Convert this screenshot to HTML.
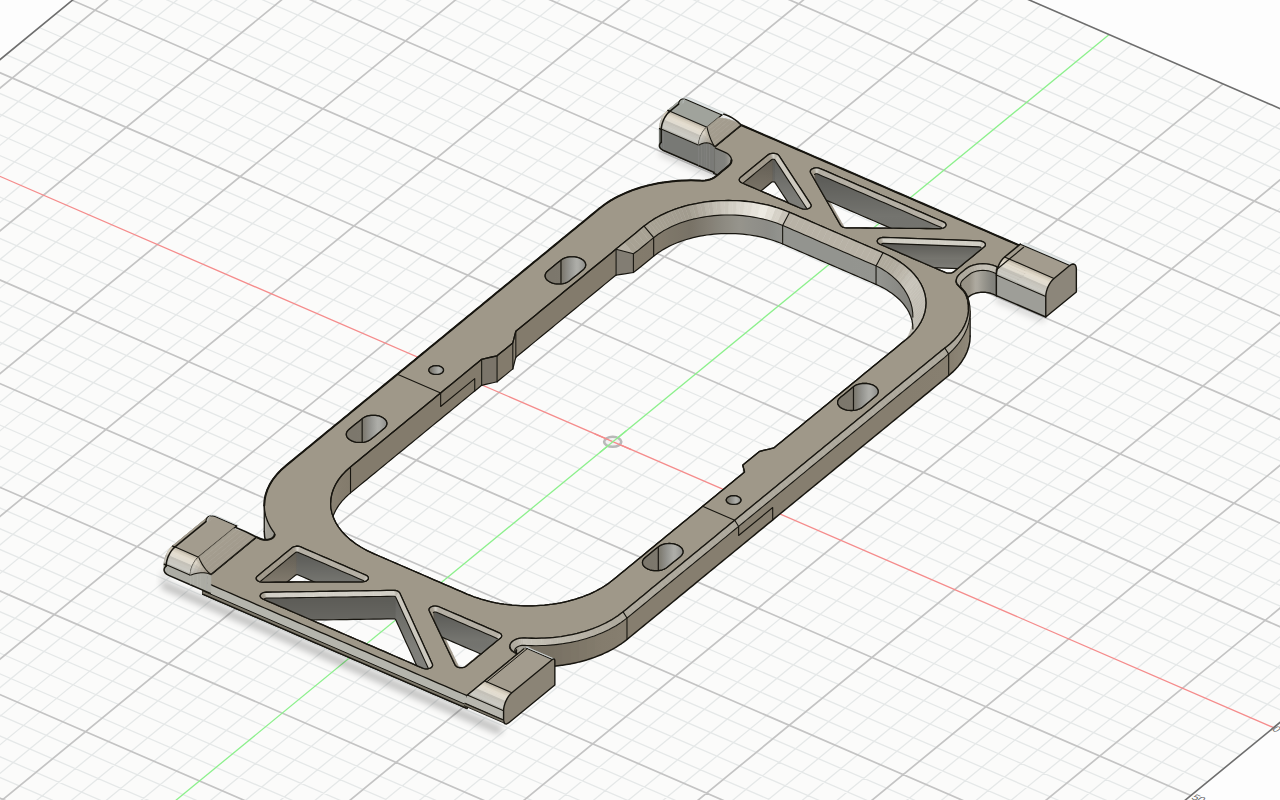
<!DOCTYPE html>
<html><head><meta charset="utf-8"><title>Viewport</title>
<style>
html,body{margin:0;padding:0;background:#fdfdfd;overflow:hidden}
body{width:1280px;height:800px;position:relative;font-family:"Liberation Sans",sans-serif}
svg{position:absolute;left:0;top:0;display:block}
</style></head><body>
<svg width="1280" height="800" viewBox="0 0 1280 800">
<polygon points="-605.92,556.71 760.88,1148.31 1769.82,320.54 403.02,-271.06" fill="#fbfbfa"/>
<path d="M-560.36,576.43 L448.58,-251.34 M-537.58,586.29 L471.36,-241.48 M-514.80,596.15 L494.14,-231.62 M-492.02,606.01 L516.92,-221.76 M-446.46,625.73 L562.48,-202.04 M-423.68,635.59 L585.26,-192.18 M-400.90,645.45 L608.04,-182.32 M-378.12,655.31 L630.82,-172.46 M-332.56,675.03 L676.38,-152.74 M-309.78,684.89 L699.16,-142.88 M-287.00,694.75 L721.94,-133.02 M-264.22,704.61 L744.72,-123.16 M-218.66,724.33 L790.28,-103.44 M-195.88,734.19 L813.06,-93.58 M-173.10,744.05 L835.84,-83.72 M-150.32,753.91 L858.62,-73.86 M-104.76,773.63 L904.18,-54.14 M-81.98,783.49 L926.96,-44.28 M-59.20,793.35 L949.74,-34.42 M-36.42,803.21 L972.52,-24.56 M9.14,822.93 L1018.08,-4.84 M31.92,832.79 L1040.86,5.02 M54.70,842.65 L1063.64,14.88 M77.48,852.51 L1086.42,24.74 M123.04,872.23 L1131.98,44.46 M145.82,882.09 L1154.76,54.32 M168.60,891.95 L1177.54,64.18 M191.38,901.81 L1200.32,74.04 M236.94,921.53 L1245.88,93.76 M259.72,931.39 L1268.66,103.62 M282.50,941.25 L1291.44,113.48 M305.28,951.11 L1314.22,123.34 M350.84,970.83 L1359.78,143.06 M373.62,980.69 L1382.56,152.92 M396.40,990.55 L1405.34,162.78 M419.18,1000.41 L1428.12,172.64 M464.74,1020.13 L1473.68,192.36 M487.52,1029.99 L1496.46,202.22 M510.30,1039.85 L1519.24,212.08 M533.08,1049.71 L1542.02,221.94 M578.64,1069.43 L1587.58,241.66 M601.42,1079.29 L1610.36,251.52 M624.20,1089.15 L1633.14,261.38 M646.98,1099.01 L1655.92,271.24 M692.54,1118.73 L1701.48,290.96 M715.32,1128.59 L1724.26,300.82 M738.10,1138.45 L1747.04,310.68 M-572.84,529.57 L793.96,1121.17 M-556.30,516.00 L810.50,1107.60 M-539.76,502.43 L827.04,1094.03 M-523.22,488.86 L843.58,1080.46 M-490.14,461.72 L876.66,1053.32 M-473.60,448.15 L893.20,1039.75 M-457.06,434.58 L909.74,1026.18 M-440.52,421.01 L926.28,1012.61 M-407.44,393.87 L959.36,985.47 M-390.90,380.30 L975.90,971.90 M-374.36,366.73 L992.44,958.33 M-357.82,353.16 L1008.98,944.76 M-324.74,326.02 L1042.06,917.62 M-308.20,312.45 L1058.60,904.05 M-291.66,298.88 L1075.14,890.48 M-275.12,285.31 L1091.68,876.91 M-242.04,258.17 L1124.76,849.77 M-225.50,244.60 L1141.30,836.20 M-208.96,231.03 L1157.84,822.63 M-192.42,217.46 L1174.38,809.06 M-159.34,190.32 L1207.46,781.92 M-142.80,176.75 L1224.00,768.35 M-126.26,163.18 L1240.54,754.78 M-109.72,149.61 L1257.08,741.21 M-76.64,122.47 L1290.16,714.07 M-60.10,108.90 L1306.70,700.50 M-43.56,95.33 L1323.24,686.93 M-27.02,81.76 L1339.78,673.36 M6.06,54.62 L1372.86,646.22 M22.60,41.05 L1389.40,632.65 M39.14,27.48 L1405.94,619.08 M55.68,13.91 L1422.48,605.51 M88.76,-13.23 L1455.56,578.37 M105.30,-26.80 L1472.10,564.80 M121.84,-40.37 L1488.64,551.23 M138.38,-53.94 L1505.18,537.66 M171.46,-81.08 L1538.26,510.52 M188.00,-94.65 L1554.80,496.95 M204.54,-108.22 L1571.34,483.38 M221.08,-121.79 L1587.88,469.81 M254.16,-148.93 L1620.96,442.67 M270.70,-162.50 L1637.50,429.10 M287.24,-176.07 L1654.04,415.53 M303.78,-189.64 L1670.58,401.96 M336.86,-216.78 L1703.66,374.82 M353.40,-230.35 L1720.20,361.25 M369.94,-243.92 L1736.74,347.68 M386.48,-257.49 L1753.28,334.11" stroke="#e5e8e8" stroke-width="1.3" fill="none"/>
<path d="M-583.14,566.57 L425.80,-261.20 M-469.24,615.87 L539.70,-211.90 M-355.34,665.17 L653.60,-162.60 M-241.44,714.47 L767.50,-113.30 M-127.54,763.77 L881.40,-64.00 M-13.64,813.07 L995.30,-14.70 M214.16,911.67 L1223.10,83.90 M328.06,960.97 L1337.00,133.20 M441.96,1010.27 L1450.90,182.50 M555.86,1059.57 L1564.80,231.80 M669.76,1108.87 L1678.70,281.10 M-589.38,543.14 L777.42,1134.74 M-506.68,475.29 L860.12,1066.89 M-423.98,407.44 L942.82,999.04 M-341.28,339.59 L1025.52,931.19 M-258.58,271.74 L1108.22,863.34 M-175.88,203.89 L1190.92,795.49 M-10.48,68.19 L1356.32,659.79 M72.22,0.34 L1439.02,591.94 M154.92,-67.51 L1521.72,524.09 M237.62,-135.36 L1604.42,456.24 M320.32,-203.21 L1687.12,388.39" stroke="#c4c4c4" stroke-width="1.7" fill="none"/>
<path d="M-93.18,136.04 L1273.62,727.64" stroke="#f58c8c" stroke-width="1.3" fill="none"/>
<path d="M100.26,862.37 L1109.20,34.60" stroke="#8cf08c" stroke-width="1.3" fill="none"/>
<polygon points="-605.92,556.71 760.88,1148.31 1769.82,320.54 403.02,-271.06" fill="none" stroke="#6e6e6e" stroke-width="1.6"/>
<ellipse cx="612.7" cy="441.8" rx="8.6" ry="5.0" fill="#f2f2f2" stroke="#b9b9b9" stroke-width="2.6"/>
<path d="M594.78,433.81 L631.22,449.59" stroke="#f58c8c" stroke-width="1.3"/>
<path d="M599.77,452.56 L626.23,430.84" stroke="#8cf08c" stroke-width="1.3"/>
<text transform="matrix(0.918 0.397 0.773 -0.634 1271.2 730.3) scale(1,-1)" font-family="Liberation Sans, sans-serif" font-size="10.5" fill="#6a6a6a">0</text>
<text transform="matrix(0.918 0.397 0.773 -0.634 1190.5 798.5) scale(1,-1)" font-family="Liberation Sans, sans-serif" font-size="10.5" fill="#6a6a6a">50</text>
<defs><filter id="blur" x="-20%" y="-50%" width="140%" height="200%"><feGaussianBlur stdDeviation="3.2"/></filter></defs>
<path d="M165.3,585.6 L497.9,729.6" stroke="#000" stroke-opacity="0.22" stroke-width="9" stroke-linecap="round" filter="url(#blur)" fill="none"/>
<path d="M662.3,153.0 L730.6,182.6" stroke="#000" stroke-opacity="0.14" stroke-width="7" stroke-linecap="round" filter="url(#blur)" fill="none"/>
<path d="M998.6,299.6 L1041.9,318.4" stroke="#000" stroke-opacity="0.14" stroke-width="7" stroke-linecap="round" filter="url(#blur)" fill="none"/>
<path d="M162.6,577.3 L192.4,552.8" stroke="#000" stroke-opacity="0.10" stroke-width="7" stroke-linecap="round" filter="url(#blur)" fill="none"/>
<defs><linearGradient id="vs" x1="0" y1="0" x2="0" y2="1"><stop offset="0" stop-color="#000" stop-opacity="0.24"/><stop offset="0.55" stop-color="#000" stop-opacity="0.02"/><stop offset="1" stop-color="#fff" stop-opacity="0.14"/></linearGradient>
<linearGradient id="g1" gradientUnits="userSpaceOnUse" x1="466.8" y1="0" x2="520.5" y2="0"><stop offset="0.000" stop-color="#b5b5ad"/><stop offset="0.233" stop-color="#969185"/><stop offset="0.462" stop-color="#969185"/><stop offset="0.691" stop-color="#969185"/><stop offset="0.920" stop-color="#969185"/><stop offset="1.000" stop-color="#969184"/></linearGradient>
<linearGradient id="g2" gradientUnits="userSpaceOnUse" x1="514.7" y1="0" x2="970.2" y2="0"><stop offset="0.000" stop-color="#968f81"/><stop offset="0.000" stop-color="#969082"/><stop offset="0.001" stop-color="#969083"/><stop offset="0.002" stop-color="#969084"/><stop offset="0.004" stop-color="#969185"/><stop offset="0.005" stop-color="#9d988c"/><stop offset="0.008" stop-color="#a4a095"/><stop offset="0.010" stop-color="#aca89d"/><stop offset="0.013" stop-color="#aca99f"/><stop offset="0.016" stop-color="#a5a298"/><stop offset="0.019" stop-color="#9d9a92"/><stop offset="0.022" stop-color="#97958d"/><stop offset="0.026" stop-color="#95948c"/><stop offset="0.027" stop-color="#96948c"/><stop offset="0.028" stop-color="#98968e"/><stop offset="0.028" stop-color="#99978f"/><stop offset="0.037" stop-color="#777063"/><stop offset="0.047" stop-color="#766f62"/><stop offset="0.066" stop-color="#777063"/><stop offset="0.085" stop-color="#787163"/><stop offset="0.086" stop-color="#797164"/><stop offset="0.086" stop-color="#797264"/><stop offset="0.104" stop-color="#7a7265"/><stop offset="0.105" stop-color="#7b7366"/><stop offset="0.105" stop-color="#7b7466"/><stop offset="0.123" stop-color="#7c7466"/><stop offset="0.123" stop-color="#7d7567"/><stop offset="0.132" stop-color="#7d7667"/><stop offset="0.140" stop-color="#7d7567"/><stop offset="0.141" stop-color="#7e7668"/><stop offset="0.142" stop-color="#7f7769"/><stop offset="0.158" stop-color="#7f7869"/><stop offset="0.159" stop-color="#80796a"/><stop offset="0.159" stop-color="#81796a"/><stop offset="0.175" stop-color="#817a6b"/><stop offset="0.176" stop-color="#827a6c"/><stop offset="0.176" stop-color="#837b6c"/><stop offset="0.192" stop-color="#847c6d"/><stop offset="0.222" stop-color="#857d6e"/><stop offset="0.235" stop-color="#867e6f"/><stop offset="0.437" stop-color="#867e6f"/><stop offset="0.645" stop-color="#867e6f"/><stop offset="0.853" stop-color="#867e6f"/><stop offset="0.953" stop-color="#877f70"/><stop offset="0.964" stop-color="#888071"/><stop offset="0.964" stop-color="#898172"/><stop offset="0.973" stop-color="#8a8273"/><stop offset="0.973" stop-color="#8a8374"/><stop offset="0.981" stop-color="#8b8374"/><stop offset="0.981" stop-color="#8c8475"/><stop offset="0.981" stop-color="#8c8576"/><stop offset="0.988" stop-color="#8d8576"/><stop offset="0.988" stop-color="#8e8677"/><stop offset="0.988" stop-color="#8e8778"/><stop offset="0.993" stop-color="#8f8778"/><stop offset="0.993" stop-color="#8f8879"/><stop offset="0.993" stop-color="#90897a"/><stop offset="0.997" stop-color="#918a7b"/><stop offset="0.997" stop-color="#928a7b"/><stop offset="0.999" stop-color="#928b7c"/><stop offset="0.999" stop-color="#938c7d"/><stop offset="0.999" stop-color="#948c7d"/><stop offset="1.000" stop-color="#938c7d"/><stop offset="1.000" stop-color="#948c7d"/><stop offset="1.000" stop-color="#948d7e"/></linearGradient>
<linearGradient id="g3" gradientUnits="userSpaceOnUse" x1="960.5" y1="0" x2="997.5" y2="0"><stop offset="0.000" stop-color="#968f81"/><stop offset="0.004" stop-color="#969081"/><stop offset="0.020" stop-color="#969083"/><stop offset="0.048" stop-color="#969184"/><stop offset="0.087" stop-color="#969185"/><stop offset="0.239" stop-color="#989387"/><stop offset="0.285" stop-color="#9e998e"/><stop offset="0.340" stop-color="#a6a196"/><stop offset="0.401" stop-color="#ada99f"/><stop offset="0.467" stop-color="#aba79e"/><stop offset="0.537" stop-color="#a3a097"/><stop offset="0.608" stop-color="#9b9990"/><stop offset="0.680" stop-color="#94928a"/><stop offset="0.750" stop-color="#8d8c85"/><stop offset="0.816" stop-color="#878680"/><stop offset="0.877" stop-color="#82827c"/><stop offset="0.986" stop-color="#82817c"/><stop offset="1.000" stop-color="#83837e"/></linearGradient>
<linearGradient id="g4" gradientUnits="userSpaceOnUse" x1="997.5" y1="0" x2="1024.7" y2="0"><stop offset="0.000" stop-color="#9a9589"/><stop offset="0.015" stop-color="#989387"/><stop offset="0.154" stop-color="#969185"/><stop offset="0.432" stop-color="#969185"/><stop offset="0.710" stop-color="#969185"/><stop offset="0.988" stop-color="#969185"/><stop offset="1.000" stop-color="#969184"/></linearGradient>
<linearGradient id="g5" gradientUnits="userSpaceOnUse" x1="713.9" y1="0" x2="731.5" y2="0"><stop offset="0.000" stop-color="#7f807b"/><stop offset="0.315" stop-color="#81817d"/><stop offset="0.604" stop-color="#82837e"/><stop offset="0.719" stop-color="#8a8984"/><stop offset="0.817" stop-color="#94938c"/><stop offset="0.895" stop-color="#999891"/><stop offset="0.953" stop-color="#9d9c94"/><stop offset="0.988" stop-color="#a1a098"/><stop offset="1.000" stop-color="#a3a29a"/></linearGradient>
<linearGradient id="g6" gradientUnits="userSpaceOnUse" x1="264.3" y1="0" x2="274.6" y2="0"><stop offset="0.000" stop-color="#afaca4"/><stop offset="0.032" stop-color="#aeaba3"/><stop offset="0.035" stop-color="#aca9a1"/><stop offset="0.037" stop-color="#aba8a0"/><stop offset="0.131" stop-color="#aaa79f"/><stop offset="0.137" stop-color="#a8a59d"/><stop offset="0.140" stop-color="#a7a49b"/><stop offset="0.297" stop-color="#a6a39a"/><stop offset="0.305" stop-color="#a4a198"/><stop offset="0.309" stop-color="#a3a097"/><stop offset="0.523" stop-color="#a3a097"/><stop offset="0.527" stop-color="#a29f96"/><stop offset="0.538" stop-color="#a09d94"/><stop offset="0.543" stop-color="#9f9c92"/><stop offset="0.793" stop-color="#9c9b94"/><stop offset="0.821" stop-color="#9c9a93"/><stop offset="0.834" stop-color="#9b9992"/><stop offset="0.840" stop-color="#9a9992"/><stop offset="0.921" stop-color="#9b9a93"/><stop offset="0.967" stop-color="#9e9d95"/><stop offset="0.994" stop-color="#a2a099"/><stop offset="1.000" stop-color="#a4a29b"/></linearGradient>
<clipPath id="c1"><path d="M373.61,553.62 L379.10,556.00 L384.60,558.38 L390.09,560.76 L395.59,563.13 L401.08,565.51 L406.57,567.89 L412.07,570.27 L417.56,572.65 L423.06,575.02 L428.55,577.40 L434.04,579.78 L439.54,582.16 L445.03,584.54 L450.53,586.91 L456.02,589.29 L461.51,591.67 L467.01,594.05 L470.41,595.40 L473.81,596.76 L477.38,597.95 L480.95,599.14 L484.66,600.16 L488.38,601.18 L492.21,602.02 L496.05,602.86 L499.99,603.53 L503.92,604.19 L507.93,604.66 L511.94,605.14 L516.00,605.42 L520.07,605.71 L524.15,605.81 L528.24,605.90 L532.32,605.81 L536.41,605.71 L540.47,605.43 L544.53,605.14 L548.54,604.66 L552.55,604.19 L556.49,603.53 L560.42,602.87 L564.26,602.02 L568.10,601.18 L571.81,600.16 L575.52,599.14 L579.09,597.95 L582.66,596.76 L586.06,595.40 L589.46,594.05 L592.67,592.54 L595.88,591.03 L598.88,589.38 L601.88,587.73 L604.66,585.94 L607.43,584.15 L609.96,582.23 L612.49,580.32 L616.62,576.94 L620.74,573.55 L624.87,570.17 L628.99,566.78 L633.12,563.40 L637.24,560.01 L641.37,556.63 L645.50,553.24 L649.62,549.86 L653.75,546.47 L657.87,543.09 L662.00,539.71 L666.12,536.32 L670.25,532.94 L674.37,529.55 L678.50,526.17 L682.62,522.78 L686.75,519.40 L690.88,516.01 L695.00,512.63 L699.13,509.24 L703.25,505.86 L707.38,502.47 L711.50,499.09 L715.63,495.70 L719.75,492.32 L723.88,488.94 L728.00,485.55 L732.13,482.17 L736.25,478.78 L740.38,475.40 L744.51,472.01 L743.67,468.56 L742.84,465.10 L746.21,462.33 L749.59,459.57 L752.96,456.80 L756.33,454.03 L759.71,451.26 L764.40,450.17 L769.10,449.08 L773.79,447.99 L777.92,444.59 L782.06,441.20 L786.19,437.81 L790.33,434.42 L794.46,431.03 L798.59,427.64 L802.73,424.24 L806.86,420.85 L811.00,417.46 L815.13,414.07 L819.26,410.68 L823.40,407.29 L827.53,403.89 L831.67,400.50 L835.80,397.11 L839.93,393.72 L844.07,390.33 L848.20,386.94 L852.34,383.54 L856.47,380.15 L860.60,376.76 L864.74,373.37 L868.87,369.98 L873.01,366.59 L877.14,363.19 L881.27,359.80 L885.41,356.41 L889.54,353.02 L893.68,349.63 L897.81,346.24 L901.94,342.85 L906.08,339.45 L908.35,337.43 L910.62,335.40 L912.62,333.28 L914.61,331.15 L916.32,328.94 L918.03,326.72 L919.45,324.44 L920.86,322.15 L921.97,319.81 L923.08,317.46 L923.88,315.07 L924.67,312.68 L925.15,310.26 L925.63,307.84 L925.79,305.41 L925.95,302.97 L925.79,300.54 L925.63,298.10 L925.15,295.68 L924.66,293.27 L923.86,290.88 L923.07,288.49 L921.95,286.14 L920.84,283.80 L919.43,281.51 L918.01,279.22 L916.30,277.01 L914.58,274.80 L912.58,272.67 L910.59,270.55 L908.31,268.52 L906.04,266.49 L903.51,264.58 L900.97,262.67 L898.20,260.88 L895.42,259.09 L892.42,257.43 L889.41,255.78 L886.20,254.27 L882.99,252.76 L877.50,250.38 L872.00,248.01 L866.51,245.63 L861.01,243.25 L855.52,240.87 L850.03,238.49 L844.53,236.12 L839.04,233.74 L833.54,231.36 L828.05,228.98 L822.56,226.60 L817.06,224.23 L811.57,221.85 L806.07,219.47 L800.58,217.09 L795.09,214.71 L789.59,212.34 L786.19,210.98 L782.79,209.63 L779.22,208.44 L775.65,207.25 L771.94,206.23 L768.22,205.21 L764.39,204.36 L760.55,203.52 L756.61,202.86 L752.68,202.20 L748.67,201.72 L744.66,201.25 L740.59,200.96 L736.53,200.67 L732.45,200.58 L728.36,200.48 L724.28,200.58 L720.19,200.67 L716.13,200.96 L712.07,201.25 L708.06,201.72 L704.05,202.20 L700.11,202.86 L696.18,203.52 L692.34,204.36 L688.50,205.21 L684.79,206.23 L681.08,207.25 L677.51,208.44 L673.94,209.63 L670.54,210.98 L667.14,212.33 L663.93,213.84 L660.72,215.35 L657.72,217.00 L654.72,218.66 L651.94,220.45 L649.17,222.24 L646.64,224.15 L644.11,226.06 L640.10,229.35 L636.09,232.64 L632.08,235.93 L628.07,239.22 L624.06,242.51 L620.05,245.80 L616.04,249.09 L612.03,252.38 L608.02,255.67 L604.01,258.96 L600.00,262.25 L595.99,265.54 L591.98,268.83 L587.97,272.12 L583.96,275.41 L579.95,278.70 L575.94,281.99 L571.94,285.28 L567.93,288.57 L563.92,291.86 L559.91,295.14 L555.90,298.43 L551.89,301.72 L547.88,305.01 L543.87,308.30 L539.86,311.59 L535.85,314.88 L531.84,318.17 L527.83,321.46 L523.82,324.75 L519.81,328.04 L515.80,331.33 L514.80,335.20 L513.79,339.07 L512.79,342.94 L508.86,346.16 L504.93,349.38 L501.01,352.60 L497.08,355.83 L491.93,357.00 L486.78,358.18 L481.64,359.36 L477.54,362.72 L473.44,366.08 L469.34,369.45 L465.25,372.81 L461.15,376.17 L457.05,379.53 L452.95,382.89 L448.86,386.25 L444.76,389.62 L440.66,392.98 L436.56,396.34 L432.47,399.70 L428.37,403.06 L424.27,406.42 L420.18,409.78 L416.08,413.15 L411.98,416.51 L407.88,419.87 L403.79,423.23 L399.69,426.59 L395.59,429.95 L391.49,433.32 L387.40,436.68 L383.30,440.04 L379.20,443.40 L375.11,446.76 L371.01,450.12 L366.91,453.48 L362.81,456.85 L358.72,460.21 L354.62,463.57 L350.52,466.93 L348.25,468.96 L345.98,470.98 L343.98,473.11 L341.99,475.23 L340.28,477.45 L338.56,479.66 L337.15,481.95 L335.74,484.23 L334.63,486.58 L333.52,488.92 L332.72,491.31 L331.93,493.70 L331.45,496.12 L330.97,498.54 L330.81,500.98 L330.65,503.41 L330.81,505.85 L330.97,508.28 L331.45,510.70 L331.94,513.12 L332.73,515.51 L333.53,517.90 L334.64,520.24 L335.76,522.59 L337.17,524.88 L338.59,527.16 L340.30,529.37 L342.02,531.59 L344.01,533.71 L346.01,535.84 L348.29,537.87 L350.56,539.89 L353.09,541.80 L355.62,543.72 L358.40,545.51 L361.18,547.30 L364.18,548.95 L367.19,550.60 L370.40,552.11 Z"/></clipPath>
<linearGradient id="g7" gradientUnits="userSpaceOnUse" x1="633.4" y1="0" x2="912.9" y2="0"><stop offset="0.000" stop-color="#827a6c"/><stop offset="0.015" stop-color="#837b6c"/><stop offset="0.081" stop-color="#827a6c"/><stop offset="0.089" stop-color="#817a6b"/><stop offset="0.097" stop-color="#81796b"/><stop offset="0.106" stop-color="#80786a"/><stop offset="0.116" stop-color="#7f786a"/><stop offset="0.125" stop-color="#7e7769"/><stop offset="0.135" stop-color="#7d7669"/><stop offset="0.146" stop-color="#7c7668"/><stop offset="0.156" stop-color="#7c7568"/><stop offset="0.167" stop-color="#7b7467"/><stop offset="0.179" stop-color="#7a7467"/><stop offset="0.190" stop-color="#797367"/><stop offset="0.202" stop-color="#787266"/><stop offset="0.213" stop-color="#7a7468"/><stop offset="0.226" stop-color="#7c766b"/><stop offset="0.238" stop-color="#7e796e"/><stop offset="0.250" stop-color="#807b70"/><stop offset="0.263" stop-color="#837e73"/><stop offset="0.275" stop-color="#858076"/><stop offset="0.288" stop-color="#878379"/><stop offset="0.301" stop-color="#89867c"/><stop offset="0.314" stop-color="#8b887f"/><stop offset="0.327" stop-color="#8e8b82"/><stop offset="0.340" stop-color="#908d84"/><stop offset="0.353" stop-color="#929087"/><stop offset="0.366" stop-color="#94928a"/><stop offset="0.379" stop-color="#96948c"/><stop offset="0.391" stop-color="#95938b"/><stop offset="0.404" stop-color="#93928b"/><stop offset="0.417" stop-color="#92918a"/><stop offset="0.429" stop-color="#91908a"/><stop offset="0.442" stop-color="#908f89"/><stop offset="0.454" stop-color="#8f8e88"/><stop offset="0.466" stop-color="#8e8d88"/><stop offset="0.478" stop-color="#8d8c87"/><stop offset="0.490" stop-color="#8d8d88"/><stop offset="0.501" stop-color="#8e8f8a"/><stop offset="0.512" stop-color="#90918c"/><stop offset="0.523" stop-color="#92928d"/><stop offset="0.534" stop-color="#92938e"/><stop offset="0.554" stop-color="#93948f"/><stop offset="0.770" stop-color="#93948f"/><stop offset="0.868" stop-color="#949590"/><stop offset="0.878" stop-color="#93948f"/><stop offset="0.888" stop-color="#92938e"/><stop offset="0.898" stop-color="#91918c"/><stop offset="0.907" stop-color="#8f908b"/><stop offset="0.916" stop-color="#8e8f8a"/><stop offset="0.925" stop-color="#8d8d88"/><stop offset="0.933" stop-color="#8c8c87"/><stop offset="0.940" stop-color="#8b8b86"/><stop offset="0.947" stop-color="#8a8a85"/><stop offset="0.954" stop-color="#898984"/><stop offset="0.961" stop-color="#898883"/><stop offset="0.967" stop-color="#888883"/><stop offset="0.972" stop-color="#878782"/><stop offset="0.977" stop-color="#878781"/><stop offset="0.981" stop-color="#868681"/><stop offset="0.986" stop-color="#868580"/><stop offset="0.989" stop-color="#85857f"/><stop offset="0.992" stop-color="#85847f"/><stop offset="0.994" stop-color="#84837e"/><stop offset="0.997" stop-color="#84837d"/><stop offset="0.998" stop-color="#83827d"/><stop offset="0.999" stop-color="#82827c"/><stop offset="1.000" stop-color="#82817b"/></linearGradient>
<linearGradient id="g8" gradientUnits="userSpaceOnUse" x1="330.6" y1="0" x2="481.6" y2="0"><stop offset="0.000" stop-color="#8b8374"/><stop offset="0.002" stop-color="#8a8374"/><stop offset="0.005" stop-color="#8a8273"/><stop offset="0.008" stop-color="#898273"/><stop offset="0.014" stop-color="#898172"/><stop offset="0.019" stop-color="#888172"/><stop offset="0.026" stop-color="#888071"/><stop offset="0.034" stop-color="#878070"/><stop offset="0.043" stop-color="#877f70"/><stop offset="0.052" stop-color="#867e6f"/><stop offset="0.075" stop-color="#857d6e"/><stop offset="0.102" stop-color="#847c6d"/><stop offset="0.132" stop-color="#837b6c"/><stop offset="0.349" stop-color="#837b6c"/><stop offset="0.566" stop-color="#837b6c"/><stop offset="0.783" stop-color="#837b6c"/><stop offset="1.000" stop-color="#837b6c"/></linearGradient>
<clipPath id="c2"><path d="M801.27,208.48 L802.67,208.93 L804.21,209.16 L805.79,209.15 L807.32,208.89 L808.69,208.42 L809.82,207.75 L810.62,206.93 L811.04,206.02 L811.06,205.07 L810.68,204.15 L808.24,200.42 L805.80,196.69 L803.36,192.96 L800.92,189.23 L798.48,185.50 L796.04,181.77 L793.60,178.04 L791.16,174.31 L788.72,170.58 L786.27,166.85 L783.83,163.12 L781.39,159.39 L778.95,155.66 L778.15,154.79 L777.00,154.09 L775.57,153.59 L773.97,153.33 L772.32,153.34 L770.73,153.61 L769.31,154.11 L768.17,154.83 L764.21,158.08 L760.25,161.33 L756.28,164.58 L752.32,167.83 L748.36,171.08 L744.39,174.33 L740.43,177.58 L739.66,178.43 L739.28,179.37 L739.33,180.33 L739.79,181.25 L740.63,182.08 L741.80,182.74 L747.21,185.08 L752.62,187.42 L758.02,189.76 L763.43,192.10 L768.83,194.44 L774.24,196.78 L779.65,199.12 L785.05,201.46 L790.46,203.80 L795.87,206.14 Z"/></clipPath>
<linearGradient id="g9" gradientUnits="userSpaceOnUse" x1="743.5" y1="0" x2="806.9" y2="0"><stop offset="0.000" stop-color="#888173"/><stop offset="0.002" stop-color="#867f71"/><stop offset="0.007" stop-color="#837c6f"/><stop offset="0.068" stop-color="#827b6e"/><stop offset="0.318" stop-color="#827b6e"/><stop offset="0.442" stop-color="#817a6d"/><stop offset="0.449" stop-color="#7d776c"/><stop offset="0.456" stop-color="#7a756b"/><stop offset="0.464" stop-color="#79766f"/><stop offset="0.473" stop-color="#787771"/><stop offset="0.481" stop-color="#777671"/><stop offset="0.488" stop-color="#767671"/><stop offset="0.494" stop-color="#7a7a75"/><stop offset="0.498" stop-color="#7e7e79"/><stop offset="0.536" stop-color="#7f7f7a"/><stop offset="0.767" stop-color="#7f7f7a"/><stop offset="0.998" stop-color="#81817b"/><stop offset="1.000" stop-color="#82827d"/></linearGradient>
<clipPath id="c3"><path d="M840.67,225.33 L841.33,226.15 L842.31,226.84 L843.54,227.37 L844.95,227.71 L846.45,227.84 L853.11,227.89 L859.77,227.94 L866.44,228.00 L873.10,228.05 L879.76,228.11 L886.42,228.16 L893.08,228.22 L899.74,228.27 L906.41,228.32 L913.07,228.38 L919.73,228.43 L926.39,228.49 L933.05,228.54 L939.72,228.60 L941.27,228.49 L942.72,228.16 L944.00,227.62 L945.00,226.91 L945.68,226.07 L945.98,225.16 L945.89,224.23 L945.41,223.34 L944.57,222.56 L943.44,221.92 L937.83,219.50 L932.23,217.07 L926.62,214.64 L921.01,212.22 L915.41,209.79 L909.80,207.36 L904.20,204.94 L898.59,202.51 L892.99,200.08 L887.38,197.66 L881.78,195.23 L876.17,192.81 L870.56,190.38 L864.96,187.95 L859.35,185.53 L853.75,183.10 L848.14,180.67 L842.54,178.25 L836.93,175.82 L831.32,173.40 L825.72,170.97 L820.11,168.54 L818.74,168.10 L817.23,167.87 L815.67,167.87 L814.16,168.10 L812.80,168.56 L811.67,169.20 L810.84,169.99 L810.38,170.88 L810.30,171.80 L810.61,172.72 L812.76,176.47 L814.91,180.23 L817.05,183.99 L819.20,187.75 L821.35,191.51 L823.49,195.27 L825.64,199.02 L827.79,202.78 L829.93,206.54 L832.08,210.30 L834.23,214.06 L836.38,217.82 L838.52,221.58 Z"/></clipPath>
<linearGradient id="g10" gradientUnits="userSpaceOnUse" x1="814.5" y1="0" x2="941.8" y2="0"><stop offset="0.000" stop-color="#8a8375"/><stop offset="0.000" stop-color="#888173"/><stop offset="0.001" stop-color="#857e70"/><stop offset="0.003" stop-color="#817a6d"/><stop offset="0.006" stop-color="#7c776b"/><stop offset="0.010" stop-color="#7a756c"/><stop offset="0.013" stop-color="#79766f"/><stop offset="0.017" stop-color="#787771"/><stop offset="0.021" stop-color="#777671"/><stop offset="0.025" stop-color="#767671"/><stop offset="0.245" stop-color="#767671"/><stop offset="0.465" stop-color="#767671"/><stop offset="0.685" stop-color="#767671"/><stop offset="0.906" stop-color="#767671"/><stop offset="0.996" stop-color="#797974"/><stop offset="0.999" stop-color="#7e7e79"/><stop offset="1.000" stop-color="#84847e"/><stop offset="1.000" stop-color="#888781"/></linearGradient>
<clipPath id="c4"><path d="M945.27,272.47 L946.69,272.93 L948.27,273.15 L949.88,273.13 L951.43,272.85 L952.81,272.35 L953.92,271.65 L957.70,268.55 L961.49,265.44 L965.27,262.34 L969.05,259.24 L972.83,256.14 L976.61,253.03 L980.40,249.93 L984.18,246.83 L984.96,245.96 L985.33,245.00 L985.27,244.02 L984.77,243.08 L983.87,242.26 L982.64,241.60 L981.16,241.17 L979.55,240.97 L972.71,240.72 L965.87,240.47 L959.03,240.22 L952.19,239.97 L945.35,239.72 L938.52,239.47 L931.68,239.21 L924.84,238.96 L918.00,238.71 L911.16,238.46 L904.32,238.21 L897.49,237.96 L890.65,237.71 L883.81,237.45 L882.22,237.52 L880.72,237.82 L879.39,238.34 L878.33,239.05 L877.60,239.89 L877.26,240.82 L877.33,241.76 L877.79,242.67 L878.63,243.47 L879.79,244.12 L885.25,246.49 L890.70,248.85 L896.16,251.21 L901.62,253.57 L907.07,255.93 L912.53,258.29 L917.99,260.66 L923.45,263.02 L928.90,265.38 L934.36,267.74 L939.82,270.10 Z"/></clipPath>
<linearGradient id="g11" gradientUnits="userSpaceOnUse" x1="881.5" y1="0" x2="981.1" y2="0"><stop offset="0.000" stop-color="#888173"/><stop offset="0.001" stop-color="#867f71"/><stop offset="0.003" stop-color="#827b6e"/><stop offset="0.007" stop-color="#7e786c"/><stop offset="0.011" stop-color="#7a756b"/><stop offset="0.016" stop-color="#79766e"/><stop offset="0.022" stop-color="#787771"/><stop offset="0.227" stop-color="#787771"/><stop offset="0.433" stop-color="#787771"/><stop offset="0.638" stop-color="#787771"/><stop offset="0.844" stop-color="#787771"/><stop offset="0.987" stop-color="#777771"/><stop offset="0.991" stop-color="#767671"/><stop offset="0.995" stop-color="#797974"/><stop offset="0.998" stop-color="#7e7e79"/><stop offset="1.000" stop-color="#85847f"/><stop offset="1.000" stop-color="#888782"/></linearGradient>
<clipPath id="c5"><path d="M257.37,576.19 L256.57,577.08 L256.21,578.07 L256.31,579.08 L256.87,580.04 L257.85,580.87 L259.16,581.51 L260.72,581.91 L262.41,582.05 L269.06,582.03 L275.71,582.01 L282.36,582.00 L289.02,581.98 L295.67,581.96 L302.32,581.94 L308.97,581.93 L315.62,581.91 L322.27,581.89 L328.92,581.87 L335.57,581.86 L342.23,581.84 L348.88,581.82 L355.53,581.80 L362.18,581.79 L363.72,581.67 L365.16,581.32 L366.41,580.78 L367.39,580.07 L368.05,579.23 L368.33,578.32 L368.23,577.40 L367.75,576.52 L366.92,575.74 L365.79,575.11 L360.36,572.76 L354.94,570.42 L349.51,568.07 L344.09,565.72 L338.66,563.37 L333.24,561.02 L327.81,558.67 L322.39,556.33 L316.96,553.98 L311.54,551.63 L306.11,549.28 L300.68,546.93 L299.26,546.47 L297.69,546.25 L296.08,546.27 L294.53,546.55 L293.15,547.05 L292.03,547.75 L288.18,550.91 L284.33,554.07 L280.48,557.23 L276.63,560.39 L272.78,563.55 L268.92,566.71 L265.07,569.87 L261.22,573.03 Z"/></clipPath>
<linearGradient id="g12" gradientUnits="userSpaceOnUse" x1="260.4" y1="0" x2="364.1" y2="0"><stop offset="0.000" stop-color="#888173"/><stop offset="0.001" stop-color="#867f71"/><stop offset="0.004" stop-color="#837c6f"/><stop offset="0.041" stop-color="#827b6e"/><stop offset="0.264" stop-color="#827b6e"/><stop offset="0.337" stop-color="#817a6d"/><stop offset="0.341" stop-color="#7d786c"/><stop offset="0.345" stop-color="#7a756b"/><stop offset="0.350" stop-color="#79766f"/><stop offset="0.355" stop-color="#787771"/><stop offset="0.360" stop-color="#777671"/><stop offset="0.365" stop-color="#767671"/><stop offset="0.574" stop-color="#767671"/><stop offset="0.783" stop-color="#767671"/><stop offset="0.991" stop-color="#767671"/><stop offset="0.996" stop-color="#797974"/><stop offset="0.998" stop-color="#7e7e79"/><stop offset="1.000" stop-color="#84847e"/><stop offset="1.000" stop-color="#878781"/></linearGradient>
<clipPath id="c6"><path d="M422.75,668.17 L424.24,668.65 L425.89,668.86 L427.58,668.81 L429.18,668.48 L430.57,667.91 L431.65,667.13 L432.33,666.21 L432.58,665.21 L432.36,664.21 L430.55,660.26 L428.74,656.31 L426.93,652.36 L425.12,648.41 L423.31,644.46 L421.50,640.51 L419.69,636.56 L417.88,632.61 L416.07,628.65 L414.26,624.70 L412.45,620.75 L410.64,616.80 L408.82,612.85 L407.01,608.90 L405.20,604.95 L403.39,601.00 L401.58,597.04 L399.77,593.09 L399.13,592.19 L398.12,591.42 L396.80,590.84 L395.28,590.48 L393.64,590.38 L386.94,590.47 L380.23,590.57 L373.52,590.67 L366.82,590.77 L360.11,590.86 L353.40,590.96 L346.70,591.06 L339.99,591.16 L333.28,591.26 L326.58,591.35 L319.87,591.45 L313.16,591.55 L306.46,591.65 L299.75,591.75 L293.04,591.84 L286.33,591.94 L279.63,592.04 L272.92,592.14 L266.21,592.24 L264.69,592.37 L263.28,592.73 L262.05,593.28 L261.09,593.99 L260.45,594.83 L260.18,595.73 L260.29,596.64 L260.78,597.51 L261.61,598.28 L262.73,598.91 L268.25,601.30 L273.76,603.69 L279.28,606.07 L284.80,608.46 L290.32,610.85 L295.84,613.24 L301.35,615.63 L306.87,618.02 L312.39,620.40 L317.91,622.79 L323.43,625.18 L328.94,627.57 L334.46,629.96 L339.98,632.35 L345.50,634.73 L351.01,637.12 L356.53,639.51 L362.05,641.90 L367.57,644.29 L373.09,646.68 L378.60,649.06 L384.12,651.45 L389.64,653.84 L395.16,656.23 L400.67,658.62 L406.19,661.01 L411.71,663.39 L417.23,665.78 Z"/></clipPath>
<linearGradient id="g13" gradientUnits="userSpaceOnUse" x1="264.4" y1="0" x2="428.4" y2="0"><stop offset="0.000" stop-color="#888173"/><stop offset="0.001" stop-color="#878072"/><stop offset="0.002" stop-color="#837c6f"/><stop offset="0.004" stop-color="#7f796c"/><stop offset="0.006" stop-color="#7a756a"/><stop offset="0.009" stop-color="#79766d"/><stop offset="0.012" stop-color="#787770"/><stop offset="0.053" stop-color="#787771"/><stop offset="0.257" stop-color="#787771"/><stop offset="0.462" stop-color="#787771"/><stop offset="0.666" stop-color="#787771"/><stop offset="0.792" stop-color="#777771"/><stop offset="0.795" stop-color="#777671"/><stop offset="0.798" stop-color="#777772"/><stop offset="0.800" stop-color="#7c7c77"/><stop offset="0.801" stop-color="#81807b"/><stop offset="0.812" stop-color="#82827d"/><stop offset="0.823" stop-color="#82827c"/><stop offset="0.999" stop-color="#84837e"/><stop offset="1.000" stop-color="#85857f"/></linearGradient>
<clipPath id="c7"><path d="M455.14,665.00 L455.74,665.84 L456.67,666.57 L457.87,667.14 L459.27,667.51 L460.78,667.67 L462.31,667.61 L463.77,667.32 L465.06,666.82 L466.11,666.16 L469.93,663.02 L473.75,659.89 L477.56,656.76 L481.38,653.63 L485.20,650.50 L489.02,647.36 L492.84,644.23 L496.65,641.10 L500.47,637.97 L501.24,637.12 L501.62,636.18 L501.58,635.22 L501.12,634.30 L500.27,633.48 L499.10,632.81 L493.62,630.44 L488.15,628.07 L482.67,625.70 L477.20,623.33 L471.72,620.96 L466.25,618.59 L460.77,616.22 L455.30,613.85 L449.82,611.48 L444.35,609.11 L438.87,606.74 L437.37,606.27 L435.71,606.05 L434.02,606.11 L432.41,606.44 L431.02,607.02 L429.95,607.80 L429.27,608.73 L429.04,609.73 L429.27,610.74 L431.12,614.61 L432.97,618.49 L434.82,622.36 L436.66,626.24 L438.51,630.11 L440.36,633.99 L442.21,637.87 L444.06,641.74 L445.90,645.62 L447.75,649.49 L449.60,653.37 L451.45,657.24 L453.29,661.12 Z"/></clipPath>
<linearGradient id="g14" gradientUnits="userSpaceOnUse" x1="433.3" y1="0" x2="497.4" y2="0"><stop offset="0.000" stop-color="#898274"/><stop offset="0.001" stop-color="#878072"/><stop offset="0.005" stop-color="#837c6f"/><stop offset="0.010" stop-color="#7e786c"/><stop offset="0.017" stop-color="#7a756a"/><stop offset="0.025" stop-color="#79766e"/><stop offset="0.033" stop-color="#787771"/><stop offset="0.041" stop-color="#777671"/><stop offset="0.050" stop-color="#767671"/><stop offset="0.305" stop-color="#767671"/><stop offset="0.561" stop-color="#767671"/><stop offset="0.817" stop-color="#767671"/><stop offset="0.993" stop-color="#797974"/><stop offset="0.998" stop-color="#7e7e79"/><stop offset="1.000" stop-color="#85847f"/><stop offset="1.000" stop-color="#898882"/></linearGradient>
<clipPath id="c8"><path d="M348.93,429.55 L347.81,430.64 L346.99,431.82 L346.49,433.06 L346.33,434.33 L346.49,435.61 L347.00,436.85 L347.82,438.03 L348.94,439.12 L350.33,440.09 L351.96,440.92 L353.78,441.58 L355.76,442.07 L357.85,442.37 L359.98,442.47 L362.12,442.37 L364.20,442.07 L366.18,441.58 L368.01,440.92 L369.64,440.09 L371.03,439.12 L374.34,436.40 L377.64,433.69 L380.95,430.97 L384.26,428.26 L385.38,427.17 L386.20,425.99 L386.70,424.75 L386.86,423.48 L386.70,422.21 L386.20,420.96 L385.37,419.78 L384.25,418.70 L382.86,417.73 L381.23,416.90 L379.41,416.23 L377.43,415.74 L375.34,415.44 L373.21,415.34 L371.07,415.44 L368.99,415.74 L367.01,416.23 L365.18,416.90 L363.55,417.73 L362.16,418.70 L358.85,421.41 L355.55,424.12 L352.24,426.84 Z"/></clipPath>
<linearGradient id="g15" gradientUnits="userSpaceOnUse" x1="346.3" y1="0" x2="386.9" y2="0"><stop offset="0.000" stop-color="#7c776c"/><stop offset="0.227" stop-color="#7c776c"/><stop offset="0.391" stop-color="#7d786d"/><stop offset="0.425" stop-color="#7e7b71"/><stop offset="0.465" stop-color="#827f77"/><stop offset="0.510" stop-color="#898780"/><stop offset="0.559" stop-color="#8f8e88"/><stop offset="0.610" stop-color="#969691"/><stop offset="0.663" stop-color="#9e9e99"/><stop offset="0.716" stop-color="#a6a6a1"/><stop offset="0.767" stop-color="#adada8"/><stop offset="0.816" stop-color="#acaca7"/><stop offset="0.861" stop-color="#a5a5a0"/><stop offset="0.901" stop-color="#9e9e9a"/><stop offset="0.936" stop-color="#979793"/><stop offset="0.963" stop-color="#949490"/><stop offset="0.983" stop-color="#92928e"/><stop offset="0.996" stop-color="#90908b"/><stop offset="1.000" stop-color="#8f8f8a"/></linearGradient>
<clipPath id="c9"><path d="M547.75,271.00 L546.63,272.09 L545.81,273.27 L545.31,274.51 L545.14,275.79 L545.31,277.06 L545.81,278.30 L546.63,279.48 L547.75,280.57 L549.14,281.54 L550.77,282.37 L552.60,283.03 L554.58,283.52 L556.66,283.82 L558.80,283.92 L560.94,283.82 L563.02,283.52 L565.00,283.03 L566.82,282.37 L568.45,281.54 L569.84,280.57 L573.15,277.85 L576.46,275.14 L579.77,272.43 L583.08,269.71 L584.20,268.62 L585.01,267.44 L585.51,266.20 L585.68,264.93 L585.51,263.66 L585.01,262.42 L584.19,261.24 L583.07,260.15 L581.68,259.18 L580.05,258.35 L578.22,257.68 L576.24,257.19 L574.16,256.89 L572.02,256.79 L569.89,256.89 L567.80,257.19 L565.83,257.68 L564.00,258.35 L562.37,259.18 L560.98,260.15 L557.67,262.86 L554.36,265.58 L551.06,268.29 Z"/></clipPath>
<linearGradient id="g16" gradientUnits="userSpaceOnUse" x1="545.1" y1="0" x2="585.7" y2="0"><stop offset="0.000" stop-color="#7c776c"/><stop offset="0.227" stop-color="#7c776c"/><stop offset="0.391" stop-color="#7d786d"/><stop offset="0.425" stop-color="#7e7b71"/><stop offset="0.465" stop-color="#827f77"/><stop offset="0.510" stop-color="#898780"/><stop offset="0.559" stop-color="#8f8e88"/><stop offset="0.610" stop-color="#969691"/><stop offset="0.663" stop-color="#9e9e99"/><stop offset="0.716" stop-color="#a6a6a1"/><stop offset="0.767" stop-color="#adada8"/><stop offset="0.816" stop-color="#acaca7"/><stop offset="0.861" stop-color="#a5a5a0"/><stop offset="0.901" stop-color="#9e9e9a"/><stop offset="0.936" stop-color="#979793"/><stop offset="0.963" stop-color="#949490"/><stop offset="0.983" stop-color="#92928e"/><stop offset="0.996" stop-color="#90908b"/><stop offset="1.000" stop-color="#8f8f8a"/></linearGradient>
<clipPath id="c10"><path d="M645.07,557.73 L643.95,558.82 L643.13,560.00 L642.63,561.24 L642.47,562.51 L642.63,563.79 L643.14,565.03 L643.96,566.21 L645.08,567.30 L646.47,568.27 L648.10,569.10 L649.92,569.76 L651.90,570.25 L653.99,570.55 L656.12,570.65 L658.26,570.55 L660.34,570.25 L662.32,569.76 L664.15,569.10 L665.78,568.27 L667.17,567.30 L670.48,564.58 L673.78,561.87 L677.09,559.15 L680.40,556.44 L681.52,555.35 L682.34,554.17 L682.84,552.93 L683.00,551.66 L682.84,550.39 L682.34,549.14 L681.51,547.96 L680.39,546.88 L679.00,545.91 L677.37,545.08 L675.55,544.41 L673.57,543.92 L671.48,543.62 L669.35,543.52 L667.21,543.62 L665.13,543.92 L663.15,544.41 L661.32,545.08 L659.69,545.91 L658.30,546.88 L654.99,549.59 L651.69,552.30 L648.38,555.02 Z"/></clipPath>
<linearGradient id="g17" gradientUnits="userSpaceOnUse" x1="642.5" y1="0" x2="683.0" y2="0"><stop offset="0.000" stop-color="#7c776c"/><stop offset="0.227" stop-color="#7c776c"/><stop offset="0.391" stop-color="#7d786d"/><stop offset="0.425" stop-color="#7e7b71"/><stop offset="0.465" stop-color="#828077"/><stop offset="0.510" stop-color="#898780"/><stop offset="0.559" stop-color="#8f8e88"/><stop offset="0.610" stop-color="#969691"/><stop offset="0.663" stop-color="#9e9e99"/><stop offset="0.716" stop-color="#a6a6a1"/><stop offset="0.767" stop-color="#adada8"/><stop offset="0.816" stop-color="#acaca7"/><stop offset="0.861" stop-color="#a5a5a0"/><stop offset="0.901" stop-color="#9e9e9a"/><stop offset="0.936" stop-color="#979793"/><stop offset="0.963" stop-color="#949490"/><stop offset="0.983" stop-color="#92928e"/><stop offset="0.996" stop-color="#90908b"/><stop offset="1.000" stop-color="#8f8f8a"/></linearGradient>
<clipPath id="c11"><path d="M840.24,397.61 L839.12,398.69 L838.30,399.87 L837.81,401.11 L837.64,402.39 L837.81,403.66 L838.31,404.90 L839.13,406.08 L840.25,407.17 L841.64,408.14 L843.27,408.97 L845.10,409.64 L847.08,410.12 L849.16,410.42 L851.30,410.52 L853.43,410.42 L855.51,410.13 L857.49,409.64 L859.32,408.97 L860.95,408.14 L862.34,407.17 L865.65,404.46 L868.96,401.74 L872.26,399.03 L875.57,396.31 L876.69,395.23 L877.51,394.05 L878.01,392.80 L878.18,391.53 L878.01,390.26 L877.51,389.02 L876.69,387.84 L875.57,386.75 L874.17,385.78 L872.55,384.95 L870.72,384.28 L868.74,383.79 L866.65,383.50 L864.52,383.40 L862.38,383.50 L860.30,383.79 L858.32,384.28 L856.49,384.95 L854.87,385.78 L853.47,386.75 L850.17,389.46 L846.86,392.18 L843.55,394.89 Z"/></clipPath>
<linearGradient id="g18" gradientUnits="userSpaceOnUse" x1="837.6" y1="0" x2="878.2" y2="0"><stop offset="0.000" stop-color="#7c776c"/><stop offset="0.227" stop-color="#7c776c"/><stop offset="0.391" stop-color="#7d786d"/><stop offset="0.425" stop-color="#7e7b71"/><stop offset="0.465" stop-color="#828077"/><stop offset="0.510" stop-color="#898780"/><stop offset="0.559" stop-color="#8f8e88"/><stop offset="0.610" stop-color="#969691"/><stop offset="0.663" stop-color="#9e9e99"/><stop offset="0.716" stop-color="#a6a6a1"/><stop offset="0.767" stop-color="#adada8"/><stop offset="0.816" stop-color="#acaca7"/><stop offset="0.861" stop-color="#a5a5a0"/><stop offset="0.901" stop-color="#9e9e9a"/><stop offset="0.936" stop-color="#979793"/><stop offset="0.963" stop-color="#949490"/><stop offset="0.983" stop-color="#92928e"/><stop offset="0.996" stop-color="#90908b"/><stop offset="1.000" stop-color="#8f8f8a"/></linearGradient>
<clipPath id="c12"><path d="M442.71,372.08 L443.15,371.45 L443.41,370.78 L443.50,370.10 L443.41,369.42 L443.15,368.75 L442.71,368.12 L442.11,367.54 L441.36,367.02 L440.49,366.57 L439.51,366.21 L438.44,365.95 L437.33,365.79 L436.18,365.74 L435.04,365.79 L433.92,365.95 L432.86,366.21 L431.88,366.57 L431.01,367.02 L430.26,367.54 L429.66,368.12 L429.22,368.75 L428.96,369.42 L428.87,370.10 L428.96,370.78 L429.22,371.45 L429.66,372.08 L430.26,372.66 L431.01,373.18 L431.88,373.63 L432.86,373.98 L433.93,374.25 L435.04,374.41 L436.19,374.46 L437.33,374.41 L438.45,374.25 L439.51,373.98 L440.49,373.63 L441.36,373.18 L442.11,372.66 Z"/></clipPath>
<linearGradient id="g19" gradientUnits="userSpaceOnUse" x1="428.9" y1="0" x2="443.5" y2="0"><stop offset="0.000" stop-color="#7c776c"/><stop offset="0.146" stop-color="#7e7b71"/><stop offset="0.206" stop-color="#828077"/><stop offset="0.273" stop-color="#898780"/><stop offset="0.345" stop-color="#8f8e88"/><stop offset="0.422" stop-color="#969691"/><stop offset="0.500" stop-color="#9e9e99"/><stop offset="0.578" stop-color="#a6a6a1"/><stop offset="0.654" stop-color="#adada8"/><stop offset="0.727" stop-color="#acaca7"/><stop offset="0.794" stop-color="#a5a5a0"/><stop offset="0.853" stop-color="#9e9e9a"/><stop offset="0.904" stop-color="#979793"/><stop offset="0.945" stop-color="#949490"/><stop offset="0.975" stop-color="#92928e"/><stop offset="0.994" stop-color="#90908b"/><stop offset="1.000" stop-color="#8f8f8a"/></linearGradient>
<clipPath id="c13"><path d="M740.13,502.06 L740.57,501.43 L740.84,500.76 L740.93,500.08 L740.84,499.40 L740.57,498.73 L740.13,498.10 L739.53,497.52 L738.78,497.00 L737.91,496.55 L736.93,496.19 L735.87,495.93 L734.75,495.77 L733.61,495.72 L732.46,495.77 L731.35,495.93 L730.29,496.19 L729.31,496.55 L728.43,497.00 L727.69,497.52 L727.09,498.10 L726.65,498.73 L726.38,499.40 L726.29,500.08 L726.38,500.76 L726.65,501.43 L727.09,502.06 L727.69,502.64 L728.44,503.16 L729.31,503.61 L730.29,503.96 L731.35,504.23 L732.47,504.39 L733.61,504.44 L734.76,504.39 L735.87,504.23 L736.94,503.97 L737.91,503.61 L738.79,503.16 L739.53,502.64 Z"/></clipPath>
<linearGradient id="g20" gradientUnits="userSpaceOnUse" x1="726.3" y1="0" x2="740.9" y2="0"><stop offset="0.000" stop-color="#7c776c"/><stop offset="0.146" stop-color="#7e7b71"/><stop offset="0.206" stop-color="#828077"/><stop offset="0.273" stop-color="#898780"/><stop offset="0.345" stop-color="#8f8e88"/><stop offset="0.422" stop-color="#969691"/><stop offset="0.500" stop-color="#9e9e99"/><stop offset="0.578" stop-color="#a6a6a1"/><stop offset="0.654" stop-color="#adada8"/><stop offset="0.727" stop-color="#acaca7"/><stop offset="0.794" stop-color="#a5a5a0"/><stop offset="0.853" stop-color="#9e9e9a"/><stop offset="0.904" stop-color="#979793"/><stop offset="0.945" stop-color="#949490"/><stop offset="0.975" stop-color="#92928e"/><stop offset="0.994" stop-color="#90908b"/><stop offset="1.000" stop-color="#8f8f8a"/></linearGradient>
<clipPath id="cbr"><polygon points="466.83,695.54 523.89,648.73 563.9,615.9 700,500 700,800 436.8,800"/></clipPath></defs>
<polygon points="202.62,581.16 202.87,581.29 208.48,583.72 214.09,586.15 219.70,588.58 225.31,591.00 230.92,593.43 236.53,595.86 242.14,598.29 247.75,600.72 253.36,603.15 258.97,605.57 264.58,608.00 270.19,610.43 275.80,612.86 281.41,615.29 287.02,617.72 292.63,620.14 298.24,622.57 303.85,625.00 309.46,627.43 315.07,629.86 320.68,632.29 326.29,634.71 331.90,637.14 337.51,639.57 343.12,642.00 348.73,644.43 354.34,646.85 359.95,649.28 365.56,651.71 371.17,654.14 376.78,656.57 382.39,659.00 388.00,661.42 393.61,663.85 399.22,666.28 404.83,668.71 410.44,671.14 416.05,673.57 421.66,675.99 427.27,678.42 432.88,680.85 438.49,683.28 444.10,685.71 449.71,688.14 455.32,690.56 460.93,692.99 466.54,695.42 466.83,695.52 466.83,708.39 466.54,708.28 460.93,705.86 455.32,703.43 449.71,701.00 444.10,698.57 438.49,696.14 432.88,693.72 427.27,691.29 421.66,688.86 416.05,686.43 410.44,684.00 404.83,681.57 399.22,679.15 393.61,676.72 388.00,674.29 382.39,671.86 376.78,669.43 371.17,667.00 365.56,664.58 359.95,662.15 354.34,659.72 348.73,657.29 343.12,654.86 337.51,652.44 331.90,650.01 326.29,647.58 320.68,645.15 315.07,642.72 309.46,640.29 303.85,637.87 298.24,635.44 292.63,633.01 287.02,630.58 281.41,628.15 275.80,625.72 270.19,623.30 264.58,620.87 258.97,618.44 253.36,616.01 247.75,613.58 242.14,611.15 236.53,608.73 230.92,606.30 225.31,603.87 219.70,601.44 214.09,599.01 208.48,596.59 202.87,594.16 202.62,594.03" fill="#b5b5ad"/>
<path d="M202.62,594.03 L202.87,594.16 L208.48,596.59 L214.09,599.01 L219.70,601.44 L225.31,603.87 L230.92,606.30 L236.53,608.73 L242.14,611.15 L247.75,613.58 L253.36,616.01 L258.97,618.44 L264.58,620.87 L270.19,623.30 L275.80,625.72 L281.41,628.15 L287.02,630.58 L292.63,633.01 L298.24,635.44 L303.85,637.87 L309.46,640.29 L315.07,642.72 L320.68,645.15 L326.29,647.58 L331.90,650.01 L337.51,652.44 L343.12,654.86 L348.73,657.29 L354.34,659.72 L359.95,662.15 L365.56,664.58 L371.17,667.00 L376.78,669.43 L382.39,671.86 L388.00,674.29 L393.61,676.72 L399.22,679.15 L404.83,681.57 L410.44,684.00 L416.05,686.43 L421.66,688.86 L427.27,691.29 L432.88,693.72 L438.49,696.14 L444.10,698.57 L449.71,701.00 L455.32,703.43 L460.93,705.86 L466.54,708.28 L466.83,708.39" fill="none" stroke="#17150f" stroke-width="1.5" stroke-linejoin="round" stroke-linecap="round"/>
<path d="M202.62,581.16 L202.62,594.03" stroke="#17150f" stroke-width="1.3" stroke-linecap="round"/>
<polygon points="466.83,695.52 467.04,695.37 471.14,692.01 475.24,688.64 479.35,685.27 483.45,681.91 487.55,678.54 491.66,675.18 495.76,671.81 499.86,668.44 503.97,665.08 508.07,661.71 512.17,658.34 516.28,654.98 520.38,656.13 520.55,655.96 520.55,677.40 520.38,677.57 516.28,654.98 512.17,658.34 508.07,661.71 503.97,665.08 499.86,668.44 495.76,671.81 491.66,675.18 487.55,678.54 483.45,681.91 479.35,685.27 475.24,688.64 471.14,692.01 467.04,708.24 466.83,708.39" fill="url(#g1)"/>
<path d="M466.83,708.39 L467.04,708.24 L471.14,692.01 L475.24,688.64 L479.35,685.27 L483.45,681.91 L487.55,678.54 L491.66,675.18 L495.76,671.81 L499.86,668.44 L503.97,665.08 L508.07,661.71 L512.17,658.34 L516.28,654.98 L520.38,677.57 L520.55,677.40" fill="none" stroke="#17150f" stroke-width="1.5" stroke-linejoin="round" stroke-linecap="round"/>
<path d="M466.83,695.52 L466.83,708.39" stroke="#17150f" stroke-width="1.3" stroke-linecap="round"/>
<path d="M520.55,655.96 L520.55,677.40" stroke="#17150f" stroke-width="1.3" stroke-linecap="round"/>
<polygon points="514.70,650.75 514.78,649.92 515.08,649.11 515.59,648.33 516.29,647.62 517.17,646.97 518.21,646.42 519.37,645.96 520.64,645.62 521.98,645.40 523.37,645.31 524.76,645.34 526.73,645.48 526.89,645.49 527.24,645.51 527.39,645.51 531.48,645.61 535.57,645.70 535.72,645.71 536.07,645.71 536.23,645.70 541.86,645.57 544.40,645.51 544.55,645.51 544.91,645.49 545.06,645.48 550.65,645.09 553.18,644.91 553.34,644.90 553.69,644.86 553.84,644.85 557.85,644.37 561.86,643.90 562.01,643.88 562.35,643.83 562.50,643.80 566.44,643.14 570.37,642.48 570.52,642.46 570.86,642.39 571.00,642.36 574.93,641.50 578.68,640.67 578.82,640.64 579.15,640.56 579.29,640.52 579.30,640.52 583.01,639.50 586.71,638.48 586.85,638.44 587.17,638.35 587.30,638.30 591.73,636.82 594.44,635.92 594.57,635.88 594.88,635.77 595.00,635.71 598.40,634.36 601.80,633.01 601.93,632.96 602.22,632.83 602.34,632.78 603.99,632.00 608.76,629.76 608.88,629.70 609.15,629.56 609.26,629.50 612.27,627.85 615.27,626.19 615.38,626.13 615.63,625.98 615.74,625.92 619.88,623.25 621.29,622.34 621.39,622.27 621.62,622.11 621.72,622.04 624.30,620.08 626.88,618.13 626.93,618.10 627.03,618.01 627.08,617.97 631.20,614.59 635.32,611.21 639.45,607.83 643.57,604.45 647.69,601.07 651.81,597.68 655.93,594.30 660.06,590.92 664.18,587.54 668.30,584.16 672.42,580.78 676.54,577.39 680.66,574.01 684.79,570.63 688.91,567.25 693.03,563.87 697.15,560.49 701.27,557.10 705.40,553.72 709.52,550.34 713.64,546.96 717.76,543.58 721.88,540.19 726.01,536.81 730.13,533.43 734.25,530.05 738.37,526.67 742.49,523.29 746.61,519.90 750.74,516.52 754.86,513.14 758.98,509.76 763.10,506.38 767.22,503.00 771.35,499.61 775.47,496.23 779.59,492.85 783.71,489.47 787.83,486.09 791.96,482.70 796.08,479.32 800.20,475.94 804.32,472.56 808.44,469.18 812.57,465.80 816.69,462.41 820.81,459.03 824.93,455.65 829.05,452.27 833.17,448.89 837.30,445.51 841.42,442.12 845.54,438.74 849.66,435.36 853.78,431.98 857.91,428.60 862.03,425.22 866.15,421.83 870.27,418.45 874.39,415.07 878.52,411.69 882.64,408.31 886.76,404.92 890.88,401.54 895.00,398.16 899.13,394.78 903.25,391.40 907.37,388.02 911.49,384.63 915.61,381.25 919.73,377.87 923.86,374.49 927.98,371.11 932.10,367.73 936.22,364.34 940.34,360.96 944.47,357.58 948.59,353.96 948.63,353.92 948.73,353.83 948.78,353.79 951.09,351.54 953.41,349.30 953.50,349.21 953.68,349.02 953.76,348.93 954.77,347.77 957.75,344.33 957.83,344.25 957.99,344.04 958.05,343.95 959.76,341.57 961.47,339.19 961.54,339.10 961.67,338.89 961.73,338.79 963.83,335.15 964.56,333.88 964.61,333.79 964.72,333.58 964.76,333.48 965.87,330.97 966.98,328.46 967.02,328.37 967.10,328.15 967.13,328.05 967.74,326.12 968.73,322.96 968.76,322.86 968.81,322.64 968.83,322.54 969.31,319.98 969.79,317.41 969.79,317.40 969.81,317.30 969.83,317.08 969.84,316.98 969.99,314.46 970.16,311.82 970.16,311.72 970.16,311.50 970.16,336.02 970.16,336.23 970.16,336.32 969.99,338.81 969.84,341.19 969.83,341.28 969.81,341.49 969.79,341.58 969.79,341.59 969.31,344.01 968.83,346.42 968.81,346.51 968.76,346.72 968.73,346.81 967.74,349.78 967.13,351.59 967.10,351.68 967.02,351.89 966.98,351.98 965.87,354.32 964.76,356.67 964.72,356.75 964.61,356.95 964.56,357.04 963.83,358.22 961.73,361.61 961.67,361.70 961.54,361.89 961.47,361.98 959.76,364.19 958.05,366.40 957.99,366.49 957.83,366.67 957.75,366.76 954.77,369.93 953.76,371.01 953.68,371.09 953.50,371.27 953.41,371.34 951.09,373.41 948.78,375.48 948.73,375.52 948.63,375.60 948.59,375.64 944.47,379.02 940.34,382.40 936.22,385.78 932.10,389.17 927.98,392.55 923.86,395.93 919.73,399.31 915.61,402.69 911.49,406.08 907.37,409.46 903.25,412.84 899.13,416.22 895.00,419.60 890.88,422.98 886.76,426.37 882.64,429.75 878.52,433.13 874.39,436.51 870.27,439.89 866.15,443.27 862.03,446.66 857.91,450.04 853.78,453.42 849.66,456.80 845.54,460.18 841.42,463.57 837.30,466.95 833.17,470.33 829.05,473.71 824.93,477.09 820.81,480.47 816.69,483.86 812.57,487.24 808.44,490.62 804.32,494.00 800.20,497.38 796.08,500.76 791.96,504.15 787.83,507.53 783.71,510.91 779.59,514.29 775.47,517.67 771.35,521.06 767.22,524.44 763.10,527.82 758.98,531.20 754.86,534.58 750.74,537.96 746.61,541.35 742.49,544.73 738.37,548.11 734.25,551.49 730.13,554.87 726.01,558.25 721.88,561.64 717.76,565.02 713.64,568.40 709.52,571.78 705.40,575.16 701.27,578.54 697.15,581.93 693.03,585.31 688.91,588.69 684.79,592.07 680.66,595.45 676.54,598.84 672.42,602.22 668.30,605.60 664.18,608.98 660.06,612.36 655.93,615.74 651.81,619.13 647.69,622.51 643.57,625.89 639.45,629.27 635.32,632.65 631.20,636.03 627.08,639.42 627.03,639.45 626.93,639.54 626.88,639.57 624.30,641.53 621.72,643.48 621.62,643.55 621.39,643.71 621.29,643.78 619.88,644.69 615.74,647.36 615.63,647.42 615.38,647.57 615.27,647.64 612.27,649.29 609.26,650.94 609.15,651.01 608.88,651.14 608.76,651.20 603.99,653.44 602.34,654.22 602.22,654.27 601.93,654.40 601.80,654.45 598.40,655.80 595.00,657.16 594.88,657.21 594.57,657.32 594.44,657.36 591.73,658.27 587.30,659.74 587.17,659.79 586.85,659.88 586.71,659.92 583.01,660.94 579.30,661.96 579.29,661.96 579.15,662.00 578.82,662.08 578.68,662.11 574.93,662.94 571.00,663.80 570.86,663.83 570.52,663.90 570.37,663.92 566.44,664.58 562.50,665.25 562.35,665.27 562.01,665.32 561.86,665.34 557.85,665.81 553.84,666.29 553.69,666.31 553.34,666.34 553.18,666.35 550.65,666.53 545.06,666.92 544.91,666.93 544.55,666.95 544.40,666.95 541.86,667.01 536.23,667.14 536.07,667.15 535.72,667.15 535.57,667.14 531.48,667.05 527.39,666.95 527.24,666.95 526.89,666.93 526.73,666.92 524.76,666.78 523.37,666.75 521.98,666.84 520.64,667.06 519.37,667.41 518.21,667.86 517.17,668.41 516.29,669.06 515.59,669.78 515.08,670.55 514.78,671.36 514.70,672.19" fill="url(#g2)"/>
<path d="M514.70,672.19 L514.78,671.36 L515.08,670.55 L515.59,669.78 L516.29,669.06 L517.17,668.41 L518.21,667.86 L519.37,667.41 L520.64,667.06 L521.98,666.84 L523.37,666.75 L524.76,666.78 L526.73,666.92 L526.89,666.93 L527.24,666.95 L527.39,666.95 L531.48,667.05 L535.57,667.14 L535.72,667.15 L536.07,667.15 L536.23,667.14 L541.86,667.01 L544.40,666.95 L544.55,666.95 L544.91,666.93 L545.06,666.92 L550.65,666.53 L553.18,666.35 L553.34,666.34 L553.69,666.31 L553.84,666.29 L557.85,665.81 L561.86,665.34 L562.01,665.32 L562.35,665.27 L562.50,665.25 L566.44,664.58 L570.37,663.92 L570.52,663.90 L570.86,663.83 L571.00,663.80 L574.93,662.94 L578.68,662.11 L578.82,662.08 L579.15,662.00 L579.29,661.96 L579.30,661.96 L583.01,660.94 L586.71,659.92 L586.85,659.88 L587.17,659.79 L587.30,659.74 L591.73,658.27 L594.44,657.36 L594.57,657.32 L594.88,657.21 L595.00,657.16 L598.40,655.80 L601.80,654.45 L601.93,654.40 L602.22,654.27 L602.34,654.22 L603.99,653.44 L608.76,651.20 L608.88,651.14 L609.15,651.01 L609.26,650.94 L612.27,649.29 L615.27,647.64 L615.38,647.57 L615.63,647.42 L615.74,647.36 L619.88,644.69 L621.29,643.78 L621.39,643.71 L621.62,643.55 L621.72,643.48 L624.30,641.53 L626.88,639.57 L626.93,639.54 L627.03,639.45 L627.08,639.42 L631.20,636.03 L635.32,632.65 L639.45,629.27 L643.57,625.89 L647.69,622.51 L651.81,619.13 L655.93,615.74 L660.06,612.36 L664.18,608.98 L668.30,605.60 L672.42,602.22 L676.54,598.84 L680.66,595.45 L684.79,592.07 L688.91,588.69 L693.03,585.31 L697.15,581.93 L701.27,578.54 L705.40,575.16 L709.52,571.78 L713.64,568.40 L717.76,565.02 L721.88,561.64 L726.01,558.25 L730.13,554.87 L734.25,551.49 L738.37,548.11 L742.49,544.73 L746.61,541.35 L750.74,537.96 L754.86,534.58 L758.98,531.20 L763.10,527.82 L767.22,524.44 L771.35,521.06 L775.47,517.67 L779.59,514.29 L783.71,510.91 L787.83,507.53 L791.96,504.15 L796.08,500.76 L800.20,497.38 L804.32,494.00 L808.44,490.62 L812.57,487.24 L816.69,483.86 L820.81,480.47 L824.93,477.09 L829.05,473.71 L833.17,470.33 L837.30,466.95 L841.42,463.57 L845.54,460.18 L849.66,456.80 L853.78,453.42 L857.91,450.04 L862.03,446.66 L866.15,443.27 L870.27,439.89 L874.39,436.51 L878.52,433.13 L882.64,429.75 L886.76,426.37 L890.88,422.98 L895.00,419.60 L899.13,416.22 L903.25,412.84 L907.37,409.46 L911.49,406.08 L915.61,402.69 L919.73,399.31 L923.86,395.93 L927.98,392.55 L932.10,389.17 L936.22,385.78 L940.34,382.40 L944.47,379.02 L948.59,375.64 L948.63,375.60 L948.73,375.52 L948.78,375.48 L951.09,373.41 L953.41,371.34 L953.50,371.27 L953.68,371.09 L953.76,371.01 L954.77,369.93 L957.75,366.76 L957.83,366.67 L957.99,366.49 L958.05,366.40 L959.76,364.19 L961.47,361.98 L961.54,361.89 L961.67,361.70 L961.73,361.61 L963.83,358.22 L964.56,357.04 L964.61,356.95 L964.72,356.75 L964.76,356.67 L965.87,354.32 L966.98,351.98 L967.02,351.89 L967.10,351.68 L967.13,351.59 L967.74,349.78 L968.73,346.81 L968.76,346.72 L968.81,346.51 L968.83,346.42 L969.31,344.01 L969.79,341.59 L969.79,341.58 L969.81,341.49 L969.83,341.28 L969.84,341.19 L969.99,338.81 L970.16,336.32 L970.16,336.23 L970.16,336.02" fill="none" stroke="#17150f" stroke-width="1.5" stroke-linejoin="round" stroke-linecap="round"/>
<path d="M514.70,650.75 L514.70,672.19" stroke="#17150f" stroke-width="1.3" stroke-linecap="round"/>
<path d="M970.16,311.50 L970.16,336.02" stroke="#17150f" stroke-width="1.3" stroke-linecap="round"/>
<polygon points="960.50,285.28 960.66,283.63 961.26,282.03 962.29,280.50 963.72,279.09 966.52,276.80 969.32,274.50 971.04,273.30 973.06,272.27 975.32,271.45 977.76,270.84 980.34,270.48 982.98,270.35 985.63,270.48 988.20,270.84 990.65,271.45 992.91,272.27 996.93,274.01 997.46,274.21 997.46,296.10 996.93,295.91 992.91,294.17 990.65,293.34 988.20,292.74 985.63,292.37 982.98,292.24 980.34,292.37 977.76,292.74 975.32,293.34 973.06,294.17 971.04,295.19 969.32,296.39 966.52,298.69 963.72,300.99 962.29,302.39 961.26,303.92 960.66,305.53 960.50,307.17" fill="url(#g3)"/>
<path d="M960.50,307.17 L960.66,305.53 L961.26,303.92 L962.29,302.39 L963.72,300.99 L966.52,298.69 L969.32,296.39 L971.04,295.19 L973.06,294.17 L975.32,293.34 L977.76,292.74 L980.34,292.37 L982.98,292.24 L985.63,292.37 L988.20,292.74 L990.65,293.34 L992.91,294.17 L996.93,295.91 L997.46,296.10" fill="none" stroke="#17150f" stroke-width="1.5" stroke-linejoin="round" stroke-linecap="round"/>
<path d="M960.50,285.28 L960.50,307.17" stroke="#17150f" stroke-width="1.3" stroke-linecap="round"/>
<polygon points="997.46,274.21 997.86,269.86 1001.65,266.76 1005.43,263.65 1009.22,260.54 1013.01,257.43 1016.79,254.33 1020.58,251.22 1024.37,248.11 1024.69,247.80 1024.69,273.75 1024.37,274.07 1020.58,277.18 1016.79,280.28 1013.01,283.39 1009.22,286.50 1005.43,289.60 1001.65,292.71 997.86,295.82 997.46,296.10" fill="url(#g4)"/>
<path d="M997.46,296.10 L997.86,295.82 L1001.65,292.71 L1005.43,289.60 L1009.22,286.50 L1013.01,283.39 L1016.79,280.28 L1020.58,277.18 L1024.37,274.07 L1024.69,273.75" fill="none" stroke="#17150f" stroke-width="1.5" stroke-linejoin="round" stroke-linecap="round"/>
<path d="M997.46,274.21 L997.46,296.10" stroke="#17150f" stroke-width="1.3" stroke-linecap="round"/>
<path d="M1024.69,247.80 L1024.69,273.75" stroke="#17150f" stroke-width="1.3" stroke-linecap="round"/>
<polygon points="713.92,147.42 714.39,147.66 719.48,149.86 724.56,152.06 726.58,153.09 728.30,154.29 729.69,155.63 730.70,157.09 731.32,158.63 731.53,160.20 731.53,186.16 731.32,184.58 730.70,183.05 729.69,181.59 728.30,180.24 726.58,179.04 724.56,178.02 719.48,175.81 714.39,173.61 713.92,173.38" fill="url(#g5)"/>
<path d="M713.92,173.38 L714.39,173.61 L719.48,175.81 L724.56,178.02 L726.58,179.04 L728.30,180.24 L729.69,181.59 L730.70,183.05 L731.32,184.58 L731.53,186.16" fill="none" stroke="#17150f" stroke-width="1.5" stroke-linejoin="round" stroke-linecap="round"/>
<path d="M713.92,147.42 L713.92,173.38" stroke="#17150f" stroke-width="1.3" stroke-linecap="round"/>
<path d="M731.53,160.20 L731.53,186.16" stroke="#17150f" stroke-width="1.3" stroke-linecap="round"/>
<polygon points="264.26,505.38 264.27,505.47 264.32,506.33 264.59,510.34 264.60,510.43 264.62,510.64 264.64,510.74 265.12,513.16 265.61,515.58 265.62,515.67 265.68,515.87 265.71,515.97 266.51,518.36 267.31,520.74 267.34,520.84 267.42,521.04 267.46,521.13 268.57,523.47 269.68,525.82 269.73,525.91 269.84,526.11 269.89,526.19 271.19,528.29 272.48,530.38 272.72,530.77 272.78,530.85 272.91,531.05 272.98,531.13 273.81,532.21 274.29,532.98 274.57,533.80 274.63,534.63 274.63,560.58 274.57,559.75 274.29,558.94 273.81,558.16 272.98,557.09 272.91,557.00 272.78,556.81 272.72,556.72 272.48,556.34 271.19,554.24 269.89,552.15 269.84,552.06 269.73,551.86 269.68,551.77 268.57,549.43 267.46,547.08 267.42,547.00 267.34,546.79 267.31,546.70 266.51,544.31 265.71,541.92 265.68,541.83 265.62,541.62 265.61,541.53 265.12,539.11 264.64,536.69 264.62,536.60 264.60,536.39 264.59,536.30 264.32,532.29 264.27,531.43 264.26,531.34" fill="url(#g6)"/>
<path d="M264.26,531.34 L264.27,531.43 L264.32,532.29 L264.59,536.30 L264.60,536.39 L264.62,536.60 L264.64,536.69 L265.12,539.11 L265.61,541.53 L265.62,541.62 L265.68,541.83 L265.71,541.92 L266.51,544.31 L267.31,546.70 L267.34,546.79 L267.42,547.00 L267.46,547.08 L268.57,549.43 L269.68,551.77 L269.73,551.86 L269.84,552.06 L269.89,552.15 L271.19,554.24 L272.48,556.34 L272.72,556.72 L272.78,556.81 L272.91,557.00 L272.98,557.09 L273.81,558.16 L274.29,558.94 L274.57,559.75 L274.63,560.58" fill="none" stroke="#17150f" stroke-width="1.5" stroke-linejoin="round" stroke-linecap="round"/>
<path d="M264.26,505.38 L264.26,531.34" stroke="#17150f" stroke-width="1.3" stroke-linecap="round"/>
<path d="M274.63,534.63 L274.63,560.58" stroke="#17150f" stroke-width="1.3" stroke-linecap="round"/>
<polygon points="202.58,590.65 466.83,705.02 466.83,708.41 202.58,594.03" fill="#7d786b"/>
<path d="M202.58,590.65 L466.83,705.02" stroke="#17150f" stroke-width="1.0"/>
<path d="M202.58,594.03 L466.83,708.41" stroke="#17150f" stroke-width="1.4"/>
<path d="M202.62,581.16 L202.87,581.29 L208.48,583.72 L214.09,586.15 L219.70,588.58 L225.31,591.00 L230.92,593.43 L236.53,595.86 L242.14,598.29 L247.75,600.72 L253.36,603.15 L258.97,605.57 L264.58,608.00 L270.19,610.43 L275.80,612.86 L281.41,615.29 L287.02,617.72 L292.63,620.14 L298.24,622.57 L303.85,625.00 L309.46,627.43 L315.07,629.86 L320.68,632.29 L326.29,634.71 L331.90,637.14 L337.51,639.57 L343.12,642.00 L348.73,644.43 L354.34,646.85 L359.95,649.28 L365.56,651.71 L371.17,654.14 L376.78,656.57 L382.39,659.00 L388.00,661.42 L393.61,663.85 L399.22,666.28 L404.83,668.71 L410.44,671.14 L416.05,673.57 L421.66,675.99 L427.27,678.42 L432.88,680.85 L438.49,683.28 L444.10,685.71 L449.71,688.14 L455.32,690.56 L460.93,692.99 L466.54,695.42 L466.83,695.52 L467.04,695.37 L471.14,692.01 L475.24,688.64 L479.35,685.27 L483.45,681.91 L487.55,678.54 L491.66,675.18 L495.76,671.81 L499.86,668.44 L503.97,665.08 L508.07,661.71 L512.17,658.34 L516.28,654.98 L516.50,649.94 L515.82,651.89 L517.45,653.61 L515.49,652.76 L513.97,651.98 L512.58,651.02 L511.46,649.94 L510.63,648.77 L510.11,647.54 L509.91,646.27 L510.05,645.00 L510.51,643.76 L511.28,642.58 L512.36,641.48 L513.70,640.49 L515.29,639.64 L517.07,638.95 L519.01,638.43 L521.07,638.09 L523.19,637.94 L525.17,637.99 L527.29,638.13 L527.32,638.14 L527.56,638.15 L527.58,638.15 L531.67,638.24 L535.75,638.34 L535.78,638.34 L536.01,638.34 L536.04,638.34 L541.67,638.21 L544.21,638.15 L544.24,638.15 L544.47,638.14 L544.50,638.13 L550.09,637.74 L552.62,637.56 L552.64,637.56 L552.88,637.54 L552.90,637.54 L556.91,637.06 L560.92,636.59 L560.95,636.58 L561.18,636.55 L561.20,636.55 L565.14,635.88 L569.07,635.22 L569.10,635.22 L569.32,635.18 L569.35,635.17 L573.28,634.31 L577.02,633.48 L577.04,633.48 L577.26,633.42 L577.28,633.42 L577.30,633.41 L581.00,632.40 L584.71,631.38 L584.73,631.37 L584.94,631.31 L584.96,631.30 L589.39,629.82 L592.10,628.92 L592.12,628.91 L592.32,628.84 L592.34,628.83 L595.74,627.48 L599.14,626.12 L599.16,626.12 L599.36,626.03 L599.37,626.02 L601.03,625.25 L605.80,623.01 L605.82,623.00 L606.00,622.90 L606.01,622.89 L609.02,621.24 L612.02,619.59 L612.04,619.58 L612.21,619.48 L612.22,619.47 L616.36,616.80 L617.77,615.89 L617.79,615.88 L617.94,615.77 L617.96,615.76 L620.54,613.81 L623.12,611.85 L623.13,611.85 L623.20,611.79 L623.21,611.78 L627.33,608.40 L631.45,605.02 L635.57,601.64 L639.69,598.26 L643.82,594.88 L647.94,591.49 L652.06,588.11 L656.18,584.73 L660.30,581.35 L664.43,577.97 L668.55,574.59 L672.67,571.20 L676.79,567.82 L680.91,564.44 L685.04,561.06 L689.16,557.68 L693.28,554.29 L697.40,550.91 L701.52,547.53 L705.65,544.15 L709.77,540.77 L713.89,537.39 L718.01,534.00 L722.13,530.62 L726.25,527.24 L730.38,523.86 L734.50,520.48 L738.62,517.10 L742.74,513.71 L746.86,510.33 L750.99,506.95 L755.11,503.57 L759.23,500.19 L763.35,496.81 L767.47,493.42 L771.60,490.04 L775.72,486.66 L779.84,483.28 L783.96,479.90 L788.08,476.51 L792.21,473.13 L796.33,469.75 L800.45,466.37 L804.57,462.99 L808.69,459.61 L812.81,456.22 L816.94,452.84 L821.06,449.46 L825.18,446.08 L829.30,442.70 L833.42,439.32 L837.55,435.93 L841.67,432.55 L845.79,429.17 L849.91,425.79 L854.03,422.41 L858.16,419.02 L862.28,415.64 L866.40,412.26 L870.52,408.88 L874.64,405.50 L878.76,402.12 L882.89,398.73 L887.01,395.35 L891.13,391.97 L895.25,388.59 L899.37,385.21 L903.50,381.83 L907.62,378.44 L911.74,375.06 L915.86,371.68 L919.98,368.30 L924.11,364.92 L928.23,361.54 L932.35,358.15 L936.47,354.77 L940.59,351.39 L944.92,348.09 L944.93,348.09 L945.00,348.03 L945.02,348.02 L947.49,346.02 L949.96,344.02 L949.99,344.00 L950.14,343.87 L950.17,343.85 L951.26,342.80 L954.48,339.71 L954.51,339.68 L954.65,339.55 L954.68,339.52 L956.55,337.35 L958.43,335.19 L958.46,335.15 L958.58,335.01 L958.61,334.97 L960.96,331.63 L961.77,330.47 L961.80,330.43 L961.91,330.28 L961.93,330.23 L963.21,327.92 L964.48,325.60 L964.51,325.55 L964.60,325.39 L964.62,325.34 L965.35,323.54 L966.54,320.60 L966.57,320.54 L966.63,320.37 L966.64,320.31 L967.28,317.91 L967.92,315.51 L967.92,315.50 L967.94,315.44 L967.98,315.25 L967.99,315.19 L968.30,312.82 L968.62,310.33 L968.63,310.26 L968.64,310.07 L968.64,310.00 L968.62,307.57 L968.61,305.13 L968.61,305.06 L968.60,304.86 L968.59,304.79 L968.35,303.16 L967.87,299.93 L967.85,299.86 L967.80,299.66 L967.78,299.59 L966.98,297.20 L966.18,294.81 L966.15,294.73 L966.08,294.54 L966.04,294.47 L964.62,292.18 L962.78,289.95 L962.73,289.90 L962.59,289.77 L960.47,287.54 L958.34,285.32 L958.30,285.29 L958.11,285.02 L956.79,283.31 L956.20,281.28 L956.39,279.22 L957.14,277.20 L958.44,275.29 L960.16,273.59 L963.04,271.23 L965.91,268.87 L967.99,267.42 L970.52,266.13 L973.36,265.10 L976.43,264.34 L979.67,263.88 L982.98,263.72 L986.30,263.88 L989.53,264.34 L992.61,265.10 L995.35,266.09 L999.43,267.86 L996.78,267.61 L997.86,269.86 L1001.65,266.76 L1005.43,263.65 L1009.22,260.54 L1013.01,257.43 L1016.79,254.33 L1020.58,251.22 L1024.37,248.11 L1024.69,247.80 L1024.22,247.56 L1018.57,245.11 L1012.92,242.67 L1007.27,240.22 L1001.62,237.78 L995.97,235.33 L990.32,232.89 L984.67,230.44 L979.02,227.99 L973.37,225.55 L967.71,223.10 L962.06,220.66 L956.41,218.21 L950.76,215.76 L945.11,213.32 L939.46,210.87 L933.81,208.43 L928.16,205.98 L922.51,203.53 L916.86,201.09 L911.21,198.64 L905.56,196.20 L899.91,193.75 L894.25,191.31 L888.60,188.86 L882.95,186.41 L877.30,183.97 L871.65,181.52 L866.00,179.08 L860.35,176.63 L854.70,174.18 L849.05,171.74 L843.40,169.29 L837.75,166.85 L832.10,164.40 L826.45,161.96 L820.80,159.51 L815.14,157.06 L809.49,154.62 L803.84,152.17 L798.19,149.73 L792.54,147.28 L786.89,144.83 L781.24,142.39 L775.59,139.94 L769.94,137.50 L764.29,135.05 L758.64,132.61 L752.99,130.16 L747.34,127.71 L741.69,125.27 L741.16,125.08 L740.76,125.36 L736.97,128.46 L733.18,131.57 L729.40,134.68 L725.61,137.78 L721.82,140.89 L718.03,144.00 L714.25,147.11 L713.92,147.42 L714.39,147.66 L719.48,149.86 L724.56,152.06 L726.58,153.09 L728.30,154.29 L729.69,155.63 L730.70,157.09 L731.32,158.63 L731.53,160.20 L731.32,161.78 L730.71,163.31 L729.69,164.77 L728.31,166.12 L725.15,168.71 L721.99,171.30 L718.83,173.90 L715.67,176.49 L714.01,177.65 L712.09,178.65 L709.93,179.46 L707.58,180.07 L705.11,180.46 L702.57,180.63 L700.58,180.58 L700.58,180.60 L700.25,180.58 L700.09,180.57 L699.74,180.56 L699.59,180.55 L695.63,180.46 L691.42,180.36 L691.26,180.36 L690.91,180.36 L690.75,180.36 L686.67,180.46 L682.58,180.55 L682.43,180.55 L682.07,180.57 L681.92,180.58 L677.86,180.87 L673.80,181.15 L673.64,181.17 L673.30,181.20 L673.14,181.22 L669.13,181.69 L665.12,182.17 L664.97,182.18 L664.63,182.23 L664.48,182.26 L657.99,183.35 L656.61,183.58 L656.46,183.61 L656.12,183.67 L655.98,183.70 L654.52,184.02 L648.31,185.39 L648.16,185.42 L647.83,185.50 L647.69,185.54 L646.49,185.87 L640.27,187.58 L640.13,187.62 L639.81,187.72 L639.68,187.76 L637.42,188.51 L632.54,190.14 L632.41,190.19 L632.11,190.30 L631.98,190.35 L628.58,191.70 L625.18,193.06 L625.05,193.11 L624.76,193.23 L624.64,193.29 L621.43,194.80 L618.22,196.30 L618.10,196.36 L617.83,196.50 L617.72,196.56 L614.76,198.19 L611.81,199.82 L611.71,199.87 L611.60,199.93 L611.35,200.08 L611.24,200.15 L608.47,201.94 L605.69,203.73 L605.59,203.79 L605.36,203.95 L605.26,204.03 L602.68,205.98 L600.10,207.93 L600.05,207.97 L599.95,208.05 L599.90,208.09 L595.77,211.48 L591.64,214.87 L587.50,218.26 L583.37,221.65 L579.24,225.04 L575.11,228.43 L570.97,231.82 L566.84,235.21 L562.71,238.60 L558.58,241.99 L554.44,245.38 L550.31,248.77 L546.18,252.16 L542.05,255.55 L537.91,258.94 L533.78,262.33 L529.65,265.72 L525.52,269.12 L521.38,272.51 L517.25,275.90 L513.12,279.29 L508.99,282.68 L504.85,286.07 L500.72,289.46 L496.59,292.85 L492.46,296.24 L488.32,299.63 L484.19,303.02 L480.06,306.41 L475.93,309.80 L471.80,313.19 L467.66,316.58 L463.53,319.97 L459.40,323.36 L455.27,326.75 L451.13,330.14 L447.00,333.53 L442.87,336.92 L438.74,340.31 L434.60,343.70 L430.47,347.09 L426.34,350.48 L422.21,353.87 L418.07,357.27 L413.94,360.66 L409.81,364.05 L405.68,367.44 L401.54,370.83 L397.41,374.22 L393.28,377.61 L389.15,381.00 L385.01,384.39 L380.88,387.78 L376.75,391.17 L372.62,394.56 L368.48,397.95 L364.35,401.34 L360.22,404.73 L356.09,408.12 L351.95,411.51 L347.82,414.90 L343.69,418.29 L339.56,421.68 L335.42,425.07 L331.29,428.46 L327.16,431.85 L323.03,435.24 L318.89,438.63 L314.76,442.03 L310.63,445.42 L306.50,448.81 L302.37,452.20 L298.23,455.59 L294.10,458.98 L289.97,462.37 L285.84,465.76 L285.79,465.80 L285.69,465.88 L285.65,465.92 L283.33,467.99 L281.01,470.05 L280.93,470.13 L280.74,470.31 L280.67,470.39 L278.67,472.52 L276.67,474.64 L276.60,474.72 L276.44,474.91 L276.37,474.99 L276.32,475.06 L274.63,477.24 L272.95,479.42 L272.88,479.50 L272.75,479.70 L272.70,479.78 L271.28,482.07 L269.87,484.36 L269.81,484.44 L269.71,484.64 L269.66,484.73 L268.55,487.08 L267.45,489.42 L267.40,489.51 L267.32,489.72 L267.29,489.81 L266.20,493.07 L265.70,494.59 L265.67,494.68 L265.61,494.88 L265.59,494.98 L264.79,499.03 L264.64,499.81 L264.62,499.91 L264.59,500.12 L264.58,500.21 L264.33,504.15 L264.27,505.08 L264.26,505.17 L264.26,505.38 L264.27,505.47 L264.32,506.33 L264.59,510.34 L264.60,510.43 L264.62,510.64 L264.64,510.74 L265.12,513.16 L265.61,515.58 L265.62,515.67 L265.68,515.87 L265.71,515.97 L266.51,518.36 L267.31,520.74 L267.34,520.84 L267.42,521.04 L267.46,521.13 L268.57,523.47 L269.68,525.82 L269.73,525.91 L269.84,526.11 L269.89,526.19 L271.19,528.29 L272.48,530.38 L272.72,530.77 L272.78,530.85 L272.91,531.05 L272.98,531.13 L273.81,532.21 L274.29,532.98 L274.57,533.80 L274.63,534.63 L274.48,535.45 L274.12,536.25 L273.55,537.01 L272.79,537.71 L271.87,538.33 L270.79,538.85 L269.59,539.28 L268.30,539.58 L266.94,539.76 L265.55,539.82 L264.16,539.75 L262.81,539.55 L261.52,539.23 L260.34,538.80 L256.62,537.19 L256.34,537.09 L256.13,537.24 L252.03,540.60 L247.92,543.97 L243.82,547.33 L239.72,550.70 L235.62,554.07 L231.51,557.43 L227.41,560.80 L223.31,564.17 L219.20,567.53 L215.10,570.90 L211.00,574.26 L206.89,577.63 L202.79,581.00 Z M373.61,553.62 L379.10,556.00 L384.60,558.38 L390.09,560.76 L395.59,563.13 L401.08,565.51 L406.57,567.89 L412.07,570.27 L417.56,572.65 L423.06,575.02 L428.55,577.40 L434.04,579.78 L439.54,582.16 L445.03,584.54 L450.53,586.91 L456.02,589.29 L461.51,591.67 L467.01,594.05 L470.41,595.40 L473.81,596.76 L477.38,597.95 L480.95,599.14 L484.66,600.16 L488.38,601.18 L492.21,602.02 L496.05,602.86 L499.99,603.53 L503.92,604.19 L507.93,604.66 L511.94,605.14 L516.00,605.42 L520.07,605.71 L524.15,605.81 L528.24,605.90 L532.32,605.81 L536.41,605.71 L540.47,605.43 L544.53,605.14 L548.54,604.66 L552.55,604.19 L556.49,603.53 L560.42,602.87 L564.26,602.02 L568.10,601.18 L571.81,600.16 L575.52,599.14 L579.09,597.95 L582.66,596.76 L586.06,595.40 L589.46,594.05 L592.67,592.54 L595.88,591.03 L598.88,589.38 L601.88,587.73 L604.66,585.94 L607.43,584.15 L609.96,582.23 L612.49,580.32 L616.62,576.94 L620.74,573.55 L624.87,570.17 L628.99,566.78 L633.12,563.40 L637.24,560.01 L641.37,556.63 L645.50,553.24 L649.62,549.86 L653.75,546.47 L657.87,543.09 L662.00,539.71 L666.12,536.32 L670.25,532.94 L674.37,529.55 L678.50,526.17 L682.62,522.78 L686.75,519.40 L690.88,516.01 L695.00,512.63 L699.13,509.24 L703.25,505.86 L707.38,502.47 L711.50,499.09 L715.63,495.70 L719.75,492.32 L723.88,488.94 L728.00,485.55 L732.13,482.17 L736.25,478.78 L740.38,475.40 L744.51,472.01 L743.67,468.56 L742.84,465.10 L746.21,462.33 L749.59,459.57 L752.96,456.80 L756.33,454.03 L759.71,451.26 L764.40,450.17 L769.10,449.08 L773.79,447.99 L777.92,444.59 L782.06,441.20 L786.19,437.81 L790.33,434.42 L794.46,431.03 L798.59,427.64 L802.73,424.24 L806.86,420.85 L811.00,417.46 L815.13,414.07 L819.26,410.68 L823.40,407.29 L827.53,403.89 L831.67,400.50 L835.80,397.11 L839.93,393.72 L844.07,390.33 L848.20,386.94 L852.34,383.54 L856.47,380.15 L860.60,376.76 L864.74,373.37 L868.87,369.98 L873.01,366.59 L877.14,363.19 L881.27,359.80 L885.41,356.41 L889.54,353.02 L893.68,349.63 L897.81,346.24 L901.94,342.85 L906.08,339.45 L908.35,337.43 L910.62,335.40 L912.62,333.28 L914.61,331.15 L916.32,328.94 L918.03,326.72 L919.45,324.44 L920.86,322.15 L921.97,319.81 L923.08,317.46 L923.88,315.07 L924.67,312.68 L925.15,310.26 L925.63,307.84 L925.79,305.41 L925.95,302.97 L925.79,300.54 L925.63,298.10 L925.15,295.68 L924.66,293.27 L923.86,290.88 L923.07,288.49 L921.95,286.14 L920.84,283.80 L919.43,281.51 L918.01,279.22 L916.30,277.01 L914.58,274.80 L912.58,272.67 L910.59,270.55 L908.31,268.52 L906.04,266.49 L903.51,264.58 L900.97,262.67 L898.20,260.88 L895.42,259.09 L892.42,257.43 L889.41,255.78 L886.20,254.27 L882.99,252.76 L877.50,250.38 L872.00,248.01 L866.51,245.63 L861.01,243.25 L855.52,240.87 L850.03,238.49 L844.53,236.12 L839.04,233.74 L833.54,231.36 L828.05,228.98 L822.56,226.60 L817.06,224.23 L811.57,221.85 L806.07,219.47 L800.58,217.09 L795.09,214.71 L789.59,212.34 L786.19,210.98 L782.79,209.63 L779.22,208.44 L775.65,207.25 L771.94,206.23 L768.22,205.21 L764.39,204.36 L760.55,203.52 L756.61,202.86 L752.68,202.20 L748.67,201.72 L744.66,201.25 L740.59,200.96 L736.53,200.67 L732.45,200.58 L728.36,200.48 L724.28,200.58 L720.19,200.67 L716.13,200.96 L712.07,201.25 L708.06,201.72 L704.05,202.20 L700.11,202.86 L696.18,203.52 L692.34,204.36 L688.50,205.21 L684.79,206.23 L681.08,207.25 L677.51,208.44 L673.94,209.63 L670.54,210.98 L667.14,212.33 L663.93,213.84 L660.72,215.35 L657.72,217.00 L654.72,218.66 L651.94,220.45 L649.17,222.24 L646.64,224.15 L644.11,226.06 L640.10,229.35 L636.09,232.64 L632.08,235.93 L628.07,239.22 L624.06,242.51 L620.05,245.80 L616.04,249.09 L612.03,252.38 L608.02,255.67 L604.01,258.96 L600.00,262.25 L595.99,265.54 L591.98,268.83 L587.97,272.12 L583.96,275.41 L579.95,278.70 L575.94,281.99 L571.94,285.28 L567.93,288.57 L563.92,291.86 L559.91,295.14 L555.90,298.43 L551.89,301.72 L547.88,305.01 L543.87,308.30 L539.86,311.59 L535.85,314.88 L531.84,318.17 L527.83,321.46 L523.82,324.75 L519.81,328.04 L515.80,331.33 L514.80,335.20 L513.79,339.07 L512.79,342.94 L508.86,346.16 L504.93,349.38 L501.01,352.60 L497.08,355.83 L491.93,357.00 L486.78,358.18 L481.64,359.36 L477.54,362.72 L473.44,366.08 L469.34,369.45 L465.25,372.81 L461.15,376.17 L457.05,379.53 L452.95,382.89 L448.86,386.25 L444.76,389.62 L440.66,392.98 L436.56,396.34 L432.47,399.70 L428.37,403.06 L424.27,406.42 L420.18,409.78 L416.08,413.15 L411.98,416.51 L407.88,419.87 L403.79,423.23 L399.69,426.59 L395.59,429.95 L391.49,433.32 L387.40,436.68 L383.30,440.04 L379.20,443.40 L375.11,446.76 L371.01,450.12 L366.91,453.48 L362.81,456.85 L358.72,460.21 L354.62,463.57 L350.52,466.93 L348.25,468.96 L345.98,470.98 L343.98,473.11 L341.99,475.23 L340.28,477.45 L338.56,479.66 L337.15,481.95 L335.74,484.23 L334.63,486.58 L333.52,488.92 L332.72,491.31 L331.93,493.70 L331.45,496.12 L330.97,498.54 L330.81,500.98 L330.65,503.41 L330.81,505.85 L330.97,508.28 L331.45,510.70 L331.94,513.12 L332.73,515.51 L333.53,517.90 L334.64,520.24 L335.76,522.59 L337.17,524.88 L338.59,527.16 L340.30,529.37 L342.02,531.59 L344.01,533.71 L346.01,535.84 L348.29,537.87 L350.56,539.89 L353.09,541.80 L355.62,543.72 L358.40,545.51 L361.18,547.30 L364.18,548.95 L367.19,550.60 L370.40,552.11 Z M801.27,208.48 L802.67,208.93 L804.21,209.16 L805.79,209.15 L807.32,208.89 L808.69,208.42 L809.82,207.75 L810.62,206.93 L811.04,206.02 L811.06,205.07 L810.68,204.15 L808.24,200.42 L805.80,196.69 L803.36,192.96 L800.92,189.23 L798.48,185.50 L796.04,181.77 L793.60,178.04 L791.16,174.31 L788.72,170.58 L786.27,166.85 L783.83,163.12 L781.39,159.39 L778.95,155.66 L778.15,154.79 L777.00,154.09 L775.57,153.59 L773.97,153.33 L772.32,153.34 L770.73,153.61 L769.31,154.11 L768.17,154.83 L764.21,158.08 L760.25,161.33 L756.28,164.58 L752.32,167.83 L748.36,171.08 L744.39,174.33 L740.43,177.58 L739.66,178.43 L739.28,179.37 L739.33,180.33 L739.79,181.25 L740.63,182.08 L741.80,182.74 L747.21,185.08 L752.62,187.42 L758.02,189.76 L763.43,192.10 L768.83,194.44 L774.24,196.78 L779.65,199.12 L785.05,201.46 L790.46,203.80 L795.87,206.14 Z M840.67,225.33 L841.33,226.15 L842.31,226.84 L843.54,227.37 L844.95,227.71 L846.45,227.84 L853.11,227.89 L859.77,227.94 L866.44,228.00 L873.10,228.05 L879.76,228.11 L886.42,228.16 L893.08,228.22 L899.74,228.27 L906.41,228.32 L913.07,228.38 L919.73,228.43 L926.39,228.49 L933.05,228.54 L939.72,228.60 L941.27,228.49 L942.72,228.16 L944.00,227.62 L945.00,226.91 L945.68,226.07 L945.98,225.16 L945.89,224.23 L945.41,223.34 L944.57,222.56 L943.44,221.92 L937.83,219.50 L932.23,217.07 L926.62,214.64 L921.01,212.22 L915.41,209.79 L909.80,207.36 L904.20,204.94 L898.59,202.51 L892.99,200.08 L887.38,197.66 L881.78,195.23 L876.17,192.81 L870.56,190.38 L864.96,187.95 L859.35,185.53 L853.75,183.10 L848.14,180.67 L842.54,178.25 L836.93,175.82 L831.32,173.40 L825.72,170.97 L820.11,168.54 L818.74,168.10 L817.23,167.87 L815.67,167.87 L814.16,168.10 L812.80,168.56 L811.67,169.20 L810.84,169.99 L810.38,170.88 L810.30,171.80 L810.61,172.72 L812.76,176.47 L814.91,180.23 L817.05,183.99 L819.20,187.75 L821.35,191.51 L823.49,195.27 L825.64,199.02 L827.79,202.78 L829.93,206.54 L832.08,210.30 L834.23,214.06 L836.38,217.82 L838.52,221.58 Z M945.27,272.47 L946.69,272.93 L948.27,273.15 L949.88,273.13 L951.43,272.85 L952.81,272.35 L953.92,271.65 L957.70,268.55 L961.49,265.44 L965.27,262.34 L969.05,259.24 L972.83,256.14 L976.61,253.03 L980.40,249.93 L984.18,246.83 L984.96,245.96 L985.33,245.00 L985.27,244.02 L984.77,243.08 L983.87,242.26 L982.64,241.60 L981.16,241.17 L979.55,240.97 L972.71,240.72 L965.87,240.47 L959.03,240.22 L952.19,239.97 L945.35,239.72 L938.52,239.47 L931.68,239.21 L924.84,238.96 L918.00,238.71 L911.16,238.46 L904.32,238.21 L897.49,237.96 L890.65,237.71 L883.81,237.45 L882.22,237.52 L880.72,237.82 L879.39,238.34 L878.33,239.05 L877.60,239.89 L877.26,240.82 L877.33,241.76 L877.79,242.67 L878.63,243.47 L879.79,244.12 L885.25,246.49 L890.70,248.85 L896.16,251.21 L901.62,253.57 L907.07,255.93 L912.53,258.29 L917.99,260.66 L923.45,263.02 L928.90,265.38 L934.36,267.74 L939.82,270.10 Z M257.37,576.19 L256.57,577.08 L256.21,578.07 L256.31,579.08 L256.87,580.04 L257.85,580.87 L259.16,581.51 L260.72,581.91 L262.41,582.05 L269.06,582.03 L275.71,582.01 L282.36,582.00 L289.02,581.98 L295.67,581.96 L302.32,581.94 L308.97,581.93 L315.62,581.91 L322.27,581.89 L328.92,581.87 L335.57,581.86 L342.23,581.84 L348.88,581.82 L355.53,581.80 L362.18,581.79 L363.72,581.67 L365.16,581.32 L366.41,580.78 L367.39,580.07 L368.05,579.23 L368.33,578.32 L368.23,577.40 L367.75,576.52 L366.92,575.74 L365.79,575.11 L360.36,572.76 L354.94,570.42 L349.51,568.07 L344.09,565.72 L338.66,563.37 L333.24,561.02 L327.81,558.67 L322.39,556.33 L316.96,553.98 L311.54,551.63 L306.11,549.28 L300.68,546.93 L299.26,546.47 L297.69,546.25 L296.08,546.27 L294.53,546.55 L293.15,547.05 L292.03,547.75 L288.18,550.91 L284.33,554.07 L280.48,557.23 L276.63,560.39 L272.78,563.55 L268.92,566.71 L265.07,569.87 L261.22,573.03 Z M422.75,668.17 L424.24,668.65 L425.89,668.86 L427.58,668.81 L429.18,668.48 L430.57,667.91 L431.65,667.13 L432.33,666.21 L432.58,665.21 L432.36,664.21 L430.55,660.26 L428.74,656.31 L426.93,652.36 L425.12,648.41 L423.31,644.46 L421.50,640.51 L419.69,636.56 L417.88,632.61 L416.07,628.65 L414.26,624.70 L412.45,620.75 L410.64,616.80 L408.82,612.85 L407.01,608.90 L405.20,604.95 L403.39,601.00 L401.58,597.04 L399.77,593.09 L399.13,592.19 L398.12,591.42 L396.80,590.84 L395.28,590.48 L393.64,590.38 L386.94,590.47 L380.23,590.57 L373.52,590.67 L366.82,590.77 L360.11,590.86 L353.40,590.96 L346.70,591.06 L339.99,591.16 L333.28,591.26 L326.58,591.35 L319.87,591.45 L313.16,591.55 L306.46,591.65 L299.75,591.75 L293.04,591.84 L286.33,591.94 L279.63,592.04 L272.92,592.14 L266.21,592.24 L264.69,592.37 L263.28,592.73 L262.05,593.28 L261.09,593.99 L260.45,594.83 L260.18,595.73 L260.29,596.64 L260.78,597.51 L261.61,598.28 L262.73,598.91 L268.25,601.30 L273.76,603.69 L279.28,606.07 L284.80,608.46 L290.32,610.85 L295.84,613.24 L301.35,615.63 L306.87,618.02 L312.39,620.40 L317.91,622.79 L323.43,625.18 L328.94,627.57 L334.46,629.96 L339.98,632.35 L345.50,634.73 L351.01,637.12 L356.53,639.51 L362.05,641.90 L367.57,644.29 L373.09,646.68 L378.60,649.06 L384.12,651.45 L389.64,653.84 L395.16,656.23 L400.67,658.62 L406.19,661.01 L411.71,663.39 L417.23,665.78 Z M455.14,665.00 L455.74,665.84 L456.67,666.57 L457.87,667.14 L459.27,667.51 L460.78,667.67 L462.31,667.61 L463.77,667.32 L465.06,666.82 L466.11,666.16 L469.93,663.02 L473.75,659.89 L477.56,656.76 L481.38,653.63 L485.20,650.50 L489.02,647.36 L492.84,644.23 L496.65,641.10 L500.47,637.97 L501.24,637.12 L501.62,636.18 L501.58,635.22 L501.12,634.30 L500.27,633.48 L499.10,632.81 L493.62,630.44 L488.15,628.07 L482.67,625.70 L477.20,623.33 L471.72,620.96 L466.25,618.59 L460.77,616.22 L455.30,613.85 L449.82,611.48 L444.35,609.11 L438.87,606.74 L437.37,606.27 L435.71,606.05 L434.02,606.11 L432.41,606.44 L431.02,607.02 L429.95,607.80 L429.27,608.73 L429.04,609.73 L429.27,610.74 L431.12,614.61 L432.97,618.49 L434.82,622.36 L436.66,626.24 L438.51,630.11 L440.36,633.99 L442.21,637.87 L444.06,641.74 L445.90,645.62 L447.75,649.49 L449.60,653.37 L451.45,657.24 L453.29,661.12 Z M348.93,429.55 L347.81,430.64 L346.99,431.82 L346.49,433.06 L346.33,434.33 L346.49,435.61 L347.00,436.85 L347.82,438.03 L348.94,439.12 L350.33,440.09 L351.96,440.92 L353.78,441.58 L355.76,442.07 L357.85,442.37 L359.98,442.47 L362.12,442.37 L364.20,442.07 L366.18,441.58 L368.01,440.92 L369.64,440.09 L371.03,439.12 L374.34,436.40 L377.64,433.69 L380.95,430.97 L384.26,428.26 L385.38,427.17 L386.20,425.99 L386.70,424.75 L386.86,423.48 L386.70,422.21 L386.20,420.96 L385.37,419.78 L384.25,418.70 L382.86,417.73 L381.23,416.90 L379.41,416.23 L377.43,415.74 L375.34,415.44 L373.21,415.34 L371.07,415.44 L368.99,415.74 L367.01,416.23 L365.18,416.90 L363.55,417.73 L362.16,418.70 L358.85,421.41 L355.55,424.12 L352.24,426.84 Z M547.75,271.00 L546.63,272.09 L545.81,273.27 L545.31,274.51 L545.14,275.79 L545.31,277.06 L545.81,278.30 L546.63,279.48 L547.75,280.57 L549.14,281.54 L550.77,282.37 L552.60,283.03 L554.58,283.52 L556.66,283.82 L558.80,283.92 L560.94,283.82 L563.02,283.52 L565.00,283.03 L566.82,282.37 L568.45,281.54 L569.84,280.57 L573.15,277.85 L576.46,275.14 L579.77,272.43 L583.08,269.71 L584.20,268.62 L585.01,267.44 L585.51,266.20 L585.68,264.93 L585.51,263.66 L585.01,262.42 L584.19,261.24 L583.07,260.15 L581.68,259.18 L580.05,258.35 L578.22,257.68 L576.24,257.19 L574.16,256.89 L572.02,256.79 L569.89,256.89 L567.80,257.19 L565.83,257.68 L564.00,258.35 L562.37,259.18 L560.98,260.15 L557.67,262.86 L554.36,265.58 L551.06,268.29 Z M645.07,557.73 L643.95,558.82 L643.13,560.00 L642.63,561.24 L642.47,562.51 L642.63,563.79 L643.14,565.03 L643.96,566.21 L645.08,567.30 L646.47,568.27 L648.10,569.10 L649.92,569.76 L651.90,570.25 L653.99,570.55 L656.12,570.65 L658.26,570.55 L660.34,570.25 L662.32,569.76 L664.15,569.10 L665.78,568.27 L667.17,567.30 L670.48,564.58 L673.78,561.87 L677.09,559.15 L680.40,556.44 L681.52,555.35 L682.34,554.17 L682.84,552.93 L683.00,551.66 L682.84,550.39 L682.34,549.14 L681.51,547.96 L680.39,546.88 L679.00,545.91 L677.37,545.08 L675.55,544.41 L673.57,543.92 L671.48,543.62 L669.35,543.52 L667.21,543.62 L665.13,543.92 L663.15,544.41 L661.32,545.08 L659.69,545.91 L658.30,546.88 L654.99,549.59 L651.69,552.30 L648.38,555.02 Z M840.24,397.61 L839.12,398.69 L838.30,399.87 L837.81,401.11 L837.64,402.39 L837.81,403.66 L838.31,404.90 L839.13,406.08 L840.25,407.17 L841.64,408.14 L843.27,408.97 L845.10,409.64 L847.08,410.12 L849.16,410.42 L851.30,410.52 L853.43,410.42 L855.51,410.13 L857.49,409.64 L859.32,408.97 L860.95,408.14 L862.34,407.17 L865.65,404.46 L868.96,401.74 L872.26,399.03 L875.57,396.31 L876.69,395.23 L877.51,394.05 L878.01,392.80 L878.18,391.53 L878.01,390.26 L877.51,389.02 L876.69,387.84 L875.57,386.75 L874.17,385.78 L872.55,384.95 L870.72,384.28 L868.74,383.79 L866.65,383.50 L864.52,383.40 L862.38,383.50 L860.30,383.79 L858.32,384.28 L856.49,384.95 L854.87,385.78 L853.47,386.75 L850.17,389.46 L846.86,392.18 L843.55,394.89 Z M442.71,372.08 L443.15,371.45 L443.41,370.78 L443.50,370.10 L443.41,369.42 L443.15,368.75 L442.71,368.12 L442.11,367.54 L441.36,367.02 L440.49,366.57 L439.51,366.21 L438.44,365.95 L437.33,365.79 L436.18,365.74 L435.04,365.79 L433.92,365.95 L432.86,366.21 L431.88,366.57 L431.01,367.02 L430.26,367.54 L429.66,368.12 L429.22,368.75 L428.96,369.42 L428.87,370.10 L428.96,370.78 L429.22,371.45 L429.66,372.08 L430.26,372.66 L431.01,373.18 L431.88,373.63 L432.86,373.98 L433.93,374.25 L435.04,374.41 L436.19,374.46 L437.33,374.41 L438.45,374.25 L439.51,373.98 L440.49,373.63 L441.36,373.18 L442.11,372.66 Z M740.13,502.06 L740.57,501.43 L740.84,500.76 L740.93,500.08 L740.84,499.40 L740.57,498.73 L740.13,498.10 L739.53,497.52 L738.78,497.00 L737.91,496.55 L736.93,496.19 L735.87,495.93 L734.75,495.77 L733.61,495.72 L732.46,495.77 L731.35,495.93 L730.29,496.19 L729.31,496.55 L728.43,497.00 L727.69,497.52 L727.09,498.10 L726.65,498.73 L726.38,499.40 L726.29,500.08 L726.38,500.76 L726.65,501.43 L727.09,502.06 L727.69,502.64 L728.44,503.16 L729.31,503.61 L730.29,503.96 L731.35,504.23 L732.47,504.39 L733.61,504.44 L734.76,504.39 L735.87,504.23 L736.94,503.97 L737.91,503.61 L738.79,503.16 L739.53,502.64 Z" fill="#9f9889" fill-rule="evenodd" stroke="#17150f" stroke-width="1.3" stroke-linejoin="round"/>
<path d="M515.82,651.89 L517.45,653.61 L515.49,652.76 L513.97,651.98 L512.58,651.02 L511.46,649.94 L510.63,648.77 L510.11,647.54 L509.91,646.27" fill="none" stroke="#17150f" stroke-width="2" stroke-linejoin="round" stroke-linecap="round"/>
<path d="M968.64,310.07 L968.64,310.00 L968.62,307.57 L968.61,305.13 L968.61,305.06 L968.60,304.86 L968.59,304.79 L968.35,303.16 L967.87,299.93 L967.85,299.86 L967.80,299.66 L967.78,299.59 L966.98,297.20 L966.18,294.81 L966.15,294.73 L966.08,294.54 L966.04,294.47 L964.62,292.18 L962.78,289.95 L962.73,289.90 L962.59,289.77 L960.47,287.54 L958.34,285.32 L958.30,285.29 L958.11,285.02 L956.79,283.31 L956.20,281.28" fill="none" stroke="#17150f" stroke-width="2" stroke-linejoin="round" stroke-linecap="round"/>
<path d="M1024.69,247.80 L1024.22,247.56 L1018.57,245.11 L1012.92,242.67 L1007.27,240.22 L1001.62,237.78 L995.97,235.33 L990.32,232.89 L984.67,230.44 L979.02,227.99 L973.37,225.55 L967.71,223.10 L962.06,220.66 L956.41,218.21 L950.76,215.76 L945.11,213.32 L939.46,210.87 L933.81,208.43 L928.16,205.98 L922.51,203.53 L916.86,201.09 L911.21,198.64 L905.56,196.20 L899.91,193.75 L894.25,191.31 L888.60,188.86 L882.95,186.41 L877.30,183.97 L871.65,181.52 L866.00,179.08 L860.35,176.63 L854.70,174.18 L849.05,171.74 L843.40,169.29 L837.75,166.85 L832.10,164.40 L826.45,161.96 L820.80,159.51 L815.14,157.06 L809.49,154.62 L803.84,152.17 L798.19,149.73 L792.54,147.28 L786.89,144.83 L781.24,142.39 L775.59,139.94 L769.94,137.50 L764.29,135.05 L758.64,132.61 L752.99,130.16 L747.34,127.71 L741.69,125.27 L741.16,125.08 L740.76,125.36 L736.97,128.46 L733.18,131.57 L729.40,134.68 L725.61,137.78 L721.82,140.89 L718.03,144.00 L714.25,147.11 L713.92,147.42" fill="none" stroke="#17150f" stroke-width="2" stroke-linejoin="round" stroke-linecap="round"/>
<path d="M731.53,160.20 L731.32,161.78 L730.71,163.31 L729.69,164.77 L728.31,166.12 L725.15,168.71 L721.99,171.30 L718.83,173.90 L715.67,176.49 L714.01,177.65 L712.09,178.65 L709.93,179.46 L707.58,180.07 L705.11,180.46 L702.57,180.63 L700.58,180.58 L700.58,180.60 L700.25,180.58 L700.09,180.57 L699.74,180.56 L699.59,180.55 L695.63,180.46 L691.42,180.36 L691.26,180.36 L690.91,180.36 L690.75,180.36 L686.67,180.46 L682.58,180.55 L682.43,180.55 L682.07,180.57 L681.92,180.58 L677.86,180.87 L673.80,181.15 L673.64,181.17 L673.30,181.20 L673.14,181.22 L669.13,181.69 L665.12,182.17 L664.97,182.18 L664.63,182.23 L664.48,182.26 L657.99,183.35 L656.61,183.58 L656.46,183.61 L656.12,183.67 L655.98,183.70 L654.52,184.02 L648.31,185.39 L648.16,185.42 L647.83,185.50 L647.69,185.54 L646.49,185.87 L640.27,187.58 L640.13,187.62 L639.81,187.72 L639.68,187.76 L637.42,188.51 L632.54,190.14 L632.41,190.19 L632.11,190.30 L631.98,190.35 L628.58,191.70 L625.18,193.06 L625.05,193.11 L624.76,193.23 L624.64,193.29 L621.43,194.80 L618.22,196.30 L618.10,196.36 L617.83,196.50 L617.72,196.56 L614.76,198.19 L611.81,199.82 L611.71,199.87 L611.60,199.93 L611.35,200.08 L611.24,200.15 L608.47,201.94 L605.69,203.73 L605.59,203.79 L605.36,203.95 L605.26,204.03 L602.68,205.98 L600.10,207.93 L600.05,207.97 L599.95,208.05 L599.90,208.09 L595.77,211.48 L591.64,214.87 L587.50,218.26 L583.37,221.65 L579.24,225.04 L575.11,228.43 L570.97,231.82 L566.84,235.21 L562.71,238.60 L558.58,241.99 L554.44,245.38 L550.31,248.77 L546.18,252.16 L542.05,255.55 L537.91,258.94 L533.78,262.33 L529.65,265.72 L525.52,269.12 L521.38,272.51 L517.25,275.90 L513.12,279.29 L508.99,282.68 L504.85,286.07 L500.72,289.46 L496.59,292.85 L492.46,296.24 L488.32,299.63 L484.19,303.02 L480.06,306.41 L475.93,309.80 L471.80,313.19 L467.66,316.58 L463.53,319.97 L459.40,323.36 L455.27,326.75 L451.13,330.14 L447.00,333.53 L442.87,336.92 L438.74,340.31 L434.60,343.70 L430.47,347.09 L426.34,350.48 L422.21,353.87 L418.07,357.27 L413.94,360.66 L409.81,364.05 L405.68,367.44 L401.54,370.83 L397.41,374.22 L393.28,377.61 L389.15,381.00 L385.01,384.39 L380.88,387.78 L376.75,391.17 L372.62,394.56 L368.48,397.95 L364.35,401.34 L360.22,404.73 L356.09,408.12 L351.95,411.51 L347.82,414.90 L343.69,418.29 L339.56,421.68 L335.42,425.07 L331.29,428.46 L327.16,431.85 L323.03,435.24 L318.89,438.63 L314.76,442.03 L310.63,445.42 L306.50,448.81 L302.37,452.20 L298.23,455.59 L294.10,458.98 L289.97,462.37 L285.84,465.76 L285.79,465.80 L285.69,465.88 L285.65,465.92 L283.33,467.99 L281.01,470.05 L280.93,470.13 L280.74,470.31 L280.67,470.39 L278.67,472.52 L276.67,474.64 L276.60,474.72 L276.44,474.91 L276.37,474.99 L276.32,475.06 L274.63,477.24 L272.95,479.42 L272.88,479.50 L272.75,479.70 L272.70,479.78 L271.28,482.07 L269.87,484.36 L269.81,484.44 L269.71,484.64 L269.66,484.73 L268.55,487.08 L267.45,489.42 L267.40,489.51 L267.32,489.72 L267.29,489.81 L266.20,493.07 L265.70,494.59 L265.67,494.68 L265.61,494.88 L265.59,494.98 L264.79,499.03 L264.64,499.81 L264.62,499.91 L264.59,500.12 L264.58,500.21 L264.33,504.15 L264.27,505.08 L264.26,505.17 L264.26,505.38" fill="none" stroke="#17150f" stroke-width="2" stroke-linejoin="round" stroke-linecap="round"/>
<path d="M274.63,534.63 L274.48,535.45 L274.12,536.25 L273.55,537.01 L272.79,537.71 L271.87,538.33 L270.79,538.85 L269.59,539.28 L268.30,539.58 L266.94,539.76 L265.55,539.82 L264.16,539.75 L262.81,539.55 L261.52,539.23 L260.34,538.80 L256.62,537.19 L256.34,537.09 L256.13,537.24 L252.03,540.60 L247.92,543.97 L243.82,547.33 L239.72,550.70 L235.62,554.07 L231.51,557.43 L227.41,560.80 L223.31,564.17 L219.20,567.53 L215.10,570.90 L211.00,574.26 L206.89,577.63 L202.79,581.00 L202.62,581.16" fill="none" stroke="#17150f" stroke-width="2" stroke-linejoin="round" stroke-linecap="round"/>
<polygon points="516.28,654.98 516.50,649.94 520.38,656.13 516.28,654.98" fill="#ada89c" stroke="#ada89c" stroke-width="0.5"/>
<polygon points="516.50,649.94 515.82,651.89 520.55,655.96 520.38,656.13" fill="#aca79b" stroke="#aca79b" stroke-width="0.5"/>
<polygon points="515.82,651.89 517.45,653.61 520.30,655.83 520.55,655.96" fill="#a8a296" stroke="#a8a296" stroke-width="0.5"/>
<polygon points="517.45,653.61 515.49,652.76 518.41,655.01 520.30,655.83" fill="#a8a296" stroke="#a8a296" stroke-width="0.5"/>
<polygon points="515.49,652.76 513.97,651.98 517.35,654.48 518.41,655.01" fill="#a8a296" stroke="#a8a296" stroke-width="0.5"/>
<polygon points="513.97,651.98 512.58,651.02 516.44,653.85 517.35,654.48" fill="#a8a296" stroke="#a8a296" stroke-width="0.5"/>
<polygon points="512.58,651.02 511.46,649.94 515.71,653.14 516.44,653.85" fill="#a8a296" stroke="#a8a296" stroke-width="0.5"/>
<polygon points="511.46,649.94 510.63,648.77 515.16,652.38 515.71,653.14" fill="#a8a296" stroke="#a8a296" stroke-width="0.5"/>
<polygon points="510.63,648.77 510.11,647.54 514.82,651.57 515.16,652.38" fill="#a8a296" stroke="#a8a296" stroke-width="0.5"/>
<polygon points="510.11,647.54 509.91,646.27 514.70,650.75 514.82,651.57" fill="#a8a296" stroke="#a8a296" stroke-width="0.5"/>
<polygon points="509.91,646.27 510.05,645.00 514.78,649.92 514.70,650.75" fill="#a9a397" stroke="#a9a397" stroke-width="0.5"/>
<polygon points="510.05,645.00 510.51,643.76 515.08,649.11 514.78,649.92" fill="#aaa498" stroke="#aaa498" stroke-width="0.5"/>
<polygon points="510.51,643.76 511.28,642.58 515.59,648.33 515.08,649.11" fill="#aba69a" stroke="#aba69a" stroke-width="0.5"/>
<polygon points="511.28,642.58 512.36,641.48 516.29,647.62 515.59,648.33" fill="#aca79b" stroke="#aca79b" stroke-width="0.5"/>
<polygon points="512.36,641.48 513.70,640.49 517.17,646.97 516.29,647.62" fill="#aea99d" stroke="#aea99d" stroke-width="0.5"/>
<polygon points="513.70,640.49 515.29,639.64 518.21,646.42 517.17,646.97" fill="#b0ab9f" stroke="#b0ab9f" stroke-width="0.5"/>
<polygon points="515.29,639.64 517.07,638.95 519.37,645.96 518.21,646.42" fill="#b2ada1" stroke="#b2ada1" stroke-width="0.5"/>
<polygon points="517.07,638.95 519.01,638.43 520.64,645.62 519.37,645.96" fill="#b7b2a7" stroke="#b7b2a7" stroke-width="0.5"/>
<polygon points="519.01,638.43 521.07,638.09 521.98,645.40 520.64,645.62" fill="#bbb7ac" stroke="#bbb7ac" stroke-width="0.5"/>
<polygon points="521.07,638.09 523.19,637.94 523.37,645.31 521.98,645.40" fill="#c0bbb1" stroke="#c0bbb1" stroke-width="0.5"/>
<polygon points="523.19,637.94 525.17,637.99 524.76,645.34 523.37,645.31" fill="#c4c0b6" stroke="#c4c0b6" stroke-width="0.5"/>
<polygon points="525.17,637.99 527.29,638.13 526.73,645.48 524.76,645.34" fill="#c6c2b8" stroke="#c6c2b8" stroke-width="0.5"/>
<polygon points="527.29,638.13 527.32,638.14 526.89,645.49 526.73,645.48" fill="#c6c2b8" stroke="#c6c2b8" stroke-width="0.5"/>
<polygon points="527.32,638.14 527.56,638.15 527.24,645.51 526.89,645.49" fill="#c5c1b7" stroke="#c5c1b7" stroke-width="0.5"/>
<polygon points="527.56,638.15 527.58,638.15 527.39,645.51 527.24,645.51" fill="#c4c0b6" stroke="#c4c0b6" stroke-width="0.5"/>
<polygon points="527.58,638.15 531.67,638.24 531.48,645.61 527.39,645.51" fill="#c4c0b6" stroke="#c4c0b6" stroke-width="0.5"/>
<polygon points="531.67,638.24 535.75,638.34 535.57,645.70 531.48,645.61" fill="#c4c0b6" stroke="#c4c0b6" stroke-width="0.5"/>
<polygon points="535.75,638.34 535.78,638.34 535.72,645.71 535.57,645.70" fill="#c4c0b6" stroke="#c4c0b6" stroke-width="0.5"/>
<polygon points="535.78,638.34 536.01,638.34 536.07,645.71 535.72,645.71" fill="#c3bfb5" stroke="#c3bfb5" stroke-width="0.5"/>
<polygon points="536.01,638.34 536.04,638.34 536.23,645.70 536.07,645.71" fill="#c2beb3" stroke="#c2beb3" stroke-width="0.5"/>
<polygon points="536.04,638.34 541.67,638.21 541.86,645.57 536.23,645.70" fill="#c2beb3" stroke="#c2beb3" stroke-width="0.5"/>
<polygon points="541.67,638.21 544.21,638.15 544.40,645.51 541.86,645.57" fill="#c2beb3" stroke="#c2beb3" stroke-width="0.5"/>
<polygon points="544.21,638.15 544.24,638.15 544.55,645.51 544.40,645.51" fill="#c2beb3" stroke="#c2beb3" stroke-width="0.5"/>
<polygon points="544.24,638.15 544.47,638.14 544.91,645.49 544.55,645.51" fill="#c1bcb2" stroke="#c1bcb2" stroke-width="0.5"/>
<polygon points="544.47,638.14 544.50,638.13 545.06,645.48 544.91,645.49" fill="#c0bbb1" stroke="#c0bbb1" stroke-width="0.5"/>
<polygon points="544.50,638.13 550.09,637.74 550.65,645.09 545.06,645.48" fill="#c0bbb1" stroke="#c0bbb1" stroke-width="0.5"/>
<polygon points="550.09,637.74 552.62,637.56 553.18,644.91 550.65,645.09" fill="#c0bbb1" stroke="#c0bbb1" stroke-width="0.5"/>
<polygon points="552.62,637.56 552.64,637.56 553.34,644.90 553.18,644.91" fill="#c0bbb1" stroke="#c0bbb1" stroke-width="0.5"/>
<polygon points="552.64,637.56 552.88,637.54 553.69,644.86 553.34,644.90" fill="#bebaaf" stroke="#bebaaf" stroke-width="0.5"/>
<polygon points="552.88,637.54 552.90,637.54 553.84,644.85 553.69,644.86" fill="#bdb9ae" stroke="#bdb9ae" stroke-width="0.5"/>
<polygon points="552.90,637.54 556.91,637.06 557.85,644.37 553.84,644.85" fill="#bdb9ae" stroke="#bdb9ae" stroke-width="0.5"/>
<polygon points="556.91,637.06 560.92,636.59 561.86,643.90 557.85,644.37" fill="#bdb9ae" stroke="#bdb9ae" stroke-width="0.5"/>
<polygon points="560.92,636.59 560.95,636.58 562.01,643.88 561.86,643.90" fill="#bdb9ae" stroke="#bdb9ae" stroke-width="0.5"/>
<polygon points="560.95,636.58 561.18,636.55 562.35,643.83 562.01,643.88" fill="#bcb8ad" stroke="#bcb8ad" stroke-width="0.5"/>
<polygon points="561.18,636.55 561.20,636.55 562.50,643.80 562.35,643.83" fill="#bbb7ab" stroke="#bbb7ab" stroke-width="0.5"/>
<polygon points="561.20,636.55 565.14,635.88 566.44,643.14 562.50,643.80" fill="#bbb7ab" stroke="#bbb7ab" stroke-width="0.5"/>
<polygon points="565.14,635.88 569.07,635.22 570.37,642.48 566.44,643.14" fill="#bbb7ab" stroke="#bbb7ab" stroke-width="0.5"/>
<polygon points="569.07,635.22 569.10,635.22 570.52,642.46 570.37,642.48" fill="#bbb7ab" stroke="#bbb7ab" stroke-width="0.5"/>
<polygon points="569.10,635.22 569.32,635.18 570.86,642.39 570.52,642.46" fill="#bab5aa" stroke="#bab5aa" stroke-width="0.5"/>
<polygon points="569.32,635.18 569.35,635.17 571.00,642.36 570.86,642.39" fill="#b9b4a9" stroke="#b9b4a9" stroke-width="0.5"/>
<polygon points="569.35,635.17 573.28,634.31 574.93,641.50 571.00,642.36" fill="#b9b4a9" stroke="#b9b4a9" stroke-width="0.5"/>
<polygon points="573.28,634.31 577.02,633.48 578.68,640.67 574.93,641.50" fill="#b9b4a9" stroke="#b9b4a9" stroke-width="0.5"/>
<polygon points="577.02,633.48 577.04,633.48 578.82,640.64 578.68,640.67" fill="#b9b4a9" stroke="#b9b4a9" stroke-width="0.5"/>
<polygon points="577.04,633.48 577.26,633.42 579.15,640.56 578.82,640.64" fill="#b8b3a8" stroke="#b8b3a8" stroke-width="0.5"/>
<polygon points="577.26,633.42 577.28,633.42 579.29,640.52 579.15,640.56" fill="#b7b2a6" stroke="#b7b2a6" stroke-width="0.5"/>
<polygon points="577.28,633.42 577.30,633.41 579.30,640.52 579.29,640.52" fill="#b7b2a6" stroke="#b7b2a6" stroke-width="0.5"/>
<polygon points="577.30,633.41 581.00,632.40 583.01,639.50 579.30,640.52" fill="#b7b2a6" stroke="#b7b2a6" stroke-width="0.5"/>
<polygon points="581.00,632.40 584.71,631.38 586.71,638.48 583.01,639.50" fill="#b7b2a6" stroke="#b7b2a6" stroke-width="0.5"/>
<polygon points="584.71,631.38 584.73,631.37 586.85,638.44 586.71,638.48" fill="#b7b2a6" stroke="#b7b2a6" stroke-width="0.5"/>
<polygon points="584.73,631.37 584.94,631.31 587.17,638.35 586.85,638.44" fill="#b6b1a5" stroke="#b6b1a5" stroke-width="0.5"/>
<polygon points="584.94,631.31 584.96,631.30 587.30,638.30 587.17,638.35" fill="#b4afa4" stroke="#b4afa4" stroke-width="0.5"/>
<polygon points="584.96,631.30 589.39,629.82 591.73,636.82 587.30,638.30" fill="#b4afa4" stroke="#b4afa4" stroke-width="0.5"/>
<polygon points="589.39,629.82 592.10,628.92 594.44,635.92 591.73,636.82" fill="#b4afa4" stroke="#b4afa4" stroke-width="0.5"/>
<polygon points="592.10,628.92 592.12,628.91 594.57,635.88 594.44,635.92" fill="#b4afa4" stroke="#b4afa4" stroke-width="0.5"/>
<polygon points="592.12,628.91 592.32,628.84 594.88,635.77 594.57,635.88" fill="#b3aea2" stroke="#b3aea2" stroke-width="0.5"/>
<polygon points="592.32,628.84 592.34,628.83 595.00,635.71 594.88,635.77" fill="#b2ada1" stroke="#b2ada1" stroke-width="0.5"/>
<polygon points="592.34,628.83 595.74,627.48 598.40,634.36 595.00,635.71" fill="#b2ada1" stroke="#b2ada1" stroke-width="0.5"/>
<polygon points="595.74,627.48 599.14,626.12 601.80,633.01 598.40,634.36" fill="#b2ada1" stroke="#b2ada1" stroke-width="0.5"/>
<polygon points="599.14,626.12 599.16,626.12 601.93,632.96 601.80,633.01" fill="#b2ada1" stroke="#b2ada1" stroke-width="0.5"/>
<polygon points="599.16,626.12 599.36,626.03 602.22,632.83 601.93,632.96" fill="#b1aca0" stroke="#b1aca0" stroke-width="0.5"/>
<polygon points="599.36,626.03 599.37,626.02 602.34,632.78 602.22,632.83" fill="#b1aca0" stroke="#b1aca0" stroke-width="0.5"/>
<polygon points="599.37,626.02 601.03,625.25 603.99,632.00 602.34,632.78" fill="#b1aca0" stroke="#b1aca0" stroke-width="0.5"/>
<polygon points="601.03,625.25 605.80,623.01 608.76,629.76 603.99,632.00" fill="#b1aca0" stroke="#b1aca0" stroke-width="0.5"/>
<polygon points="605.80,623.01 605.82,623.00 608.88,629.70 608.76,629.76" fill="#b1aca0" stroke="#b1aca0" stroke-width="0.5"/>
<polygon points="605.82,623.00 606.00,622.90 609.15,629.56 608.88,629.70" fill="#b0ab9f" stroke="#b0ab9f" stroke-width="0.5"/>
<polygon points="606.00,622.90 606.01,622.89 609.26,629.50 609.15,629.56" fill="#b0ab9f" stroke="#b0ab9f" stroke-width="0.5"/>
<polygon points="606.01,622.89 609.02,621.24 612.27,627.85 609.26,629.50" fill="#b0ab9f" stroke="#b0ab9f" stroke-width="0.5"/>
<polygon points="609.02,621.24 612.02,619.59 615.27,626.19 612.27,627.85" fill="#b0ab9f" stroke="#b0ab9f" stroke-width="0.5"/>
<polygon points="612.02,619.59 612.04,619.58 615.38,626.13 615.27,626.19" fill="#b0ab9f" stroke="#b0ab9f" stroke-width="0.5"/>
<polygon points="612.04,619.58 612.21,619.48 615.63,625.98 615.38,626.13" fill="#afaa9e" stroke="#afaa9e" stroke-width="0.5"/>
<polygon points="612.21,619.48 612.22,619.47 615.74,625.92 615.63,625.98" fill="#afaa9e" stroke="#afaa9e" stroke-width="0.5"/>
<polygon points="612.22,619.47 616.36,616.80 619.88,623.25 615.74,625.92" fill="#afaa9e" stroke="#afaa9e" stroke-width="0.5"/>
<polygon points="616.36,616.80 617.77,615.89 621.29,622.34 619.88,623.25" fill="#afaa9e" stroke="#afaa9e" stroke-width="0.5"/>
<polygon points="617.77,615.89 617.79,615.88 621.39,622.27 621.29,622.34" fill="#afaa9e" stroke="#afaa9e" stroke-width="0.5"/>
<polygon points="617.79,615.88 617.94,615.77 621.62,622.11 621.39,622.27" fill="#aea99d" stroke="#aea99d" stroke-width="0.5"/>
<polygon points="617.94,615.77 617.96,615.76 621.72,622.04 621.62,622.11" fill="#aea99d" stroke="#aea99d" stroke-width="0.5"/>
<polygon points="617.96,615.76 620.54,613.81 624.30,620.08 621.72,622.04" fill="#aea99d" stroke="#aea99d" stroke-width="0.5"/>
<polygon points="620.54,613.81 623.12,611.85 626.88,618.13 624.30,620.08" fill="#aea99d" stroke="#aea99d" stroke-width="0.5"/>
<polygon points="623.12,611.85 623.13,611.85 626.93,618.10 626.88,618.13" fill="#aea99d" stroke="#aea99d" stroke-width="0.5"/>
<polygon points="623.13,611.85 623.20,611.79 627.03,618.01 626.93,618.10" fill="#ada89c" stroke="#ada89c" stroke-width="0.5"/>
<polygon points="623.20,611.79 623.21,611.78 627.08,617.97 627.03,618.01" fill="#ada89c" stroke="#ada89c" stroke-width="0.5"/>
<polygon points="623.21,611.78 627.33,608.40 631.20,614.59 627.08,617.97" fill="#ada89c" stroke="#ada89c" stroke-width="0.5"/>
<polygon points="627.33,608.40 631.45,605.02 635.32,611.21 631.20,614.59" fill="#ada89c" stroke="#ada89c" stroke-width="0.5"/>
<polygon points="631.45,605.02 635.57,601.64 639.45,607.83 635.32,611.21" fill="#ada89c" stroke="#ada89c" stroke-width="0.5"/>
<polygon points="635.57,601.64 639.69,598.26 643.57,604.45 639.45,607.83" fill="#ada89c" stroke="#ada89c" stroke-width="0.5"/>
<polygon points="639.69,598.26 643.82,594.88 647.69,601.07 643.57,604.45" fill="#ada89c" stroke="#ada89c" stroke-width="0.5"/>
<polygon points="643.82,594.88 647.94,591.49 651.81,597.68 647.69,601.07" fill="#ada89c" stroke="#ada89c" stroke-width="0.5"/>
<polygon points="647.94,591.49 652.06,588.11 655.93,594.30 651.81,597.68" fill="#ada89c" stroke="#ada89c" stroke-width="0.5"/>
<polygon points="652.06,588.11 656.18,584.73 660.06,590.92 655.93,594.30" fill="#ada89c" stroke="#ada89c" stroke-width="0.5"/>
<polygon points="656.18,584.73 660.30,581.35 664.18,587.54 660.06,590.92" fill="#ada89c" stroke="#ada89c" stroke-width="0.5"/>
<polygon points="660.30,581.35 664.43,577.97 668.30,584.16 664.18,587.54" fill="#ada89c" stroke="#ada89c" stroke-width="0.5"/>
<polygon points="664.43,577.97 668.55,574.59 672.42,580.78 668.30,584.16" fill="#ada89c" stroke="#ada89c" stroke-width="0.5"/>
<polygon points="668.55,574.59 672.67,571.20 676.54,577.39 672.42,580.78" fill="#ada89c" stroke="#ada89c" stroke-width="0.5"/>
<polygon points="672.67,571.20 676.79,567.82 680.66,574.01 676.54,577.39" fill="#ada89c" stroke="#ada89c" stroke-width="0.5"/>
<polygon points="676.79,567.82 680.91,564.44 684.79,570.63 680.66,574.01" fill="#ada89c" stroke="#ada89c" stroke-width="0.5"/>
<polygon points="680.91,564.44 685.04,561.06 688.91,567.25 684.79,570.63" fill="#ada89c" stroke="#ada89c" stroke-width="0.5"/>
<polygon points="685.04,561.06 689.16,557.68 693.03,563.87 688.91,567.25" fill="#ada89c" stroke="#ada89c" stroke-width="0.5"/>
<polygon points="689.16,557.68 693.28,554.29 697.15,560.49 693.03,563.87" fill="#ada89c" stroke="#ada89c" stroke-width="0.5"/>
<polygon points="693.28,554.29 697.40,550.91 701.27,557.10 697.15,560.49" fill="#ada89c" stroke="#ada89c" stroke-width="0.5"/>
<polygon points="697.40,550.91 701.52,547.53 705.40,553.72 701.27,557.10" fill="#ada89c" stroke="#ada89c" stroke-width="0.5"/>
<polygon points="701.52,547.53 705.65,544.15 709.52,550.34 705.40,553.72" fill="#ada89c" stroke="#ada89c" stroke-width="0.5"/>
<polygon points="705.65,544.15 709.77,540.77 713.64,546.96 709.52,550.34" fill="#ada89c" stroke="#ada89c" stroke-width="0.5"/>
<polygon points="709.77,540.77 713.89,537.39 717.76,543.58 713.64,546.96" fill="#ada89c" stroke="#ada89c" stroke-width="0.5"/>
<polygon points="713.89,537.39 718.01,534.00 721.88,540.19 717.76,543.58" fill="#ada89c" stroke="#ada89c" stroke-width="0.5"/>
<polygon points="718.01,534.00 722.13,530.62 726.01,536.81 721.88,540.19" fill="#ada89c" stroke="#ada89c" stroke-width="0.5"/>
<polygon points="722.13,530.62 726.25,527.24 730.13,533.43 726.01,536.81" fill="#ada89c" stroke="#ada89c" stroke-width="0.5"/>
<polygon points="726.25,527.24 730.38,523.86 734.25,530.05 730.13,533.43" fill="#ada89c" stroke="#ada89c" stroke-width="0.5"/>
<polygon points="730.38,523.86 734.50,520.48 738.37,526.67 734.25,530.05" fill="#ada89c" stroke="#ada89c" stroke-width="0.5"/>
<polygon points="734.50,520.48 738.62,517.10 742.49,523.29 738.37,526.67" fill="#ada89c" stroke="#ada89c" stroke-width="0.5"/>
<polygon points="738.62,517.10 742.74,513.71 746.61,519.90 742.49,523.29" fill="#ada89c" stroke="#ada89c" stroke-width="0.5"/>
<polygon points="742.74,513.71 746.86,510.33 750.74,516.52 746.61,519.90" fill="#ada89c" stroke="#ada89c" stroke-width="0.5"/>
<polygon points="746.86,510.33 750.99,506.95 754.86,513.14 750.74,516.52" fill="#ada89c" stroke="#ada89c" stroke-width="0.5"/>
<polygon points="750.99,506.95 755.11,503.57 758.98,509.76 754.86,513.14" fill="#ada89c" stroke="#ada89c" stroke-width="0.5"/>
<polygon points="755.11,503.57 759.23,500.19 763.10,506.38 758.98,509.76" fill="#ada89c" stroke="#ada89c" stroke-width="0.5"/>
<polygon points="759.23,500.19 763.35,496.81 767.22,503.00 763.10,506.38" fill="#ada89c" stroke="#ada89c" stroke-width="0.5"/>
<polygon points="763.35,496.81 767.47,493.42 771.35,499.61 767.22,503.00" fill="#ada89c" stroke="#ada89c" stroke-width="0.5"/>
<polygon points="767.47,493.42 771.60,490.04 775.47,496.23 771.35,499.61" fill="#ada89c" stroke="#ada89c" stroke-width="0.5"/>
<polygon points="771.60,490.04 775.72,486.66 779.59,492.85 775.47,496.23" fill="#ada89c" stroke="#ada89c" stroke-width="0.5"/>
<polygon points="775.72,486.66 779.84,483.28 783.71,489.47 779.59,492.85" fill="#ada89c" stroke="#ada89c" stroke-width="0.5"/>
<polygon points="779.84,483.28 783.96,479.90 787.83,486.09 783.71,489.47" fill="#ada89c" stroke="#ada89c" stroke-width="0.5"/>
<polygon points="783.96,479.90 788.08,476.51 791.96,482.70 787.83,486.09" fill="#ada89c" stroke="#ada89c" stroke-width="0.5"/>
<polygon points="788.08,476.51 792.21,473.13 796.08,479.32 791.96,482.70" fill="#ada89c" stroke="#ada89c" stroke-width="0.5"/>
<polygon points="792.21,473.13 796.33,469.75 800.20,475.94 796.08,479.32" fill="#ada89c" stroke="#ada89c" stroke-width="0.5"/>
<polygon points="796.33,469.75 800.45,466.37 804.32,472.56 800.20,475.94" fill="#ada89c" stroke="#ada89c" stroke-width="0.5"/>
<polygon points="800.45,466.37 804.57,462.99 808.44,469.18 804.32,472.56" fill="#ada89c" stroke="#ada89c" stroke-width="0.5"/>
<polygon points="804.57,462.99 808.69,459.61 812.57,465.80 808.44,469.18" fill="#ada89c" stroke="#ada89c" stroke-width="0.5"/>
<polygon points="808.69,459.61 812.81,456.22 816.69,462.41 812.57,465.80" fill="#ada89c" stroke="#ada89c" stroke-width="0.5"/>
<polygon points="812.81,456.22 816.94,452.84 820.81,459.03 816.69,462.41" fill="#ada89c" stroke="#ada89c" stroke-width="0.5"/>
<polygon points="816.94,452.84 821.06,449.46 824.93,455.65 820.81,459.03" fill="#ada89c" stroke="#ada89c" stroke-width="0.5"/>
<polygon points="821.06,449.46 825.18,446.08 829.05,452.27 824.93,455.65" fill="#ada89c" stroke="#ada89c" stroke-width="0.5"/>
<polygon points="825.18,446.08 829.30,442.70 833.17,448.89 829.05,452.27" fill="#ada89c" stroke="#ada89c" stroke-width="0.5"/>
<polygon points="829.30,442.70 833.42,439.32 837.30,445.51 833.17,448.89" fill="#ada89c" stroke="#ada89c" stroke-width="0.5"/>
<polygon points="833.42,439.32 837.55,435.93 841.42,442.12 837.30,445.51" fill="#ada89c" stroke="#ada89c" stroke-width="0.5"/>
<polygon points="837.55,435.93 841.67,432.55 845.54,438.74 841.42,442.12" fill="#ada89c" stroke="#ada89c" stroke-width="0.5"/>
<polygon points="841.67,432.55 845.79,429.17 849.66,435.36 845.54,438.74" fill="#ada89c" stroke="#ada89c" stroke-width="0.5"/>
<polygon points="845.79,429.17 849.91,425.79 853.78,431.98 849.66,435.36" fill="#ada89c" stroke="#ada89c" stroke-width="0.5"/>
<polygon points="849.91,425.79 854.03,422.41 857.91,428.60 853.78,431.98" fill="#ada89c" stroke="#ada89c" stroke-width="0.5"/>
<polygon points="854.03,422.41 858.16,419.02 862.03,425.22 857.91,428.60" fill="#ada89c" stroke="#ada89c" stroke-width="0.5"/>
<polygon points="858.16,419.02 862.28,415.64 866.15,421.83 862.03,425.22" fill="#ada89c" stroke="#ada89c" stroke-width="0.5"/>
<polygon points="862.28,415.64 866.40,412.26 870.27,418.45 866.15,421.83" fill="#ada89c" stroke="#ada89c" stroke-width="0.5"/>
<polygon points="866.40,412.26 870.52,408.88 874.39,415.07 870.27,418.45" fill="#ada89c" stroke="#ada89c" stroke-width="0.5"/>
<polygon points="870.52,408.88 874.64,405.50 878.52,411.69 874.39,415.07" fill="#ada89c" stroke="#ada89c" stroke-width="0.5"/>
<polygon points="874.64,405.50 878.76,402.12 882.64,408.31 878.52,411.69" fill="#ada89c" stroke="#ada89c" stroke-width="0.5"/>
<polygon points="878.76,402.12 882.89,398.73 886.76,404.92 882.64,408.31" fill="#ada89c" stroke="#ada89c" stroke-width="0.5"/>
<polygon points="882.89,398.73 887.01,395.35 890.88,401.54 886.76,404.92" fill="#ada89c" stroke="#ada89c" stroke-width="0.5"/>
<polygon points="887.01,395.35 891.13,391.97 895.00,398.16 890.88,401.54" fill="#ada89c" stroke="#ada89c" stroke-width="0.5"/>
<polygon points="891.13,391.97 895.25,388.59 899.13,394.78 895.00,398.16" fill="#ada89c" stroke="#ada89c" stroke-width="0.5"/>
<polygon points="895.25,388.59 899.37,385.21 903.25,391.40 899.13,394.78" fill="#ada89c" stroke="#ada89c" stroke-width="0.5"/>
<polygon points="899.37,385.21 903.50,381.83 907.37,388.02 903.25,391.40" fill="#ada89c" stroke="#ada89c" stroke-width="0.5"/>
<polygon points="903.50,381.83 907.62,378.44 911.49,384.63 907.37,388.02" fill="#ada89c" stroke="#ada89c" stroke-width="0.5"/>
<polygon points="907.62,378.44 911.74,375.06 915.61,381.25 911.49,384.63" fill="#ada89c" stroke="#ada89c" stroke-width="0.5"/>
<polygon points="911.74,375.06 915.86,371.68 919.73,377.87 915.61,381.25" fill="#ada89c" stroke="#ada89c" stroke-width="0.5"/>
<polygon points="915.86,371.68 919.98,368.30 923.86,374.49 919.73,377.87" fill="#ada89c" stroke="#ada89c" stroke-width="0.5"/>
<polygon points="919.98,368.30 924.11,364.92 927.98,371.11 923.86,374.49" fill="#ada89c" stroke="#ada89c" stroke-width="0.5"/>
<polygon points="924.11,364.92 928.23,361.54 932.10,367.73 927.98,371.11" fill="#ada89c" stroke="#ada89c" stroke-width="0.5"/>
<polygon points="928.23,361.54 932.35,358.15 936.22,364.34 932.10,367.73" fill="#ada89c" stroke="#ada89c" stroke-width="0.5"/>
<polygon points="932.35,358.15 936.47,354.77 940.34,360.96 936.22,364.34" fill="#ada89c" stroke="#ada89c" stroke-width="0.5"/>
<polygon points="936.47,354.77 940.59,351.39 944.47,357.58 940.34,360.96" fill="#ada89c" stroke="#ada89c" stroke-width="0.5"/>
<polygon points="940.59,351.39 944.92,348.09 948.59,353.96 944.47,357.58" fill="#ada89c" stroke="#ada89c" stroke-width="0.5"/>
<polygon points="944.92,348.09 944.93,348.09 948.63,353.92 948.59,353.96" fill="#ada89c" stroke="#ada89c" stroke-width="0.5"/>
<polygon points="944.93,348.09 945.00,348.03 948.73,353.83 948.63,353.92" fill="#ada89c" stroke="#ada89c" stroke-width="0.5"/>
<polygon points="945.00,348.03 945.02,348.02 948.78,353.79 948.73,353.83" fill="#ada89c" stroke="#ada89c" stroke-width="0.5"/>
<polygon points="945.02,348.02 947.49,346.02 951.09,351.54 948.78,353.79" fill="#ada89c" stroke="#ada89c" stroke-width="0.5"/>
<polygon points="947.49,346.02 949.96,344.02 953.41,349.30 951.09,351.54" fill="#ada89c" stroke="#ada89c" stroke-width="0.5"/>
<polygon points="949.96,344.02 949.99,344.00 953.50,349.21 953.41,349.30" fill="#ada89c" stroke="#ada89c" stroke-width="0.5"/>
<polygon points="949.99,344.00 950.14,343.87 953.68,349.02 953.50,349.21" fill="#aca79b" stroke="#aca79b" stroke-width="0.5"/>
<polygon points="950.14,343.87 950.17,343.85 953.76,348.93 953.68,349.02" fill="#aca79b" stroke="#aca79b" stroke-width="0.5"/>
<polygon points="950.17,343.85 951.26,342.80 954.77,347.77 953.76,348.93" fill="#aca79b" stroke="#aca79b" stroke-width="0.5"/>
<polygon points="951.26,342.80 954.48,339.71 957.75,344.33 954.77,347.77" fill="#aca79b" stroke="#aca79b" stroke-width="0.5"/>
<polygon points="954.48,339.71 954.51,339.68 957.83,344.25 957.75,344.33" fill="#aca79b" stroke="#aca79b" stroke-width="0.5"/>
<polygon points="954.51,339.68 954.65,339.55 957.99,344.04 957.83,344.25" fill="#aca79b" stroke="#aca79b" stroke-width="0.5"/>
<polygon points="954.65,339.55 954.68,339.52 958.05,343.95 957.99,344.04" fill="#aca69a" stroke="#aca69a" stroke-width="0.5"/>
<polygon points="954.68,339.52 956.55,337.35 959.76,341.57 958.05,343.95" fill="#aca69a" stroke="#aca69a" stroke-width="0.5"/>
<polygon points="956.55,337.35 958.43,335.19 961.47,339.19 959.76,341.57" fill="#aca69a" stroke="#aca69a" stroke-width="0.5"/>
<polygon points="958.43,335.19 958.46,335.15 961.54,339.10 961.47,339.19" fill="#aca69a" stroke="#aca69a" stroke-width="0.5"/>
<polygon points="958.46,335.15 958.58,335.01 961.67,338.89 961.54,339.10" fill="#aba69a" stroke="#aba69a" stroke-width="0.5"/>
<polygon points="958.58,335.01 958.61,334.97 961.73,338.79 961.67,338.89" fill="#aba69a" stroke="#aba69a" stroke-width="0.5"/>
<polygon points="958.61,334.97 960.96,331.63 963.83,335.15 961.73,338.79" fill="#aba69a" stroke="#aba69a" stroke-width="0.5"/>
<polygon points="960.96,331.63 961.77,330.47 964.56,333.88 963.83,335.15" fill="#aba69a" stroke="#aba69a" stroke-width="0.5"/>
<polygon points="961.77,330.47 961.80,330.43 964.61,333.79 964.56,333.88" fill="#aba69a" stroke="#aba69a" stroke-width="0.5"/>
<polygon points="961.80,330.43 961.91,330.28 964.72,333.58 964.61,333.79" fill="#aba599" stroke="#aba599" stroke-width="0.5"/>
<polygon points="961.91,330.28 961.93,330.23 964.76,333.48 964.72,333.58" fill="#aaa599" stroke="#aaa599" stroke-width="0.5"/>
<polygon points="961.93,330.23 963.21,327.92 965.87,330.97 964.76,333.48" fill="#aaa599" stroke="#aaa599" stroke-width="0.5"/>
<polygon points="963.21,327.92 964.48,325.60 966.98,328.46 965.87,330.97" fill="#aaa599" stroke="#aaa599" stroke-width="0.5"/>
<polygon points="964.48,325.60 964.51,325.55 967.02,328.37 966.98,328.46" fill="#aaa599" stroke="#aaa599" stroke-width="0.5"/>
<polygon points="964.51,325.55 964.60,325.39 967.10,328.15 967.02,328.37" fill="#aaa599" stroke="#aaa599" stroke-width="0.5"/>
<polygon points="964.60,325.39 964.62,325.34 967.13,328.05 967.10,328.15" fill="#aaa498" stroke="#aaa498" stroke-width="0.5"/>
<polygon points="964.62,325.34 965.35,323.54 967.74,326.12 967.13,328.05" fill="#aaa498" stroke="#aaa498" stroke-width="0.5"/>
<polygon points="965.35,323.54 966.54,320.60 968.73,322.96 967.74,326.12" fill="#aaa498" stroke="#aaa498" stroke-width="0.5"/>
<polygon points="966.54,320.60 966.57,320.54 968.76,322.86 968.73,322.96" fill="#aaa498" stroke="#aaa498" stroke-width="0.5"/>
<polygon points="966.57,320.54 966.63,320.37 968.81,322.64 968.76,322.86" fill="#aaa498" stroke="#aaa498" stroke-width="0.5"/>
<polygon points="966.63,320.37 966.64,320.31 968.83,322.54 968.81,322.64" fill="#a9a498" stroke="#a9a498" stroke-width="0.5"/>
<polygon points="966.64,320.31 967.28,317.91 969.31,319.98 968.83,322.54" fill="#a9a498" stroke="#a9a498" stroke-width="0.5"/>
<polygon points="967.28,317.91 967.92,315.51 969.79,317.41 969.31,319.98" fill="#a9a498" stroke="#a9a498" stroke-width="0.5"/>
<polygon points="967.92,315.51 967.92,315.50 969.79,317.40 969.79,317.41" fill="#a9a498" stroke="#a9a498" stroke-width="0.5"/>
<polygon points="967.92,315.50 967.94,315.44 969.81,317.30 969.79,317.40" fill="#a9a498" stroke="#a9a498" stroke-width="0.5"/>
<polygon points="967.94,315.44 967.98,315.25 969.83,317.08 969.81,317.30" fill="#a9a397" stroke="#a9a397" stroke-width="0.5"/>
<polygon points="967.98,315.25 967.99,315.19 969.84,316.98 969.83,317.08" fill="#a9a397" stroke="#a9a397" stroke-width="0.5"/>
<polygon points="967.99,315.19 968.30,312.82 969.99,314.46 969.84,316.98" fill="#a9a397" stroke="#a9a397" stroke-width="0.5"/>
<polygon points="968.30,312.82 968.62,310.33 970.16,311.82 969.99,314.46" fill="#a9a397" stroke="#a9a397" stroke-width="0.5"/>
<polygon points="968.62,310.33 968.63,310.26 970.16,311.72 970.16,311.82" fill="#a9a397" stroke="#a9a397" stroke-width="0.5"/>
<polygon points="968.63,310.26 968.64,310.07 970.16,311.50 970.16,311.72" fill="#a9a397" stroke="#a9a397" stroke-width="0.5"/>
<polygon points="968.64,310.07 968.64,310.00 970.16,311.40 970.16,311.50" fill="#a8a296" stroke="#a8a296" stroke-width="0.5"/>
<polygon points="968.64,310.00 968.62,307.57 970.00,308.83 970.16,311.40" fill="#a8a296" stroke="#a8a296" stroke-width="0.5"/>
<polygon points="968.62,307.57 968.61,305.13 969.83,306.26 970.00,308.83" fill="#a8a296" stroke="#a8a296" stroke-width="0.5"/>
<polygon points="968.61,305.13 968.61,305.06 969.83,306.16 969.83,306.26" fill="#a8a296" stroke="#a8a296" stroke-width="0.5"/>
<polygon points="968.61,305.06 968.60,304.86 969.80,305.94 969.83,306.16" fill="#a8a296" stroke="#a8a296" stroke-width="0.5"/>
<polygon points="968.60,304.86 968.59,304.79 969.78,305.84 969.80,305.94" fill="#a8a296" stroke="#a8a296" stroke-width="0.5"/>
<polygon points="968.59,304.79 968.35,303.16 969.46,304.13 969.78,305.84" fill="#a8a296" stroke="#a8a296" stroke-width="0.5"/>
<polygon points="968.35,303.16 967.87,299.93 968.82,300.77 969.46,304.13" fill="#a8a296" stroke="#a8a296" stroke-width="0.5"/>
<polygon points="967.87,299.93 967.85,299.86 968.80,300.68 968.82,300.77" fill="#a8a296" stroke="#a8a296" stroke-width="0.5"/>
<polygon points="967.85,299.86 967.80,299.66 968.74,300.47 968.80,300.68" fill="#a8a296" stroke="#a8a296" stroke-width="0.5"/>
<polygon points="967.80,299.66 967.78,299.59 968.71,300.38 968.74,300.47" fill="#a8a296" stroke="#a8a296" stroke-width="0.5"/>
<polygon points="967.78,299.59 966.98,297.20 967.92,297.99 968.71,300.38" fill="#a8a296" stroke="#a8a296" stroke-width="0.5"/>
<polygon points="966.98,297.20 966.18,294.81 967.12,295.60 967.92,297.99" fill="#a8a296" stroke="#a8a296" stroke-width="0.5"/>
<polygon points="966.18,294.81 966.15,294.73 967.09,295.51 967.12,295.60" fill="#a8a296" stroke="#a8a296" stroke-width="0.5"/>
<polygon points="966.15,294.73 966.08,294.54 967.00,295.31 967.09,295.51" fill="#a8a296" stroke="#a8a296" stroke-width="0.5"/>
<polygon points="966.08,294.54 966.04,294.47 966.96,295.22 967.00,295.31" fill="#a8a296" stroke="#a8a296" stroke-width="0.5"/>
<polygon points="966.04,294.47 964.62,292.18 965.85,293.18 966.96,295.22" fill="#a8a296" stroke="#a8a296" stroke-width="0.5"/>
<polygon points="964.62,292.18 962.78,289.95 964.74,291.54 965.85,293.18" fill="#a8a296" stroke="#a8a296" stroke-width="0.5"/>
<polygon points="962.78,289.95 962.73,289.90 964.70,291.48 964.74,291.54" fill="#a8a296" stroke="#a8a296" stroke-width="0.5"/>
<polygon points="962.73,289.90 962.59,289.77 964.59,291.34 964.70,291.48" fill="#a8a296" stroke="#a8a296" stroke-width="0.5"/>
<polygon points="962.59,289.77 960.47,287.54 963.12,289.63 964.59,291.34" fill="#a8a296" stroke="#a8a296" stroke-width="0.5"/>
<polygon points="960.47,287.54 958.34,285.32 961.65,287.92 963.12,289.63" fill="#a8a296" stroke="#a8a296" stroke-width="0.5"/>
<polygon points="958.34,285.32 958.30,285.29 961.61,287.87 961.65,287.92" fill="#a8a296" stroke="#a8a296" stroke-width="0.5"/>
<polygon points="958.30,285.29 958.11,285.02 961.55,287.81 961.61,287.87" fill="#a8a296" stroke="#a8a296" stroke-width="0.5"/>
<polygon points="958.11,285.02 956.79,283.31 960.80,286.70 961.55,287.81" fill="#a8a296" stroke="#a8a296" stroke-width="0.5"/>
<polygon points="956.79,283.31 956.20,281.28 960.50,285.28 960.80,286.70" fill="#a8a296" stroke="#a8a296" stroke-width="0.5"/>
<polygon points="956.20,281.28 956.39,279.22 960.66,283.63 960.50,285.28" fill="#a9a397" stroke="#a9a397" stroke-width="0.5"/>
<polygon points="956.39,279.22 957.14,277.20 961.26,282.03 960.66,283.63" fill="#aaa498" stroke="#aaa498" stroke-width="0.5"/>
<polygon points="957.14,277.20 958.44,275.29 962.29,280.50 961.26,282.03" fill="#aba69a" stroke="#aba69a" stroke-width="0.5"/>
<polygon points="958.44,275.29 960.16,273.59 963.72,279.09 962.29,280.50" fill="#aca79b" stroke="#aca79b" stroke-width="0.5"/>
<polygon points="960.16,273.59 963.04,271.23 966.52,276.80 963.72,279.09" fill="#ada89c" stroke="#ada89c" stroke-width="0.5"/>
<polygon points="963.04,271.23 965.91,268.87 969.32,274.50 966.52,276.80" fill="#ada89c" stroke="#ada89c" stroke-width="0.5"/>
<polygon points="965.91,268.87 967.99,267.42 971.04,273.30 969.32,274.50" fill="#aea99d" stroke="#aea99d" stroke-width="0.5"/>
<polygon points="967.99,267.42 970.52,266.13 973.06,272.27 971.04,273.30" fill="#b0ab9f" stroke="#b0ab9f" stroke-width="0.5"/>
<polygon points="970.52,266.13 973.36,265.10 975.32,271.45 973.06,272.27" fill="#b3aea2" stroke="#b3aea2" stroke-width="0.5"/>
<polygon points="973.36,265.10 976.43,264.34 977.76,270.84 975.32,271.45" fill="#b8b3a8" stroke="#b8b3a8" stroke-width="0.5"/>
<polygon points="976.43,264.34 979.67,263.88 980.34,270.48 977.76,270.84" fill="#bcb8ad" stroke="#bcb8ad" stroke-width="0.5"/>
<polygon points="979.67,263.88 982.98,263.72 982.98,270.35 980.34,270.48" fill="#c1bcb2" stroke="#c1bcb2" stroke-width="0.5"/>
<polygon points="982.98,263.72 986.30,263.88 985.63,270.48 982.98,270.35" fill="#c5c1b7" stroke="#c5c1b7" stroke-width="0.5"/>
<polygon points="986.30,263.88 989.53,264.34 988.20,270.84 985.63,270.48" fill="#c4c0b6" stroke="#c4c0b6" stroke-width="0.5"/>
<polygon points="989.53,264.34 992.61,265.10 990.65,271.45 988.20,270.84" fill="#c2beb4" stroke="#c2beb4" stroke-width="0.5"/>
<polygon points="992.61,265.10 995.35,266.09 992.91,272.27 990.65,271.45" fill="#c0bcb2" stroke="#c0bcb2" stroke-width="0.5"/>
<polygon points="995.35,266.09 999.43,267.86 996.93,274.01 992.91,272.27" fill="#bebab0" stroke="#bebab0" stroke-width="0.5"/>
<polygon points="999.43,267.86 996.78,267.61 997.46,274.21 996.93,274.01" fill="#c0bcb2" stroke="#c0bcb2" stroke-width="0.5"/>
<polygon points="996.78,267.61 997.86,269.86 997.86,269.86 997.46,274.21" fill="#aea99d" stroke="#aea99d" stroke-width="0.5"/>
<path d="M516.28,654.98 L516.50,649.94 L515.82,651.89 L517.45,653.61 L515.49,652.76 L513.97,651.98 L512.58,651.02 L511.46,649.94 L510.63,648.77 L510.11,647.54 L509.91,646.27 L510.05,645.00 L510.51,643.76 L511.28,642.58 L512.36,641.48 L513.70,640.49 L515.29,639.64 L517.07,638.95 L519.01,638.43 L521.07,638.09 L523.19,637.94 L525.17,637.99 L527.29,638.13 L527.32,638.14 L527.56,638.15 L527.58,638.15 L531.67,638.24 L535.75,638.34 L535.78,638.34 L536.01,638.34 L536.04,638.34 L541.67,638.21 L544.21,638.15 L544.24,638.15 L544.47,638.14 L544.50,638.13 L550.09,637.74 L552.62,637.56 L552.64,637.56 L552.88,637.54 L552.90,637.54 L556.91,637.06 L560.92,636.59 L560.95,636.58 L561.18,636.55 L561.20,636.55 L565.14,635.88 L569.07,635.22 L569.10,635.22 L569.32,635.18 L569.35,635.17 L573.28,634.31 L577.02,633.48 L577.04,633.48 L577.26,633.42 L577.28,633.42 L577.30,633.41 L581.00,632.40 L584.71,631.38 L584.73,631.37 L584.94,631.31 L584.96,631.30 L589.39,629.82 L592.10,628.92 L592.12,628.91 L592.32,628.84 L592.34,628.83 L595.74,627.48 L599.14,626.12 L599.16,626.12 L599.36,626.03 L599.37,626.02 L601.03,625.25 L605.80,623.01 L605.82,623.00 L606.00,622.90 L606.01,622.89 L609.02,621.24 L612.02,619.59 L612.04,619.58 L612.21,619.48 L612.22,619.47 L616.36,616.80 L617.77,615.89 L617.79,615.88 L617.94,615.77 L617.96,615.76 L620.54,613.81 L623.12,611.85 L623.13,611.85 L623.20,611.79 L623.21,611.78 L627.33,608.40 L631.45,605.02 L635.57,601.64 L639.69,598.26 L643.82,594.88 L647.94,591.49 L652.06,588.11 L656.18,584.73 L660.30,581.35 L664.43,577.97 L668.55,574.59 L672.67,571.20 L676.79,567.82 L680.91,564.44 L685.04,561.06 L689.16,557.68 L693.28,554.29 L697.40,550.91 L701.52,547.53 L705.65,544.15 L709.77,540.77 L713.89,537.39 L718.01,534.00 L722.13,530.62 L726.25,527.24 L730.38,523.86 L734.50,520.48 L738.62,517.10 L742.74,513.71 L746.86,510.33 L750.99,506.95 L755.11,503.57 L759.23,500.19 L763.35,496.81 L767.47,493.42 L771.60,490.04 L775.72,486.66 L779.84,483.28 L783.96,479.90 L788.08,476.51 L792.21,473.13 L796.33,469.75 L800.45,466.37 L804.57,462.99 L808.69,459.61 L812.81,456.22 L816.94,452.84 L821.06,449.46 L825.18,446.08 L829.30,442.70 L833.42,439.32 L837.55,435.93 L841.67,432.55 L845.79,429.17 L849.91,425.79 L854.03,422.41 L858.16,419.02 L862.28,415.64 L866.40,412.26 L870.52,408.88 L874.64,405.50 L878.76,402.12 L882.89,398.73 L887.01,395.35 L891.13,391.97 L895.25,388.59 L899.37,385.21 L903.50,381.83 L907.62,378.44 L911.74,375.06 L915.86,371.68 L919.98,368.30 L924.11,364.92 L928.23,361.54 L932.35,358.15 L936.47,354.77 L940.59,351.39 L944.92,348.09 L944.93,348.09 L945.00,348.03 L945.02,348.02 L947.49,346.02 L949.96,344.02 L949.99,344.00 L950.14,343.87 L950.17,343.85 L951.26,342.80 L954.48,339.71 L954.51,339.68 L954.65,339.55 L954.68,339.52 L956.55,337.35 L958.43,335.19 L958.46,335.15 L958.58,335.01 L958.61,334.97 L960.96,331.63 L961.77,330.47 L961.80,330.43 L961.91,330.28 L961.93,330.23 L963.21,327.92 L964.48,325.60 L964.51,325.55 L964.60,325.39 L964.62,325.34 L965.35,323.54 L966.54,320.60 L966.57,320.54 L966.63,320.37 L966.64,320.31 L967.28,317.91 L967.92,315.51 L967.92,315.50 L967.94,315.44 L967.98,315.25 L967.99,315.19 L968.30,312.82 L968.62,310.33 L968.63,310.26 L968.64,310.07 L968.64,310.00 L968.62,307.57 L968.61,305.13 L968.61,305.06 L968.60,304.86 L968.59,304.79 L968.35,303.16 L967.87,299.93 L967.85,299.86 L967.80,299.66 L967.78,299.59 L966.98,297.20 L966.18,294.81 L966.15,294.73 L966.08,294.54 L966.04,294.47 L964.62,292.18 L962.78,289.95 L962.73,289.90 L962.59,289.77 L960.47,287.54 L958.34,285.32 L958.30,285.29 L958.11,285.02 L956.79,283.31 L956.20,281.28 L956.39,279.22 L957.14,277.20 L958.44,275.29 L960.16,273.59 L963.04,271.23 L965.91,268.87 L967.99,267.42 L970.52,266.13 L973.36,265.10 L976.43,264.34 L979.67,263.88 L982.98,263.72 L986.30,263.88 L989.53,264.34 L992.61,265.10 L995.35,266.09 L999.43,267.86 L996.78,267.61 L997.86,269.86" fill="none" stroke="#17150f" stroke-width="1.3" stroke-linejoin="round"/>
<path d="M516.28,654.98 L520.38,656.13 L520.55,655.96 L520.30,655.83 L518.41,655.01 L517.35,654.48 L516.44,653.85 L515.71,653.14 L515.16,652.38 L514.82,651.57 L514.70,650.75 L514.78,649.92 L515.08,649.11 L515.59,648.33 L516.29,647.62 L517.17,646.97 L518.21,646.42 L519.37,645.96 L520.64,645.62 L521.98,645.40 L523.37,645.31 L524.76,645.34 L526.73,645.48 L526.89,645.49 L527.24,645.51 L527.39,645.51 L531.48,645.61 L535.57,645.70 L535.72,645.71 L536.07,645.71 L536.23,645.70 L541.86,645.57 L544.40,645.51 L544.55,645.51 L544.91,645.49 L545.06,645.48 L550.65,645.09 L553.18,644.91 L553.34,644.90 L553.69,644.86 L553.84,644.85 L557.85,644.37 L561.86,643.90 L562.01,643.88 L562.35,643.83 L562.50,643.80 L566.44,643.14 L570.37,642.48 L570.52,642.46 L570.86,642.39 L571.00,642.36 L574.93,641.50 L578.68,640.67 L578.82,640.64 L579.15,640.56 L579.29,640.52 L579.30,640.52 L583.01,639.50 L586.71,638.48 L586.85,638.44 L587.17,638.35 L587.30,638.30 L591.73,636.82 L594.44,635.92 L594.57,635.88 L594.88,635.77 L595.00,635.71 L598.40,634.36 L601.80,633.01 L601.93,632.96 L602.22,632.83 L602.34,632.78 L603.99,632.00 L608.76,629.76 L608.88,629.70 L609.15,629.56 L609.26,629.50 L612.27,627.85 L615.27,626.19 L615.38,626.13 L615.63,625.98 L615.74,625.92 L619.88,623.25 L621.29,622.34 L621.39,622.27 L621.62,622.11 L621.72,622.04 L624.30,620.08 L626.88,618.13 L626.93,618.10 L627.03,618.01 L627.08,617.97 L631.20,614.59 L635.32,611.21 L639.45,607.83 L643.57,604.45 L647.69,601.07 L651.81,597.68 L655.93,594.30 L660.06,590.92 L664.18,587.54 L668.30,584.16 L672.42,580.78 L676.54,577.39 L680.66,574.01 L684.79,570.63 L688.91,567.25 L693.03,563.87 L697.15,560.49 L701.27,557.10 L705.40,553.72 L709.52,550.34 L713.64,546.96 L717.76,543.58 L721.88,540.19 L726.01,536.81 L730.13,533.43 L734.25,530.05 L738.37,526.67 L742.49,523.29 L746.61,519.90 L750.74,516.52 L754.86,513.14 L758.98,509.76 L763.10,506.38 L767.22,503.00 L771.35,499.61 L775.47,496.23 L779.59,492.85 L783.71,489.47 L787.83,486.09 L791.96,482.70 L796.08,479.32 L800.20,475.94 L804.32,472.56 L808.44,469.18 L812.57,465.80 L816.69,462.41 L820.81,459.03 L824.93,455.65 L829.05,452.27 L833.17,448.89 L837.30,445.51 L841.42,442.12 L845.54,438.74 L849.66,435.36 L853.78,431.98 L857.91,428.60 L862.03,425.22 L866.15,421.83 L870.27,418.45 L874.39,415.07 L878.52,411.69 L882.64,408.31 L886.76,404.92 L890.88,401.54 L895.00,398.16 L899.13,394.78 L903.25,391.40 L907.37,388.02 L911.49,384.63 L915.61,381.25 L919.73,377.87 L923.86,374.49 L927.98,371.11 L932.10,367.73 L936.22,364.34 L940.34,360.96 L944.47,357.58 L948.59,353.96 L948.63,353.92 L948.73,353.83 L948.78,353.79 L951.09,351.54 L953.41,349.30 L953.50,349.21 L953.68,349.02 L953.76,348.93 L954.77,347.77 L957.75,344.33 L957.83,344.25 L957.99,344.04 L958.05,343.95 L959.76,341.57 L961.47,339.19 L961.54,339.10 L961.67,338.89 L961.73,338.79 L963.83,335.15 L964.56,333.88 L964.61,333.79 L964.72,333.58 L964.76,333.48 L965.87,330.97 L966.98,328.46 L967.02,328.37 L967.10,328.15 L967.13,328.05 L967.74,326.12 L968.73,322.96 L968.76,322.86 L968.81,322.64 L968.83,322.54 L969.31,319.98 L969.79,317.41 L969.79,317.40 L969.81,317.30 L969.83,317.08 L969.84,316.98 L969.99,314.46 L970.16,311.82 L970.16,311.72 L970.16,311.50 L970.16,311.40 L970.00,308.83 L969.83,306.26 L969.83,306.16 L969.80,305.94 L969.78,305.84 L969.46,304.13 L968.82,300.77 L968.80,300.68 L968.74,300.47 L968.71,300.38 L967.92,297.99 L967.12,295.60 L967.09,295.51 L967.00,295.31 L966.96,295.22 L965.85,293.18 L964.74,291.54 L964.70,291.48 L964.59,291.34 L963.12,289.63 L961.65,287.92 L961.61,287.87 L961.55,287.81 L960.80,286.70 L960.50,285.28 L960.66,283.63 L961.26,282.03 L962.29,280.50 L963.72,279.09 L966.52,276.80 L969.32,274.50 L971.04,273.30 L973.06,272.27 L975.32,271.45 L977.76,270.84 L980.34,270.48 L982.98,270.35 L985.63,270.48 L988.20,270.84 L990.65,271.45 L992.91,272.27 L996.93,274.01 L997.46,274.21 L997.86,269.86" fill="none" stroke="#17150f" stroke-width="1.1" stroke-linejoin="round"/>
<g clip-path="url(#c1)">
<polygon points="901.94,342.85 906.08,339.45 895.03,351.97 901.94,342.85" fill="#c4c0b5" stroke="#c4c0b5" stroke-width="0.5"/>
<polygon points="906.08,339.45 908.35,337.43 897.11,350.10 895.03,351.97" fill="#bebab0" stroke="#bebab0" stroke-width="0.5"/>
<polygon points="908.35,337.43 910.62,335.40 899.10,348.31 897.11,350.10" fill="#bebab0" stroke="#bebab0" stroke-width="0.5"/>
<polygon points="910.62,335.40 912.62,333.28 900.84,346.40 899.10,348.31" fill="#bebab0" stroke="#bebab0" stroke-width="0.5"/>
<polygon points="912.62,333.28 914.61,331.15 902.60,344.48 900.84,346.40" fill="#bebab0" stroke="#bebab0" stroke-width="0.5"/>
<polygon points="914.61,331.15 916.32,328.94 904.09,342.45 902.60,344.48" fill="#bebab0" stroke="#bebab0" stroke-width="0.5"/>
<polygon points="916.32,328.94 918.03,326.72 905.61,340.41 904.09,342.45" fill="#bebab0" stroke="#bebab0" stroke-width="0.5"/>
<polygon points="918.03,326.72 919.45,324.44 906.86,338.28 905.61,340.41" fill="#bebab0" stroke="#bebab0" stroke-width="0.5"/>
<polygon points="919.45,324.44 920.86,322.15 908.13,336.14 906.86,338.28" fill="#bebab0" stroke="#bebab0" stroke-width="0.5"/>
<polygon points="920.86,322.15 921.97,319.81 909.11,333.91 908.13,336.14" fill="#bebab0" stroke="#bebab0" stroke-width="0.5"/>
<polygon points="921.97,319.81 923.08,317.46 910.12,331.68 909.11,333.91" fill="#bebab0" stroke="#bebab0" stroke-width="0.5"/>
<polygon points="923.08,317.46 923.88,315.07 910.85,329.38 910.12,331.68" fill="#bebab0" stroke="#bebab0" stroke-width="0.5"/>
<polygon points="923.88,315.07 924.67,312.68 911.59,327.06 910.85,329.38" fill="#bebab0" stroke="#bebab0" stroke-width="0.5"/>
<polygon points="924.67,312.68 925.15,310.26 912.04,324.70 911.59,327.06" fill="#bebab0" stroke="#bebab0" stroke-width="0.5"/>
<polygon points="925.15,310.26 925.63,307.84 912.52,322.32 912.04,324.70" fill="#bebab0" stroke="#bebab0" stroke-width="0.5"/>
<polygon points="925.63,307.84 925.79,305.41 912.70,319.91 912.52,322.32" fill="#bfbbb1" stroke="#bfbbb1" stroke-width="0.5"/>
<polygon points="925.79,305.41 925.95,302.97 912.90,317.48 912.70,319.91" fill="#bfbbb1" stroke="#bfbbb1" stroke-width="0.5"/>
<polygon points="925.95,302.97 925.79,300.54 912.80,315.05 912.90,317.48" fill="#c1bdb3" stroke="#c1bdb3" stroke-width="0.5"/>
<polygon points="925.79,300.54 925.63,298.10 912.72,312.59 912.80,315.05" fill="#c0bcb2" stroke="#c0bcb2" stroke-width="0.5"/>
<polygon points="925.63,298.10 925.15,295.68 912.35,310.14 912.72,312.59" fill="#c2beb4" stroke="#c2beb4" stroke-width="0.5"/>
<polygon points="925.15,295.68 924.66,293.27 911.99,307.68 912.35,310.14" fill="#c2beb4" stroke="#c2beb4" stroke-width="0.5"/>
<polygon points="924.66,293.27 923.86,290.88 911.34,305.23 911.99,307.68" fill="#c3bfb5" stroke="#c3bfb5" stroke-width="0.5"/>
<polygon points="923.86,290.88 923.07,288.49 910.71,302.78 911.34,305.23" fill="#c3bfb5" stroke="#c3bfb5" stroke-width="0.5"/>
<polygon points="923.07,288.49 921.95,286.14 909.78,300.36 910.71,302.78" fill="#c5c1b7" stroke="#c5c1b7" stroke-width="0.5"/>
<polygon points="921.95,286.14 920.84,283.80 908.88,297.93 909.78,300.36" fill="#c5c1b7" stroke="#c5c1b7" stroke-width="0.5"/>
<polygon points="920.84,283.80 919.43,281.51 907.68,295.56 908.88,297.93" fill="#c6c2b8" stroke="#c6c2b8" stroke-width="0.5"/>
<polygon points="919.43,281.51 918.01,279.22 906.50,293.18 907.68,295.56" fill="#c6c2b8" stroke="#c6c2b8" stroke-width="0.5"/>
<polygon points="918.01,279.22 916.30,277.01 905.04,290.87 906.50,293.18" fill="#c8c4ba" stroke="#c8c4ba" stroke-width="0.5"/>
<polygon points="916.30,277.01 914.58,274.80 903.59,288.55 905.04,290.87" fill="#c8c4ba" stroke="#c8c4ba" stroke-width="0.5"/>
<polygon points="914.58,274.80 912.58,272.67 901.87,286.32 903.59,288.55" fill="#c3beb4" stroke="#c3beb4" stroke-width="0.5"/>
<polygon points="912.58,272.67 910.59,270.55 900.17,284.10 901.87,286.32" fill="#c3bfb4" stroke="#c3bfb4" stroke-width="0.5"/>
<polygon points="910.59,270.55 908.31,268.52 898.20,281.97 900.17,284.10" fill="#bdb8ad" stroke="#bdb8ad" stroke-width="0.5"/>
<polygon points="908.31,268.52 906.04,266.49 896.24,279.85 898.20,281.97" fill="#beb9ad" stroke="#beb9ad" stroke-width="0.5"/>
<polygon points="906.04,266.49 903.51,264.58 894.04,277.85 896.24,279.85" fill="#b8b2a6" stroke="#b8b2a6" stroke-width="0.5"/>
<polygon points="903.51,264.58 900.97,262.67 891.84,275.86 894.04,277.85" fill="#b8b3a7" stroke="#b8b3a7" stroke-width="0.5"/>
<polygon points="900.97,262.67 898.20,260.88 889.41,274.00 891.84,275.86" fill="#b2aca0" stroke="#b2aca0" stroke-width="0.5"/>
<polygon points="898.20,260.88 895.42,259.09 886.99,272.16 889.41,274.00" fill="#b2ada0" stroke="#b2ada0" stroke-width="0.5"/>
<polygon points="895.42,259.09 892.42,257.43 884.35,270.48 886.99,272.16" fill="#b0aa9d" stroke="#b0aa9d" stroke-width="0.5"/>
<polygon points="892.42,257.43 889.41,255.78 881.71,268.81 884.35,270.48" fill="#b0aa9d" stroke="#b0aa9d" stroke-width="0.5"/>
<polygon points="889.41,255.78 886.20,254.27 878.88,267.33 881.71,268.81" fill="#b0aa9d" stroke="#b0aa9d" stroke-width="0.5"/>
<polygon points="886.20,254.27 882.99,252.76 875.90,265.87 878.88,267.33" fill="#b0aa9d" stroke="#b0aa9d" stroke-width="0.5"/>
<polygon points="882.99,252.76 877.50,250.38 870.55,263.53 875.90,265.87" fill="#b8b2a6" stroke="#b8b2a6" stroke-width="0.5"/>
<polygon points="877.50,250.38 872.00,248.01 865.05,261.15 870.55,263.53" fill="#b8b2a6" stroke="#b8b2a6" stroke-width="0.5"/>
<polygon points="872.00,248.01 866.51,245.63 859.56,258.78 865.05,261.15" fill="#b8b2a6" stroke="#b8b2a6" stroke-width="0.5"/>
<polygon points="866.51,245.63 861.01,243.25 854.07,256.40 859.56,258.78" fill="#b8b2a6" stroke="#b8b2a6" stroke-width="0.5"/>
<polygon points="861.01,243.25 855.52,240.87 848.57,254.02 854.07,256.40" fill="#b8b2a6" stroke="#b8b2a6" stroke-width="0.5"/>
<polygon points="855.52,240.87 850.03,238.49 843.08,251.64 848.57,254.02" fill="#b8b2a6" stroke="#b8b2a6" stroke-width="0.5"/>
<polygon points="850.03,238.49 844.53,236.12 837.58,249.26 843.08,251.64" fill="#b8b2a6" stroke="#b8b2a6" stroke-width="0.5"/>
<polygon points="844.53,236.12 839.04,233.74 832.09,246.89 837.58,249.26" fill="#b8b2a6" stroke="#b8b2a6" stroke-width="0.5"/>
<polygon points="839.04,233.74 833.54,231.36 826.60,244.51 832.09,246.89" fill="#b8b2a6" stroke="#b8b2a6" stroke-width="0.5"/>
<polygon points="833.54,231.36 828.05,228.98 821.10,242.13 826.60,244.51" fill="#b8b2a6" stroke="#b8b2a6" stroke-width="0.5"/>
<polygon points="828.05,228.98 822.56,226.60 815.61,239.75 821.10,242.13" fill="#b8b2a6" stroke="#b8b2a6" stroke-width="0.5"/>
<polygon points="822.56,226.60 817.06,224.23 810.11,237.37 815.61,239.75" fill="#b8b2a6" stroke="#b8b2a6" stroke-width="0.5"/>
<polygon points="817.06,224.23 811.57,221.85 804.62,235.00 810.11,237.37" fill="#b8b2a6" stroke="#b8b2a6" stroke-width="0.5"/>
<polygon points="811.57,221.85 806.07,219.47 799.13,232.62 804.62,235.00" fill="#b8b2a6" stroke="#b8b2a6" stroke-width="0.5"/>
<polygon points="806.07,219.47 800.58,217.09 793.63,230.24 799.13,232.62" fill="#b8b2a6" stroke="#b8b2a6" stroke-width="0.5"/>
<polygon points="800.58,217.09 795.09,214.71 788.14,227.86 793.63,230.24" fill="#b8b2a6" stroke="#b8b2a6" stroke-width="0.5"/>
<polygon points="795.09,214.71 789.59,212.34 782.79,225.54 788.14,227.86" fill="#b8b2a6" stroke="#b8b2a6" stroke-width="0.5"/>
<polygon points="789.59,212.34 786.19,210.98 779.62,224.29 782.79,225.54" fill="#c9c4b9" stroke="#c9c4b9" stroke-width="0.5"/>
<polygon points="786.19,210.98 782.79,209.63 776.61,223.08 779.62,224.29" fill="#c8c3b8" stroke="#c8c3b8" stroke-width="0.5"/>
<polygon points="782.79,209.63 779.22,208.44 773.45,222.03 776.61,223.08" fill="#d6d2c8" stroke="#d6d2c8" stroke-width="0.5"/>
<polygon points="779.22,208.44 775.65,207.25 770.29,220.97 773.45,222.03" fill="#d5d1c7" stroke="#d5d1c7" stroke-width="0.5"/>
<polygon points="775.65,207.25 771.94,206.23 766.99,220.07 770.29,220.97" fill="#e3e0d7" stroke="#e3e0d7" stroke-width="0.5"/>
<polygon points="771.94,206.23 768.22,205.21 763.70,219.16 766.99,220.07" fill="#e3dfd6" stroke="#e3dfd6" stroke-width="0.5"/>
<polygon points="768.22,205.21 764.39,204.36 760.30,218.42 763.70,219.16" fill="#edeae2" stroke="#edeae2" stroke-width="0.5"/>
<polygon points="764.39,204.36 760.55,203.52 756.90,217.67 760.30,218.42" fill="#edeae2" stroke="#edeae2" stroke-width="0.5"/>
<polygon points="760.55,203.52 756.61,202.86 753.41,217.09 756.90,217.67" fill="#e6e3da" stroke="#e6e3da" stroke-width="0.5"/>
<polygon points="756.61,202.86 752.68,202.20 749.92,216.50 753.41,217.09" fill="#e7e3db" stroke="#e7e3db" stroke-width="0.5"/>
<polygon points="752.68,202.20 748.67,201.72 746.36,216.08 749.92,216.50" fill="#e0dcd3" stroke="#e0dcd3" stroke-width="0.5"/>
<polygon points="748.67,201.72 744.66,201.25 742.81,215.65 746.36,216.08" fill="#e0ddd4" stroke="#e0ddd4" stroke-width="0.5"/>
<polygon points="744.66,201.25 740.59,200.96 739.21,215.40 742.81,215.65" fill="#dad6cc" stroke="#dad6cc" stroke-width="0.5"/>
<polygon points="740.59,200.96 736.53,200.67 735.61,215.14 739.21,215.40" fill="#dad6cd" stroke="#dad6cd" stroke-width="0.5"/>
<polygon points="736.53,200.67 732.45,200.58 731.99,215.07 735.61,215.14" fill="#d2cec4" stroke="#d2cec4" stroke-width="0.5"/>
<polygon points="732.45,200.58 728.36,200.48 728.36,214.98 731.99,215.07" fill="#d3cfc5" stroke="#d3cfc5" stroke-width="0.5"/>
<polygon points="728.36,200.48 724.28,200.58 724.74,215.07 728.36,214.98" fill="#cac6bb" stroke="#cac6bb" stroke-width="0.5"/>
<polygon points="724.28,200.58 720.19,200.67 721.12,215.14 724.74,215.07" fill="#cbc6bc" stroke="#cbc6bc" stroke-width="0.5"/>
<polygon points="720.19,200.67 716.13,200.96 717.52,215.40 721.12,215.14" fill="#c2bdb2" stroke="#c2bdb2" stroke-width="0.5"/>
<polygon points="716.13,200.96 712.07,201.25 713.92,215.65 717.52,215.40" fill="#c2beb2" stroke="#c2beb2" stroke-width="0.5"/>
<polygon points="712.07,201.25 708.06,201.72 710.37,216.08 713.92,215.65" fill="#b9b4a9" stroke="#b9b4a9" stroke-width="0.5"/>
<polygon points="708.06,201.72 704.05,202.20 706.81,216.49 710.37,216.08" fill="#bab5a9" stroke="#bab5a9" stroke-width="0.5"/>
<polygon points="704.05,202.20 700.11,202.86 703.32,217.09 706.81,216.49" fill="#b1aca0" stroke="#b1aca0" stroke-width="0.5"/>
<polygon points="700.11,202.86 696.18,203.52 699.83,217.67 703.32,217.09" fill="#b2aca0" stroke="#b2aca0" stroke-width="0.5"/>
<polygon points="696.18,203.52 692.34,204.36 696.44,218.42 699.83,217.67" fill="#a9a396" stroke="#a9a396" stroke-width="0.5"/>
<polygon points="692.34,204.36 688.50,205.21 693.03,219.16 696.44,218.42" fill="#a9a497" stroke="#a9a497" stroke-width="0.5"/>
<polygon points="688.50,205.21 684.79,206.23 689.74,220.07 693.03,219.16" fill="#a29c8f" stroke="#a29c8f" stroke-width="0.5"/>
<polygon points="684.79,206.23 681.08,207.25 686.45,220.97 689.74,220.07" fill="#a29c8f" stroke="#a29c8f" stroke-width="0.5"/>
<polygon points="681.08,207.25 677.51,208.44 683.29,222.03 686.45,220.97" fill="#a39d90" stroke="#a39d90" stroke-width="0.5"/>
<polygon points="677.51,208.44 673.94,209.63 680.12,223.08 683.29,222.03" fill="#a39d90" stroke="#a39d90" stroke-width="0.5"/>
<polygon points="673.94,209.63 670.54,210.98 677.11,224.29 680.12,223.08" fill="#a49e91" stroke="#a49e91" stroke-width="0.5"/>
<polygon points="670.54,210.98 667.14,212.33 674.10,225.48 677.11,224.29" fill="#a49e91" stroke="#a49e91" stroke-width="0.5"/>
<polygon points="667.14,212.33 663.93,213.84 671.26,226.82 674.10,225.48" fill="#a59f91" stroke="#a59f91" stroke-width="0.5"/>
<polygon points="663.93,213.84 660.72,215.35 668.40,228.16 671.26,226.82" fill="#a59f91" stroke="#a59f91" stroke-width="0.5"/>
<polygon points="660.72,215.35 657.72,217.00 665.75,229.63 668.40,228.16" fill="#a6a092" stroke="#a6a092" stroke-width="0.5"/>
<polygon points="657.72,217.00 654.72,218.66 663.08,231.09 665.75,229.63" fill="#a6a092" stroke="#a6a092" stroke-width="0.5"/>
<polygon points="654.72,218.66 651.94,220.45 660.63,232.68 663.08,231.09" fill="#a7a193" stroke="#a7a193" stroke-width="0.5"/>
<polygon points="651.94,220.45 649.17,222.24 658.16,234.26 660.63,232.68" fill="#a7a193" stroke="#a7a193" stroke-width="0.5"/>
<polygon points="649.17,222.24 646.64,224.15 655.93,235.96 658.16,234.26" fill="#a8a294" stroke="#a8a294" stroke-width="0.5"/>
<polygon points="646.64,224.15 644.11,226.06 653.57,237.74 655.93,235.96" fill="#a8a294" stroke="#a8a294" stroke-width="0.5"/>
<polygon points="644.11,226.06 640.10,229.35 649.67,240.94 653.57,237.74" fill="#a8a294" stroke="#a8a294" stroke-width="0.5"/>
<polygon points="640.10,229.35 636.09,232.64 645.66,244.23 649.67,240.94" fill="#a8a294" stroke="#a8a294" stroke-width="0.5"/>
<polygon points="636.09,232.64 632.08,235.93 641.65,247.52 645.66,244.23" fill="#a8a294" stroke="#a8a294" stroke-width="0.5"/>
<polygon points="632.08,235.93 628.07,239.22 637.64,250.81 641.65,247.52" fill="#a8a294" stroke="#a8a294" stroke-width="0.5"/>
<polygon points="628.07,239.22 624.06,242.51 633.40,253.82 637.64,250.81" fill="#a8a294" stroke="#a8a294" stroke-width="0.5"/>
<polygon points="624.06,242.51 620.05,245.80 624.75,251.49 633.40,253.82" fill="#b5afa3" stroke="#b5afa3" stroke-width="0.5"/>
<polygon points="620.05,245.80 616.04,249.09 616.10,249.16 624.75,251.49" fill="#b5afa3" stroke="#b5afa3" stroke-width="0.5"/>
<polygon points="616.04,249.09 612.03,252.38 612.03,252.38 616.10,249.16" fill="#a8a294" stroke="#a8a294" stroke-width="0.5"/>
<polygon points="744.51,472.01 743.67,468.56 742.84,465.10 742.84,491.06 743.67,494.51 744.51,497.97" fill="#84837d"/>
<path d="M744.51,497.97 L743.67,494.51 L742.84,491.06" fill="none" stroke="#17150f" stroke-width="1.2" stroke-linejoin="round" stroke-linecap="round"/>
<path d="M744.51,472.01 L743.67,468.56 L742.84,465.10" fill="none" stroke="#17150f" stroke-width="1.1" stroke-linejoin="round"/>
<polygon points="901.94,342.85 895.03,351.97 895.03,360.77 901.94,368.80" fill="#888883"/>
<path d="M901.94,368.80 L895.03,360.77" fill="none" stroke="#17150f" stroke-width="1.2" stroke-linejoin="round" stroke-linecap="round"/>
<path d="M901.94,342.85 L895.03,351.97" fill="none" stroke="#17150f" stroke-width="1.1" stroke-linejoin="round"/>
<polygon points="912.90,317.48 912.80,315.05 912.72,312.59 912.35,310.14 911.99,307.68 911.34,305.23 910.71,302.78 909.78,300.36 908.88,297.93 907.68,295.56 906.50,293.18 905.04,290.87 903.59,288.55 901.87,286.32 900.17,284.10 898.20,281.97 896.24,279.85 894.04,277.85 891.84,275.86 889.41,274.00 886.99,272.16 884.35,270.48 881.71,268.81 878.88,267.33 875.90,265.87 870.55,263.53 865.05,261.15 859.56,258.78 854.07,256.40 848.57,254.02 843.08,251.64 837.58,249.26 832.09,246.89 826.60,244.51 821.10,242.13 815.61,239.75 810.11,237.37 804.62,235.00 799.13,232.62 793.63,230.24 788.14,227.86 782.79,225.54 779.62,224.29 776.61,223.08 773.45,222.03 770.29,220.97 766.99,220.07 763.70,219.16 760.30,218.42 756.90,217.67 753.41,217.09 749.92,216.50 746.36,216.08 742.81,215.65 739.21,215.40 735.61,215.14 731.99,215.07 728.36,214.98 724.74,215.07 721.12,215.14 717.52,215.40 713.92,215.65 710.37,216.08 706.81,216.49 703.32,217.09 699.83,217.67 696.44,218.42 693.03,219.16 689.74,220.07 686.45,220.97 683.29,222.03 680.12,223.08 677.11,224.29 674.10,225.48 671.26,226.82 668.40,228.16 665.75,229.63 663.08,231.09 660.63,232.68 658.16,234.26 655.93,235.96 653.57,237.74 649.67,240.94 645.66,244.23 641.65,247.52 637.64,250.81 633.40,253.82 633.40,272.51 637.64,269.32 641.65,266.03 645.66,262.74 649.67,259.45 653.57,256.24 655.93,254.47 658.16,252.77 660.63,251.19 663.08,249.60 665.75,248.13 668.40,246.66 671.26,245.33 674.10,243.99 677.11,242.79 680.12,241.59 683.29,240.54 686.45,239.48 689.74,238.58 693.03,237.67 696.44,236.93 699.83,236.17 703.32,235.59 706.81,235.00 710.37,234.59 713.92,234.16 717.52,233.91 721.12,233.65 724.74,233.57 728.36,233.48 731.99,233.57 735.61,233.65 739.21,233.91 742.81,234.16 746.36,234.59 749.92,235.00 753.41,235.59 756.90,236.18 760.30,236.93 763.70,237.67 766.99,238.58 770.29,239.48 773.45,240.54 776.61,241.59 779.62,242.80 782.79,244.05 788.14,246.37 793.63,248.75 799.13,251.13 804.62,253.50 810.11,255.88 815.61,258.26 821.10,260.64 826.60,263.02 832.09,265.39 837.58,267.77 843.08,270.15 848.57,272.53 854.07,274.91 859.56,277.28 865.05,279.66 870.55,282.04 875.90,284.36 878.88,285.77 881.71,287.11 884.35,288.59 886.99,290.07 889.41,291.67 891.84,293.27 894.04,294.98 896.24,296.69 898.20,298.50 900.17,300.31 901.87,302.20 903.59,304.09 905.04,306.06 906.50,308.02 907.68,310.05 908.88,312.07 909.78,314.14 910.71,316.21 911.34,318.31 911.99,320.42 912.35,322.54 912.72,324.66 912.80,326.80 912.90,328.93" fill="url(#g7)"/>
<path d="M912.90,328.93 L912.80,326.80 L912.72,324.66 L912.35,322.54 L911.99,320.42 L911.34,318.31 L910.71,316.21 L909.78,314.14 L908.88,312.07 L907.68,310.05 L906.50,308.02 L905.04,306.06 L903.59,304.09 L901.87,302.20 L900.17,300.31 L898.20,298.50 L896.24,296.69 L894.04,294.98 L891.84,293.27 L889.41,291.67 L886.99,290.07 L884.35,288.59 L881.71,287.11 L878.88,285.77 L875.90,284.36 L870.55,282.04 L865.05,279.66 L859.56,277.28 L854.07,274.91 L848.57,272.53 L843.08,270.15 L837.58,267.77 L832.09,265.39 L826.60,263.02 L821.10,260.64 L815.61,258.26 L810.11,255.88 L804.62,253.50 L799.13,251.13 L793.63,248.75 L788.14,246.37 L782.79,244.05 L779.62,242.80 L776.61,241.59 L773.45,240.54 L770.29,239.48 L766.99,238.58 L763.70,237.67 L760.30,236.93 L756.90,236.18 L753.41,235.59 L749.92,235.00 L746.36,234.59 L742.81,234.16 L739.21,233.91 L735.61,233.65 L731.99,233.57 L728.36,233.48 L724.74,233.57 L721.12,233.65 L717.52,233.91 L713.92,234.16 L710.37,234.59 L706.81,235.00 L703.32,235.59 L699.83,236.17 L696.44,236.93 L693.03,237.67 L689.74,238.58 L686.45,239.48 L683.29,240.54 L680.12,241.59 L677.11,242.79 L674.10,243.99 L671.26,245.33 L668.40,246.66 L665.75,248.13 L663.08,249.60 L660.63,251.19 L658.16,252.77 L655.93,254.47 L653.57,256.24 L649.67,259.45 L645.66,262.74 L641.65,266.03 L637.64,269.32 L633.40,272.51" fill="none" stroke="#17150f" stroke-width="1.2" stroke-linejoin="round" stroke-linecap="round"/>
<path d="M912.90,317.48 L912.80,315.05 L912.72,312.59 L912.35,310.14 L911.99,307.68 L911.34,305.23 L910.71,302.78 L909.78,300.36 L908.88,297.93 L907.68,295.56 L906.50,293.18 L905.04,290.87 L903.59,288.55 L901.87,286.32 L900.17,284.10 L898.20,281.97 L896.24,279.85 L894.04,277.85 L891.84,275.86 L889.41,274.00 L886.99,272.16 L884.35,270.48 L881.71,268.81 L878.88,267.33 L875.90,265.87 L870.55,263.53 L865.05,261.15 L859.56,258.78 L854.07,256.40 L848.57,254.02 L843.08,251.64 L837.58,249.26 L832.09,246.89 L826.60,244.51 L821.10,242.13 L815.61,239.75 L810.11,237.37 L804.62,235.00 L799.13,232.62 L793.63,230.24 L788.14,227.86 L782.79,225.54 L779.62,224.29 L776.61,223.08 L773.45,222.03 L770.29,220.97 L766.99,220.07 L763.70,219.16 L760.30,218.42 L756.90,217.67 L753.41,217.09 L749.92,216.50 L746.36,216.08 L742.81,215.65 L739.21,215.40 L735.61,215.14 L731.99,215.07 L728.36,214.98 L724.74,215.07 L721.12,215.14 L717.52,215.40 L713.92,215.65 L710.37,216.08 L706.81,216.49 L703.32,217.09 L699.83,217.67 L696.44,218.42 L693.03,219.16 L689.74,220.07 L686.45,220.97 L683.29,222.03 L680.12,223.08 L677.11,224.29 L674.10,225.48 L671.26,226.82 L668.40,228.16 L665.75,229.63 L663.08,231.09 L660.63,232.68 L658.16,234.26 L655.93,235.96 L653.57,237.74 L649.67,240.94 L645.66,244.23 L641.65,247.52 L637.64,250.81 L633.40,253.82" fill="none" stroke="#17150f" stroke-width="1.1" stroke-linejoin="round"/>
<polygon points="633.40,253.82 624.75,251.49 616.10,249.16 616.10,275.07 624.75,273.79 633.40,272.51" fill="#827d73"/>
<path d="M633.40,272.51 L624.75,273.79 L616.10,275.07" fill="none" stroke="#17150f" stroke-width="1.2" stroke-linejoin="round" stroke-linecap="round"/>
<path d="M633.40,253.82 L624.75,251.49 L616.10,249.16" fill="none" stroke="#17150f" stroke-width="1.1" stroke-linejoin="round"/>
<path d="M633.40,253.82 L633.40,272.51" stroke="#17150f" stroke-width="1.1" stroke-linecap="round"/>
<polygon points="616.10,249.16 612.03,252.38 608.02,255.67 604.01,258.96 600.00,262.25 595.99,265.54 591.98,268.83 587.97,272.12 583.96,275.41 579.95,278.70 575.94,281.99 571.94,285.28 567.93,288.57 563.92,291.86 559.91,295.14 555.90,298.43 551.89,301.72 547.88,305.01 543.87,308.30 539.86,311.59 535.85,314.88 531.84,318.17 527.83,321.46 523.82,324.75 519.81,328.04 515.80,331.33 515.80,357.29 519.81,354.00 523.82,350.71 527.83,347.42 531.84,344.13 535.85,340.84 539.86,337.55 543.87,334.26 547.88,330.97 551.89,327.68 555.90,324.39 559.91,321.10 563.92,317.81 567.93,314.52 571.94,311.23 575.94,307.94 579.95,304.65 583.96,301.36 587.97,298.07 591.98,294.78 595.99,291.49 600.00,288.20 604.01,284.91 608.02,281.63 612.03,278.34 616.10,275.07" fill="#837b6c"/>
<path d="M616.10,275.07 L612.03,278.34 L608.02,281.63 L604.01,284.91 L600.00,288.20 L595.99,291.49 L591.98,294.78 L587.97,298.07 L583.96,301.36 L579.95,304.65 L575.94,307.94 L571.94,311.23 L567.93,314.52 L563.92,317.81 L559.91,321.10 L555.90,324.39 L551.89,327.68 L547.88,330.97 L543.87,334.26 L539.86,337.55 L535.85,340.84 L531.84,344.13 L527.83,347.42 L523.82,350.71 L519.81,354.00 L515.80,357.29" fill="none" stroke="#17150f" stroke-width="1.2" stroke-linejoin="round" stroke-linecap="round"/>
<path d="M616.10,249.16 L612.03,252.38 L608.02,255.67 L604.01,258.96 L600.00,262.25 L595.99,265.54 L591.98,268.83 L587.97,272.12 L583.96,275.41 L579.95,278.70 L575.94,281.99 L571.94,285.28 L567.93,288.57 L563.92,291.86 L559.91,295.14 L555.90,298.43 L551.89,301.72 L547.88,305.01 L543.87,308.30 L539.86,311.59 L535.85,314.88 L531.84,318.17 L527.83,321.46 L523.82,324.75 L519.81,328.04 L515.80,331.33" fill="none" stroke="#17150f" stroke-width="1.1" stroke-linejoin="round"/>
<path d="M616.10,249.16 L616.10,275.07" stroke="#17150f" stroke-width="1.1" stroke-linecap="round"/>
<polygon points="515.80,331.33 514.80,335.20 513.79,339.07 512.79,342.94 512.79,368.89 513.79,365.02 514.80,361.15 515.80,357.29" fill="#898273"/>
<path d="M515.80,357.29 L514.80,361.15 L513.79,365.02 L512.79,368.89" fill="none" stroke="#17150f" stroke-width="1.2" stroke-linejoin="round" stroke-linecap="round"/>
<path d="M515.80,331.33 L514.80,335.20 L513.79,339.07 L512.79,342.94" fill="none" stroke="#17150f" stroke-width="1.1" stroke-linejoin="round"/>
<path d="M515.80,331.33 L515.80,357.29" stroke="#17150f" stroke-width="1.1" stroke-linecap="round"/>
<polygon points="512.79,342.94 508.86,346.16 504.93,349.38 501.01,352.60 497.08,355.83 497.08,381.78 501.01,378.56 504.93,375.34 508.86,372.11 512.79,368.89" fill="#837b6c"/>
<path d="M512.79,368.89 L508.86,372.11 L504.93,375.34 L501.01,378.56 L497.08,381.78" fill="none" stroke="#17150f" stroke-width="1.2" stroke-linejoin="round" stroke-linecap="round"/>
<path d="M512.79,342.94 L508.86,346.16 L504.93,349.38 L501.01,352.60 L497.08,355.83" fill="none" stroke="#17150f" stroke-width="1.1" stroke-linejoin="round"/>
<path d="M512.79,342.94 L512.79,368.89" stroke="#17150f" stroke-width="1.1" stroke-linecap="round"/>
<polygon points="497.08,355.83 491.93,357.00 486.78,358.18 481.64,359.36 481.64,385.32 486.78,384.14 491.93,382.96 497.08,381.78" fill="#7b756a"/>
<path d="M497.08,381.78 L491.93,382.96 L486.78,384.14 L481.64,385.32" fill="none" stroke="#17150f" stroke-width="1.2" stroke-linejoin="round" stroke-linecap="round"/>
<path d="M497.08,355.83 L491.93,357.00 L486.78,358.18 L481.64,359.36" fill="none" stroke="#17150f" stroke-width="1.1" stroke-linejoin="round"/>
<path d="M497.08,355.83 L497.08,381.78" stroke="#17150f" stroke-width="1.1" stroke-linecap="round"/>
<polygon points="481.64,359.36 477.54,362.72 473.44,366.08 469.34,369.45 465.25,372.81 461.15,376.17 457.05,379.53 452.95,382.89 448.86,386.25 444.76,389.62 440.66,392.98 436.56,396.34 432.47,399.70 428.37,403.06 424.27,406.42 420.18,409.78 416.08,413.15 411.98,416.51 407.88,419.87 403.79,423.23 399.69,426.59 395.59,429.95 391.49,433.32 387.40,436.68 383.30,440.04 379.20,443.40 375.11,446.76 371.01,450.12 366.91,453.48 362.81,456.85 358.72,460.21 354.62,463.57 350.52,466.93 348.25,468.96 345.98,470.98 343.98,473.11 341.99,475.23 340.28,477.45 338.56,479.66 337.15,481.95 335.74,484.23 334.63,486.58 333.52,488.92 332.72,491.31 331.93,493.70 331.45,496.12 330.97,498.54 330.81,500.98 330.65,503.41 330.65,529.37 330.81,526.93 330.97,524.50 331.45,522.08 331.93,519.66 332.72,517.27 333.52,514.88 334.63,512.53 335.74,510.19 337.15,507.90 338.56,505.62 340.28,503.40 341.99,501.19 343.98,499.06 345.98,496.94 348.25,494.91 350.52,492.89 354.62,489.52 358.72,486.16 362.81,482.80 366.91,479.44 371.01,476.08 375.11,472.72 379.20,469.36 383.30,465.99 387.40,462.63 391.49,459.27 395.59,455.91 399.69,452.55 403.79,449.19 407.88,445.82 411.98,442.46 416.08,439.10 420.18,435.74 424.27,432.38 428.37,429.02 432.47,425.66 436.56,422.29 440.66,418.93 444.76,415.57 448.86,412.21 452.95,408.85 457.05,405.49 461.15,402.12 465.25,398.76 469.34,395.40 473.44,392.04 477.54,388.68 481.64,385.32" fill="url(#g8)"/>
<path d="M481.64,385.32 L477.54,388.68 L473.44,392.04 L469.34,395.40 L465.25,398.76 L461.15,402.12 L457.05,405.49 L452.95,408.85 L448.86,412.21 L444.76,415.57 L440.66,418.93 L436.56,422.29 L432.47,425.66 L428.37,429.02 L424.27,432.38 L420.18,435.74 L416.08,439.10 L411.98,442.46 L407.88,445.82 L403.79,449.19 L399.69,452.55 L395.59,455.91 L391.49,459.27 L387.40,462.63 L383.30,465.99 L379.20,469.36 L375.11,472.72 L371.01,476.08 L366.91,479.44 L362.81,482.80 L358.72,486.16 L354.62,489.52 L350.52,492.89 L348.25,494.91 L345.98,496.94 L343.98,499.06 L341.99,501.19 L340.28,503.40 L338.56,505.62 L337.15,507.90 L335.74,510.19 L334.63,512.53 L333.52,514.88 L332.72,517.27 L331.93,519.66 L331.45,522.08 L330.97,524.50 L330.81,526.93 L330.65,529.37" fill="none" stroke="#17150f" stroke-width="1.2" stroke-linejoin="round" stroke-linecap="round"/>
<path d="M481.64,359.36 L477.54,362.72 L473.44,366.08 L469.34,369.45 L465.25,372.81 L461.15,376.17 L457.05,379.53 L452.95,382.89 L448.86,386.25 L444.76,389.62 L440.66,392.98 L436.56,396.34 L432.47,399.70 L428.37,403.06 L424.27,406.42 L420.18,409.78 L416.08,413.15 L411.98,416.51 L407.88,419.87 L403.79,423.23 L399.69,426.59 L395.59,429.95 L391.49,433.32 L387.40,436.68 L383.30,440.04 L379.20,443.40 L375.11,446.76 L371.01,450.12 L366.91,453.48 L362.81,456.85 L358.72,460.21 L354.62,463.57 L350.52,466.93 L348.25,468.96 L345.98,470.98 L343.98,473.11 L341.99,475.23 L340.28,477.45 L338.56,479.66 L337.15,481.95 L335.74,484.23 L334.63,486.58 L333.52,488.92 L332.72,491.31 L331.93,493.70 L331.45,496.12 L330.97,498.54 L330.81,500.98 L330.65,503.41" fill="none" stroke="#17150f" stroke-width="1.1" stroke-linejoin="round"/>
<path d="M481.64,359.36 L481.64,385.32" stroke="#17150f" stroke-width="1.1" stroke-linecap="round"/>
</g>
<path d="M373.61,553.62 L379.10,556.00 L384.60,558.38 L390.09,560.76 L395.59,563.13 L401.08,565.51 L406.57,567.89 L412.07,570.27 L417.56,572.65 L423.06,575.02 L428.55,577.40 L434.04,579.78 L439.54,582.16 L445.03,584.54 L450.53,586.91 L456.02,589.29 L461.51,591.67 L467.01,594.05 L470.41,595.40 L473.81,596.76 L477.38,597.95 L480.95,599.14 L484.66,600.16 L488.38,601.18 L492.21,602.02 L496.05,602.86 L499.99,603.53 L503.92,604.19 L507.93,604.66 L511.94,605.14 L516.00,605.42 L520.07,605.71 L524.15,605.81 L528.24,605.90 L532.32,605.81 L536.41,605.71 L540.47,605.43 L544.53,605.14 L548.54,604.66 L552.55,604.19 L556.49,603.53 L560.42,602.87 L564.26,602.02 L568.10,601.18 L571.81,600.16 L575.52,599.14 L579.09,597.95 L582.66,596.76 L586.06,595.40 L589.46,594.05 L592.67,592.54 L595.88,591.03 L598.88,589.38 L601.88,587.73 L604.66,585.94 L607.43,584.15 L609.96,582.23 L612.49,580.32 L616.62,576.94 L620.74,573.55 L624.87,570.17 L628.99,566.78 L633.12,563.40 L637.24,560.01 L641.37,556.63 L645.50,553.24 L649.62,549.86 L653.75,546.47 L657.87,543.09 L662.00,539.71 L666.12,536.32 L670.25,532.94 L674.37,529.55 L678.50,526.17 L682.62,522.78 L686.75,519.40 L690.88,516.01 L695.00,512.63 L699.13,509.24 L703.25,505.86 L707.38,502.47 L711.50,499.09 L715.63,495.70 L719.75,492.32 L723.88,488.94 L728.00,485.55 L732.13,482.17 L736.25,478.78 L740.38,475.40 L744.51,472.01 L743.67,468.56 L742.84,465.10 L746.21,462.33 L749.59,459.57 L752.96,456.80 L756.33,454.03 L759.71,451.26 L764.40,450.17 L769.10,449.08 L773.79,447.99 L777.92,444.59 L782.06,441.20 L786.19,437.81 L790.33,434.42 L794.46,431.03 L798.59,427.64 L802.73,424.24 L806.86,420.85 L811.00,417.46 L815.13,414.07 L819.26,410.68 L823.40,407.29 L827.53,403.89 L831.67,400.50 L835.80,397.11 L839.93,393.72 L844.07,390.33 L848.20,386.94 L852.34,383.54 L856.47,380.15 L860.60,376.76 L864.74,373.37 L868.87,369.98 L873.01,366.59 L877.14,363.19 L881.27,359.80 L885.41,356.41 L889.54,353.02 L893.68,349.63 L897.81,346.24 L901.94,342.85 L906.08,339.45 L908.35,337.43 L910.62,335.40 L912.62,333.28 L914.61,331.15 L916.32,328.94 L918.03,326.72 L919.45,324.44 L920.86,322.15 L921.97,319.81 L923.08,317.46 L923.88,315.07 L924.67,312.68 L925.15,310.26 L925.63,307.84 L925.79,305.41 L925.95,302.97 L925.79,300.54 L925.63,298.10 L925.15,295.68 L924.66,293.27 L923.86,290.88 L923.07,288.49 L921.95,286.14 L920.84,283.80 L919.43,281.51 L918.01,279.22 L916.30,277.01 L914.58,274.80 L912.58,272.67 L910.59,270.55 L908.31,268.52 L906.04,266.49 L903.51,264.58 L900.97,262.67 L898.20,260.88 L895.42,259.09 L892.42,257.43 L889.41,255.78 L886.20,254.27 L882.99,252.76 L877.50,250.38 L872.00,248.01 L866.51,245.63 L861.01,243.25 L855.52,240.87 L850.03,238.49 L844.53,236.12 L839.04,233.74 L833.54,231.36 L828.05,228.98 L822.56,226.60 L817.06,224.23 L811.57,221.85 L806.07,219.47 L800.58,217.09 L795.09,214.71 L789.59,212.34 L786.19,210.98 L782.79,209.63 L779.22,208.44 L775.65,207.25 L771.94,206.23 L768.22,205.21 L764.39,204.36 L760.55,203.52 L756.61,202.86 L752.68,202.20 L748.67,201.72 L744.66,201.25 L740.59,200.96 L736.53,200.67 L732.45,200.58 L728.36,200.48 L724.28,200.58 L720.19,200.67 L716.13,200.96 L712.07,201.25 L708.06,201.72 L704.05,202.20 L700.11,202.86 L696.18,203.52 L692.34,204.36 L688.50,205.21 L684.79,206.23 L681.08,207.25 L677.51,208.44 L673.94,209.63 L670.54,210.98 L667.14,212.33 L663.93,213.84 L660.72,215.35 L657.72,217.00 L654.72,218.66 L651.94,220.45 L649.17,222.24 L646.64,224.15 L644.11,226.06 L640.10,229.35 L636.09,232.64 L632.08,235.93 L628.07,239.22 L624.06,242.51 L620.05,245.80 L616.04,249.09 L612.03,252.38 L608.02,255.67 L604.01,258.96 L600.00,262.25 L595.99,265.54 L591.98,268.83 L587.97,272.12 L583.96,275.41 L579.95,278.70 L575.94,281.99 L571.94,285.28 L567.93,288.57 L563.92,291.86 L559.91,295.14 L555.90,298.43 L551.89,301.72 L547.88,305.01 L543.87,308.30 L539.86,311.59 L535.85,314.88 L531.84,318.17 L527.83,321.46 L523.82,324.75 L519.81,328.04 L515.80,331.33 L514.80,335.20 L513.79,339.07 L512.79,342.94 L508.86,346.16 L504.93,349.38 L501.01,352.60 L497.08,355.83 L491.93,357.00 L486.78,358.18 L481.64,359.36 L477.54,362.72 L473.44,366.08 L469.34,369.45 L465.25,372.81 L461.15,376.17 L457.05,379.53 L452.95,382.89 L448.86,386.25 L444.76,389.62 L440.66,392.98 L436.56,396.34 L432.47,399.70 L428.37,403.06 L424.27,406.42 L420.18,409.78 L416.08,413.15 L411.98,416.51 L407.88,419.87 L403.79,423.23 L399.69,426.59 L395.59,429.95 L391.49,433.32 L387.40,436.68 L383.30,440.04 L379.20,443.40 L375.11,446.76 L371.01,450.12 L366.91,453.48 L362.81,456.85 L358.72,460.21 L354.62,463.57 L350.52,466.93 L348.25,468.96 L345.98,470.98 L343.98,473.11 L341.99,475.23 L340.28,477.45 L338.56,479.66 L337.15,481.95 L335.74,484.23 L334.63,486.58 L333.52,488.92 L332.72,491.31 L331.93,493.70 L331.45,496.12 L330.97,498.54 L330.81,500.98 L330.65,503.41 L330.81,505.85 L330.97,508.28 L331.45,510.70 L331.94,513.12 L332.73,515.51 L333.53,517.90 L334.64,520.24 L335.76,522.59 L337.17,524.88 L338.59,527.16 L340.30,529.37 L342.02,531.59 L344.01,533.71 L346.01,535.84 L348.29,537.87 L350.56,539.89 L353.09,541.80 L355.62,543.72 L358.40,545.51 L361.18,547.30 L364.18,548.95 L367.19,550.60 L370.40,552.11 Z" fill="none" stroke="#17150f" stroke-width="1.3" stroke-linejoin="round"/>
<g clip-path="url(#c2)">
<polygon points="801.27,208.48 802.67,208.93 804.20,209.97 803.67,209.79" fill="#a0998b" stroke="#a0998b" stroke-width="0.5"/>
<polygon points="802.67,208.93 804.21,209.16 804.69,210.05 804.20,209.97" fill="#a0998b" stroke="#a0998b" stroke-width="0.5"/>
<polygon points="804.21,209.16 805.79,209.15 805.19,210.04 804.69,210.05" fill="#a0998b" stroke="#a0998b" stroke-width="0.5"/>
<polygon points="805.79,209.15 807.32,208.89 805.68,209.96 805.19,210.04" fill="#a0998b" stroke="#a0998b" stroke-width="0.5"/>
<polygon points="807.32,208.89 808.69,208.42 806.11,209.81 805.68,209.96" fill="#a0998b" stroke="#a0998b" stroke-width="0.5"/>
<polygon points="808.69,208.42 809.82,207.75 806.47,209.60 806.11,209.81" fill="#a0998b" stroke="#a0998b" stroke-width="0.5"/>
<polygon points="809.82,207.75 810.62,206.93 806.73,209.34 806.47,209.60" fill="#c4c0b6" stroke="#c4c0b6" stroke-width="0.5"/>
<polygon points="810.62,206.93 811.04,206.02 806.86,209.05 806.73,209.34" fill="#c4c0b6" stroke="#c4c0b6" stroke-width="0.5"/>
<polygon points="811.04,206.02 811.06,205.07 806.87,208.74 806.86,209.05" fill="#c6c2b8" stroke="#c6c2b8" stroke-width="0.5"/>
<polygon points="811.06,205.07 810.68,204.15 806.71,208.40 806.87,208.74" fill="#cbc7bd" stroke="#cbc7bd" stroke-width="0.5"/>
<polygon points="810.68,204.15 808.24,200.42 804.31,204.72 806.71,208.40" fill="#cdc9bf" stroke="#cdc9bf" stroke-width="0.5"/>
<polygon points="808.24,200.42 805.80,196.69 801.87,200.99 804.31,204.72" fill="#cdc9bf" stroke="#cdc9bf" stroke-width="0.5"/>
<polygon points="805.80,196.69 803.36,192.96 799.42,197.26 801.87,200.99" fill="#cdc9bf" stroke="#cdc9bf" stroke-width="0.5"/>
<polygon points="803.36,192.96 800.92,189.23 796.98,193.53 799.42,197.26" fill="#cdc9bf" stroke="#cdc9bf" stroke-width="0.5"/>
<polygon points="800.92,189.23 798.48,185.50 794.54,189.80 796.98,193.53" fill="#cdc9bf" stroke="#cdc9bf" stroke-width="0.5"/>
<polygon points="798.48,185.50 796.04,181.77 792.10,186.07 794.54,189.80" fill="#cdc9bf" stroke="#cdc9bf" stroke-width="0.5"/>
<polygon points="796.04,181.77 793.60,178.04 789.66,182.34 792.10,186.07" fill="#cdc9bf" stroke="#cdc9bf" stroke-width="0.5"/>
<polygon points="793.60,178.04 791.16,174.31 787.22,178.61 789.66,182.34" fill="#cdc9bf" stroke="#cdc9bf" stroke-width="0.5"/>
<polygon points="791.16,174.31 788.72,170.58 784.78,174.88 787.22,178.61" fill="#cdc9bf" stroke="#cdc9bf" stroke-width="0.5"/>
<polygon points="788.72,170.58 786.27,166.85 782.34,171.15 784.78,174.88" fill="#cdc9bf" stroke="#cdc9bf" stroke-width="0.5"/>
<polygon points="786.27,166.85 783.83,163.12 779.90,167.42 782.34,171.15" fill="#cdc9bf" stroke="#cdc9bf" stroke-width="0.5"/>
<polygon points="783.83,163.12 781.39,159.39 777.46,163.68 779.90,167.42" fill="#cdc9bf" stroke="#cdc9bf" stroke-width="0.5"/>
<polygon points="781.39,159.39 778.95,155.66 775.06,160.02 777.46,163.68" fill="#cdc9bf" stroke="#cdc9bf" stroke-width="0.5"/>
<polygon points="778.95,155.66 778.15,154.79 774.76,159.68 775.06,160.02" fill="#cbc7bd" stroke="#cbc7bd" stroke-width="0.5"/>
<polygon points="778.15,154.79 777.00,154.09 774.40,159.45 774.76,159.68" fill="#bcb8ad" stroke="#bcb8ad" stroke-width="0.5"/>
<polygon points="777.00,154.09 775.57,153.59 773.94,159.30 774.40,159.45" fill="#b9b4aa" stroke="#b9b4aa" stroke-width="0.5"/>
<polygon points="775.57,153.59 773.97,153.33 773.43,159.22 773.94,159.30" fill="#c7c3b9" stroke="#c7c3b9" stroke-width="0.5"/>
<polygon points="773.97,153.33 772.32,153.34 772.91,159.22 773.43,159.22" fill="#d4d1c7" stroke="#d4d1c7" stroke-width="0.5"/>
<polygon points="772.32,153.34 770.73,153.61 772.40,159.30 772.91,159.22" fill="#bdb9ae" stroke="#bdb9ae" stroke-width="0.5"/>
<polygon points="770.73,153.61 769.31,154.11 771.95,159.46 772.40,159.30" fill="#a9a396" stroke="#a9a396" stroke-width="0.5"/>
<polygon points="769.31,154.11 768.17,154.83 771.52,159.74 771.95,159.46" fill="#a39c8e" stroke="#a39c8e" stroke-width="0.5"/>
<polygon points="768.17,154.83 764.21,158.08 767.63,162.94 771.52,159.74" fill="#a0998b" stroke="#a0998b" stroke-width="0.5"/>
<polygon points="764.21,158.08 760.25,161.33 763.66,166.19 767.63,162.94" fill="#a0998b" stroke="#a0998b" stroke-width="0.5"/>
<polygon points="760.25,161.33 756.28,164.58 759.70,169.44 763.66,166.19" fill="#a0998b" stroke="#a0998b" stroke-width="0.5"/>
<polygon points="756.28,164.58 752.32,167.83 755.74,172.69 759.70,169.44" fill="#a0998b" stroke="#a0998b" stroke-width="0.5"/>
<polygon points="752.32,167.83 748.36,171.08 751.77,175.95 755.74,172.69" fill="#a0998b" stroke="#a0998b" stroke-width="0.5"/>
<polygon points="748.36,171.08 744.39,174.33 747.81,179.20 751.77,175.95" fill="#a0998b" stroke="#a0998b" stroke-width="0.5"/>
<polygon points="744.39,174.33 740.43,177.58 743.91,182.40 747.81,179.20" fill="#a0998b" stroke="#a0998b" stroke-width="0.5"/>
<polygon points="740.43,177.58 739.66,178.43 743.60,182.72 743.91,182.40" fill="#a0998b" stroke="#a0998b" stroke-width="0.5"/>
<polygon points="739.66,178.43 739.28,179.37 743.48,183.02 743.60,182.72" fill="#a0998b" stroke="#a0998b" stroke-width="0.5"/>
<polygon points="739.28,179.37 739.33,180.33 743.50,183.32 743.48,183.02" fill="#a0998b" stroke="#a0998b" stroke-width="0.5"/>
<polygon points="739.33,180.33 739.79,181.25 743.64,183.62 743.50,183.32" fill="#a0998b" stroke="#a0998b" stroke-width="0.5"/>
<polygon points="739.79,181.25 740.63,182.08 743.91,183.88 743.64,183.62" fill="#a0998b" stroke="#a0998b" stroke-width="0.5"/>
<polygon points="740.63,182.08 741.80,182.74 744.37,184.13 743.91,183.88" fill="#a0998b" stroke="#a0998b" stroke-width="0.5"/>
<polygon points="741.80,182.74 747.21,185.08 749.69,186.43 744.37,184.13" fill="#a0998b" stroke="#a0998b" stroke-width="0.5"/>
<polygon points="747.21,185.08 752.62,187.42 755.10,188.77 749.69,186.43" fill="#a0998b" stroke="#a0998b" stroke-width="0.5"/>
<polygon points="752.62,187.42 758.02,189.76 760.50,191.11 755.10,188.77" fill="#a0998b" stroke="#a0998b" stroke-width="0.5"/>
<polygon points="758.02,189.76 763.43,192.10 765.91,193.45 760.50,191.11" fill="#a0998b" stroke="#a0998b" stroke-width="0.5"/>
<polygon points="763.43,192.10 768.83,194.44 771.32,195.79 765.91,193.45" fill="#a0998b" stroke="#a0998b" stroke-width="0.5"/>
<polygon points="768.83,194.44 774.24,196.78 776.72,198.13 771.32,195.79" fill="#a0998b" stroke="#a0998b" stroke-width="0.5"/>
<polygon points="774.24,196.78 779.65,199.12 782.13,200.47 776.72,198.13" fill="#a0998b" stroke="#a0998b" stroke-width="0.5"/>
<polygon points="779.65,199.12 785.05,201.46 787.53,202.81 782.13,200.47" fill="#a0998b" stroke="#a0998b" stroke-width="0.5"/>
<polygon points="785.05,201.46 790.46,203.80 792.94,205.15 787.53,202.81" fill="#a0998b" stroke="#a0998b" stroke-width="0.5"/>
<polygon points="790.46,203.80 795.87,206.14 798.35,207.49 792.94,205.15" fill="#a0998b" stroke="#a0998b" stroke-width="0.5"/>
<polygon points="795.87,206.14 801.27,208.48 803.67,209.79 798.35,207.49" fill="#a0998b" stroke="#a0998b" stroke-width="0.5"/>
<polygon points="806.87,208.74 806.71,208.40 804.31,204.72 801.87,200.99 799.42,197.26 796.98,193.53 794.54,189.80 792.10,186.07 789.66,182.34 787.22,178.61 784.78,174.88 782.34,171.15 779.90,167.42 777.46,163.68 775.06,160.02 774.76,159.68 774.40,159.45 773.94,159.30 773.43,159.22 772.91,159.22 772.40,159.30 771.95,159.46 771.52,159.74 767.63,162.94 763.66,166.19 759.70,169.44 755.74,172.69 751.77,175.95 747.81,179.20 743.91,182.40 743.60,182.72 743.48,183.02 743.48,205.59 743.60,205.29 743.91,204.97 747.81,201.77 751.77,198.52 755.74,195.26 759.70,192.01 763.66,188.76 767.63,185.51 771.52,182.31 771.95,182.03 772.40,181.87 772.91,181.79 773.43,181.79 773.94,181.87 774.40,182.02 774.76,182.25 775.06,182.59 777.46,186.25 779.90,189.99 782.34,193.72 784.78,197.45 787.22,201.18 789.66,204.91 792.10,208.64 794.54,212.37 796.98,216.10 799.42,219.83 801.87,223.56 804.31,227.29 806.71,230.97 806.87,231.31" fill="url(#g9)"/>
<polygon points="806.87,208.74 806.71,208.40 804.31,204.72 801.87,200.99 799.42,197.26 796.98,193.53 794.54,189.80 792.10,186.07 789.66,182.34 787.22,178.61 784.78,174.88 782.34,171.15 779.90,167.42 777.46,163.68 775.06,160.02 774.76,159.68 774.40,159.45 773.94,159.30 773.43,159.22 772.91,159.22 772.40,159.30 771.95,159.46 771.52,159.74 767.63,162.94 763.66,166.19 759.70,169.44 755.74,172.69 751.77,175.95 747.81,179.20 743.91,182.40 743.60,182.72 743.48,183.02 743.48,205.59 743.60,205.29 743.91,204.97 747.81,201.77 751.77,198.52 755.74,195.26 759.70,192.01 763.66,188.76 767.63,185.51 771.52,182.31 771.95,182.03 772.40,181.87 772.91,181.79 773.43,181.79 773.94,181.87 774.40,182.02 774.76,182.25 775.06,182.59 777.46,186.25 779.90,189.99 782.34,193.72 784.78,197.45 787.22,201.18 789.66,204.91 792.10,208.64 794.54,212.37 796.98,216.10 799.42,219.83 801.87,223.56 804.31,227.29 806.71,230.97 806.87,231.31" fill="url(#vs)"/>
<path d="M806.87,231.31 L806.71,230.97 L804.31,227.29 L801.87,223.56 L799.42,219.83 L796.98,216.10 L794.54,212.37 L792.10,208.64 L789.66,204.91 L787.22,201.18 L784.78,197.45 L782.34,193.72 L779.90,189.99 L777.46,186.25 L775.06,182.59 L774.76,182.25 L774.40,182.02 L773.94,181.87 L773.43,181.79 L772.91,181.79 L772.40,181.87 L771.95,182.03 L771.52,182.31 L767.63,185.51 L763.66,188.76 L759.70,192.01 L755.74,195.26 L751.77,198.52 L747.81,201.77 L743.91,204.97 L743.60,205.29 L743.48,205.59" fill="none" stroke="#17150f" stroke-width="1.2" stroke-linejoin="round" stroke-linecap="round"/>
<path d="M806.87,208.74 L806.71,208.40 L804.31,204.72 L801.87,200.99 L799.42,197.26 L796.98,193.53 L794.54,189.80 L792.10,186.07 L789.66,182.34 L787.22,178.61 L784.78,174.88 L782.34,171.15 L779.90,167.42 L777.46,163.68 L775.06,160.02 L774.76,159.68 L774.40,159.45 L773.94,159.30 L773.43,159.22 L772.91,159.22 L772.40,159.30 L771.95,159.46 L771.52,159.74 L767.63,162.94 L763.66,166.19 L759.70,169.44 L755.74,172.69 L751.77,175.95 L747.81,179.20 L743.91,182.40 L743.60,182.72 L743.48,183.02" fill="none" stroke="#17150f" stroke-width="1.1" stroke-linejoin="round"/>
</g>
<path d="M801.27,208.48 L802.67,208.93 L804.21,209.16 L805.79,209.15 L807.32,208.89 L808.69,208.42 L809.82,207.75 L810.62,206.93 L811.04,206.02 L811.06,205.07 L810.68,204.15 L808.24,200.42 L805.80,196.69 L803.36,192.96 L800.92,189.23 L798.48,185.50 L796.04,181.77 L793.60,178.04 L791.16,174.31 L788.72,170.58 L786.27,166.85 L783.83,163.12 L781.39,159.39 L778.95,155.66 L778.15,154.79 L777.00,154.09 L775.57,153.59 L773.97,153.33 L772.32,153.34 L770.73,153.61 L769.31,154.11 L768.17,154.83 L764.21,158.08 L760.25,161.33 L756.28,164.58 L752.32,167.83 L748.36,171.08 L744.39,174.33 L740.43,177.58 L739.66,178.43 L739.28,179.37 L739.33,180.33 L739.79,181.25 L740.63,182.08 L741.80,182.74 L747.21,185.08 L752.62,187.42 L758.02,189.76 L763.43,192.10 L768.83,194.44 L774.24,196.78 L779.65,199.12 L785.05,201.46 L790.46,203.80 L795.87,206.14 Z" fill="none" stroke="#17150f" stroke-width="1.3" stroke-linejoin="round"/>
<g clip-path="url(#c3)">
<polygon points="840.67,225.33 841.33,226.15 844.88,228.17 844.64,227.86" fill="#a0998b" stroke="#a0998b" stroke-width="0.5"/>
<polygon points="841.33,226.15 842.31,226.84 845.19,228.39 844.88,228.17" fill="#a0998b" stroke="#a0998b" stroke-width="0.5"/>
<polygon points="842.31,226.84 843.54,227.37 845.58,228.56 845.19,228.39" fill="#a0998b" stroke="#a0998b" stroke-width="0.5"/>
<polygon points="843.54,227.37 844.95,227.71 846.03,228.67 845.58,228.56" fill="#a0998b" stroke="#a0998b" stroke-width="0.5"/>
<polygon points="844.95,227.71 846.45,227.84 846.60,228.71 846.03,228.67" fill="#a0998b" stroke="#a0998b" stroke-width="0.5"/>
<polygon points="846.45,227.84 853.11,227.89 853.17,228.76 846.60,228.71" fill="#a0998b" stroke="#a0998b" stroke-width="0.5"/>
<polygon points="853.11,227.89 859.77,227.94 859.83,228.81 853.17,228.76" fill="#a0998b" stroke="#a0998b" stroke-width="0.5"/>
<polygon points="859.77,227.94 866.44,228.00 866.49,228.87 859.83,228.81" fill="#a0998b" stroke="#a0998b" stroke-width="0.5"/>
<polygon points="866.44,228.00 873.10,228.05 873.15,228.92 866.49,228.87" fill="#a0998b" stroke="#a0998b" stroke-width="0.5"/>
<polygon points="873.10,228.05 879.76,228.11 879.82,228.98 873.15,228.92" fill="#a0998b" stroke="#a0998b" stroke-width="0.5"/>
<polygon points="879.76,228.11 886.42,228.16 886.48,229.03 879.82,228.98" fill="#a0998b" stroke="#a0998b" stroke-width="0.5"/>
<polygon points="886.42,228.16 893.08,228.22 893.14,229.09 886.48,229.03" fill="#a0998b" stroke="#a0998b" stroke-width="0.5"/>
<polygon points="893.08,228.22 899.74,228.27 899.80,229.14 893.14,229.09" fill="#a0998b" stroke="#a0998b" stroke-width="0.5"/>
<polygon points="899.74,228.27 906.41,228.32 906.46,229.19 899.80,229.14" fill="#a0998b" stroke="#a0998b" stroke-width="0.5"/>
<polygon points="906.41,228.32 913.07,228.38 913.12,229.25 906.46,229.19" fill="#a0998b" stroke="#a0998b" stroke-width="0.5"/>
<polygon points="913.07,228.38 919.73,228.43 919.79,229.30 913.12,229.25" fill="#a0998b" stroke="#a0998b" stroke-width="0.5"/>
<polygon points="919.73,228.43 926.39,228.49 926.45,229.36 919.79,229.30" fill="#a0998b" stroke="#a0998b" stroke-width="0.5"/>
<polygon points="926.39,228.49 933.05,228.54 933.11,229.41 926.45,229.36" fill="#a0998b" stroke="#a0998b" stroke-width="0.5"/>
<polygon points="933.05,228.54 939.72,228.60 939.67,229.47 933.11,229.41" fill="#a0998b" stroke="#a0998b" stroke-width="0.5"/>
<polygon points="939.72,228.60 941.27,228.49 940.27,229.43 939.67,229.47" fill="#a0998b" stroke="#a0998b" stroke-width="0.5"/>
<polygon points="941.27,228.49 942.72,228.16 940.73,229.33 940.27,229.43" fill="#a0998b" stroke="#a0998b" stroke-width="0.5"/>
<polygon points="942.72,228.16 944.00,227.62 941.13,229.16 940.73,229.33" fill="#a0998b" stroke="#a0998b" stroke-width="0.5"/>
<polygon points="944.00,227.62 945.00,226.91 941.45,228.93 941.13,229.16" fill="#a0998b" stroke="#a0998b" stroke-width="0.5"/>
<polygon points="945.00,226.91 945.68,226.07 941.67,228.66 941.45,228.93" fill="#c4c0b6" stroke="#c4c0b6" stroke-width="0.5"/>
<polygon points="945.68,226.07 945.98,225.16 941.76,228.37 941.67,228.66" fill="#c4c0b6" stroke="#c4c0b6" stroke-width="0.5"/>
<polygon points="945.98,225.16 945.89,224.23 941.74,228.08 941.76,228.37" fill="#c7c3b9" stroke="#c7c3b9" stroke-width="0.5"/>
<polygon points="945.89,224.23 945.41,223.34 941.58,227.80 941.74,228.08" fill="#ccc8be" stroke="#ccc8be" stroke-width="0.5"/>
<polygon points="945.41,223.34 944.57,222.56 941.32,227.55 941.58,227.80" fill="#c7c3b8" stroke="#c7c3b8" stroke-width="0.5"/>
<polygon points="944.57,222.56 943.44,221.92 940.88,227.31 941.32,227.55" fill="#b9b5aa" stroke="#b9b5aa" stroke-width="0.5"/>
<polygon points="943.44,221.92 937.83,219.50 935.35,224.92 940.88,227.31" fill="#b4afa4" stroke="#b4afa4" stroke-width="0.5"/>
<polygon points="937.83,219.50 932.23,217.07 929.74,222.49 935.35,224.92" fill="#b4afa4" stroke="#b4afa4" stroke-width="0.5"/>
<polygon points="932.23,217.07 926.62,214.64 924.14,220.06 929.74,222.49" fill="#b4afa4" stroke="#b4afa4" stroke-width="0.5"/>
<polygon points="926.62,214.64 921.01,212.22 918.53,217.64 924.14,220.06" fill="#b4afa4" stroke="#b4afa4" stroke-width="0.5"/>
<polygon points="921.01,212.22 915.41,209.79 912.93,215.21 918.53,217.64" fill="#b4afa4" stroke="#b4afa4" stroke-width="0.5"/>
<polygon points="915.41,209.79 909.80,207.36 907.32,212.78 912.93,215.21" fill="#b4afa4" stroke="#b4afa4" stroke-width="0.5"/>
<polygon points="909.80,207.36 904.20,204.94 901.72,210.36 907.32,212.78" fill="#b4afa4" stroke="#b4afa4" stroke-width="0.5"/>
<polygon points="904.20,204.94 898.59,202.51 896.11,207.93 901.72,210.36" fill="#b4afa4" stroke="#b4afa4" stroke-width="0.5"/>
<polygon points="898.59,202.51 892.99,200.08 890.51,205.51 896.11,207.93" fill="#b4afa4" stroke="#b4afa4" stroke-width="0.5"/>
<polygon points="892.99,200.08 887.38,197.66 884.90,203.08 890.51,205.51" fill="#b4afa4" stroke="#b4afa4" stroke-width="0.5"/>
<polygon points="887.38,197.66 881.78,195.23 879.29,200.65 884.90,203.08" fill="#b4afa4" stroke="#b4afa4" stroke-width="0.5"/>
<polygon points="881.78,195.23 876.17,192.81 873.69,198.23 879.29,200.65" fill="#b4afa4" stroke="#b4afa4" stroke-width="0.5"/>
<polygon points="876.17,192.81 870.56,190.38 868.08,195.80 873.69,198.23" fill="#b4afa4" stroke="#b4afa4" stroke-width="0.5"/>
<polygon points="870.56,190.38 864.96,187.95 862.48,193.37 868.08,195.80" fill="#b4afa4" stroke="#b4afa4" stroke-width="0.5"/>
<polygon points="864.96,187.95 859.35,185.53 856.87,190.95 862.48,193.37" fill="#b4afa4" stroke="#b4afa4" stroke-width="0.5"/>
<polygon points="859.35,185.53 853.75,183.10 851.27,188.52 856.87,190.95" fill="#b4afa4" stroke="#b4afa4" stroke-width="0.5"/>
<polygon points="853.75,183.10 848.14,180.67 845.66,186.10 851.27,188.52" fill="#b4afa4" stroke="#b4afa4" stroke-width="0.5"/>
<polygon points="848.14,180.67 842.54,178.25 840.05,183.67 845.66,186.10" fill="#b4afa4" stroke="#b4afa4" stroke-width="0.5"/>
<polygon points="842.54,178.25 836.93,175.82 834.45,181.24 840.05,183.67" fill="#b4afa4" stroke="#b4afa4" stroke-width="0.5"/>
<polygon points="836.93,175.82 831.32,173.40 828.84,178.82 834.45,181.24" fill="#b4afa4" stroke="#b4afa4" stroke-width="0.5"/>
<polygon points="831.32,173.40 825.72,170.97 823.24,176.39 828.84,178.82" fill="#b4afa4" stroke="#b4afa4" stroke-width="0.5"/>
<polygon points="825.72,170.97 820.11,168.54 817.71,174.00 823.24,176.39" fill="#b4afa4" stroke="#b4afa4" stroke-width="0.5"/>
<polygon points="820.11,168.54 818.74,168.10 817.20,173.82 817.71,174.00" fill="#b9b5aa" stroke="#b9b5aa" stroke-width="0.5"/>
<polygon points="818.74,168.10 817.23,167.87 816.72,173.75 817.20,173.82" fill="#c7c4ba" stroke="#c7c4ba" stroke-width="0.5"/>
<polygon points="817.23,167.87 815.67,167.87 816.22,173.75 816.72,173.75" fill="#d4d1c8" stroke="#d4d1c8" stroke-width="0.5"/>
<polygon points="815.67,167.87 814.16,168.10 815.74,173.82 816.22,173.75" fill="#bfbaaf" stroke="#bfbaaf" stroke-width="0.5"/>
<polygon points="814.16,168.10 812.80,168.56 815.30,173.97 815.74,173.82" fill="#aaa497" stroke="#aaa497" stroke-width="0.5"/>
<polygon points="812.80,168.56 811.67,169.20 814.95,174.17 815.30,173.97" fill="#a49e90" stroke="#a49e90" stroke-width="0.5"/>
<polygon points="811.67,169.20 810.84,169.99 814.68,174.42 814.95,174.17" fill="#a0998b" stroke="#a0998b" stroke-width="0.5"/>
<polygon points="810.84,169.99 810.38,170.88 814.53,174.71 814.68,174.42" fill="#a0998b" stroke="#a0998b" stroke-width="0.5"/>
<polygon points="810.38,170.88 810.30,171.80 814.51,175.00 814.53,174.71" fill="#a0998b" stroke="#a0998b" stroke-width="0.5"/>
<polygon points="810.30,171.80 810.61,172.72 814.64,175.35 814.51,175.00" fill="#a0998b" stroke="#a0998b" stroke-width="0.5"/>
<polygon points="810.61,172.72 812.76,176.47 816.76,179.05 814.64,175.35" fill="#a0998b" stroke="#a0998b" stroke-width="0.5"/>
<polygon points="812.76,176.47 814.91,180.23 818.90,182.81 816.76,179.05" fill="#a0998b" stroke="#a0998b" stroke-width="0.5"/>
<polygon points="814.91,180.23 817.05,183.99 821.05,186.57 818.90,182.81" fill="#a0998b" stroke="#a0998b" stroke-width="0.5"/>
<polygon points="817.05,183.99 819.20,187.75 823.20,190.33 821.05,186.57" fill="#a0998b" stroke="#a0998b" stroke-width="0.5"/>
<polygon points="819.20,187.75 821.35,191.51 825.34,194.08 823.20,190.33" fill="#a0998b" stroke="#a0998b" stroke-width="0.5"/>
<polygon points="821.35,191.51 823.49,195.27 827.49,197.84 825.34,194.08" fill="#a0998b" stroke="#a0998b" stroke-width="0.5"/>
<polygon points="823.49,195.27 825.64,199.02 829.64,201.60 827.49,197.84" fill="#a0998b" stroke="#a0998b" stroke-width="0.5"/>
<polygon points="825.64,199.02 827.79,202.78 831.79,205.36 829.64,201.60" fill="#a0998b" stroke="#a0998b" stroke-width="0.5"/>
<polygon points="827.79,202.78 829.93,206.54 833.93,209.12 831.79,205.36" fill="#a0998b" stroke="#a0998b" stroke-width="0.5"/>
<polygon points="829.93,206.54 832.08,210.30 836.08,212.88 833.93,209.12" fill="#a0998b" stroke="#a0998b" stroke-width="0.5"/>
<polygon points="832.08,210.30 834.23,214.06 838.23,216.63 836.08,212.88" fill="#a0998b" stroke="#a0998b" stroke-width="0.5"/>
<polygon points="834.23,214.06 836.38,217.82 840.37,220.39 838.23,216.63" fill="#a0998b" stroke="#a0998b" stroke-width="0.5"/>
<polygon points="836.38,217.82 838.52,221.58 842.52,224.15 840.37,220.39" fill="#a0998b" stroke="#a0998b" stroke-width="0.5"/>
<polygon points="838.52,221.58 840.67,225.33 844.64,227.86 842.52,224.15" fill="#a0998b" stroke="#a0998b" stroke-width="0.5"/>
<polygon points="941.76,228.37 941.74,228.08 941.58,227.80 941.32,227.55 940.88,227.31 935.35,224.92 929.74,222.49 924.14,220.06 918.53,217.64 912.93,215.21 907.32,212.78 901.72,210.36 896.11,207.93 890.51,205.51 884.90,203.08 879.29,200.65 873.69,198.23 868.08,195.80 862.48,193.37 856.87,190.95 851.27,188.52 845.66,186.10 840.05,183.67 834.45,181.24 828.84,178.82 823.24,176.39 817.71,174.00 817.20,173.82 816.72,173.75 816.22,173.75 815.74,173.82 815.30,173.97 814.95,174.17 814.68,174.42 814.53,174.71 814.51,175.00 814.51,197.57 814.53,197.28 814.68,196.99 814.95,196.74 815.30,196.54 815.74,196.39 816.22,196.32 816.72,196.32 817.20,196.39 817.71,196.57 823.24,198.96 828.84,201.39 834.45,203.81 840.05,206.24 845.66,208.67 851.27,211.09 856.87,213.52 862.48,215.94 868.08,218.37 873.69,220.80 879.29,223.22 884.90,225.65 890.51,228.08 896.11,230.50 901.72,232.93 907.32,235.35 912.93,237.78 918.53,240.21 924.14,242.63 929.74,245.06 935.35,247.49 940.88,249.88 941.32,250.12 941.58,250.37 941.74,250.65 941.76,250.94" fill="url(#g10)"/>
<polygon points="941.76,228.37 941.74,228.08 941.58,227.80 941.32,227.55 940.88,227.31 935.35,224.92 929.74,222.49 924.14,220.06 918.53,217.64 912.93,215.21 907.32,212.78 901.72,210.36 896.11,207.93 890.51,205.51 884.90,203.08 879.29,200.65 873.69,198.23 868.08,195.80 862.48,193.37 856.87,190.95 851.27,188.52 845.66,186.10 840.05,183.67 834.45,181.24 828.84,178.82 823.24,176.39 817.71,174.00 817.20,173.82 816.72,173.75 816.22,173.75 815.74,173.82 815.30,173.97 814.95,174.17 814.68,174.42 814.53,174.71 814.51,175.00 814.51,197.57 814.53,197.28 814.68,196.99 814.95,196.74 815.30,196.54 815.74,196.39 816.22,196.32 816.72,196.32 817.20,196.39 817.71,196.57 823.24,198.96 828.84,201.39 834.45,203.81 840.05,206.24 845.66,208.67 851.27,211.09 856.87,213.52 862.48,215.94 868.08,218.37 873.69,220.80 879.29,223.22 884.90,225.65 890.51,228.08 896.11,230.50 901.72,232.93 907.32,235.35 912.93,237.78 918.53,240.21 924.14,242.63 929.74,245.06 935.35,247.49 940.88,249.88 941.32,250.12 941.58,250.37 941.74,250.65 941.76,250.94" fill="url(#vs)"/>
<path d="M941.76,250.94 L941.74,250.65 L941.58,250.37 L941.32,250.12 L940.88,249.88 L935.35,247.49 L929.74,245.06 L924.14,242.63 L918.53,240.21 L912.93,237.78 L907.32,235.35 L901.72,232.93 L896.11,230.50 L890.51,228.08 L884.90,225.65 L879.29,223.22 L873.69,220.80 L868.08,218.37 L862.48,215.94 L856.87,213.52 L851.27,211.09 L845.66,208.67 L840.05,206.24 L834.45,203.81 L828.84,201.39 L823.24,198.96 L817.71,196.57 L817.20,196.39 L816.72,196.32 L816.22,196.32 L815.74,196.39 L815.30,196.54 L814.95,196.74 L814.68,196.99 L814.53,197.28 L814.51,197.57" fill="none" stroke="#17150f" stroke-width="1.2" stroke-linejoin="round" stroke-linecap="round"/>
<path d="M941.76,228.37 L941.74,228.08 L941.58,227.80 L941.32,227.55 L940.88,227.31 L935.35,224.92 L929.74,222.49 L924.14,220.06 L918.53,217.64 L912.93,215.21 L907.32,212.78 L901.72,210.36 L896.11,207.93 L890.51,205.51 L884.90,203.08 L879.29,200.65 L873.69,198.23 L868.08,195.80 L862.48,193.37 L856.87,190.95 L851.27,188.52 L845.66,186.10 L840.05,183.67 L834.45,181.24 L828.84,178.82 L823.24,176.39 L817.71,174.00 L817.20,173.82 L816.72,173.75 L816.22,173.75 L815.74,173.82 L815.30,173.97 L814.95,174.17 L814.68,174.42 L814.53,174.71 L814.51,175.00" fill="none" stroke="#17150f" stroke-width="1.1" stroke-linejoin="round"/>
</g>
<path d="M840.67,225.33 L841.33,226.15 L842.31,226.84 L843.54,227.37 L844.95,227.71 L846.45,227.84 L853.11,227.89 L859.77,227.94 L866.44,228.00 L873.10,228.05 L879.76,228.11 L886.42,228.16 L893.08,228.22 L899.74,228.27 L906.41,228.32 L913.07,228.38 L919.73,228.43 L926.39,228.49 L933.05,228.54 L939.72,228.60 L941.27,228.49 L942.72,228.16 L944.00,227.62 L945.00,226.91 L945.68,226.07 L945.98,225.16 L945.89,224.23 L945.41,223.34 L944.57,222.56 L943.44,221.92 L937.83,219.50 L932.23,217.07 L926.62,214.64 L921.01,212.22 L915.41,209.79 L909.80,207.36 L904.20,204.94 L898.59,202.51 L892.99,200.08 L887.38,197.66 L881.78,195.23 L876.17,192.81 L870.56,190.38 L864.96,187.95 L859.35,185.53 L853.75,183.10 L848.14,180.67 L842.54,178.25 L836.93,175.82 L831.32,173.40 L825.72,170.97 L820.11,168.54 L818.74,168.10 L817.23,167.87 L815.67,167.87 L814.16,168.10 L812.80,168.56 L811.67,169.20 L810.84,169.99 L810.38,170.88 L810.30,171.80 L810.61,172.72 L812.76,176.47 L814.91,180.23 L817.05,183.99 L819.20,187.75 L821.35,191.51 L823.49,195.27 L825.64,199.02 L827.79,202.78 L829.93,206.54 L832.08,210.30 L834.23,214.06 L836.38,217.82 L838.52,221.58 Z" fill="none" stroke="#17150f" stroke-width="1.3" stroke-linejoin="round"/>
<g clip-path="url(#c4)">
<polygon points="945.27,272.47 946.69,272.93 948.21,273.96 947.67,273.78" fill="#a0998b" stroke="#a0998b" stroke-width="0.5"/>
<polygon points="946.69,272.93 948.27,273.15 948.71,274.03 948.21,273.96" fill="#a0998b" stroke="#a0998b" stroke-width="0.5"/>
<polygon points="948.27,273.15 949.88,273.13 949.22,274.03 948.71,274.03" fill="#a0998b" stroke="#a0998b" stroke-width="0.5"/>
<polygon points="949.88,273.13 951.43,272.85 949.71,273.94 949.22,274.03" fill="#a0998b" stroke="#a0998b" stroke-width="0.5"/>
<polygon points="951.43,272.85 952.81,272.35 950.15,273.78 949.71,273.94" fill="#a0998b" stroke="#a0998b" stroke-width="0.5"/>
<polygon points="952.81,272.35 953.92,271.65 950.57,273.50 950.15,273.78" fill="#a0998b" stroke="#a0998b" stroke-width="0.5"/>
<polygon points="953.92,271.65 957.70,268.55 954.29,270.45 950.57,273.50" fill="#c4c0b6" stroke="#c4c0b6" stroke-width="0.5"/>
<polygon points="957.70,268.55 961.49,265.44 958.07,267.35 954.29,270.45" fill="#a0998b" stroke="#a0998b" stroke-width="0.5"/>
<polygon points="961.49,265.44 965.27,262.34 961.85,264.25 958.07,267.35" fill="#a0998b" stroke="#a0998b" stroke-width="0.5"/>
<polygon points="965.27,262.34 969.05,259.24 965.63,261.14 961.85,264.25" fill="#a0998b" stroke="#a0998b" stroke-width="0.5"/>
<polygon points="969.05,259.24 972.83,256.14 969.42,258.04 965.63,261.14" fill="#a0998b" stroke="#a0998b" stroke-width="0.5"/>
<polygon points="972.83,256.14 976.61,253.03 973.20,254.94 969.42,258.04" fill="#a0998b" stroke="#a0998b" stroke-width="0.5"/>
<polygon points="976.61,253.03 980.40,249.93 976.98,251.84 973.20,254.94" fill="#a0998b" stroke="#a0998b" stroke-width="0.5"/>
<polygon points="980.40,249.93 984.18,246.83 980.70,248.79 976.98,251.84" fill="#a0998b" stroke="#a0998b" stroke-width="0.5"/>
<polygon points="984.18,246.83 984.96,245.96 981.01,248.46 980.70,248.79" fill="#c4c0b6" stroke="#c4c0b6" stroke-width="0.5"/>
<polygon points="984.96,245.96 985.33,245.00 981.13,248.15 981.01,248.46" fill="#c4c0b6" stroke="#c4c0b6" stroke-width="0.5"/>
<polygon points="985.33,245.00 985.27,244.02 981.11,247.84 981.13,248.15" fill="#c7c3b9" stroke="#c7c3b9" stroke-width="0.5"/>
<polygon points="985.27,244.02 984.77,243.08 980.95,247.54 981.11,247.84" fill="#ccc8be" stroke="#ccc8be" stroke-width="0.5"/>
<polygon points="984.77,243.08 983.87,242.26 980.66,247.28 980.95,247.54" fill="#c6c2b8" stroke="#c6c2b8" stroke-width="0.5"/>
<polygon points="983.87,242.26 982.64,241.60 980.27,247.07 980.66,247.28" fill="#b9b4a9" stroke="#b9b4a9" stroke-width="0.5"/>
<polygon points="982.64,241.60 981.16,241.17 979.80,246.93 980.27,247.07" fill="#bcb8ae" stroke="#bcb8ae" stroke-width="0.5"/>
<polygon points="981.16,241.17 979.55,240.97 979.18,246.87 979.80,246.93" fill="#cbc8be" stroke="#cbc8be" stroke-width="0.5"/>
<polygon points="979.55,240.97 972.71,240.72 972.45,246.62 979.18,246.87" fill="#d1cec4" stroke="#d1cec4" stroke-width="0.5"/>
<polygon points="972.71,240.72 965.87,240.47 965.61,246.37 972.45,246.62" fill="#d1cec4" stroke="#d1cec4" stroke-width="0.5"/>
<polygon points="965.87,240.47 959.03,240.22 958.77,246.12 965.61,246.37" fill="#d1cec4" stroke="#d1cec4" stroke-width="0.5"/>
<polygon points="959.03,240.22 952.19,239.97 951.93,245.87 958.77,246.12" fill="#d1cec4" stroke="#d1cec4" stroke-width="0.5"/>
<polygon points="952.19,239.97 945.35,239.72 945.10,245.61 951.93,245.87" fill="#d1cec4" stroke="#d1cec4" stroke-width="0.5"/>
<polygon points="945.35,239.72 938.52,239.47 938.26,245.36 945.10,245.61" fill="#d1cec4" stroke="#d1cec4" stroke-width="0.5"/>
<polygon points="938.52,239.47 931.68,239.21 931.42,245.11 938.26,245.36" fill="#d1cec4" stroke="#d1cec4" stroke-width="0.5"/>
<polygon points="931.68,239.21 924.84,238.96 924.58,244.86 931.42,245.11" fill="#d1cec4" stroke="#d1cec4" stroke-width="0.5"/>
<polygon points="924.84,238.96 918.00,238.71 917.74,244.61 924.58,244.86" fill="#d1cec4" stroke="#d1cec4" stroke-width="0.5"/>
<polygon points="918.00,238.71 911.16,238.46 910.90,244.36 917.74,244.61" fill="#d1cec4" stroke="#d1cec4" stroke-width="0.5"/>
<polygon points="911.16,238.46 904.32,238.21 904.07,244.11 910.90,244.36" fill="#d1cec4" stroke="#d1cec4" stroke-width="0.5"/>
<polygon points="904.32,238.21 897.49,237.96 897.23,243.85 904.07,244.11" fill="#d1cec4" stroke="#d1cec4" stroke-width="0.5"/>
<polygon points="897.49,237.96 890.65,237.71 890.39,243.60 897.23,243.85" fill="#d1cec4" stroke="#d1cec4" stroke-width="0.5"/>
<polygon points="890.65,237.71 883.81,237.45 883.65,243.35 890.39,243.60" fill="#d1cec4" stroke="#d1cec4" stroke-width="0.5"/>
<polygon points="883.81,237.45 882.22,237.52 883.05,243.37 883.65,243.35" fill="#d0cdc3" stroke="#d0cdc3" stroke-width="0.5"/>
<polygon points="882.22,237.52 880.72,237.82 882.57,243.47 883.05,243.37" fill="#b9b4a9" stroke="#b9b4a9" stroke-width="0.5"/>
<polygon points="880.72,237.82 879.39,238.34 882.14,243.63 882.57,243.47" fill="#a8a295" stroke="#a8a295" stroke-width="0.5"/>
<polygon points="879.39,238.34 878.33,239.05 881.81,243.86 882.14,243.63" fill="#a29c8e" stroke="#a29c8e" stroke-width="0.5"/>
<polygon points="878.33,239.05 877.60,239.89 881.58,244.13 881.81,243.86" fill="#a0998b" stroke="#a0998b" stroke-width="0.5"/>
<polygon points="877.60,239.89 877.26,240.82 881.47,244.42 881.58,244.13" fill="#a0998b" stroke="#a0998b" stroke-width="0.5"/>
<polygon points="877.26,240.82 877.33,241.76 881.49,244.72 881.47,244.42" fill="#a0998b" stroke="#a0998b" stroke-width="0.5"/>
<polygon points="877.33,241.76 877.79,242.67 881.64,245.01 881.49,244.72" fill="#a0998b" stroke="#a0998b" stroke-width="0.5"/>
<polygon points="877.79,242.67 878.63,243.47 881.90,245.27 881.64,245.01" fill="#a0998b" stroke="#a0998b" stroke-width="0.5"/>
<polygon points="878.63,243.47 879.79,244.12 882.36,245.51 881.90,245.27" fill="#a0998b" stroke="#a0998b" stroke-width="0.5"/>
<polygon points="879.79,244.12 885.25,246.49 887.73,247.84 882.36,245.51" fill="#a0998b" stroke="#a0998b" stroke-width="0.5"/>
<polygon points="885.25,246.49 890.70,248.85 893.19,250.20 887.73,247.84" fill="#a0998b" stroke="#a0998b" stroke-width="0.5"/>
<polygon points="890.70,248.85 896.16,251.21 898.64,252.56 893.19,250.20" fill="#a0998b" stroke="#a0998b" stroke-width="0.5"/>
<polygon points="896.16,251.21 901.62,253.57 904.10,254.92 898.64,252.56" fill="#a0998b" stroke="#a0998b" stroke-width="0.5"/>
<polygon points="901.62,253.57 907.07,255.93 909.56,257.28 904.10,254.92" fill="#a0998b" stroke="#a0998b" stroke-width="0.5"/>
<polygon points="907.07,255.93 912.53,258.29 915.01,259.64 909.56,257.28" fill="#a0998b" stroke="#a0998b" stroke-width="0.5"/>
<polygon points="912.53,258.29 917.99,260.66 920.47,262.01 915.01,259.64" fill="#a0998b" stroke="#a0998b" stroke-width="0.5"/>
<polygon points="917.99,260.66 923.45,263.02 925.93,264.37 920.47,262.01" fill="#a0998b" stroke="#a0998b" stroke-width="0.5"/>
<polygon points="923.45,263.02 928.90,265.38 931.38,266.73 925.93,264.37" fill="#a0998b" stroke="#a0998b" stroke-width="0.5"/>
<polygon points="928.90,265.38 934.36,267.74 936.84,269.09 931.38,266.73" fill="#a0998b" stroke="#a0998b" stroke-width="0.5"/>
<polygon points="934.36,267.74 939.82,270.10 942.30,271.45 936.84,269.09" fill="#a0998b" stroke="#a0998b" stroke-width="0.5"/>
<polygon points="939.82,270.10 945.27,272.47 947.67,273.78 942.30,271.45" fill="#a0998b" stroke="#a0998b" stroke-width="0.5"/>
<polygon points="981.13,248.15 981.11,247.84 980.95,247.54 980.66,247.28 980.27,247.07 979.80,246.93 979.18,246.87 972.45,246.62 965.61,246.37 958.77,246.12 951.93,245.87 945.10,245.61 938.26,245.36 931.42,245.11 924.58,244.86 917.74,244.61 910.90,244.36 904.07,244.11 897.23,243.85 890.39,243.60 883.65,243.35 883.05,243.37 882.57,243.47 882.14,243.63 881.81,243.86 881.58,244.13 881.47,244.42 881.47,266.99 881.58,266.70 881.81,266.43 882.14,266.20 882.57,266.04 883.05,265.94 883.65,265.92 890.39,266.17 897.23,266.42 904.07,266.68 910.90,266.93 917.74,267.18 924.58,267.43 931.42,267.68 938.26,267.93 945.10,268.18 951.93,268.44 958.77,268.69 965.61,268.94 972.45,269.19 979.18,269.44 979.80,269.50 980.27,269.64 980.66,269.85 980.95,270.11 981.11,270.41 981.13,270.72" fill="url(#g11)"/>
<polygon points="981.13,248.15 981.11,247.84 980.95,247.54 980.66,247.28 980.27,247.07 979.80,246.93 979.18,246.87 972.45,246.62 965.61,246.37 958.77,246.12 951.93,245.87 945.10,245.61 938.26,245.36 931.42,245.11 924.58,244.86 917.74,244.61 910.90,244.36 904.07,244.11 897.23,243.85 890.39,243.60 883.65,243.35 883.05,243.37 882.57,243.47 882.14,243.63 881.81,243.86 881.58,244.13 881.47,244.42 881.47,266.99 881.58,266.70 881.81,266.43 882.14,266.20 882.57,266.04 883.05,265.94 883.65,265.92 890.39,266.17 897.23,266.42 904.07,266.68 910.90,266.93 917.74,267.18 924.58,267.43 931.42,267.68 938.26,267.93 945.10,268.18 951.93,268.44 958.77,268.69 965.61,268.94 972.45,269.19 979.18,269.44 979.80,269.50 980.27,269.64 980.66,269.85 980.95,270.11 981.11,270.41 981.13,270.72" fill="url(#vs)"/>
<path d="M981.13,270.72 L981.11,270.41 L980.95,270.11 L980.66,269.85 L980.27,269.64 L979.80,269.50 L979.18,269.44 L972.45,269.19 L965.61,268.94 L958.77,268.69 L951.93,268.44 L945.10,268.18 L938.26,267.93 L931.42,267.68 L924.58,267.43 L917.74,267.18 L910.90,266.93 L904.07,266.68 L897.23,266.42 L890.39,266.17 L883.65,265.92 L883.05,265.94 L882.57,266.04 L882.14,266.20 L881.81,266.43 L881.58,266.70 L881.47,266.99" fill="none" stroke="#17150f" stroke-width="1.2" stroke-linejoin="round" stroke-linecap="round"/>
<path d="M981.13,248.15 L981.11,247.84 L980.95,247.54 L980.66,247.28 L980.27,247.07 L979.80,246.93 L979.18,246.87 L972.45,246.62 L965.61,246.37 L958.77,246.12 L951.93,245.87 L945.10,245.61 L938.26,245.36 L931.42,245.11 L924.58,244.86 L917.74,244.61 L910.90,244.36 L904.07,244.11 L897.23,243.85 L890.39,243.60 L883.65,243.35 L883.05,243.37 L882.57,243.47 L882.14,243.63 L881.81,243.86 L881.58,244.13 L881.47,244.42" fill="none" stroke="#17150f" stroke-width="1.1" stroke-linejoin="round"/>
</g>
<path d="M945.27,272.47 L946.69,272.93 L948.27,273.15 L949.88,273.13 L951.43,272.85 L952.81,272.35 L953.92,271.65 L957.70,268.55 L961.49,265.44 L965.27,262.34 L969.05,259.24 L972.83,256.14 L976.61,253.03 L980.40,249.93 L984.18,246.83 L984.96,245.96 L985.33,245.00 L985.27,244.02 L984.77,243.08 L983.87,242.26 L982.64,241.60 L981.16,241.17 L979.55,240.97 L972.71,240.72 L965.87,240.47 L959.03,240.22 L952.19,239.97 L945.35,239.72 L938.52,239.47 L931.68,239.21 L924.84,238.96 L918.00,238.71 L911.16,238.46 L904.32,238.21 L897.49,237.96 L890.65,237.71 L883.81,237.45 L882.22,237.52 L880.72,237.82 L879.39,238.34 L878.33,239.05 L877.60,239.89 L877.26,240.82 L877.33,241.76 L877.79,242.67 L878.63,243.47 L879.79,244.12 L885.25,246.49 L890.70,248.85 L896.16,251.21 L901.62,253.57 L907.07,255.93 L912.53,258.29 L917.99,260.66 L923.45,263.02 L928.90,265.38 L934.36,267.74 L939.82,270.10 Z" fill="none" stroke="#17150f" stroke-width="1.3" stroke-linejoin="round"/>
<g clip-path="url(#c5)">
<polygon points="257.37,576.19 256.57,577.08 260.53,581.34 260.85,581.00" fill="#a0998b" stroke="#a0998b" stroke-width="0.5"/>
<polygon points="256.57,577.08 256.21,578.07 260.42,581.65 260.53,581.34" fill="#a0998b" stroke="#a0998b" stroke-width="0.5"/>
<polygon points="256.21,578.07 256.31,579.08 260.45,581.97 260.42,581.65" fill="#a0998b" stroke="#a0998b" stroke-width="0.5"/>
<polygon points="256.31,579.08 256.87,580.04 260.63,582.28 260.45,581.97" fill="#a0998b" stroke="#a0998b" stroke-width="0.5"/>
<polygon points="256.87,580.04 257.85,580.87 260.94,582.54 260.63,582.28" fill="#a0998b" stroke="#a0998b" stroke-width="0.5"/>
<polygon points="257.85,580.87 259.16,581.51 261.36,582.75 260.94,582.54" fill="#a0998b" stroke="#a0998b" stroke-width="0.5"/>
<polygon points="259.16,581.51 260.72,581.91 261.85,582.88 261.36,582.75" fill="#a0998b" stroke="#a0998b" stroke-width="0.5"/>
<polygon points="260.72,581.91 262.41,582.05 262.51,582.92 261.85,582.88" fill="#a0998b" stroke="#a0998b" stroke-width="0.5"/>
<polygon points="262.41,582.05 269.06,582.03 269.04,582.90 262.51,582.92" fill="#a0998b" stroke="#a0998b" stroke-width="0.5"/>
<polygon points="269.06,582.03 275.71,582.01 275.69,582.88 269.04,582.90" fill="#a0998b" stroke="#a0998b" stroke-width="0.5"/>
<polygon points="275.71,582.01 282.36,582.00 282.34,582.87 275.69,582.88" fill="#a0998b" stroke="#a0998b" stroke-width="0.5"/>
<polygon points="282.36,582.00 289.02,581.98 289.00,582.85 282.34,582.87" fill="#a0998b" stroke="#a0998b" stroke-width="0.5"/>
<polygon points="289.02,581.98 295.67,581.96 295.65,582.83 289.00,582.85" fill="#a0998b" stroke="#a0998b" stroke-width="0.5"/>
<polygon points="295.67,581.96 302.32,581.94 302.30,582.81 295.65,582.83" fill="#a0998b" stroke="#a0998b" stroke-width="0.5"/>
<polygon points="302.32,581.94 308.97,581.93 308.95,582.80 302.30,582.81" fill="#a0998b" stroke="#a0998b" stroke-width="0.5"/>
<polygon points="308.97,581.93 315.62,581.91 315.60,582.78 308.95,582.80" fill="#a0998b" stroke="#a0998b" stroke-width="0.5"/>
<polygon points="315.62,581.91 322.27,581.89 322.25,582.76 315.60,582.78" fill="#a0998b" stroke="#a0998b" stroke-width="0.5"/>
<polygon points="322.27,581.89 328.92,581.87 328.90,582.74 322.25,582.76" fill="#a0998b" stroke="#a0998b" stroke-width="0.5"/>
<polygon points="328.92,581.87 335.57,581.86 335.55,582.73 328.90,582.74" fill="#a0998b" stroke="#a0998b" stroke-width="0.5"/>
<polygon points="335.57,581.86 342.23,581.84 342.21,582.71 335.55,582.73" fill="#a0998b" stroke="#a0998b" stroke-width="0.5"/>
<polygon points="342.23,581.84 348.88,581.82 348.86,582.69 342.21,582.71" fill="#a0998b" stroke="#a0998b" stroke-width="0.5"/>
<polygon points="348.88,581.82 355.53,581.80 355.51,582.67 348.86,582.69" fill="#a0998b" stroke="#a0998b" stroke-width="0.5"/>
<polygon points="355.53,581.80 362.18,581.79 362.06,582.66 355.51,582.67" fill="#a0998b" stroke="#a0998b" stroke-width="0.5"/>
<polygon points="362.18,581.79 363.72,581.67 362.65,582.62 362.06,582.66" fill="#a0998b" stroke="#a0998b" stroke-width="0.5"/>
<polygon points="363.72,581.67 365.16,581.32 363.11,582.51 362.65,582.62" fill="#a0998b" stroke="#a0998b" stroke-width="0.5"/>
<polygon points="365.16,581.32 366.41,580.78 363.50,582.34 363.11,582.51" fill="#a0998b" stroke="#a0998b" stroke-width="0.5"/>
<polygon points="366.41,580.78 367.39,580.07 363.82,582.11 363.50,582.34" fill="#a0998b" stroke="#a0998b" stroke-width="0.5"/>
<polygon points="367.39,580.07 368.05,579.23 364.03,581.84 363.82,582.11" fill="#c4c0b6" stroke="#c4c0b6" stroke-width="0.5"/>
<polygon points="368.05,579.23 368.33,578.32 364.12,581.55 364.03,581.84" fill="#c4c0b6" stroke="#c4c0b6" stroke-width="0.5"/>
<polygon points="368.33,578.32 368.23,577.40 364.09,581.26 364.12,581.55" fill="#c7c3b9" stroke="#c7c3b9" stroke-width="0.5"/>
<polygon points="368.23,577.40 367.75,576.52 363.93,580.98 364.09,581.26" fill="#ccc8be" stroke="#ccc8be" stroke-width="0.5"/>
<polygon points="367.75,576.52 366.92,575.74 363.67,580.73 363.93,580.98" fill="#c7c2b8" stroke="#c7c2b8" stroke-width="0.5"/>
<polygon points="366.92,575.74 365.79,575.11 363.23,580.50 363.67,580.73" fill="#b9b4aa" stroke="#b9b4aa" stroke-width="0.5"/>
<polygon points="365.79,575.11 360.36,572.76 357.88,578.18 363.23,580.50" fill="#b4afa4" stroke="#b4afa4" stroke-width="0.5"/>
<polygon points="360.36,572.76 354.94,570.42 352.46,575.84 357.88,578.18" fill="#b4afa4" stroke="#b4afa4" stroke-width="0.5"/>
<polygon points="354.94,570.42 349.51,568.07 347.03,573.49 352.46,575.84" fill="#b4afa4" stroke="#b4afa4" stroke-width="0.5"/>
<polygon points="349.51,568.07 344.09,565.72 341.61,571.14 347.03,573.49" fill="#b4afa4" stroke="#b4afa4" stroke-width="0.5"/>
<polygon points="344.09,565.72 338.66,563.37 336.18,568.79 341.61,571.14" fill="#b4afa4" stroke="#b4afa4" stroke-width="0.5"/>
<polygon points="338.66,563.37 333.24,561.02 330.76,566.44 336.18,568.79" fill="#b4afa4" stroke="#b4afa4" stroke-width="0.5"/>
<polygon points="333.24,561.02 327.81,558.67 325.33,564.09 330.76,566.44" fill="#b4afa4" stroke="#b4afa4" stroke-width="0.5"/>
<polygon points="327.81,558.67 322.39,556.33 319.91,561.75 325.33,564.09" fill="#b4afa4" stroke="#b4afa4" stroke-width="0.5"/>
<polygon points="322.39,556.33 316.96,553.98 314.48,559.40 319.91,561.75" fill="#b4afa4" stroke="#b4afa4" stroke-width="0.5"/>
<polygon points="316.96,553.98 311.54,551.63 309.05,557.05 314.48,559.40" fill="#b4afa4" stroke="#b4afa4" stroke-width="0.5"/>
<polygon points="311.54,551.63 306.11,549.28 303.63,554.70 309.05,557.05" fill="#b4afa4" stroke="#b4afa4" stroke-width="0.5"/>
<polygon points="306.11,549.28 300.68,546.93 298.29,552.39 303.63,554.70" fill="#b4afa4" stroke="#b4afa4" stroke-width="0.5"/>
<polygon points="300.68,546.93 299.26,546.47 297.75,552.21 298.29,552.39" fill="#bab5aa" stroke="#bab5aa" stroke-width="0.5"/>
<polygon points="299.26,546.47 297.69,546.25 297.25,552.14 297.75,552.21" fill="#c8c4bb" stroke="#c8c4bb" stroke-width="0.5"/>
<polygon points="297.69,546.25 296.08,546.27 296.74,552.14 297.25,552.14" fill="#d2cfc5" stroke="#d2cfc5" stroke-width="0.5"/>
<polygon points="296.08,546.27 294.53,546.55 296.24,552.23 296.74,552.14" fill="#bcb7ac" stroke="#bcb7ac" stroke-width="0.5"/>
<polygon points="294.53,546.55 293.15,547.05 295.81,552.39 296.24,552.23" fill="#a9a396" stroke="#a9a396" stroke-width="0.5"/>
<polygon points="293.15,547.05 292.03,547.75 295.39,552.67 295.81,552.39" fill="#a39c8e" stroke="#a39c8e" stroke-width="0.5"/>
<polygon points="292.03,547.75 288.18,550.91 291.60,555.77 295.39,552.67" fill="#a0998b" stroke="#a0998b" stroke-width="0.5"/>
<polygon points="288.18,550.91 284.33,554.07 287.75,558.93 291.60,555.77" fill="#a0998b" stroke="#a0998b" stroke-width="0.5"/>
<polygon points="284.33,554.07 280.48,557.23 283.90,562.09 287.75,558.93" fill="#a0998b" stroke="#a0998b" stroke-width="0.5"/>
<polygon points="280.48,557.23 276.63,560.39 280.04,565.25 283.90,562.09" fill="#a0998b" stroke="#a0998b" stroke-width="0.5"/>
<polygon points="276.63,560.39 272.78,563.55 276.19,568.41 280.04,565.25" fill="#a0998b" stroke="#a0998b" stroke-width="0.5"/>
<polygon points="272.78,563.55 268.92,566.71 272.34,571.57 276.19,568.41" fill="#a0998b" stroke="#a0998b" stroke-width="0.5"/>
<polygon points="268.92,566.71 265.07,569.87 268.49,574.73 272.34,571.57" fill="#a0998b" stroke="#a0998b" stroke-width="0.5"/>
<polygon points="265.07,569.87 261.22,573.03 264.64,577.89 268.49,574.73" fill="#a0998b" stroke="#a0998b" stroke-width="0.5"/>
<polygon points="261.22,573.03 257.37,576.19 260.85,581.00 264.64,577.89" fill="#a0998b" stroke="#a0998b" stroke-width="0.5"/>
<polygon points="364.12,581.55 364.09,581.26 363.93,580.98 363.67,580.73 363.23,580.50 357.88,578.18 352.46,575.84 347.03,573.49 341.61,571.14 336.18,568.79 330.76,566.44 325.33,564.09 319.91,561.75 314.48,559.40 309.05,557.05 303.63,554.70 298.29,552.39 297.75,552.21 297.25,552.14 296.74,552.14 296.24,552.23 295.81,552.39 295.39,552.67 291.60,555.77 287.75,558.93 283.90,562.09 280.04,565.25 276.19,568.41 272.34,571.57 268.49,574.73 264.64,577.89 260.85,581.00 260.53,581.34 260.42,581.65 260.42,604.22 260.53,603.91 260.85,603.57 264.64,600.46 268.49,597.30 272.34,594.14 276.19,590.98 280.04,587.82 283.90,584.66 287.75,581.50 291.60,578.34 295.39,575.24 295.81,574.96 296.24,574.80 296.74,574.71 297.25,574.71 297.75,574.78 298.29,574.96 303.63,577.27 309.05,579.62 314.48,581.97 319.91,584.32 325.33,586.66 330.76,589.01 336.18,591.36 341.61,593.71 347.03,596.06 352.46,598.41 357.88,600.75 363.23,603.07 363.67,603.30 363.93,603.55 364.09,603.83 364.12,604.12" fill="url(#g12)"/>
<polygon points="364.12,581.55 364.09,581.26 363.93,580.98 363.67,580.73 363.23,580.50 357.88,578.18 352.46,575.84 347.03,573.49 341.61,571.14 336.18,568.79 330.76,566.44 325.33,564.09 319.91,561.75 314.48,559.40 309.05,557.05 303.63,554.70 298.29,552.39 297.75,552.21 297.25,552.14 296.74,552.14 296.24,552.23 295.81,552.39 295.39,552.67 291.60,555.77 287.75,558.93 283.90,562.09 280.04,565.25 276.19,568.41 272.34,571.57 268.49,574.73 264.64,577.89 260.85,581.00 260.53,581.34 260.42,581.65 260.42,604.22 260.53,603.91 260.85,603.57 264.64,600.46 268.49,597.30 272.34,594.14 276.19,590.98 280.04,587.82 283.90,584.66 287.75,581.50 291.60,578.34 295.39,575.24 295.81,574.96 296.24,574.80 296.74,574.71 297.25,574.71 297.75,574.78 298.29,574.96 303.63,577.27 309.05,579.62 314.48,581.97 319.91,584.32 325.33,586.66 330.76,589.01 336.18,591.36 341.61,593.71 347.03,596.06 352.46,598.41 357.88,600.75 363.23,603.07 363.67,603.30 363.93,603.55 364.09,603.83 364.12,604.12" fill="url(#vs)"/>
<path d="M364.12,604.12 L364.09,603.83 L363.93,603.55 L363.67,603.30 L363.23,603.07 L357.88,600.75 L352.46,598.41 L347.03,596.06 L341.61,593.71 L336.18,591.36 L330.76,589.01 L325.33,586.66 L319.91,584.32 L314.48,581.97 L309.05,579.62 L303.63,577.27 L298.29,574.96 L297.75,574.78 L297.25,574.71 L296.74,574.71 L296.24,574.80 L295.81,574.96 L295.39,575.24 L291.60,578.34 L287.75,581.50 L283.90,584.66 L280.04,587.82 L276.19,590.98 L272.34,594.14 L268.49,597.30 L264.64,600.46 L260.85,603.57 L260.53,603.91 L260.42,604.22" fill="none" stroke="#17150f" stroke-width="1.2" stroke-linejoin="round" stroke-linecap="round"/>
<path d="M364.12,581.55 L364.09,581.26 L363.93,580.98 L363.67,580.73 L363.23,580.50 L357.88,578.18 L352.46,575.84 L347.03,573.49 L341.61,571.14 L336.18,568.79 L330.76,566.44 L325.33,564.09 L319.91,561.75 L314.48,559.40 L309.05,557.05 L303.63,554.70 L298.29,552.39 L297.75,552.21 L297.25,552.14 L296.74,552.14 L296.24,552.23 L295.81,552.39 L295.39,552.67 L291.60,555.77 L287.75,558.93 L283.90,562.09 L280.04,565.25 L276.19,568.41 L272.34,571.57 L268.49,574.73 L264.64,577.89 L260.85,581.00 L260.53,581.34 L260.42,581.65" fill="none" stroke="#17150f" stroke-width="1.1" stroke-linejoin="round"/>
</g>
<path d="M257.37,576.19 L256.57,577.08 L256.21,578.07 L256.31,579.08 L256.87,580.04 L257.85,580.87 L259.16,581.51 L260.72,581.91 L262.41,582.05 L269.06,582.03 L275.71,582.01 L282.36,582.00 L289.02,581.98 L295.67,581.96 L302.32,581.94 L308.97,581.93 L315.62,581.91 L322.27,581.89 L328.92,581.87 L335.57,581.86 L342.23,581.84 L348.88,581.82 L355.53,581.80 L362.18,581.79 L363.72,581.67 L365.16,581.32 L366.41,580.78 L367.39,580.07 L368.05,579.23 L368.33,578.32 L368.23,577.40 L367.75,576.52 L366.92,575.74 L365.79,575.11 L360.36,572.76 L354.94,570.42 L349.51,568.07 L344.09,565.72 L338.66,563.37 L333.24,561.02 L327.81,558.67 L322.39,556.33 L316.96,553.98 L311.54,551.63 L306.11,549.28 L300.68,546.93 L299.26,546.47 L297.69,546.25 L296.08,546.27 L294.53,546.55 L293.15,547.05 L292.03,547.75 L288.18,550.91 L284.33,554.07 L280.48,557.23 L276.63,560.39 L272.78,563.55 L268.92,566.71 L265.07,569.87 L261.22,573.03 Z" fill="none" stroke="#17150f" stroke-width="1.3" stroke-linejoin="round"/>
<g clip-path="url(#c6)">
<polygon points="422.75,668.17 424.24,668.65 425.70,669.67 425.13,669.48" fill="#a0998b" stroke="#a0998b" stroke-width="0.5"/>
<polygon points="424.24,668.65 425.89,668.86 426.23,669.74 425.70,669.67" fill="#a0998b" stroke="#a0998b" stroke-width="0.5"/>
<polygon points="425.89,668.86 427.58,668.81 426.76,669.72 426.23,669.74" fill="#a0998b" stroke="#a0998b" stroke-width="0.5"/>
<polygon points="427.58,668.81 429.18,668.48 427.27,669.62 426.76,669.72" fill="#a0998b" stroke="#a0998b" stroke-width="0.5"/>
<polygon points="429.18,668.48 430.57,667.91 427.72,669.44 427.27,669.62" fill="#a0998b" stroke="#a0998b" stroke-width="0.5"/>
<polygon points="430.57,667.91 431.65,667.13 428.06,669.19 427.72,669.44" fill="#a0998b" stroke="#a0998b" stroke-width="0.5"/>
<polygon points="431.65,667.13 432.33,666.21 428.28,668.90 428.06,669.19" fill="#c4c0b6" stroke="#c4c0b6" stroke-width="0.5"/>
<polygon points="432.33,666.21 432.58,665.21 428.36,668.58 428.28,668.90" fill="#c4c0b6" stroke="#c4c0b6" stroke-width="0.5"/>
<polygon points="432.58,665.21 432.36,664.21 428.26,668.20 428.36,668.58" fill="#c9c5bb" stroke="#c9c5bb" stroke-width="0.5"/>
<polygon points="432.36,664.21 430.55,660.26 426.48,664.31 428.26,668.20" fill="#cbc7bd" stroke="#cbc7bd" stroke-width="0.5"/>
<polygon points="430.55,660.26 428.74,656.31 424.67,660.36 426.48,664.31" fill="#cbc7bd" stroke="#cbc7bd" stroke-width="0.5"/>
<polygon points="428.74,656.31 426.93,652.36 422.86,656.41 424.67,660.36" fill="#cbc7bd" stroke="#cbc7bd" stroke-width="0.5"/>
<polygon points="426.93,652.36 425.12,648.41 421.04,652.46 422.86,656.41" fill="#cbc7bd" stroke="#cbc7bd" stroke-width="0.5"/>
<polygon points="425.12,648.41 423.31,644.46 419.23,648.51 421.04,652.46" fill="#cbc7bd" stroke="#cbc7bd" stroke-width="0.5"/>
<polygon points="423.31,644.46 421.50,640.51 417.42,644.56 419.23,648.51" fill="#cbc7bd" stroke="#cbc7bd" stroke-width="0.5"/>
<polygon points="421.50,640.51 419.69,636.56 415.61,640.60 417.42,644.56" fill="#cbc7bd" stroke="#cbc7bd" stroke-width="0.5"/>
<polygon points="419.69,636.56 417.88,632.61 413.80,636.65 415.61,640.60" fill="#cbc7bd" stroke="#cbc7bd" stroke-width="0.5"/>
<polygon points="417.88,632.61 416.07,628.65 411.99,632.70 413.80,636.65" fill="#cbc7bd" stroke="#cbc7bd" stroke-width="0.5"/>
<polygon points="416.07,628.65 414.26,624.70 410.18,628.75 411.99,632.70" fill="#cbc7bd" stroke="#cbc7bd" stroke-width="0.5"/>
<polygon points="414.26,624.70 412.45,620.75 408.37,624.80 410.18,628.75" fill="#cbc7bd" stroke="#cbc7bd" stroke-width="0.5"/>
<polygon points="412.45,620.75 410.64,616.80 406.56,620.85 408.37,624.80" fill="#cbc7bd" stroke="#cbc7bd" stroke-width="0.5"/>
<polygon points="410.64,616.80 408.82,612.85 404.75,616.90 406.56,620.85" fill="#cbc7bd" stroke="#cbc7bd" stroke-width="0.5"/>
<polygon points="408.82,612.85 407.01,608.90 402.94,612.95 404.75,616.90" fill="#cbc7bd" stroke="#cbc7bd" stroke-width="0.5"/>
<polygon points="407.01,608.90 405.20,604.95 401.13,608.99 402.94,612.95" fill="#cbc7bd" stroke="#cbc7bd" stroke-width="0.5"/>
<polygon points="405.20,604.95 403.39,601.00 399.32,605.04 401.13,608.99" fill="#cbc7bd" stroke="#cbc7bd" stroke-width="0.5"/>
<polygon points="403.39,601.00 401.58,597.04 397.51,601.09 399.32,605.04" fill="#cbc7bd" stroke="#cbc7bd" stroke-width="0.5"/>
<polygon points="401.58,597.04 399.77,593.09 395.73,597.20 397.51,601.09" fill="#cbc7bd" stroke="#cbc7bd" stroke-width="0.5"/>
<polygon points="399.77,593.09 399.13,592.19 395.50,596.85 395.73,597.20" fill="#cdc9bf" stroke="#cdc9bf" stroke-width="0.5"/>
<polygon points="399.13,592.19 398.12,591.42 395.17,596.61 395.50,596.85" fill="#c2bdb3" stroke="#c2bdb3" stroke-width="0.5"/>
<polygon points="398.12,591.42 396.80,590.84 394.75,596.42 395.17,596.61" fill="#b5b0a5" stroke="#b5b0a5" stroke-width="0.5"/>
<polygon points="396.80,590.84 395.28,590.48 394.27,596.31 394.75,596.42" fill="#c1bdb3" stroke="#c1bdb3" stroke-width="0.5"/>
<polygon points="395.28,590.48 393.64,590.38 393.64,596.28 394.27,596.31" fill="#d0ccc3" stroke="#d0ccc3" stroke-width="0.5"/>
<polygon points="393.64,590.38 386.94,590.47 387.04,596.37 393.64,596.28" fill="#d2cfc6" stroke="#d2cfc6" stroke-width="0.5"/>
<polygon points="386.94,590.47 380.23,590.57 380.34,596.47 387.04,596.37" fill="#d2cfc6" stroke="#d2cfc6" stroke-width="0.5"/>
<polygon points="380.23,590.57 373.52,590.67 373.63,596.57 380.34,596.47" fill="#d2cfc6" stroke="#d2cfc6" stroke-width="0.5"/>
<polygon points="373.52,590.67 366.82,590.77 366.92,596.67 373.63,596.57" fill="#d2cfc6" stroke="#d2cfc6" stroke-width="0.5"/>
<polygon points="366.82,590.77 360.11,590.86 360.22,596.77 366.92,596.67" fill="#d2cfc6" stroke="#d2cfc6" stroke-width="0.5"/>
<polygon points="360.11,590.86 353.40,590.96 353.51,596.86 360.22,596.77" fill="#d2cfc6" stroke="#d2cfc6" stroke-width="0.5"/>
<polygon points="353.40,590.96 346.70,591.06 346.80,596.96 353.51,596.86" fill="#d2cfc6" stroke="#d2cfc6" stroke-width="0.5"/>
<polygon points="346.70,591.06 339.99,591.16 340.09,597.06 346.80,596.96" fill="#d2cfc6" stroke="#d2cfc6" stroke-width="0.5"/>
<polygon points="339.99,591.16 333.28,591.26 333.39,597.16 340.09,597.06" fill="#d2cfc6" stroke="#d2cfc6" stroke-width="0.5"/>
<polygon points="333.28,591.26 326.58,591.35 326.68,597.25 333.39,597.16" fill="#d2cfc6" stroke="#d2cfc6" stroke-width="0.5"/>
<polygon points="326.58,591.35 319.87,591.45 319.97,597.35 326.68,597.25" fill="#d2cfc6" stroke="#d2cfc6" stroke-width="0.5"/>
<polygon points="319.87,591.45 313.16,591.55 313.27,597.45 319.97,597.35" fill="#d2cfc6" stroke="#d2cfc6" stroke-width="0.5"/>
<polygon points="313.16,591.55 306.46,591.65 306.56,597.55 313.27,597.45" fill="#d2cfc6" stroke="#d2cfc6" stroke-width="0.5"/>
<polygon points="306.46,591.65 299.75,591.75 299.85,597.65 306.56,597.55" fill="#d2cfc6" stroke="#d2cfc6" stroke-width="0.5"/>
<polygon points="299.75,591.75 293.04,591.84 293.15,597.74 299.85,597.65" fill="#d2cfc6" stroke="#d2cfc6" stroke-width="0.5"/>
<polygon points="293.04,591.84 286.33,591.94 286.44,597.84 293.15,597.74" fill="#d2cfc6" stroke="#d2cfc6" stroke-width="0.5"/>
<polygon points="286.33,591.94 279.63,592.04 279.73,597.94 286.44,597.84" fill="#d2cfc6" stroke="#d2cfc6" stroke-width="0.5"/>
<polygon points="279.63,592.04 272.92,592.14 273.03,598.04 279.73,597.94" fill="#d2cfc6" stroke="#d2cfc6" stroke-width="0.5"/>
<polygon points="272.92,592.14 266.21,592.24 266.42,598.13 273.03,598.04" fill="#d2cfc6" stroke="#d2cfc6" stroke-width="0.5"/>
<polygon points="266.21,592.24 264.69,592.37 265.83,598.18 266.42,598.13" fill="#c9c5bb" stroke="#c9c5bb" stroke-width="0.5"/>
<polygon points="264.69,592.37 263.28,592.73 265.38,598.29 265.83,598.18" fill="#b3aea1" stroke="#b3aea1" stroke-width="0.5"/>
<polygon points="263.28,592.73 262.05,593.28 264.99,598.47 265.38,598.29" fill="#a7a093" stroke="#a7a093" stroke-width="0.5"/>
<polygon points="262.05,593.28 261.09,593.99 264.69,598.70 264.99,598.47" fill="#a19a8c" stroke="#a19a8c" stroke-width="0.5"/>
<polygon points="261.09,593.99 260.45,594.83 264.49,598.96 264.69,598.70" fill="#a0998b" stroke="#a0998b" stroke-width="0.5"/>
<polygon points="260.45,594.83 260.18,595.73 264.40,599.25 264.49,598.96" fill="#a0998b" stroke="#a0998b" stroke-width="0.5"/>
<polygon points="260.18,595.73 260.29,596.64 264.43,599.54 264.40,599.25" fill="#a0998b" stroke="#a0998b" stroke-width="0.5"/>
<polygon points="260.29,596.64 260.78,597.51 264.59,599.81 264.43,599.54" fill="#a0998b" stroke="#a0998b" stroke-width="0.5"/>
<polygon points="260.78,597.51 261.61,598.28 264.85,600.06 264.59,599.81" fill="#a0998b" stroke="#a0998b" stroke-width="0.5"/>
<polygon points="261.61,598.28 262.73,598.91 265.29,600.29 264.85,600.06" fill="#a0998b" stroke="#a0998b" stroke-width="0.5"/>
<polygon points="262.73,598.91 268.25,601.30 270.73,602.65 265.29,600.29" fill="#a0998b" stroke="#a0998b" stroke-width="0.5"/>
<polygon points="268.25,601.30 273.76,603.69 276.25,605.04 270.73,602.65" fill="#a0998b" stroke="#a0998b" stroke-width="0.5"/>
<polygon points="273.76,603.69 279.28,606.07 281.76,607.42 276.25,605.04" fill="#a0998b" stroke="#a0998b" stroke-width="0.5"/>
<polygon points="279.28,606.07 284.80,608.46 287.28,609.81 281.76,607.42" fill="#a0998b" stroke="#a0998b" stroke-width="0.5"/>
<polygon points="284.80,608.46 290.32,610.85 292.80,612.20 287.28,609.81" fill="#a0998b" stroke="#a0998b" stroke-width="0.5"/>
<polygon points="290.32,610.85 295.84,613.24 298.32,614.59 292.80,612.20" fill="#a0998b" stroke="#a0998b" stroke-width="0.5"/>
<polygon points="295.84,613.24 301.35,615.63 303.83,616.98 298.32,614.59" fill="#a0998b" stroke="#a0998b" stroke-width="0.5"/>
<polygon points="301.35,615.63 306.87,618.02 309.35,619.37 303.83,616.98" fill="#a0998b" stroke="#a0998b" stroke-width="0.5"/>
<polygon points="306.87,618.02 312.39,620.40 314.87,621.75 309.35,619.37" fill="#a0998b" stroke="#a0998b" stroke-width="0.5"/>
<polygon points="312.39,620.40 317.91,622.79 320.39,624.14 314.87,621.75" fill="#a0998b" stroke="#a0998b" stroke-width="0.5"/>
<polygon points="317.91,622.79 323.43,625.18 325.91,626.53 320.39,624.14" fill="#a0998b" stroke="#a0998b" stroke-width="0.5"/>
<polygon points="323.43,625.18 328.94,627.57 331.42,628.92 325.91,626.53" fill="#a0998b" stroke="#a0998b" stroke-width="0.5"/>
<polygon points="328.94,627.57 334.46,629.96 336.94,631.31 331.42,628.92" fill="#a0998b" stroke="#a0998b" stroke-width="0.5"/>
<polygon points="334.46,629.96 339.98,632.35 342.46,633.70 336.94,631.31" fill="#a0998b" stroke="#a0998b" stroke-width="0.5"/>
<polygon points="339.98,632.35 345.50,634.73 347.98,636.08 342.46,633.70" fill="#a0998b" stroke="#a0998b" stroke-width="0.5"/>
<polygon points="345.50,634.73 351.01,637.12 353.50,638.47 347.98,636.08" fill="#a0998b" stroke="#a0998b" stroke-width="0.5"/>
<polygon points="351.01,637.12 356.53,639.51 359.01,640.86 353.50,638.47" fill="#a0998b" stroke="#a0998b" stroke-width="0.5"/>
<polygon points="356.53,639.51 362.05,641.90 364.53,643.25 359.01,640.86" fill="#a0998b" stroke="#a0998b" stroke-width="0.5"/>
<polygon points="362.05,641.90 367.57,644.29 370.05,645.64 364.53,643.25" fill="#a0998b" stroke="#a0998b" stroke-width="0.5"/>
<polygon points="367.57,644.29 373.09,646.68 375.57,648.03 370.05,645.64" fill="#a0998b" stroke="#a0998b" stroke-width="0.5"/>
<polygon points="373.09,646.68 378.60,649.06 381.08,650.41 375.57,648.03" fill="#a0998b" stroke="#a0998b" stroke-width="0.5"/>
<polygon points="378.60,649.06 384.12,651.45 386.60,652.80 381.08,650.41" fill="#a0998b" stroke="#a0998b" stroke-width="0.5"/>
<polygon points="384.12,651.45 389.64,653.84 392.12,655.19 386.60,652.80" fill="#a0998b" stroke="#a0998b" stroke-width="0.5"/>
<polygon points="389.64,653.84 395.16,656.23 397.64,657.58 392.12,655.19" fill="#a0998b" stroke="#a0998b" stroke-width="0.5"/>
<polygon points="395.16,656.23 400.67,658.62 403.16,659.97 397.64,657.58" fill="#a0998b" stroke="#a0998b" stroke-width="0.5"/>
<polygon points="400.67,658.62 406.19,661.01 408.67,662.36 403.16,659.97" fill="#a0998b" stroke="#a0998b" stroke-width="0.5"/>
<polygon points="406.19,661.01 411.71,663.39 414.19,664.74 408.67,662.36" fill="#a0998b" stroke="#a0998b" stroke-width="0.5"/>
<polygon points="411.71,663.39 417.23,665.78 419.71,667.13 414.19,664.74" fill="#a0998b" stroke="#a0998b" stroke-width="0.5"/>
<polygon points="417.23,665.78 422.75,668.17 425.13,669.48 419.71,667.13" fill="#a0998b" stroke="#a0998b" stroke-width="0.5"/>
<polygon points="428.36,668.58 428.26,668.20 426.48,664.31 424.67,660.36 422.86,656.41 421.04,652.46 419.23,648.51 417.42,644.56 415.61,640.60 413.80,636.65 411.99,632.70 410.18,628.75 408.37,624.80 406.56,620.85 404.75,616.90 402.94,612.95 401.13,608.99 399.32,605.04 397.51,601.09 395.73,597.20 395.50,596.85 395.17,596.61 394.75,596.42 394.27,596.31 393.64,596.28 387.04,596.37 380.34,596.47 373.63,596.57 366.92,596.67 360.22,596.77 353.51,596.86 346.80,596.96 340.09,597.06 333.39,597.16 326.68,597.25 319.97,597.35 313.27,597.45 306.56,597.55 299.85,597.65 293.15,597.74 286.44,597.84 279.73,597.94 273.03,598.04 266.42,598.13 265.83,598.18 265.38,598.29 264.99,598.47 264.69,598.70 264.49,598.96 264.40,599.25 264.40,621.82 264.49,621.53 264.69,621.27 264.99,621.04 265.38,620.86 265.83,620.75 266.42,620.70 273.03,620.61 279.73,620.51 286.44,620.41 293.15,620.31 299.85,620.22 306.56,620.12 313.27,620.02 319.97,619.92 326.68,619.82 333.39,619.73 340.09,619.63 346.80,619.53 353.51,619.43 360.22,619.34 366.92,619.24 373.63,619.14 380.34,619.04 387.04,618.94 393.64,618.85 394.27,618.88 394.75,618.99 395.17,619.18 395.50,619.42 395.73,619.77 397.51,623.66 399.32,627.61 401.13,631.56 402.94,635.52 404.75,639.47 406.56,643.42 408.37,647.37 410.18,651.32 411.99,655.27 413.80,659.22 415.61,663.17 417.42,667.13 419.23,671.08 421.04,675.03 422.86,678.98 424.67,682.93 426.48,686.88 428.26,690.77 428.36,691.15" fill="url(#g13)"/>
<polygon points="428.36,668.58 428.26,668.20 426.48,664.31 424.67,660.36 422.86,656.41 421.04,652.46 419.23,648.51 417.42,644.56 415.61,640.60 413.80,636.65 411.99,632.70 410.18,628.75 408.37,624.80 406.56,620.85 404.75,616.90 402.94,612.95 401.13,608.99 399.32,605.04 397.51,601.09 395.73,597.20 395.50,596.85 395.17,596.61 394.75,596.42 394.27,596.31 393.64,596.28 387.04,596.37 380.34,596.47 373.63,596.57 366.92,596.67 360.22,596.77 353.51,596.86 346.80,596.96 340.09,597.06 333.39,597.16 326.68,597.25 319.97,597.35 313.27,597.45 306.56,597.55 299.85,597.65 293.15,597.74 286.44,597.84 279.73,597.94 273.03,598.04 266.42,598.13 265.83,598.18 265.38,598.29 264.99,598.47 264.69,598.70 264.49,598.96 264.40,599.25 264.40,621.82 264.49,621.53 264.69,621.27 264.99,621.04 265.38,620.86 265.83,620.75 266.42,620.70 273.03,620.61 279.73,620.51 286.44,620.41 293.15,620.31 299.85,620.22 306.56,620.12 313.27,620.02 319.97,619.92 326.68,619.82 333.39,619.73 340.09,619.63 346.80,619.53 353.51,619.43 360.22,619.34 366.92,619.24 373.63,619.14 380.34,619.04 387.04,618.94 393.64,618.85 394.27,618.88 394.75,618.99 395.17,619.18 395.50,619.42 395.73,619.77 397.51,623.66 399.32,627.61 401.13,631.56 402.94,635.52 404.75,639.47 406.56,643.42 408.37,647.37 410.18,651.32 411.99,655.27 413.80,659.22 415.61,663.17 417.42,667.13 419.23,671.08 421.04,675.03 422.86,678.98 424.67,682.93 426.48,686.88 428.26,690.77 428.36,691.15" fill="url(#vs)"/>
<path d="M428.36,691.15 L428.26,690.77 L426.48,686.88 L424.67,682.93 L422.86,678.98 L421.04,675.03 L419.23,671.08 L417.42,667.13 L415.61,663.17 L413.80,659.22 L411.99,655.27 L410.18,651.32 L408.37,647.37 L406.56,643.42 L404.75,639.47 L402.94,635.52 L401.13,631.56 L399.32,627.61 L397.51,623.66 L395.73,619.77 L395.50,619.42 L395.17,619.18 L394.75,618.99 L394.27,618.88 L393.64,618.85 L387.04,618.94 L380.34,619.04 L373.63,619.14 L366.92,619.24 L360.22,619.34 L353.51,619.43 L346.80,619.53 L340.09,619.63 L333.39,619.73 L326.68,619.82 L319.97,619.92 L313.27,620.02 L306.56,620.12 L299.85,620.22 L293.15,620.31 L286.44,620.41 L279.73,620.51 L273.03,620.61 L266.42,620.70 L265.83,620.75 L265.38,620.86 L264.99,621.04 L264.69,621.27 L264.49,621.53 L264.40,621.82" fill="none" stroke="#17150f" stroke-width="1.2" stroke-linejoin="round" stroke-linecap="round"/>
<path d="M428.36,668.58 L428.26,668.20 L426.48,664.31 L424.67,660.36 L422.86,656.41 L421.04,652.46 L419.23,648.51 L417.42,644.56 L415.61,640.60 L413.80,636.65 L411.99,632.70 L410.18,628.75 L408.37,624.80 L406.56,620.85 L404.75,616.90 L402.94,612.95 L401.13,608.99 L399.32,605.04 L397.51,601.09 L395.73,597.20 L395.50,596.85 L395.17,596.61 L394.75,596.42 L394.27,596.31 L393.64,596.28 L387.04,596.37 L380.34,596.47 L373.63,596.57 L366.92,596.67 L360.22,596.77 L353.51,596.86 L346.80,596.96 L340.09,597.06 L333.39,597.16 L326.68,597.25 L319.97,597.35 L313.27,597.45 L306.56,597.55 L299.85,597.65 L293.15,597.74 L286.44,597.84 L279.73,597.94 L273.03,598.04 L266.42,598.13 L265.83,598.18 L265.38,598.29 L264.99,598.47 L264.69,598.70 L264.49,598.96 L264.40,599.25" fill="none" stroke="#17150f" stroke-width="1.1" stroke-linejoin="round"/>
</g>
<path d="M422.75,668.17 L424.24,668.65 L425.89,668.86 L427.58,668.81 L429.18,668.48 L430.57,667.91 L431.65,667.13 L432.33,666.21 L432.58,665.21 L432.36,664.21 L430.55,660.26 L428.74,656.31 L426.93,652.36 L425.12,648.41 L423.31,644.46 L421.50,640.51 L419.69,636.56 L417.88,632.61 L416.07,628.65 L414.26,624.70 L412.45,620.75 L410.64,616.80 L408.82,612.85 L407.01,608.90 L405.20,604.95 L403.39,601.00 L401.58,597.04 L399.77,593.09 L399.13,592.19 L398.12,591.42 L396.80,590.84 L395.28,590.48 L393.64,590.38 L386.94,590.47 L380.23,590.57 L373.52,590.67 L366.82,590.77 L360.11,590.86 L353.40,590.96 L346.70,591.06 L339.99,591.16 L333.28,591.26 L326.58,591.35 L319.87,591.45 L313.16,591.55 L306.46,591.65 L299.75,591.75 L293.04,591.84 L286.33,591.94 L279.63,592.04 L272.92,592.14 L266.21,592.24 L264.69,592.37 L263.28,592.73 L262.05,593.28 L261.09,593.99 L260.45,594.83 L260.18,595.73 L260.29,596.64 L260.78,597.51 L261.61,598.28 L262.73,598.91 L268.25,601.30 L273.76,603.69 L279.28,606.07 L284.80,608.46 L290.32,610.85 L295.84,613.24 L301.35,615.63 L306.87,618.02 L312.39,620.40 L317.91,622.79 L323.43,625.18 L328.94,627.57 L334.46,629.96 L339.98,632.35 L345.50,634.73 L351.01,637.12 L356.53,639.51 L362.05,641.90 L367.57,644.29 L373.09,646.68 L378.60,649.06 L384.12,651.45 L389.64,653.84 L395.16,656.23 L400.67,658.62 L406.19,661.01 L411.71,663.39 L417.23,665.78 Z" fill="none" stroke="#17150f" stroke-width="1.3" stroke-linejoin="round"/>
<g clip-path="url(#c7)">
<polygon points="455.14,665.00 455.74,665.84 459.40,667.96 459.18,667.64" fill="#a0998b" stroke="#a0998b" stroke-width="0.5"/>
<polygon points="455.74,665.84 456.67,666.57 459.69,668.19 459.40,667.96" fill="#a0998b" stroke="#a0998b" stroke-width="0.5"/>
<polygon points="456.67,666.57 457.87,667.14 460.07,668.38 459.69,668.19" fill="#a0998b" stroke="#a0998b" stroke-width="0.5"/>
<polygon points="457.87,667.14 459.27,667.51 460.52,668.50 460.07,668.38" fill="#a0998b" stroke="#a0998b" stroke-width="0.5"/>
<polygon points="459.27,667.51 460.78,667.67 461.00,668.55 460.52,668.50" fill="#a0998b" stroke="#a0998b" stroke-width="0.5"/>
<polygon points="460.78,667.67 462.31,667.61 461.49,668.52 461.00,668.55" fill="#a0998b" stroke="#a0998b" stroke-width="0.5"/>
<polygon points="462.31,667.61 463.77,667.32 461.95,668.43 461.49,668.52" fill="#a0998b" stroke="#a0998b" stroke-width="0.5"/>
<polygon points="463.77,667.32 465.06,666.82 462.36,668.28 461.95,668.43" fill="#a0998b" stroke="#a0998b" stroke-width="0.5"/>
<polygon points="465.06,666.82 466.11,666.16 462.75,668.02 462.36,668.28" fill="#a0998b" stroke="#a0998b" stroke-width="0.5"/>
<polygon points="466.11,666.16 469.93,663.02 466.51,664.93 462.75,668.02" fill="#c4c0b6" stroke="#c4c0b6" stroke-width="0.5"/>
<polygon points="469.93,663.02 473.75,659.89 470.33,661.80 466.51,664.93" fill="#a0998b" stroke="#a0998b" stroke-width="0.5"/>
<polygon points="473.75,659.89 477.56,656.76 474.15,658.67 470.33,661.80" fill="#a0998b" stroke="#a0998b" stroke-width="0.5"/>
<polygon points="477.56,656.76 481.38,653.63 477.97,655.53 474.15,658.67" fill="#a0998b" stroke="#a0998b" stroke-width="0.5"/>
<polygon points="481.38,653.63 485.20,650.50 481.78,652.40 477.97,655.53" fill="#a0998b" stroke="#a0998b" stroke-width="0.5"/>
<polygon points="485.20,650.50 489.02,647.36 485.60,649.27 481.78,652.40" fill="#a0998b" stroke="#a0998b" stroke-width="0.5"/>
<polygon points="489.02,647.36 492.84,644.23 489.42,646.14 485.60,649.27" fill="#a0998b" stroke="#a0998b" stroke-width="0.5"/>
<polygon points="492.84,644.23 496.65,641.10 493.24,643.01 489.42,646.14" fill="#a0998b" stroke="#a0998b" stroke-width="0.5"/>
<polygon points="496.65,641.10 500.47,637.97 496.99,639.93 493.24,643.01" fill="#a0998b" stroke="#a0998b" stroke-width="0.5"/>
<polygon points="500.47,637.97 501.24,637.12 497.30,639.60 496.99,639.93" fill="#c4c0b6" stroke="#c4c0b6" stroke-width="0.5"/>
<polygon points="501.24,637.12 501.62,636.18 497.42,639.31 497.30,639.60" fill="#c4c0b6" stroke="#c4c0b6" stroke-width="0.5"/>
<polygon points="501.62,636.18 501.58,635.22 497.41,639.00 497.42,639.31" fill="#c6c2b8" stroke="#c6c2b8" stroke-width="0.5"/>
<polygon points="501.58,635.22 501.12,634.30 497.26,638.71 497.41,639.00" fill="#ccc8be" stroke="#ccc8be" stroke-width="0.5"/>
<polygon points="501.12,634.30 500.27,633.48 496.99,638.44 497.26,638.71" fill="#c8c3b9" stroke="#c8c3b9" stroke-width="0.5"/>
<polygon points="500.27,633.48 499.10,632.81 496.53,638.20 496.99,638.44" fill="#b9b5aa" stroke="#b9b5aa" stroke-width="0.5"/>
<polygon points="499.10,632.81 493.62,630.44 491.14,635.86 496.53,638.20" fill="#b4afa4" stroke="#b4afa4" stroke-width="0.5"/>
<polygon points="493.62,630.44 488.15,628.07 485.67,633.49 491.14,635.86" fill="#b4afa4" stroke="#b4afa4" stroke-width="0.5"/>
<polygon points="488.15,628.07 482.67,625.70 480.19,631.12 485.67,633.49" fill="#b4afa4" stroke="#b4afa4" stroke-width="0.5"/>
<polygon points="482.67,625.70 477.20,623.33 474.72,628.75 480.19,631.12" fill="#b4afa4" stroke="#b4afa4" stroke-width="0.5"/>
<polygon points="477.20,623.33 471.72,620.96 469.24,626.38 474.72,628.75" fill="#b4afa4" stroke="#b4afa4" stroke-width="0.5"/>
<polygon points="471.72,620.96 466.25,618.59 463.77,624.01 469.24,626.38" fill="#b4afa4" stroke="#b4afa4" stroke-width="0.5"/>
<polygon points="466.25,618.59 460.77,616.22 458.29,621.64 463.77,624.01" fill="#b4afa4" stroke="#b4afa4" stroke-width="0.5"/>
<polygon points="460.77,616.22 455.30,613.85 452.82,619.27 458.29,621.64" fill="#b4afa4" stroke="#b4afa4" stroke-width="0.5"/>
<polygon points="455.30,613.85 449.82,611.48 447.34,616.90 452.82,619.27" fill="#b4afa4" stroke="#b4afa4" stroke-width="0.5"/>
<polygon points="449.82,611.48 444.35,609.11 441.86,614.53 447.34,616.90" fill="#b4afa4" stroke="#b4afa4" stroke-width="0.5"/>
<polygon points="444.35,609.11 438.87,606.74 436.48,612.20 441.86,614.53" fill="#b4afa4" stroke="#b4afa4" stroke-width="0.5"/>
<polygon points="438.87,606.74 437.37,606.27 435.91,612.01 436.48,612.20" fill="#bab5ab" stroke="#bab5ab" stroke-width="0.5"/>
<polygon points="437.37,606.27 435.71,606.05 435.38,611.94 435.91,612.01" fill="#c9c5bc" stroke="#c9c5bc" stroke-width="0.5"/>
<polygon points="435.71,606.05 434.02,606.11 434.85,611.96 435.38,611.94" fill="#cfccc2" stroke="#cfccc2" stroke-width="0.5"/>
<polygon points="434.02,606.11 432.41,606.44 434.33,612.07 434.85,611.96" fill="#b8b3a8" stroke="#b8b3a8" stroke-width="0.5"/>
<polygon points="432.41,606.44 431.02,607.02 433.89,612.25 434.33,612.07" fill="#a8a194" stroke="#a8a194" stroke-width="0.5"/>
<polygon points="431.02,607.02 429.95,607.80 433.55,612.50 433.89,612.25" fill="#a19a8d" stroke="#a19a8d" stroke-width="0.5"/>
<polygon points="429.95,607.80 429.27,608.73 433.33,612.80 433.55,612.50" fill="#a0998b" stroke="#a0998b" stroke-width="0.5"/>
<polygon points="429.27,608.73 429.04,609.73 433.26,613.12 433.33,612.80" fill="#a0998b" stroke="#a0998b" stroke-width="0.5"/>
<polygon points="429.04,609.73 429.27,610.74 433.37,613.50 433.26,613.12" fill="#a0998b" stroke="#a0998b" stroke-width="0.5"/>
<polygon points="429.27,610.74 431.12,614.61 435.18,617.31 433.37,613.50" fill="#a0998b" stroke="#a0998b" stroke-width="0.5"/>
<polygon points="431.12,614.61 432.97,618.49 437.03,621.19 435.18,617.31" fill="#a0998b" stroke="#a0998b" stroke-width="0.5"/>
<polygon points="432.97,618.49 434.82,622.36 438.88,625.06 437.03,621.19" fill="#a0998b" stroke="#a0998b" stroke-width="0.5"/>
<polygon points="434.82,622.36 436.66,626.24 440.73,628.94 438.88,625.06" fill="#a0998b" stroke="#a0998b" stroke-width="0.5"/>
<polygon points="436.66,626.24 438.51,630.11 442.57,632.81 440.73,628.94" fill="#a0998b" stroke="#a0998b" stroke-width="0.5"/>
<polygon points="438.51,630.11 440.36,633.99 444.42,636.69 442.57,632.81" fill="#a0998b" stroke="#a0998b" stroke-width="0.5"/>
<polygon points="440.36,633.99 442.21,637.87 446.27,640.56 444.42,636.69" fill="#a0998b" stroke="#a0998b" stroke-width="0.5"/>
<polygon points="442.21,637.87 444.06,641.74 448.12,644.44 446.27,640.56" fill="#a0998b" stroke="#a0998b" stroke-width="0.5"/>
<polygon points="444.06,641.74 445.90,645.62 449.97,648.32 448.12,644.44" fill="#a0998b" stroke="#a0998b" stroke-width="0.5"/>
<polygon points="445.90,645.62 447.75,649.49 451.81,652.19 449.97,648.32" fill="#a0998b" stroke="#a0998b" stroke-width="0.5"/>
<polygon points="447.75,649.49 449.60,653.37 453.66,656.07 451.81,652.19" fill="#a0998b" stroke="#a0998b" stroke-width="0.5"/>
<polygon points="449.60,653.37 451.45,657.24 455.51,659.94 453.66,656.07" fill="#a0998b" stroke="#a0998b" stroke-width="0.5"/>
<polygon points="451.45,657.24 453.29,661.12 457.36,663.82 455.51,659.94" fill="#a0998b" stroke="#a0998b" stroke-width="0.5"/>
<polygon points="453.29,661.12 455.14,665.00 459.18,667.64 457.36,663.82" fill="#a0998b" stroke="#a0998b" stroke-width="0.5"/>
<polygon points="497.42,639.31 497.41,639.00 497.26,638.71 496.99,638.44 496.53,638.20 491.14,635.86 485.67,633.49 480.19,631.12 474.72,628.75 469.24,626.38 463.77,624.01 458.29,621.64 452.82,619.27 447.34,616.90 441.86,614.53 436.48,612.20 435.91,612.01 435.38,611.94 434.85,611.96 434.33,612.07 433.89,612.25 433.55,612.50 433.33,612.80 433.26,613.12 433.26,635.69 433.33,635.37 433.55,635.07 433.89,634.82 434.33,634.64 434.85,634.53 435.38,634.51 435.91,634.58 436.48,634.77 441.86,637.10 447.34,639.47 452.82,641.84 458.29,644.21 463.77,646.58 469.24,648.95 474.72,651.32 480.19,653.69 485.67,656.06 491.14,658.43 496.53,660.77 496.99,661.01 497.26,661.28 497.41,661.57 497.42,661.88" fill="url(#g14)"/>
<polygon points="497.42,639.31 497.41,639.00 497.26,638.71 496.99,638.44 496.53,638.20 491.14,635.86 485.67,633.49 480.19,631.12 474.72,628.75 469.24,626.38 463.77,624.01 458.29,621.64 452.82,619.27 447.34,616.90 441.86,614.53 436.48,612.20 435.91,612.01 435.38,611.94 434.85,611.96 434.33,612.07 433.89,612.25 433.55,612.50 433.33,612.80 433.26,613.12 433.26,635.69 433.33,635.37 433.55,635.07 433.89,634.82 434.33,634.64 434.85,634.53 435.38,634.51 435.91,634.58 436.48,634.77 441.86,637.10 447.34,639.47 452.82,641.84 458.29,644.21 463.77,646.58 469.24,648.95 474.72,651.32 480.19,653.69 485.67,656.06 491.14,658.43 496.53,660.77 496.99,661.01 497.26,661.28 497.41,661.57 497.42,661.88" fill="url(#vs)"/>
<path d="M497.42,661.88 L497.41,661.57 L497.26,661.28 L496.99,661.01 L496.53,660.77 L491.14,658.43 L485.67,656.06 L480.19,653.69 L474.72,651.32 L469.24,648.95 L463.77,646.58 L458.29,644.21 L452.82,641.84 L447.34,639.47 L441.86,637.10 L436.48,634.77 L435.91,634.58 L435.38,634.51 L434.85,634.53 L434.33,634.64 L433.89,634.82 L433.55,635.07 L433.33,635.37 L433.26,635.69" fill="none" stroke="#17150f" stroke-width="1.2" stroke-linejoin="round" stroke-linecap="round"/>
<path d="M497.42,639.31 L497.41,639.00 L497.26,638.71 L496.99,638.44 L496.53,638.20 L491.14,635.86 L485.67,633.49 L480.19,631.12 L474.72,628.75 L469.24,626.38 L463.77,624.01 L458.29,621.64 L452.82,619.27 L447.34,616.90 L441.86,614.53 L436.48,612.20 L435.91,612.01 L435.38,611.94 L434.85,611.96 L434.33,612.07 L433.89,612.25 L433.55,612.50 L433.33,612.80 L433.26,613.12" fill="none" stroke="#17150f" stroke-width="1.1" stroke-linejoin="round"/>
</g>
<path d="M455.14,665.00 L455.74,665.84 L456.67,666.57 L457.87,667.14 L459.27,667.51 L460.78,667.67 L462.31,667.61 L463.77,667.32 L465.06,666.82 L466.11,666.16 L469.93,663.02 L473.75,659.89 L477.56,656.76 L481.38,653.63 L485.20,650.50 L489.02,647.36 L492.84,644.23 L496.65,641.10 L500.47,637.97 L501.24,637.12 L501.62,636.18 L501.58,635.22 L501.12,634.30 L500.27,633.48 L499.10,632.81 L493.62,630.44 L488.15,628.07 L482.67,625.70 L477.20,623.33 L471.72,620.96 L466.25,618.59 L460.77,616.22 L455.30,613.85 L449.82,611.48 L444.35,609.11 L438.87,606.74 L437.37,606.27 L435.71,606.05 L434.02,606.11 L432.41,606.44 L431.02,607.02 L429.95,607.80 L429.27,608.73 L429.04,609.73 L429.27,610.74 L431.12,614.61 L432.97,618.49 L434.82,622.36 L436.66,626.24 L438.51,630.11 L440.36,633.99 L442.21,637.87 L444.06,641.74 L445.90,645.62 L447.75,649.49 L449.60,653.37 L451.45,657.24 L453.29,661.12 Z" fill="none" stroke="#17150f" stroke-width="1.3" stroke-linejoin="round"/>
<g clip-path="url(#c8)">
<polygon points="386.86,423.48 386.70,422.21 386.20,420.96 385.37,419.78 384.25,418.70 382.86,417.73 381.23,416.90 379.41,416.23 377.43,415.74 375.34,415.44 373.21,415.34 371.07,415.44 368.99,415.74 367.01,416.23 365.18,416.90 363.55,417.73 362.16,418.70 358.85,421.41 355.55,424.12 352.24,426.84 348.93,429.55 347.81,430.64 346.99,431.82 346.49,433.06 346.33,434.33 346.33,460.29 346.49,459.02 346.99,457.78 347.81,456.60 348.93,455.51 352.24,452.79 355.55,450.08 358.85,447.37 362.16,444.65 363.55,443.68 365.18,442.85 367.01,442.18 368.99,441.70 371.07,441.40 373.21,441.30 375.34,441.40 377.43,441.70 379.41,442.18 381.23,442.85 382.86,443.68 384.25,444.65 385.37,445.74 386.20,446.92 386.70,448.16 386.86,449.43" fill="url(#g15)"/>
<path d="M386.86,449.43 L386.70,448.16 L386.20,446.92 L385.37,445.74 L384.25,444.65 L382.86,443.68 L381.23,442.85 L379.41,442.18 L377.43,441.70 L375.34,441.40 L373.21,441.30 L371.07,441.40 L368.99,441.70 L367.01,442.18 L365.18,442.85 L363.55,443.68 L362.16,444.65 L358.85,447.37 L355.55,450.08 L352.24,452.79 L348.93,455.51 L347.81,456.60 L346.99,457.78 L346.49,459.02 L346.33,460.29" fill="none" stroke="#17150f" stroke-width="1.2" stroke-linejoin="round" stroke-linecap="round"/>
</g>
<path d="M348.93,429.55 L347.81,430.64 L346.99,431.82 L346.49,433.06 L346.33,434.33 L346.49,435.61 L347.00,436.85 L347.82,438.03 L348.94,439.12 L350.33,440.09 L351.96,440.92 L353.78,441.58 L355.76,442.07 L357.85,442.37 L359.98,442.47 L362.12,442.37 L364.20,442.07 L366.18,441.58 L368.01,440.92 L369.64,440.09 L371.03,439.12 L374.34,436.40 L377.64,433.69 L380.95,430.97 L384.26,428.26 L385.38,427.17 L386.20,425.99 L386.70,424.75 L386.86,423.48 L386.70,422.21 L386.20,420.96 L385.37,419.78 L384.25,418.70 L382.86,417.73 L381.23,416.90 L379.41,416.23 L377.43,415.74 L375.34,415.44 L373.21,415.34 L371.07,415.44 L368.99,415.74 L367.01,416.23 L365.18,416.90 L363.55,417.73 L362.16,418.70 L358.85,421.41 L355.55,424.12 L352.24,426.84 Z" fill="none" stroke="#17150f" stroke-width="1.3" stroke-linejoin="round"/>
<g clip-path="url(#c8)"><path d="M362.16,418.70 L362.16,444.65" stroke="#17150f" stroke-width="1.2"/></g>
<g clip-path="url(#c9)">
<polygon points="585.68,264.93 585.51,263.66 585.01,262.42 584.19,261.24 583.07,260.15 581.68,259.18 580.05,258.35 578.22,257.68 576.24,257.19 574.16,256.89 572.02,256.79 569.89,256.89 567.80,257.19 565.83,257.68 564.00,258.35 562.37,259.18 560.98,260.15 557.67,262.86 554.36,265.58 551.06,268.29 547.75,271.00 546.63,272.09 545.81,273.27 545.31,274.51 545.14,275.79 545.14,301.74 545.31,300.47 545.81,299.23 546.63,298.05 547.75,296.96 551.06,294.24 554.36,291.53 557.67,288.82 560.98,286.10 562.37,285.13 564.00,284.30 565.83,283.64 567.80,283.15 569.89,282.85 572.02,282.75 574.16,282.85 576.24,283.15 578.22,283.64 580.05,284.30 581.68,285.13 583.07,286.10 584.19,287.19 585.01,288.37 585.51,289.61 585.68,290.89" fill="url(#g16)"/>
<path d="M585.68,290.89 L585.51,289.61 L585.01,288.37 L584.19,287.19 L583.07,286.10 L581.68,285.13 L580.05,284.30 L578.22,283.64 L576.24,283.15 L574.16,282.85 L572.02,282.75 L569.89,282.85 L567.80,283.15 L565.83,283.64 L564.00,284.30 L562.37,285.13 L560.98,286.10 L557.67,288.82 L554.36,291.53 L551.06,294.24 L547.75,296.96 L546.63,298.05 L545.81,299.23 L545.31,300.47 L545.14,301.74" fill="none" stroke="#17150f" stroke-width="1.2" stroke-linejoin="round" stroke-linecap="round"/>
</g>
<path d="M547.75,271.00 L546.63,272.09 L545.81,273.27 L545.31,274.51 L545.14,275.79 L545.31,277.06 L545.81,278.30 L546.63,279.48 L547.75,280.57 L549.14,281.54 L550.77,282.37 L552.60,283.03 L554.58,283.52 L556.66,283.82 L558.80,283.92 L560.94,283.82 L563.02,283.52 L565.00,283.03 L566.82,282.37 L568.45,281.54 L569.84,280.57 L573.15,277.85 L576.46,275.14 L579.77,272.43 L583.08,269.71 L584.20,268.62 L585.01,267.44 L585.51,266.20 L585.68,264.93 L585.51,263.66 L585.01,262.42 L584.19,261.24 L583.07,260.15 L581.68,259.18 L580.05,258.35 L578.22,257.68 L576.24,257.19 L574.16,256.89 L572.02,256.79 L569.89,256.89 L567.80,257.19 L565.83,257.68 L564.00,258.35 L562.37,259.18 L560.98,260.15 L557.67,262.86 L554.36,265.58 L551.06,268.29 Z" fill="none" stroke="#17150f" stroke-width="1.3" stroke-linejoin="round"/>
<g clip-path="url(#c9)"><path d="M560.98,260.15 L560.98,286.10" stroke="#17150f" stroke-width="1.2"/></g>
<g clip-path="url(#c10)">
<polygon points="683.00,551.66 682.84,550.39 682.34,549.14 681.51,547.96 680.39,546.88 679.00,545.91 677.37,545.08 675.55,544.41 673.57,543.92 671.48,543.62 669.35,543.52 667.21,543.62 665.13,543.92 663.15,544.41 661.32,545.08 659.69,545.91 658.30,546.88 654.99,549.59 651.69,552.30 648.38,555.02 645.07,557.73 643.95,558.82 643.13,560.00 642.63,561.24 642.47,562.51 642.47,588.47 642.63,587.20 643.13,585.96 643.95,584.78 645.07,583.69 648.38,580.97 651.69,578.26 654.99,575.55 658.30,572.83 659.69,571.86 661.32,571.03 663.15,570.36 665.13,569.88 667.21,569.58 669.35,569.48 671.48,569.58 673.57,569.88 675.55,570.36 677.37,571.03 679.00,571.86 680.39,572.83 681.51,573.92 682.34,575.10 682.84,576.34 683.00,577.61" fill="url(#g17)"/>
<path d="M683.00,577.61 L682.84,576.34 L682.34,575.10 L681.51,573.92 L680.39,572.83 L679.00,571.86 L677.37,571.03 L675.55,570.36 L673.57,569.88 L671.48,569.58 L669.35,569.48 L667.21,569.58 L665.13,569.88 L663.15,570.36 L661.32,571.03 L659.69,571.86 L658.30,572.83 L654.99,575.55 L651.69,578.26 L648.38,580.97 L645.07,583.69 L643.95,584.78 L643.13,585.96 L642.63,587.20 L642.47,588.47" fill="none" stroke="#17150f" stroke-width="1.2" stroke-linejoin="round" stroke-linecap="round"/>
</g>
<path d="M645.07,557.73 L643.95,558.82 L643.13,560.00 L642.63,561.24 L642.47,562.51 L642.63,563.79 L643.14,565.03 L643.96,566.21 L645.08,567.30 L646.47,568.27 L648.10,569.10 L649.92,569.76 L651.90,570.25 L653.99,570.55 L656.12,570.65 L658.26,570.55 L660.34,570.25 L662.32,569.76 L664.15,569.10 L665.78,568.27 L667.17,567.30 L670.48,564.58 L673.78,561.87 L677.09,559.15 L680.40,556.44 L681.52,555.35 L682.34,554.17 L682.84,552.93 L683.00,551.66 L682.84,550.39 L682.34,549.14 L681.51,547.96 L680.39,546.88 L679.00,545.91 L677.37,545.08 L675.55,544.41 L673.57,543.92 L671.48,543.62 L669.35,543.52 L667.21,543.62 L665.13,543.92 L663.15,544.41 L661.32,545.08 L659.69,545.91 L658.30,546.88 L654.99,549.59 L651.69,552.30 L648.38,555.02 Z" fill="none" stroke="#17150f" stroke-width="1.3" stroke-linejoin="round"/>
<g clip-path="url(#c10)"><path d="M658.30,546.88 L658.30,572.83" stroke="#17150f" stroke-width="1.2"/></g>
<g clip-path="url(#c11)">
<polygon points="878.18,391.53 878.01,390.26 877.51,389.02 876.69,387.84 875.57,386.75 874.17,385.78 872.55,384.95 870.72,384.28 868.74,383.79 866.65,383.50 864.52,383.40 862.38,383.50 860.30,383.79 858.32,384.28 856.49,384.95 854.87,385.78 853.47,386.75 850.17,389.46 846.86,392.18 843.55,394.89 840.24,397.61 839.12,398.69 838.30,399.87 837.81,401.11 837.64,402.39 837.64,428.34 837.81,427.07 838.30,425.83 839.12,424.65 840.24,423.56 843.55,420.85 846.86,418.13 850.17,415.42 853.47,412.71 854.87,411.73 856.49,410.91 858.32,410.24 860.30,409.75 862.38,409.45 864.52,409.35 866.65,409.45 868.74,409.75 870.72,410.24 872.55,410.91 874.17,411.74 875.57,412.71 876.69,413.79 877.51,414.97 878.01,416.22 878.18,417.49" fill="url(#g18)"/>
<path d="M878.18,417.49 L878.01,416.22 L877.51,414.97 L876.69,413.79 L875.57,412.71 L874.17,411.74 L872.55,410.91 L870.72,410.24 L868.74,409.75 L866.65,409.45 L864.52,409.35 L862.38,409.45 L860.30,409.75 L858.32,410.24 L856.49,410.91 L854.87,411.73 L853.47,412.71 L850.17,415.42 L846.86,418.13 L843.55,420.85 L840.24,423.56 L839.12,424.65 L838.30,425.83 L837.81,427.07 L837.64,428.34" fill="none" stroke="#17150f" stroke-width="1.2" stroke-linejoin="round" stroke-linecap="round"/>
</g>
<path d="M840.24,397.61 L839.12,398.69 L838.30,399.87 L837.81,401.11 L837.64,402.39 L837.81,403.66 L838.31,404.90 L839.13,406.08 L840.25,407.17 L841.64,408.14 L843.27,408.97 L845.10,409.64 L847.08,410.12 L849.16,410.42 L851.30,410.52 L853.43,410.42 L855.51,410.13 L857.49,409.64 L859.32,408.97 L860.95,408.14 L862.34,407.17 L865.65,404.46 L868.96,401.74 L872.26,399.03 L875.57,396.31 L876.69,395.23 L877.51,394.05 L878.01,392.80 L878.18,391.53 L878.01,390.26 L877.51,389.02 L876.69,387.84 L875.57,386.75 L874.17,385.78 L872.55,384.95 L870.72,384.28 L868.74,383.79 L866.65,383.50 L864.52,383.40 L862.38,383.50 L860.30,383.79 L858.32,384.28 L856.49,384.95 L854.87,385.78 L853.47,386.75 L850.17,389.46 L846.86,392.18 L843.55,394.89 Z" fill="none" stroke="#17150f" stroke-width="1.3" stroke-linejoin="round"/>
<g clip-path="url(#c11)"><path d="M853.47,386.75 L853.47,412.71" stroke="#17150f" stroke-width="1.2"/></g>
<g clip-path="url(#c12)">
<polygon points="443.50,370.10 443.41,369.42 443.15,368.75 442.71,368.12 442.11,367.54 441.36,367.02 440.49,366.57 439.51,366.21 438.44,365.95 437.33,365.79 436.18,365.74 435.04,365.79 433.92,365.95 432.86,366.21 431.88,366.57 431.01,367.02 430.26,367.54 429.66,368.12 429.22,368.75 428.96,369.42 428.87,370.10 428.87,396.05 428.96,395.37 429.22,394.71 429.66,394.07 430.26,393.49 431.01,392.97 431.88,392.53 432.86,392.17 433.92,391.91 435.04,391.75 436.18,391.69 437.33,391.75 438.44,391.91 439.51,392.17 440.49,392.53 441.36,392.97 442.11,393.49 442.71,394.07 443.15,394.71 443.41,395.37 443.50,396.05" fill="url(#g19)"/>
<path d="M443.50,396.05 L443.41,395.37 L443.15,394.71 L442.71,394.07 L442.11,393.49 L441.36,392.97 L440.49,392.53 L439.51,392.17 L438.44,391.91 L437.33,391.75 L436.18,391.69 L435.04,391.75 L433.92,391.91 L432.86,392.17 L431.88,392.53 L431.01,392.97 L430.26,393.49 L429.66,394.07 L429.22,394.71 L428.96,395.37 L428.87,396.05" fill="none" stroke="#17150f" stroke-width="1.2" stroke-linejoin="round" stroke-linecap="round"/>
</g>
<path d="M442.71,372.08 L443.15,371.45 L443.41,370.78 L443.50,370.10 L443.41,369.42 L443.15,368.75 L442.71,368.12 L442.11,367.54 L441.36,367.02 L440.49,366.57 L439.51,366.21 L438.44,365.95 L437.33,365.79 L436.18,365.74 L435.04,365.79 L433.92,365.95 L432.86,366.21 L431.88,366.57 L431.01,367.02 L430.26,367.54 L429.66,368.12 L429.22,368.75 L428.96,369.42 L428.87,370.10 L428.96,370.78 L429.22,371.45 L429.66,372.08 L430.26,372.66 L431.01,373.18 L431.88,373.63 L432.86,373.98 L433.93,374.25 L435.04,374.41 L436.19,374.46 L437.33,374.41 L438.45,374.25 L439.51,373.98 L440.49,373.63 L441.36,373.18 L442.11,372.66 Z" fill="none" stroke="#17150f" stroke-width="1.3" stroke-linejoin="round"/>
<g clip-path="url(#c13)">
<polygon points="740.93,500.08 740.84,499.40 740.57,498.73 740.13,498.10 739.53,497.52 738.78,497.00 737.91,496.55 736.93,496.19 735.87,495.93 734.75,495.77 733.61,495.72 732.46,495.77 731.35,495.93 730.29,496.19 729.31,496.55 728.43,497.00 727.69,497.52 727.09,498.10 726.65,498.73 726.38,499.40 726.29,500.08 726.29,526.03 726.38,525.35 726.65,524.69 727.09,524.05 727.69,523.47 728.43,522.95 729.31,522.51 730.29,522.15 731.35,521.89 732.46,521.73 733.61,521.67 734.75,521.73 735.87,521.89 736.93,522.15 737.91,522.51 738.78,522.95 739.53,523.47 740.13,524.05 740.57,524.69 740.84,525.35 740.93,526.03" fill="url(#g20)"/>
<path d="M740.93,526.03 L740.84,525.35 L740.57,524.69 L740.13,524.05 L739.53,523.47 L738.78,522.95 L737.91,522.51 L736.93,522.15 L735.87,521.89 L734.75,521.73 L733.61,521.67 L732.46,521.73 L731.35,521.89 L730.29,522.15 L729.31,522.51 L728.43,522.95 L727.69,523.47 L727.09,524.05 L726.65,524.69 L726.38,525.35 L726.29,526.03" fill="none" stroke="#17150f" stroke-width="1.2" stroke-linejoin="round" stroke-linecap="round"/>
</g>
<path d="M740.13,502.06 L740.57,501.43 L740.84,500.76 L740.93,500.08 L740.84,499.40 L740.57,498.73 L740.13,498.10 L739.53,497.52 L738.78,497.00 L737.91,496.55 L736.93,496.19 L735.87,495.93 L734.75,495.77 L733.61,495.72 L732.46,495.77 L731.35,495.93 L730.29,496.19 L729.31,496.55 L728.43,497.00 L727.69,497.52 L727.09,498.10 L726.65,498.73 L726.38,499.40 L726.29,500.08 L726.38,500.76 L726.65,501.43 L727.09,502.06 L727.69,502.64 L728.44,503.16 L729.31,503.61 L730.29,503.96 L731.35,504.23 L732.47,504.39 L733.61,504.44 L734.76,504.39 L735.87,504.23 L736.94,503.97 L737.91,503.61 L738.79,503.16 L739.53,502.64 Z" fill="none" stroke="#17150f" stroke-width="1.3" stroke-linejoin="round"/>
<path d="M397.38,374.24 L440.66,392.97 L440.66,406.52 L474.74,378.56 L474.74,390.98" fill="none" stroke="#17150f" stroke-width="1.1" stroke-linejoin="round" stroke-linecap="round"/>
<path d="M702.63,506.36 L734.75,520.27 L738.63,526.46 L738.63,535.49 L772.70,507.53 L772.70,519.94" fill="none" stroke="#17150f" stroke-width="1.1" stroke-linejoin="round" stroke-linecap="round"/>
<path d="M350.52,466.93 L350.52,492.89" fill="none" stroke="#17150f" stroke-width="1.1" stroke-linejoin="round" stroke-linecap="round"/>
<path d="M623.11,611.86 L626.98,618.05 L626.98,639.50" fill="none" stroke="#17150f" stroke-width="1.1" stroke-linejoin="round" stroke-linecap="round"/>
<path d="M944.81,347.93 L948.69,354.12 L948.69,375.56" fill="none" stroke="#17150f" stroke-width="1.1" stroke-linejoin="round" stroke-linecap="round"/>
<path d="M644.11,226.06 L653.67,237.65 L653.67,256.16" fill="none" stroke="#17150f" stroke-width="1.1" stroke-linejoin="round" stroke-linecap="round"/>
<path d="M789.59,212.34 L782.64,225.48 L782.64,243.99" fill="none" stroke="#17150f" stroke-width="1.1" stroke-linejoin="round" stroke-linecap="round"/>
<path d="M882.99,252.76 L876.04,265.91 L876.04,284.42" fill="none" stroke="#17150f" stroke-width="1.1" stroke-linejoin="round" stroke-linecap="round"/>
<polygon points="661.25,142.32 660.02,143.66 660.02,128.98 661.25,129.68" fill="#6a6c68" stroke="#6a6c68" stroke-width="0.6" stroke-linejoin="round"/>
<polygon points="661.25,129.68 660.02,128.98 660.18,126.65 661.40,127.35" fill="#a9a69c" stroke="#a9a69c" stroke-width="0.6" stroke-linejoin="round"/>
<polygon points="661.40,127.35 660.18,126.65 660.65,124.15 661.87,124.84" fill="#b6b3a9" stroke="#b6b3a9" stroke-width="0.6" stroke-linejoin="round"/>
<polygon points="661.87,124.84 660.65,124.15 661.41,121.57 662.64,122.27" fill="#b4b1a7" stroke="#b4b1a7" stroke-width="0.6" stroke-linejoin="round"/>
<polygon points="662.64,122.27 661.41,121.57 662.44,119.01 663.67,119.71" fill="#b2ada2" stroke="#b2ada2" stroke-width="0.6" stroke-linejoin="round"/>
<polygon points="663.67,119.71 662.44,119.01 663.69,116.58 664.92,117.28" fill="#c3beb1" stroke="#c3beb1" stroke-width="0.6" stroke-linejoin="round"/>
<polygon points="664.92,117.28 663.69,116.58 665.12,114.37 666.35,115.06" fill="#c4beb0" stroke="#c4beb0" stroke-width="0.6" stroke-linejoin="round"/>
<polygon points="666.35,115.06 665.12,114.37 666.67,112.45 667.90,113.15" fill="#beb7a8" stroke="#beb7a8" stroke-width="0.6" stroke-linejoin="round"/>
<polygon points="667.90,113.15 666.67,112.45 668.29,110.91 669.52,111.61" fill="#b0a99b" stroke="#b0a99b" stroke-width="0.6" stroke-linejoin="round"/>
<polygon points="669.52,111.61 668.29,110.91 678.88,102.22 678.61,104.14" fill="#a0a39c" stroke="#a0a39c" stroke-width="0.6" stroke-linejoin="round"/>
<polygon points="678.61,104.14 678.88,102.22 683.31,100.90 683.04,102.83" fill="#e0e5e5" stroke="#e0e5e5" stroke-width="0.6" stroke-linejoin="round"/>
<polygon points="660.02,143.66 659.42,145.15 659.42,128.57 660.02,128.98" fill="#6d6e6a" stroke="#6d6e6a" stroke-width="0.6" stroke-linejoin="round"/>
<polygon points="660.02,128.98 659.42,128.57 659.58,126.23 660.18,126.65" fill="#aba89f" stroke="#aba89f" stroke-width="0.6" stroke-linejoin="round"/>
<polygon points="660.18,126.65 659.58,126.23 660.05,123.73 660.65,124.15" fill="#b9b6ad" stroke="#b9b6ad" stroke-width="0.6" stroke-linejoin="round"/>
<polygon points="660.65,124.15 660.05,123.73 660.81,121.15 661.41,121.57" fill="#b8b4ab" stroke="#b8b4ab" stroke-width="0.6" stroke-linejoin="round"/>
<polygon points="661.41,121.57 660.81,121.15 661.84,118.60 662.44,119.01" fill="#b5b1a6" stroke="#b5b1a6" stroke-width="0.6" stroke-linejoin="round"/>
<polygon points="662.44,119.01 661.84,118.60 663.09,116.17 663.69,116.58" fill="#c8c3b6" stroke="#c8c3b6" stroke-width="0.6" stroke-linejoin="round"/>
<polygon points="663.69,116.58 663.09,116.17 664.52,113.95 665.12,114.37" fill="#c9c3b5" stroke="#c9c3b5" stroke-width="0.6" stroke-linejoin="round"/>
<polygon points="665.12,114.37 664.52,113.95 666.08,112.04 666.67,112.45" fill="#c2bbac" stroke="#c2bbac" stroke-width="0.6" stroke-linejoin="round"/>
<polygon points="666.67,112.45 666.08,112.04 667.69,110.50 668.29,110.91" fill="#b3ac9d" stroke="#b3ac9d" stroke-width="0.6" stroke-linejoin="round"/>
<polygon points="668.29,110.91 667.69,110.50 679.68,100.66 678.88,102.22" fill="#a0a39c" stroke="#a0a39c" stroke-width="0.6" stroke-linejoin="round"/>
<polygon points="678.88,102.22 679.68,100.66 684.11,99.34 683.31,100.90" fill="#e0e5e5" stroke="#e0e5e5" stroke-width="0.6" stroke-linejoin="round"/>
<polygon points="659.42,145.15 659.49,146.69 659.49,128.46 659.42,128.57" fill="#6f706c" stroke="#6f706c" stroke-width="0.6" stroke-linejoin="round"/>
<polygon points="659.42,128.57 659.49,128.46 659.65,126.13 659.58,126.23" fill="#aeaba2" stroke="#aeaba2" stroke-width="0.6" stroke-linejoin="round"/>
<polygon points="659.58,126.23 659.65,126.13 660.12,123.63 660.05,123.73" fill="#bdbab2" stroke="#bdbab2" stroke-width="0.6" stroke-linejoin="round"/>
<polygon points="660.05,123.73 660.12,123.63 660.88,121.05 660.81,121.15" fill="#bbb8af" stroke="#bbb8af" stroke-width="0.6" stroke-linejoin="round"/>
<polygon points="660.81,121.15 660.88,121.05 661.91,118.49 661.84,118.60" fill="#b8b4a9" stroke="#b8b4a9" stroke-width="0.6" stroke-linejoin="round"/>
<polygon points="661.84,118.60 661.91,118.49 663.16,116.06 663.09,116.17" fill="#cdc8bc" stroke="#cdc8bc" stroke-width="0.6" stroke-linejoin="round"/>
<polygon points="663.09,116.17 663.16,116.06 664.59,113.85 664.52,113.95" fill="#cec8ba" stroke="#cec8ba" stroke-width="0.6" stroke-linejoin="round"/>
<polygon points="664.52,113.95 664.59,113.85 666.14,111.93 666.08,112.04" fill="#c7bfb0" stroke="#c7bfb0" stroke-width="0.6" stroke-linejoin="round"/>
<polygon points="666.08,112.04 666.14,111.93 667.76,110.39 667.69,110.50" fill="#b6afa0" stroke="#b6afa0" stroke-width="0.6" stroke-linejoin="round"/>
<polygon points="667.69,110.50 667.76,110.39 680.95,99.57 679.68,100.66" fill="#a0a39c" stroke="#a0a39c" stroke-width="0.6" stroke-linejoin="round"/>
<polygon points="679.68,100.66 680.95,99.57 685.37,98.26 684.11,99.34" fill="#e0e5e5" stroke="#e0e5e5" stroke-width="0.6" stroke-linejoin="round"/>
<polygon points="659.49,146.69 660.22,148.16 660.22,128.68 659.49,128.46" fill="#71736f" stroke="#71736f" stroke-width="0.6" stroke-linejoin="round"/>
<polygon points="659.49,128.46 660.22,128.68 660.38,126.34 659.65,126.13" fill="#b0ada4" stroke="#b0ada4" stroke-width="0.6" stroke-linejoin="round"/>
<polygon points="659.65,126.13 660.38,126.34 660.85,123.84 660.12,123.63" fill="#c0beb6" stroke="#c0beb6" stroke-width="0.6" stroke-linejoin="round"/>
<polygon points="660.12,123.63 660.85,123.84 661.61,121.26 660.88,121.05" fill="#bebcb3" stroke="#bebcb3" stroke-width="0.6" stroke-linejoin="round"/>
<polygon points="660.88,121.05 661.61,121.26 662.64,118.71 661.91,118.49" fill="#bbb7ad" stroke="#bbb7ad" stroke-width="0.6" stroke-linejoin="round"/>
<polygon points="661.91,118.49 662.64,118.71 663.89,116.28 663.16,116.06" fill="#d2cdc1" stroke="#d2cdc1" stroke-width="0.6" stroke-linejoin="round"/>
<polygon points="663.16,116.06 663.89,116.28 665.32,114.06 664.59,113.85" fill="#d3cdbf" stroke="#d3cdbf" stroke-width="0.6" stroke-linejoin="round"/>
<polygon points="664.59,113.85 665.32,114.06 666.87,112.15 666.14,111.93" fill="#cbc4b4" stroke="#cbc4b4" stroke-width="0.6" stroke-linejoin="round"/>
<polygon points="666.14,111.93 666.87,112.15 668.49,110.61 667.76,110.39" fill="#b9b2a3" stroke="#b9b2a3" stroke-width="0.6" stroke-linejoin="round"/>
<polygon points="667.76,110.39 668.49,110.61 682.60,99.03 680.95,99.57" fill="#a0a39c" stroke="#a0a39c" stroke-width="0.6" stroke-linejoin="round"/>
<polygon points="680.95,99.57 682.60,99.03 687.03,97.72 685.37,98.26" fill="#e0e5e5" stroke="#e0e5e5" stroke-width="0.6" stroke-linejoin="round"/>
<polygon points="660.22,148.16 661.56,149.46 661.56,129.19 660.22,128.68" fill="#737571" stroke="#737571" stroke-width="0.6" stroke-linejoin="round"/>
<polygon points="660.22,128.68 661.56,129.19 661.72,126.86 660.38,126.34" fill="#b2b0a7" stroke="#b2b0a7" stroke-width="0.6" stroke-linejoin="round"/>
<polygon points="660.38,126.34 661.72,126.86 662.19,124.36 660.85,123.84" fill="#c4c2bb" stroke="#c4c2bb" stroke-width="0.6" stroke-linejoin="round"/>
<polygon points="660.85,123.84 662.19,124.36 662.96,121.78 661.61,121.26" fill="#c2bfb7" stroke="#c2bfb7" stroke-width="0.6" stroke-linejoin="round"/>
<polygon points="661.61,121.26 662.96,121.78 663.98,119.23 662.64,118.71" fill="#bebab0" stroke="#bebab0" stroke-width="0.6" stroke-linejoin="round"/>
<polygon points="662.64,118.71 663.98,119.23 665.24,116.79 663.89,116.28" fill="#d7d2c6" stroke="#d7d2c6" stroke-width="0.6" stroke-linejoin="round"/>
<polygon points="663.89,116.28 665.24,116.79 666.67,114.58 665.32,114.06" fill="#d9d2c4" stroke="#d9d2c4" stroke-width="0.6" stroke-linejoin="round"/>
<polygon points="665.32,114.06 666.67,114.58 668.22,112.66 666.87,112.15" fill="#d0c8b8" stroke="#d0c8b8" stroke-width="0.6" stroke-linejoin="round"/>
<polygon points="666.87,112.15 668.22,112.66 669.83,111.12 668.49,110.61" fill="#bcb5a6" stroke="#bcb5a6" stroke-width="0.6" stroke-linejoin="round"/>
<polygon points="668.49,110.61 669.83,111.12 684.52,99.07 682.60,99.03" fill="#a0a39c" stroke="#a0a39c" stroke-width="0.6" stroke-linejoin="round"/>
<polygon points="682.60,99.03 684.52,99.07 688.95,97.76 687.03,97.72" fill="#e0e5e5" stroke="#e0e5e5" stroke-width="0.6" stroke-linejoin="round"/>
<polygon points="661.56,149.46 663.43,150.52 663.43,129.98 661.56,129.19" fill="#767773" stroke="#767773" stroke-width="0.6" stroke-linejoin="round"/>
<polygon points="661.56,129.19 663.43,129.98 663.59,127.65 661.72,126.86" fill="#b4b2aa" stroke="#b4b2aa" stroke-width="0.6" stroke-linejoin="round"/>
<polygon points="661.72,126.86 663.59,127.65 664.06,125.14 662.19,124.36" fill="#c7c6bf" stroke="#c7c6bf" stroke-width="0.6" stroke-linejoin="round"/>
<polygon points="662.19,124.36 664.06,125.14 664.82,122.57 662.96,121.78" fill="#c5c3bb" stroke="#c5c3bb" stroke-width="0.6" stroke-linejoin="round"/>
<polygon points="662.96,121.78 664.82,122.57 665.85,120.01 663.98,119.23" fill="#c1beb4" stroke="#c1beb4" stroke-width="0.6" stroke-linejoin="round"/>
<polygon points="663.98,119.23 665.85,120.01 667.10,117.58 665.24,116.79" fill="#dcd7cb" stroke="#dcd7cb" stroke-width="0.6" stroke-linejoin="round"/>
<polygon points="665.24,116.79 667.10,117.58 668.53,115.36 666.67,114.58" fill="#ded7c9" stroke="#ded7c9" stroke-width="0.6" stroke-linejoin="round"/>
<polygon points="666.67,114.58 668.53,115.36 670.09,113.45 668.22,112.66" fill="#d4ccbd" stroke="#d4ccbd" stroke-width="0.6" stroke-linejoin="round"/>
<polygon points="668.22,112.66 670.09,113.45 671.70,111.91 669.83,111.12" fill="#bfb8a8" stroke="#bfb8a8" stroke-width="0.6" stroke-linejoin="round"/>
<polygon points="669.83,111.12 671.70,111.91 686.59,99.70 684.52,99.07" fill="#a0a39c" stroke="#a0a39c" stroke-width="0.6" stroke-linejoin="round"/>
<polygon points="684.52,99.07 686.59,99.70 691.01,98.38 688.95,97.76" fill="#e0e5e5" stroke="#e0e5e5" stroke-width="0.6" stroke-linejoin="round"/>
<polygon points="663.43,150.52 698.74,165.80 698.74,145.26 663.43,129.98" fill="#787975" stroke="#787975" stroke-width="0.6" stroke-linejoin="round"/>
<polygon points="663.43,129.98 698.74,145.26 698.90,142.93 663.59,127.65" fill="#b6b5ad" stroke="#b6b5ad" stroke-width="0.6" stroke-linejoin="round"/>
<polygon points="663.59,127.65 698.90,142.93 699.37,140.43 664.06,125.14" fill="#cbcac3" stroke="#cbcac3" stroke-width="0.6" stroke-linejoin="round"/>
<polygon points="664.06,125.14 699.37,140.43 700.13,137.85 664.82,122.57" fill="#c9c7bf" stroke="#c9c7bf" stroke-width="0.6" stroke-linejoin="round"/>
<polygon points="664.82,122.57 700.13,137.85 701.16,135.30 665.85,120.01" fill="#c4c1b8" stroke="#c4c1b8" stroke-width="0.6" stroke-linejoin="round"/>
<polygon points="665.85,120.01 701.16,135.30 702.41,132.86 667.10,117.58" fill="#e1dcd0" stroke="#e1dcd0" stroke-width="0.6" stroke-linejoin="round"/>
<polygon points="667.10,117.58 702.41,132.86 703.84,130.65 668.53,115.36" fill="#e3dcce" stroke="#e3dcce" stroke-width="0.6" stroke-linejoin="round"/>
<polygon points="668.53,115.36 703.84,130.65 705.39,128.73 670.09,113.45" fill="#d9d1c1" stroke="#d9d1c1" stroke-width="0.6" stroke-linejoin="round"/>
<polygon points="670.09,113.45 705.39,128.73 707.01,127.19 671.70,111.91" fill="#c2baab" stroke="#c2baab" stroke-width="0.6" stroke-linejoin="round"/>
<polygon points="671.70,111.91 707.01,127.19 721.89,114.98 686.59,99.70" fill="#a0a39c" stroke="#a0a39c" stroke-width="0.6" stroke-linejoin="round"/>
<polygon points="686.59,99.70 721.89,114.98 726.32,113.67 691.01,98.38" fill="#e0e5e5" stroke="#e0e5e5" stroke-width="0.6" stroke-linejoin="round"/>
<path d="M661.25,142.32 L660.02,143.66 L659.42,145.15 L659.49,146.69 L660.22,148.16 L661.56,149.46 L663.43,150.52 L698.74,165.80" fill="none" stroke="#17150f" stroke-width="1.5" stroke-linejoin="round" stroke-linecap="round"/>
<path d="M661.25,129.68 L660.02,128.98 L659.42,128.57 L659.49,128.46 L660.22,128.68 L661.56,129.19 L663.43,129.98 L698.74,145.26" fill="none" stroke="#17150f" stroke-width="1.1" stroke-linejoin="round" stroke-linecap="round"/>
<path d="M669.52,111.61 L668.29,110.91 L667.69,110.50 L667.76,110.39 L668.49,110.61 L669.83,111.12 L671.70,111.91 L707.01,127.19" fill="none" stroke="#17150f" stroke-width="1.1" stroke-linejoin="round" stroke-linecap="round"/>
<path d="M678.61,104.14 L678.88,102.22 L679.68,100.66 L680.95,99.57 L682.60,99.03 L684.52,99.07 L686.59,99.70 L721.89,114.98" fill="none" stroke="#17150f" stroke-width="1.1" stroke-linejoin="round" stroke-linecap="round"/>
<path d="M683.04,102.83 L683.31,100.90 L684.11,99.34 L685.37,98.26 L687.03,97.72 L688.95,97.76 L691.01,98.38 L726.32,113.67" fill="none" stroke="#c4c9c9" stroke-width="0.6" stroke-linejoin="round" stroke-linecap="round"/>
<path d="M661.25,142.32 L661.25,129.68 L661.40,127.35 L661.87,124.84 L662.64,122.27 L663.67,119.71 L664.92,117.28 L666.35,115.06 L667.90,113.15 L669.52,111.61 L678.61,104.14" fill="none" stroke="#17150f" stroke-width="1.5" stroke-linejoin="round" stroke-linecap="round"/>
<path d="M698.74,145.26 L698.90,142.93 L699.37,140.43 L700.13,137.85 L701.16,135.30 L702.41,132.86 L703.84,130.65 L705.39,128.73 L707.01,127.19 L721.89,114.98" fill="none" stroke="#17150f" stroke-width="1.4" stroke-linejoin="round" stroke-linecap="round"/>
<polygon points="707.01,127.19 707.69,130.11 722.35,118.08 718.59,117.69" fill="#a49e90" stroke="#a49e90" stroke-width="0.6" stroke-linejoin="round"/>
<polygon points="698.74,165.80 701.40,166.95 701.40,143.86 698.74,145.26" fill="#7a7b77" stroke="#7a7b77" stroke-width="0.6" stroke-linejoin="round"/>
<polygon points="698.74,145.26 701.40,143.86 701.70,140.95 699.14,141.44" fill="#b9b7af" stroke="#b9b7af" stroke-width="0.6" stroke-linejoin="round"/>
<polygon points="699.14,141.44 701.70,140.95 702.60,137.82 700.32,137.33" fill="#c5c3bb" stroke="#c5c3bb" stroke-width="0.6" stroke-linejoin="round"/>
<polygon points="700.32,137.33 702.60,137.82 703.99,134.78 702.15,133.34" fill="#cdc9be" stroke="#cdc9be" stroke-width="0.6" stroke-linejoin="round"/>
<polygon points="702.15,133.34 703.99,134.78 705.74,132.12 704.45,129.84" fill="#dbd4c6" stroke="#dbd4c6" stroke-width="0.6" stroke-linejoin="round"/>
<polygon points="704.45,129.84 705.74,132.12 707.69,130.11 707.01,127.19" fill="#c5bdae" stroke="#c5bdae" stroke-width="0.6" stroke-linejoin="round"/>
<polygon points="707.69,130.11 708.55,133.16 726.11,118.76 722.35,118.08" fill="#a49d8f" stroke="#a49d8f" stroke-width="0.6" stroke-linejoin="round"/>
<polygon points="701.40,166.95 704.05,168.10 704.05,143.00 701.40,143.86" fill="#7a7b77" stroke="#7a7b77" stroke-width="0.6" stroke-linejoin="round"/>
<polygon points="701.40,143.86 704.05,143.00 704.27,140.92 701.70,140.95" fill="#b3b0a7" stroke="#b3b0a7" stroke-width="0.6" stroke-linejoin="round"/>
<polygon points="701.70,140.95 704.27,140.92 704.91,138.68 702.60,137.82" fill="#bcb9b0" stroke="#bcb9b0" stroke-width="0.6" stroke-linejoin="round"/>
<polygon points="702.60,137.82 704.91,138.68 705.91,136.51 703.99,134.78" fill="#c3bdb2" stroke="#c3bdb2" stroke-width="0.6" stroke-linejoin="round"/>
<polygon points="703.99,134.78 705.91,136.51 707.16,134.61 705.74,132.12" fill="#cdc6b8" stroke="#cdc6b8" stroke-width="0.6" stroke-linejoin="round"/>
<polygon points="705.74,132.12 707.16,134.61 708.55,133.16 707.69,130.11" fill="#bcb5a6" stroke="#bcb5a6" stroke-width="0.6" stroke-linejoin="round"/>
<polygon points="708.55,133.16 709.63,136.35 729.87,119.76 726.11,118.76" fill="#a39c8e" stroke="#a39c8e" stroke-width="0.6" stroke-linejoin="round"/>
<polygon points="704.05,168.10 706.71,169.25 706.71,142.74 704.05,143.00" fill="#7a7b77" stroke="#7a7b77" stroke-width="0.6" stroke-linejoin="round"/>
<polygon points="704.05,143.00 706.71,142.74 706.85,141.39 704.27,140.92" fill="#aea99e" stroke="#aea99e" stroke-width="0.6" stroke-linejoin="round"/>
<polygon points="704.27,140.92 706.85,141.39 707.27,139.94 704.91,138.68" fill="#b4afa4" stroke="#b4afa4" stroke-width="0.6" stroke-linejoin="round"/>
<polygon points="704.91,138.68 707.27,139.94 707.92,138.53 705.91,136.51" fill="#b8b2a6" stroke="#b8b2a6" stroke-width="0.6" stroke-linejoin="round"/>
<polygon points="705.91,136.51 707.92,138.53 708.73,137.29 707.16,134.61" fill="#bfb8aa" stroke="#bfb8aa" stroke-width="0.6" stroke-linejoin="round"/>
<polygon points="707.16,134.61 708.73,137.29 709.63,136.35 708.55,133.16" fill="#b3ac9d" stroke="#b3ac9d" stroke-width="0.6" stroke-linejoin="round"/>
<polygon points="709.63,136.35 710.96,139.68 733.63,121.09 729.87,119.76" fill="#a39c8e" stroke="#a39c8e" stroke-width="0.6" stroke-linejoin="round"/>
<polygon points="706.71,169.25 709.37,170.40 709.37,143.16 706.71,142.74" fill="#7a7b77" stroke="#7a7b77" stroke-width="0.6" stroke-linejoin="round"/>
<polygon points="706.71,142.74 709.37,143.16 709.45,142.43 706.85,141.39" fill="#a8a296" stroke="#a8a296" stroke-width="0.6" stroke-linejoin="round"/>
<polygon points="706.85,141.39 709.45,142.43 709.67,141.64 707.27,139.94" fill="#aba599" stroke="#aba599" stroke-width="0.6" stroke-linejoin="round"/>
<polygon points="707.27,139.94 709.67,141.64 710.02,140.87 707.92,138.53" fill="#ada79a" stroke="#ada79a" stroke-width="0.6" stroke-linejoin="round"/>
<polygon points="707.92,138.53 710.02,140.87 710.47,140.19 708.73,137.29" fill="#b1aa9c" stroke="#b1aa9c" stroke-width="0.6" stroke-linejoin="round"/>
<polygon points="708.73,137.29 710.47,140.19 710.96,139.68 709.63,136.35" fill="#aba495" stroke="#aba495" stroke-width="0.6" stroke-linejoin="round"/>
<polygon points="710.96,139.68 712.59,143.16 737.39,122.82 733.63,121.09" fill="#a29b8d" stroke="#a29b8d" stroke-width="0.6" stroke-linejoin="round"/>
<polygon points="709.37,170.40 712.03,171.55 712.03,144.39 709.37,143.16" fill="#7a7b77" stroke="#7a7b77" stroke-width="0.6" stroke-linejoin="round"/>
<polygon points="709.37,143.16 712.03,144.39 712.05,144.13 709.45,142.43" fill="#a29b8d" stroke="#a29b8d" stroke-width="0.6" stroke-linejoin="round"/>
<polygon points="709.45,142.43 712.05,144.13 712.13,143.85 709.67,141.64" fill="#a29b8d" stroke="#a29b8d" stroke-width="0.6" stroke-linejoin="round"/>
<polygon points="709.67,141.64 712.13,143.85 712.26,143.58 710.02,140.87" fill="#a29b8d" stroke="#a29b8d" stroke-width="0.6" stroke-linejoin="round"/>
<polygon points="710.02,140.87 712.26,143.58 712.42,143.34 710.47,140.19" fill="#a39c8e" stroke="#a39c8e" stroke-width="0.6" stroke-linejoin="round"/>
<polygon points="710.47,140.19 712.42,143.34 712.59,143.16 710.96,139.68" fill="#a29b8d" stroke="#a29b8d" stroke-width="0.6" stroke-linejoin="round"/>
<polygon points="712.59,143.16 714.70,146.73 741.15,125.04 737.39,122.82" fill="#a29b8d" stroke="#a29b8d" stroke-width="0.6" stroke-linejoin="round"/>
<polygon points="712.03,171.55 714.68,172.70 714.68,146.77 712.03,144.39" fill="#7a7b77" stroke="#7a7b77" stroke-width="0.6" stroke-linejoin="round"/>
<polygon points="712.03,144.39 714.68,146.77 714.68,146.76 712.05,144.13" fill="#a19a8c" stroke="#a19a8c" stroke-width="0.6" stroke-linejoin="round"/>
<polygon points="712.05,144.13 714.68,146.76 714.69,146.75 712.13,143.85" fill="#a19a8c" stroke="#a19a8c" stroke-width="0.6" stroke-linejoin="round"/>
<polygon points="712.13,143.85 714.69,146.75 714.69,146.75 712.26,143.58" fill="#a19a8c" stroke="#a19a8c" stroke-width="0.6" stroke-linejoin="round"/>
<polygon points="712.26,143.58 714.69,146.75 714.70,146.74 712.42,143.34" fill="#a19a8c" stroke="#a19a8c" stroke-width="0.6" stroke-linejoin="round"/>
<polygon points="712.42,143.34 714.70,146.74 714.70,146.73 712.59,143.16" fill="#a19a8c" stroke="#a19a8c" stroke-width="0.6" stroke-linejoin="round"/>
<path d="M723.22,113.89 L726.21,114.92 L729.19,116.23 L732.18,117.86 L735.17,119.82 L738.16,122.18 L741.15,125.04" fill="none" stroke="#17150f" stroke-width="1.6"/>
<path d="M714.68,146.75 L741.15,125.04" fill="none" stroke="#17150f" stroke-width="1.2"/>
<path d="M707.01,127.19 L707.69,130.11 L708.55,133.16 L709.63,136.35 L710.96,139.68 L712.59,143.16 L714.70,146.73" fill="none" stroke="#17150f" stroke-width="1.1"/>
<path d="M698.74,145.26 L701.40,143.86 L704.05,143.00 L706.71,142.74 L709.37,143.16 L712.03,144.39 L714.68,146.77" fill="none" stroke="#17150f" stroke-width="1.1"/>
<path d="M698.74,165.80 L714.68,172.70" fill="none" stroke="#17150f" stroke-width="1.5"/>
<polygon points="996.33,295.65 1045.76,317.04 1045.76,296.50 996.33,275.11" fill="#9e9e98" stroke="#9e9e98" stroke-width="0.6" stroke-linejoin="round"/>
<polygon points="996.33,275.11 1045.76,296.50 1045.92,294.17 996.49,272.77" fill="#b6b5ad" stroke="#b6b5ad" stroke-width="0.6" stroke-linejoin="round"/>
<polygon points="996.49,272.77 1045.92,294.17 1046.39,291.67 996.96,270.27" fill="#cbcac3" stroke="#cbcac3" stroke-width="0.6" stroke-linejoin="round"/>
<polygon points="996.96,270.27 1046.39,291.67 1047.16,289.09 997.72,267.69" fill="#c9c7bf" stroke="#c9c7bf" stroke-width="0.6" stroke-linejoin="round"/>
<polygon points="997.72,267.69 1047.16,289.09 1048.18,286.54 998.75,265.14" fill="#c4c1b8" stroke="#c4c1b8" stroke-width="0.6" stroke-linejoin="round"/>
<polygon points="998.75,265.14 1048.18,286.54 1049.44,284.10 1000.00,262.71" fill="#e1dcd0" stroke="#e1dcd0" stroke-width="0.6" stroke-linejoin="round"/>
<polygon points="1000.00,262.71 1049.44,284.10 1050.87,281.89 1001.43,260.49" fill="#e3dcce" stroke="#e3dcce" stroke-width="0.6" stroke-linejoin="round"/>
<polygon points="1001.43,260.49 1050.87,281.89 1052.42,279.97 1002.99,258.58" fill="#d9d1c1" stroke="#d9d1c1" stroke-width="0.6" stroke-linejoin="round"/>
<polygon points="1002.99,258.58 1052.42,279.97 1054.03,278.43 1004.60,257.04" fill="#c2baab" stroke="#c2baab" stroke-width="0.6" stroke-linejoin="round"/>
<polygon points="1004.60,257.04 1054.03,278.43 1069.74,265.54 1020.31,244.15" fill="#a39c8e" stroke="#a39c8e" stroke-width="0.6" stroke-linejoin="round"/>
<polygon points="1020.31,244.15 1069.74,265.54 1074.17,264.23 1024.74,242.83" fill="#e0e5e5" stroke="#e0e5e5" stroke-width="0.6" stroke-linejoin="round"/>
<path d="M996.33,295.65 L1045.76,317.04" fill="none" stroke="#17150f" stroke-width="1.5" stroke-linejoin="round" stroke-linecap="round"/>
<path d="M996.33,275.11 L1045.76,296.50" fill="none" stroke="#17150f" stroke-width="1.1" stroke-linejoin="round" stroke-linecap="round"/>
<path d="M1004.60,257.04 L1054.03,278.43" fill="none" stroke="#17150f" stroke-width="1.1" stroke-linejoin="round" stroke-linecap="round"/>
<path d="M1020.31,244.15 L1069.74,265.54" fill="none" stroke="#17150f" stroke-width="1.1" stroke-linejoin="round" stroke-linecap="round"/>
<path d="M1024.74,242.83 L1074.17,264.23" fill="none" stroke="#c4c9c9" stroke-width="0.6" stroke-linejoin="round" stroke-linecap="round"/>
<path d="M996.33,295.65 L996.33,275.11 L996.49,272.77 L996.96,270.27 L997.72,267.69 L998.75,265.14 L1000.00,262.71 L1001.43,260.49 L1002.99,258.58 L1004.60,257.04 L1020.31,244.15" fill="none" stroke="#17150f" stroke-width="1.5" stroke-linejoin="round" stroke-linecap="round"/>
<polygon points="1045.76,317.04 1045.76,296.50 1045.92,294.17 1046.39,291.67 1047.16,289.09 1048.18,286.54 1049.44,284.10 1050.87,281.89 1052.42,279.97 1054.03,278.43 1069.74,265.54 1071.46,264.44 1073.05,264.04 1074.42,264.35 1075.47,265.35 1076.14,266.99 1076.36,269.14 1076.36,291.94" fill="#8c867a" stroke="#17150f" stroke-width="1.4" stroke-linejoin="round"/>
<path d="M996.33,275.11 L996.33,269.69 L1023.62,247.30" fill="none" stroke="#17150f" stroke-width="1.2" stroke-linejoin="round" stroke-linecap="round"/>
<polygon points="166.21,565.95 164.81,567.49 164.81,564.71 166.21,565.50" fill="#acaca4" stroke="#acaca4" stroke-width="0.6" stroke-linejoin="round"/>
<polygon points="166.21,565.50 164.81,564.71 164.97,562.37 166.37,563.17" fill="#a9a69c" stroke="#a9a69c" stroke-width="0.6" stroke-linejoin="round"/>
<polygon points="166.37,563.17 164.97,562.37 165.44,559.87 166.84,560.67" fill="#b6b3a9" stroke="#b6b3a9" stroke-width="0.6" stroke-linejoin="round"/>
<polygon points="166.84,560.67 165.44,559.87 166.21,557.29 167.61,558.09" fill="#b4b1a7" stroke="#b4b1a7" stroke-width="0.6" stroke-linejoin="round"/>
<polygon points="167.61,558.09 166.21,557.29 167.23,554.74 168.64,555.54" fill="#b2ada2" stroke="#b2ada2" stroke-width="0.6" stroke-linejoin="round"/>
<polygon points="168.64,555.54 167.23,554.74 168.49,552.31 169.89,553.10" fill="#c3beb1" stroke="#c3beb1" stroke-width="0.6" stroke-linejoin="round"/>
<polygon points="169.89,553.10 168.49,552.31 169.92,550.09 171.32,550.89" fill="#c4beb0" stroke="#c4beb0" stroke-width="0.6" stroke-linejoin="round"/>
<polygon points="171.32,550.89 169.92,550.09 171.47,548.18 172.87,548.97" fill="#beb7a8" stroke="#beb7a8" stroke-width="0.6" stroke-linejoin="round"/>
<polygon points="172.87,548.97 171.47,548.18 173.08,546.64 174.48,547.43" fill="#b0a99b" stroke="#b0a99b" stroke-width="0.6" stroke-linejoin="round"/>
<polygon points="174.48,547.43 173.08,546.64 206.22,519.45 205.91,521.65" fill="#a39c8e" stroke="#a39c8e" stroke-width="0.6" stroke-linejoin="round"/>
<polygon points="205.91,521.65 206.22,519.45 207.88,518.96 207.57,521.16" fill="#e0e5e5" stroke="#e0e5e5" stroke-width="0.6" stroke-linejoin="round"/>
<polygon points="164.81,567.49 164.13,569.20 164.13,564.23 164.81,564.71" fill="#acaca4" stroke="#acaca4" stroke-width="0.6" stroke-linejoin="round"/>
<polygon points="164.81,564.71 164.13,564.23 164.29,561.90 164.97,562.37" fill="#aba89f" stroke="#aba89f" stroke-width="0.6" stroke-linejoin="round"/>
<polygon points="164.97,562.37 164.29,561.90 164.76,559.40 165.44,559.87" fill="#b9b6ad" stroke="#b9b6ad" stroke-width="0.6" stroke-linejoin="round"/>
<polygon points="165.44,559.87 164.76,559.40 165.52,556.82 166.21,557.29" fill="#b8b4ab" stroke="#b8b4ab" stroke-width="0.6" stroke-linejoin="round"/>
<polygon points="166.21,557.29 165.52,556.82 166.55,554.26 167.23,554.74" fill="#b5b1a6" stroke="#b5b1a6" stroke-width="0.6" stroke-linejoin="round"/>
<polygon points="167.23,554.74 166.55,554.26 167.80,551.83 168.49,552.31" fill="#c8c3b6" stroke="#c8c3b6" stroke-width="0.6" stroke-linejoin="round"/>
<polygon points="168.49,552.31 167.80,551.83 169.23,549.62 169.92,550.09" fill="#c9c3b5" stroke="#c9c3b5" stroke-width="0.6" stroke-linejoin="round"/>
<polygon points="169.92,550.09 169.23,549.62 170.78,547.70 171.47,548.18" fill="#c2bbac" stroke="#c2bbac" stroke-width="0.6" stroke-linejoin="round"/>
<polygon points="171.47,548.18 170.78,547.70 172.40,546.16 173.08,546.64" fill="#b3ac9d" stroke="#b3ac9d" stroke-width="0.6" stroke-linejoin="round"/>
<polygon points="173.08,546.64 172.40,546.16 207.13,517.66 206.22,519.45" fill="#a39c8e" stroke="#a39c8e" stroke-width="0.6" stroke-linejoin="round"/>
<polygon points="206.22,519.45 207.13,517.66 208.79,517.17 207.88,518.96" fill="#e0e5e5" stroke="#e0e5e5" stroke-width="0.6" stroke-linejoin="round"/>
<polygon points="164.13,569.20 164.20,570.95 164.20,564.11 164.13,564.23" fill="#acaca4" stroke="#acaca4" stroke-width="0.6" stroke-linejoin="round"/>
<polygon points="164.13,564.23 164.20,564.11 164.36,561.78 164.29,561.90" fill="#aeaba2" stroke="#aeaba2" stroke-width="0.6" stroke-linejoin="round"/>
<polygon points="164.29,561.90 164.36,561.78 164.83,559.28 164.76,559.40" fill="#bdbab2" stroke="#bdbab2" stroke-width="0.6" stroke-linejoin="round"/>
<polygon points="164.76,559.40 164.83,559.28 165.60,556.70 165.52,556.82" fill="#bbb8af" stroke="#bbb8af" stroke-width="0.6" stroke-linejoin="round"/>
<polygon points="165.52,556.82 165.60,556.70 166.63,554.15 166.55,554.26" fill="#b8b4a9" stroke="#b8b4a9" stroke-width="0.6" stroke-linejoin="round"/>
<polygon points="166.55,554.26 166.63,554.15 167.88,551.71 167.80,551.83" fill="#cdc8bc" stroke="#cdc8bc" stroke-width="0.6" stroke-linejoin="round"/>
<polygon points="167.80,551.83 167.88,551.71 169.31,549.50 169.23,549.62" fill="#cec8ba" stroke="#cec8ba" stroke-width="0.6" stroke-linejoin="round"/>
<polygon points="169.23,549.62 169.31,549.50 170.86,547.58 170.78,547.70" fill="#c7bfb0" stroke="#c7bfb0" stroke-width="0.6" stroke-linejoin="round"/>
<polygon points="170.78,547.70 170.86,547.58 172.47,546.04 172.40,546.16" fill="#b6afa0" stroke="#b6afa0" stroke-width="0.6" stroke-linejoin="round"/>
<polygon points="172.40,546.16 172.47,546.04 208.58,516.42 207.13,517.66" fill="#a39c8e" stroke="#a39c8e" stroke-width="0.6" stroke-linejoin="round"/>
<polygon points="207.13,517.66 208.58,516.42 210.24,515.93 208.79,517.17" fill="#e0e5e5" stroke="#e0e5e5" stroke-width="0.6" stroke-linejoin="round"/>
<polygon points="164.20,570.95 165.04,572.63 165.04,564.36 164.20,564.11" fill="#acaca4" stroke="#acaca4" stroke-width="0.6" stroke-linejoin="round"/>
<polygon points="164.20,564.11 165.04,564.36 165.20,562.03 164.36,561.78" fill="#b0ada4" stroke="#b0ada4" stroke-width="0.6" stroke-linejoin="round"/>
<polygon points="164.36,561.78 165.20,562.03 165.67,559.52 164.83,559.28" fill="#c0beb6" stroke="#c0beb6" stroke-width="0.6" stroke-linejoin="round"/>
<polygon points="164.83,559.28 165.67,559.52 166.43,556.94 165.60,556.70" fill="#bebcb3" stroke="#bebcb3" stroke-width="0.6" stroke-linejoin="round"/>
<polygon points="165.60,556.70 166.43,556.94 167.46,554.39 166.63,554.15" fill="#bbb7ad" stroke="#bbb7ad" stroke-width="0.6" stroke-linejoin="round"/>
<polygon points="166.63,554.15 167.46,554.39 168.72,551.96 167.88,551.71" fill="#d2cdc1" stroke="#d2cdc1" stroke-width="0.6" stroke-linejoin="round"/>
<polygon points="167.88,551.71 168.72,551.96 170.15,549.74 169.31,549.50" fill="#d3cdbf" stroke="#d3cdbf" stroke-width="0.6" stroke-linejoin="round"/>
<polygon points="169.31,549.50 170.15,549.74 171.70,547.83 170.86,547.58" fill="#cbc4b4" stroke="#cbc4b4" stroke-width="0.6" stroke-linejoin="round"/>
<polygon points="170.86,547.58 171.70,547.83 173.31,546.29 172.47,546.04" fill="#b9b2a3" stroke="#b9b2a3" stroke-width="0.6" stroke-linejoin="round"/>
<polygon points="172.47,546.04 173.31,546.29 210.47,515.80 208.58,516.42" fill="#a39c8e" stroke="#a39c8e" stroke-width="0.6" stroke-linejoin="round"/>
<polygon points="208.58,516.42 210.47,515.80 212.13,515.31 210.24,515.93" fill="#e0e5e5" stroke="#e0e5e5" stroke-width="0.6" stroke-linejoin="round"/>
<polygon points="165.04,572.63 166.58,574.12 166.58,564.95 165.04,564.36" fill="#acaca4" stroke="#acaca4" stroke-width="0.6" stroke-linejoin="round"/>
<polygon points="165.04,564.36 166.58,564.95 166.74,562.62 165.20,562.03" fill="#b2b0a7" stroke="#b2b0a7" stroke-width="0.6" stroke-linejoin="round"/>
<polygon points="165.20,562.03 166.74,562.62 167.21,560.11 165.67,559.52" fill="#c4c2bb" stroke="#c4c2bb" stroke-width="0.6" stroke-linejoin="round"/>
<polygon points="165.67,559.52 167.21,560.11 167.97,557.54 166.43,556.94" fill="#c2bfb7" stroke="#c2bfb7" stroke-width="0.6" stroke-linejoin="round"/>
<polygon points="166.43,556.94 167.97,557.54 169.00,554.98 167.46,554.39" fill="#bebab0" stroke="#bebab0" stroke-width="0.6" stroke-linejoin="round"/>
<polygon points="167.46,554.39 169.00,554.98 170.25,552.55 168.72,551.96" fill="#d7d2c6" stroke="#d7d2c6" stroke-width="0.6" stroke-linejoin="round"/>
<polygon points="168.72,551.96 170.25,552.55 171.68,550.33 170.15,549.74" fill="#d9d2c4" stroke="#d9d2c4" stroke-width="0.6" stroke-linejoin="round"/>
<polygon points="170.15,549.74 171.68,550.33 173.23,548.42 171.70,547.83" fill="#d0c8b8" stroke="#d0c8b8" stroke-width="0.6" stroke-linejoin="round"/>
<polygon points="171.70,547.83 173.23,548.42 174.85,546.88 173.31,546.29" fill="#bcb5a6" stroke="#bcb5a6" stroke-width="0.6" stroke-linejoin="round"/>
<polygon points="173.31,546.29 174.85,546.88 212.66,515.85 210.47,515.80" fill="#a39c8e" stroke="#a39c8e" stroke-width="0.6" stroke-linejoin="round"/>
<polygon points="210.47,515.80 212.66,515.85 214.32,515.36 212.13,515.31" fill="#e0e5e5" stroke="#e0e5e5" stroke-width="0.6" stroke-linejoin="round"/>
<polygon points="166.58,574.12 168.71,575.33 168.71,565.85 166.58,564.95" fill="#acaca4" stroke="#acaca4" stroke-width="0.6" stroke-linejoin="round"/>
<polygon points="166.58,564.95 168.71,565.85 168.87,563.52 166.74,562.62" fill="#b4b2aa" stroke="#b4b2aa" stroke-width="0.6" stroke-linejoin="round"/>
<polygon points="166.74,562.62 168.87,563.52 169.34,561.01 167.21,560.11" fill="#c7c6bf" stroke="#c7c6bf" stroke-width="0.6" stroke-linejoin="round"/>
<polygon points="167.21,560.11 169.34,561.01 170.10,558.43 167.97,557.54" fill="#c5c3bb" stroke="#c5c3bb" stroke-width="0.6" stroke-linejoin="round"/>
<polygon points="167.97,557.54 170.10,558.43 171.13,555.88 169.00,554.98" fill="#c1beb4" stroke="#c1beb4" stroke-width="0.6" stroke-linejoin="round"/>
<polygon points="169.00,554.98 171.13,555.88 172.39,553.45 170.25,552.55" fill="#dcd7cb" stroke="#dcd7cb" stroke-width="0.6" stroke-linejoin="round"/>
<polygon points="170.25,552.55 172.39,553.45 173.82,551.23 171.68,550.33" fill="#ded7c9" stroke="#ded7c9" stroke-width="0.6" stroke-linejoin="round"/>
<polygon points="171.68,550.33 173.82,551.23 175.37,549.32 173.23,548.42" fill="#d4ccbd" stroke="#d4ccbd" stroke-width="0.6" stroke-linejoin="round"/>
<polygon points="173.23,548.42 175.37,549.32 176.98,547.78 174.85,546.88" fill="#bfb8a8" stroke="#bfb8a8" stroke-width="0.6" stroke-linejoin="round"/>
<polygon points="174.85,546.88 176.98,547.78 215.02,516.57 212.66,515.85" fill="#a39c8e" stroke="#a39c8e" stroke-width="0.6" stroke-linejoin="round"/>
<polygon points="212.66,515.85 215.02,516.57 216.68,516.07 214.32,515.36" fill="#e0e5e5" stroke="#e0e5e5" stroke-width="0.6" stroke-linejoin="round"/>
<polygon points="168.71,575.33 190.35,584.69 190.35,575.21 168.71,565.85" fill="#acaca4" stroke="#acaca4" stroke-width="0.6" stroke-linejoin="round"/>
<polygon points="168.71,565.85 190.35,575.21 190.51,572.88 168.87,563.52" fill="#b6b5ad" stroke="#b6b5ad" stroke-width="0.6" stroke-linejoin="round"/>
<polygon points="168.87,563.52 190.51,572.88 190.98,570.38 169.34,561.01" fill="#cbcac3" stroke="#cbcac3" stroke-width="0.6" stroke-linejoin="round"/>
<polygon points="169.34,561.01 190.98,570.38 191.74,567.80 170.10,558.43" fill="#c9c7bf" stroke="#c9c7bf" stroke-width="0.6" stroke-linejoin="round"/>
<polygon points="170.10,558.43 191.74,567.80 192.77,565.25 171.13,555.88" fill="#c4c1b8" stroke="#c4c1b8" stroke-width="0.6" stroke-linejoin="round"/>
<polygon points="171.13,555.88 192.77,565.25 194.03,562.82 172.39,553.45" fill="#e1dcd0" stroke="#e1dcd0" stroke-width="0.6" stroke-linejoin="round"/>
<polygon points="172.39,553.45 194.03,562.82 195.46,560.60 173.82,551.23" fill="#e3dcce" stroke="#e3dcce" stroke-width="0.6" stroke-linejoin="round"/>
<polygon points="173.82,551.23 195.46,560.60 197.01,558.68 175.37,549.32" fill="#d9d1c1" stroke="#d9d1c1" stroke-width="0.6" stroke-linejoin="round"/>
<polygon points="175.37,549.32 197.01,558.68 198.62,557.14 176.98,547.78" fill="#c2baab" stroke="#c2baab" stroke-width="0.6" stroke-linejoin="round"/>
<polygon points="176.98,547.78 198.62,557.14 236.66,525.93 215.02,516.57" fill="#a39c8e" stroke="#a39c8e" stroke-width="0.6" stroke-linejoin="round"/>
<polygon points="215.02,516.57 236.66,525.93 238.32,525.44 216.68,516.07" fill="#e0e5e5" stroke="#e0e5e5" stroke-width="0.6" stroke-linejoin="round"/>
<path d="M166.21,565.95 L164.81,567.49 L164.13,569.20 L164.20,570.95 L165.04,572.63 L166.58,574.12 L168.71,575.33 L190.35,584.69" fill="none" stroke="#17150f" stroke-width="1.5" stroke-linejoin="round" stroke-linecap="round"/>
<path d="M166.21,565.50 L164.81,564.71 L164.13,564.23 L164.20,564.11 L165.04,564.36 L166.58,564.95 L168.71,565.85 L190.35,575.21" fill="none" stroke="#17150f" stroke-width="1.1" stroke-linejoin="round" stroke-linecap="round"/>
<path d="M174.48,547.43 L173.08,546.64 L172.40,546.16 L172.47,546.04 L173.31,546.29 L174.85,546.88 L176.98,547.78 L198.62,557.14" fill="none" stroke="#17150f" stroke-width="1.1" stroke-linejoin="round" stroke-linecap="round"/>
<path d="M205.91,521.65 L206.22,519.45 L207.13,517.66 L208.58,516.42 L210.47,515.80 L212.66,515.85 L215.02,516.57 L236.66,525.93" fill="none" stroke="#17150f" stroke-width="1.1" stroke-linejoin="round" stroke-linecap="round"/>
<path d="M207.57,521.16 L207.88,518.96 L208.79,517.17 L210.24,515.93 L212.13,515.31 L214.32,515.36 L216.68,516.07 L238.32,525.44" fill="none" stroke="#c4c9c9" stroke-width="0.6" stroke-linejoin="round" stroke-linecap="round"/>
<path d="M166.21,565.95 L166.21,565.50 L166.37,563.17 L166.84,560.67 L167.61,558.09 L168.64,555.54 L169.89,553.10 L171.32,550.89 L172.87,548.97 L174.48,547.43 L205.91,521.65" fill="none" stroke="#17150f" stroke-width="1.5" stroke-linejoin="round" stroke-linecap="round"/>
<path d="M190.35,575.21 L190.51,572.88 L190.98,570.38 L191.74,567.80 L192.77,565.25 L194.03,562.82 L195.46,560.60 L197.01,558.68 L198.62,557.14 L236.66,525.93" fill="none" stroke="#17150f" stroke-width="1.4" stroke-linejoin="round" stroke-linecap="round"/>
<polygon points="198.62,557.14 200.06,560.29 237.19,529.83 233.35,528.65" fill="#a49e90" stroke="#a49e90" stroke-width="0.6" stroke-linejoin="round"/>
<polygon points="190.35,584.69 193.77,586.17 193.77,574.04 190.35,575.21" fill="#acaca4" stroke="#acaca4" stroke-width="0.6" stroke-linejoin="round"/>
<polygon points="190.35,575.21 193.77,574.04 194.08,571.13 190.76,571.39" fill="#b9b7af" stroke="#b9b7af" stroke-width="0.6" stroke-linejoin="round"/>
<polygon points="190.76,571.39 194.08,571.13 194.97,568.00 191.93,567.29" fill="#c5c3bb" stroke="#c5c3bb" stroke-width="0.6" stroke-linejoin="round"/>
<polygon points="191.93,567.29 194.97,568.00 196.36,564.96 193.76,563.29" fill="#cdc9be" stroke="#cdc9be" stroke-width="0.6" stroke-linejoin="round"/>
<polygon points="193.76,563.29 196.36,564.96 198.12,562.31 196.07,559.79" fill="#dbd4c6" stroke="#dbd4c6" stroke-width="0.6" stroke-linejoin="round"/>
<polygon points="196.07,559.79 198.12,562.31 200.06,560.29 198.62,557.14" fill="#c5bdae" stroke="#c5bdae" stroke-width="0.6" stroke-linejoin="round"/>
<polygon points="200.06,560.29 201.69,563.37 241.02,531.10 237.19,529.83" fill="#a49d8f" stroke="#a49d8f" stroke-width="0.6" stroke-linejoin="round"/>
<polygon points="193.77,586.17 197.18,587.65 197.18,573.20 193.77,574.04" fill="#acaca4" stroke="#acaca4" stroke-width="0.6" stroke-linejoin="round"/>
<polygon points="193.77,574.04 197.18,573.20 197.41,571.13 194.08,571.13" fill="#b3b0a7" stroke="#b3b0a7" stroke-width="0.6" stroke-linejoin="round"/>
<polygon points="194.08,571.13 197.41,571.13 198.04,568.89 194.97,568.00" fill="#bcb9b0" stroke="#bcb9b0" stroke-width="0.6" stroke-linejoin="round"/>
<polygon points="194.97,568.00 198.04,568.89 199.04,566.71 196.36,564.96" fill="#c3bdb2" stroke="#c3bdb2" stroke-width="0.6" stroke-linejoin="round"/>
<polygon points="196.36,564.96 199.04,566.71 200.30,564.81 198.12,562.31" fill="#cdc6b8" stroke="#cdc6b8" stroke-width="0.6" stroke-linejoin="round"/>
<polygon points="198.12,562.31 200.30,564.81 201.69,563.37 200.06,560.29" fill="#bcb5a6" stroke="#bcb5a6" stroke-width="0.6" stroke-linejoin="round"/>
<polygon points="201.69,563.37 203.53,566.36 244.85,532.46 241.02,531.10" fill="#a39c8e" stroke="#a39c8e" stroke-width="0.6" stroke-linejoin="round"/>
<polygon points="197.18,587.65 200.60,589.13 200.60,572.75 197.18,573.20" fill="#acaca4" stroke="#acaca4" stroke-width="0.6" stroke-linejoin="round"/>
<polygon points="197.18,573.20 200.60,572.75 200.75,571.40 197.41,571.13" fill="#aea99e" stroke="#aea99e" stroke-width="0.6" stroke-linejoin="round"/>
<polygon points="197.41,571.13 200.75,571.40 201.16,569.95 198.04,568.89" fill="#b4afa4" stroke="#b4afa4" stroke-width="0.6" stroke-linejoin="round"/>
<polygon points="198.04,568.89 201.16,569.95 201.81,568.53 199.04,566.71" fill="#b8b2a6" stroke="#b8b2a6" stroke-width="0.6" stroke-linejoin="round"/>
<polygon points="199.04,566.71 201.81,568.53 202.62,567.30 200.30,564.81" fill="#bfb8aa" stroke="#bfb8aa" stroke-width="0.6" stroke-linejoin="round"/>
<polygon points="200.30,564.81 202.62,567.30 203.53,566.36 201.69,563.37" fill="#b3ac9d" stroke="#b3ac9d" stroke-width="0.6" stroke-linejoin="round"/>
<polygon points="203.53,566.36 205.61,569.24 248.68,533.91 244.85,532.46" fill="#a39c8e" stroke="#a39c8e" stroke-width="0.6" stroke-linejoin="round"/>
<polygon points="200.60,589.13 204.02,590.61 204.02,572.72 200.60,572.75" fill="#acaca4" stroke="#acaca4" stroke-width="0.6" stroke-linejoin="round"/>
<polygon points="200.60,572.75 204.02,572.72 204.10,571.98 200.75,571.40" fill="#a8a296" stroke="#a8a296" stroke-width="0.6" stroke-linejoin="round"/>
<polygon points="200.75,571.40 204.10,571.98 204.32,571.19 201.16,569.95" fill="#aba599" stroke="#aba599" stroke-width="0.6" stroke-linejoin="round"/>
<polygon points="201.16,569.95 204.32,571.19 204.68,570.42 201.81,568.53" fill="#ada79a" stroke="#ada79a" stroke-width="0.6" stroke-linejoin="round"/>
<polygon points="201.81,568.53 204.68,570.42 205.12,569.75 202.62,567.30" fill="#b1aa9c" stroke="#b1aa9c" stroke-width="0.6" stroke-linejoin="round"/>
<polygon points="202.62,567.30 205.12,569.75 205.61,569.24 203.53,566.36" fill="#aba495" stroke="#aba495" stroke-width="0.6" stroke-linejoin="round"/>
<polygon points="205.61,569.24 208.00,571.96 252.51,535.44 248.68,533.91" fill="#a29b8d" stroke="#a29b8d" stroke-width="0.6" stroke-linejoin="round"/>
<polygon points="204.02,590.61 207.44,592.09 207.44,573.19 204.02,572.72" fill="#acaca4" stroke="#acaca4" stroke-width="0.6" stroke-linejoin="round"/>
<polygon points="204.02,572.72 207.44,573.19 207.46,572.93 204.10,571.98" fill="#a29b8d" stroke="#a29b8d" stroke-width="0.6" stroke-linejoin="round"/>
<polygon points="204.10,571.98 207.46,572.93 207.54,572.65 204.32,571.19" fill="#a29b8d" stroke="#a29b8d" stroke-width="0.6" stroke-linejoin="round"/>
<polygon points="204.32,571.19 207.54,572.65 207.67,572.38 204.68,570.42" fill="#a29b8d" stroke="#a29b8d" stroke-width="0.6" stroke-linejoin="round"/>
<polygon points="204.68,570.42 207.67,572.38 207.82,572.14 205.12,569.75" fill="#a39c8e" stroke="#a39c8e" stroke-width="0.6" stroke-linejoin="round"/>
<polygon points="205.12,569.75 207.82,572.14 208.00,571.96 205.61,569.24" fill="#a29b8d" stroke="#a29b8d" stroke-width="0.6" stroke-linejoin="round"/>
<polygon points="208.00,571.96 210.87,574.37 256.34,537.07 252.51,535.44" fill="#a29b8d" stroke="#a29b8d" stroke-width="0.6" stroke-linejoin="round"/>
<polygon points="207.44,592.09 210.85,593.57 210.85,574.41 207.44,573.19" fill="#acaca4" stroke="#acaca4" stroke-width="0.6" stroke-linejoin="round"/>
<polygon points="207.44,573.19 210.85,574.41 210.85,574.40 207.46,572.93" fill="#a19a8c" stroke="#a19a8c" stroke-width="0.6" stroke-linejoin="round"/>
<polygon points="207.46,572.93 210.85,574.40 210.86,574.39 207.54,572.65" fill="#a19a8c" stroke="#a19a8c" stroke-width="0.6" stroke-linejoin="round"/>
<polygon points="207.54,572.65 210.86,574.39 210.86,574.38 207.67,572.38" fill="#a19a8c" stroke="#a19a8c" stroke-width="0.6" stroke-linejoin="round"/>
<polygon points="207.67,572.38 210.86,574.38 210.86,574.37 207.82,572.14" fill="#a19a8c" stroke="#a19a8c" stroke-width="0.6" stroke-linejoin="round"/>
<polygon points="207.82,572.14 210.86,574.37 210.87,574.37 208.00,571.96" fill="#a19a8c" stroke="#a19a8c" stroke-width="0.6" stroke-linejoin="round"/>
<path d="M235.09,527.22 L238.63,528.64 L242.17,530.15 L245.71,531.75 L249.26,533.43 L252.80,535.20 L256.34,537.07" fill="none" stroke="#17150f" stroke-width="1.6"/>
<path d="M210.85,574.38 L256.34,537.07" fill="none" stroke="#17150f" stroke-width="1.2"/>
<path d="M198.62,557.14 L200.06,560.29 L201.69,563.37 L203.53,566.36 L205.61,569.24 L208.00,571.96 L210.87,574.37" fill="none" stroke="#17150f" stroke-width="1.1"/>
<path d="M190.35,575.21 L193.77,574.04 L197.18,573.20 L200.60,572.75 L204.02,572.72 L207.44,573.19 L210.85,574.41" fill="none" stroke="#17150f" stroke-width="1.1"/>
<path d="M190.35,584.69 L210.85,593.57" fill="none" stroke="#17150f" stroke-width="1.5"/>
<g clip-path="url(#cbr)">
<polygon points="456.88,700.06 503.58,720.27 503.58,710.79 456.88,690.58" fill="#b7b6ae" stroke="#b7b6ae" stroke-width="0.6" stroke-linejoin="round"/>
<polygon points="456.88,690.58 503.58,710.79 503.73,708.46 457.04,688.24" fill="#b6b5ad" stroke="#b6b5ad" stroke-width="0.6" stroke-linejoin="round"/>
<polygon points="457.04,688.24 503.73,708.46 504.21,705.95 457.51,685.74" fill="#cbcac3" stroke="#cbcac3" stroke-width="0.6" stroke-linejoin="round"/>
<polygon points="457.51,685.74 504.21,705.95 504.97,703.38 458.27,683.16" fill="#c9c7bf" stroke="#c9c7bf" stroke-width="0.6" stroke-linejoin="round"/>
<polygon points="458.27,683.16 504.97,703.38 506.00,700.82 459.30,680.61" fill="#c4c1b8" stroke="#c4c1b8" stroke-width="0.6" stroke-linejoin="round"/>
<polygon points="459.30,680.61 506.00,700.82 507.25,698.39 460.55,678.18" fill="#e1dcd0" stroke="#e1dcd0" stroke-width="0.6" stroke-linejoin="round"/>
<polygon points="460.55,678.18 507.25,698.39 508.68,696.17 461.98,675.96" fill="#e3dcce" stroke="#e3dcce" stroke-width="0.6" stroke-linejoin="round"/>
<polygon points="461.98,675.96 508.68,696.17 510.23,694.26 463.53,674.05" fill="#d9d1c1" stroke="#d9d1c1" stroke-width="0.6" stroke-linejoin="round"/>
<polygon points="463.53,674.05 510.23,694.26 511.85,692.72 465.15,672.51" fill="#c2baab" stroke="#c2baab" stroke-width="0.6" stroke-linejoin="round"/>
<polygon points="465.15,672.51 511.85,692.72 552.37,659.47 505.67,639.26" fill="#a39c8e" stroke="#a39c8e" stroke-width="0.6" stroke-linejoin="round"/>
<polygon points="505.67,639.26 552.37,659.47 554.03,658.98 507.33,638.77" fill="#e0e5e5" stroke="#e0e5e5" stroke-width="0.6" stroke-linejoin="round"/>
<path d="M456.88,700.06 L503.58,720.27" fill="none" stroke="#17150f" stroke-width="1.5" stroke-linejoin="round" stroke-linecap="round"/>
<path d="M456.88,690.58 L503.58,710.79" fill="none" stroke="#17150f" stroke-width="1.1" stroke-linejoin="round" stroke-linecap="round"/>
<path d="M465.15,672.51 L511.85,692.72" fill="none" stroke="#17150f" stroke-width="1.1" stroke-linejoin="round" stroke-linecap="round"/>
<path d="M505.67,639.26 L552.37,659.47" fill="none" stroke="#17150f" stroke-width="1.1" stroke-linejoin="round" stroke-linecap="round"/>
<path d="M507.33,638.77 L554.03,658.98" fill="none" stroke="#c4c9c9" stroke-width="0.6" stroke-linejoin="round" stroke-linecap="round"/>
<path d="M456.88,700.06 L456.88,690.58 L457.04,688.24 L457.51,685.74 L458.27,683.16 L459.30,680.61 L460.55,678.18 L461.98,675.96 L463.53,674.05 L465.15,672.51 L505.67,639.26" fill="none" stroke="#17150f" stroke-width="1.5" stroke-linejoin="round" stroke-linecap="round"/>
<polygon points="508.54,722.97 506.64,724.01 505.03,723.86 503.95,722.55 503.58,720.27 503.58,710.79 503.73,708.46 504.21,705.95 504.97,703.38 506.00,700.82 507.25,698.39 508.68,696.17 510.23,694.26 511.85,692.72 552.37,659.47 553.01,659.06 553.61,658.91 554.12,659.02 554.52,659.40 554.77,660.02 554.85,660.82 554.85,684.97" fill="#8b8476" stroke="#17150f" stroke-width="1.4" stroke-linejoin="round"/>
<polygon points="456.88,700.06 503.58,720.27 504.07,723.02 457.37,702.81" fill="#7d786b" stroke="#17150f" stroke-width="0.9" stroke-linejoin="round"/>
</g>
<path d="M466.83,695.54 L523.89,648.73" fill="none" stroke="#17150f" stroke-width="1.2" stroke-linejoin="round" stroke-linecap="round"/>
<path d="M486.79,681.87 L527.31,648.63" fill="none" stroke="#17150f" stroke-width="1.0" stroke-linejoin="round" stroke-linecap="round"/>
</svg>
</body></html>
